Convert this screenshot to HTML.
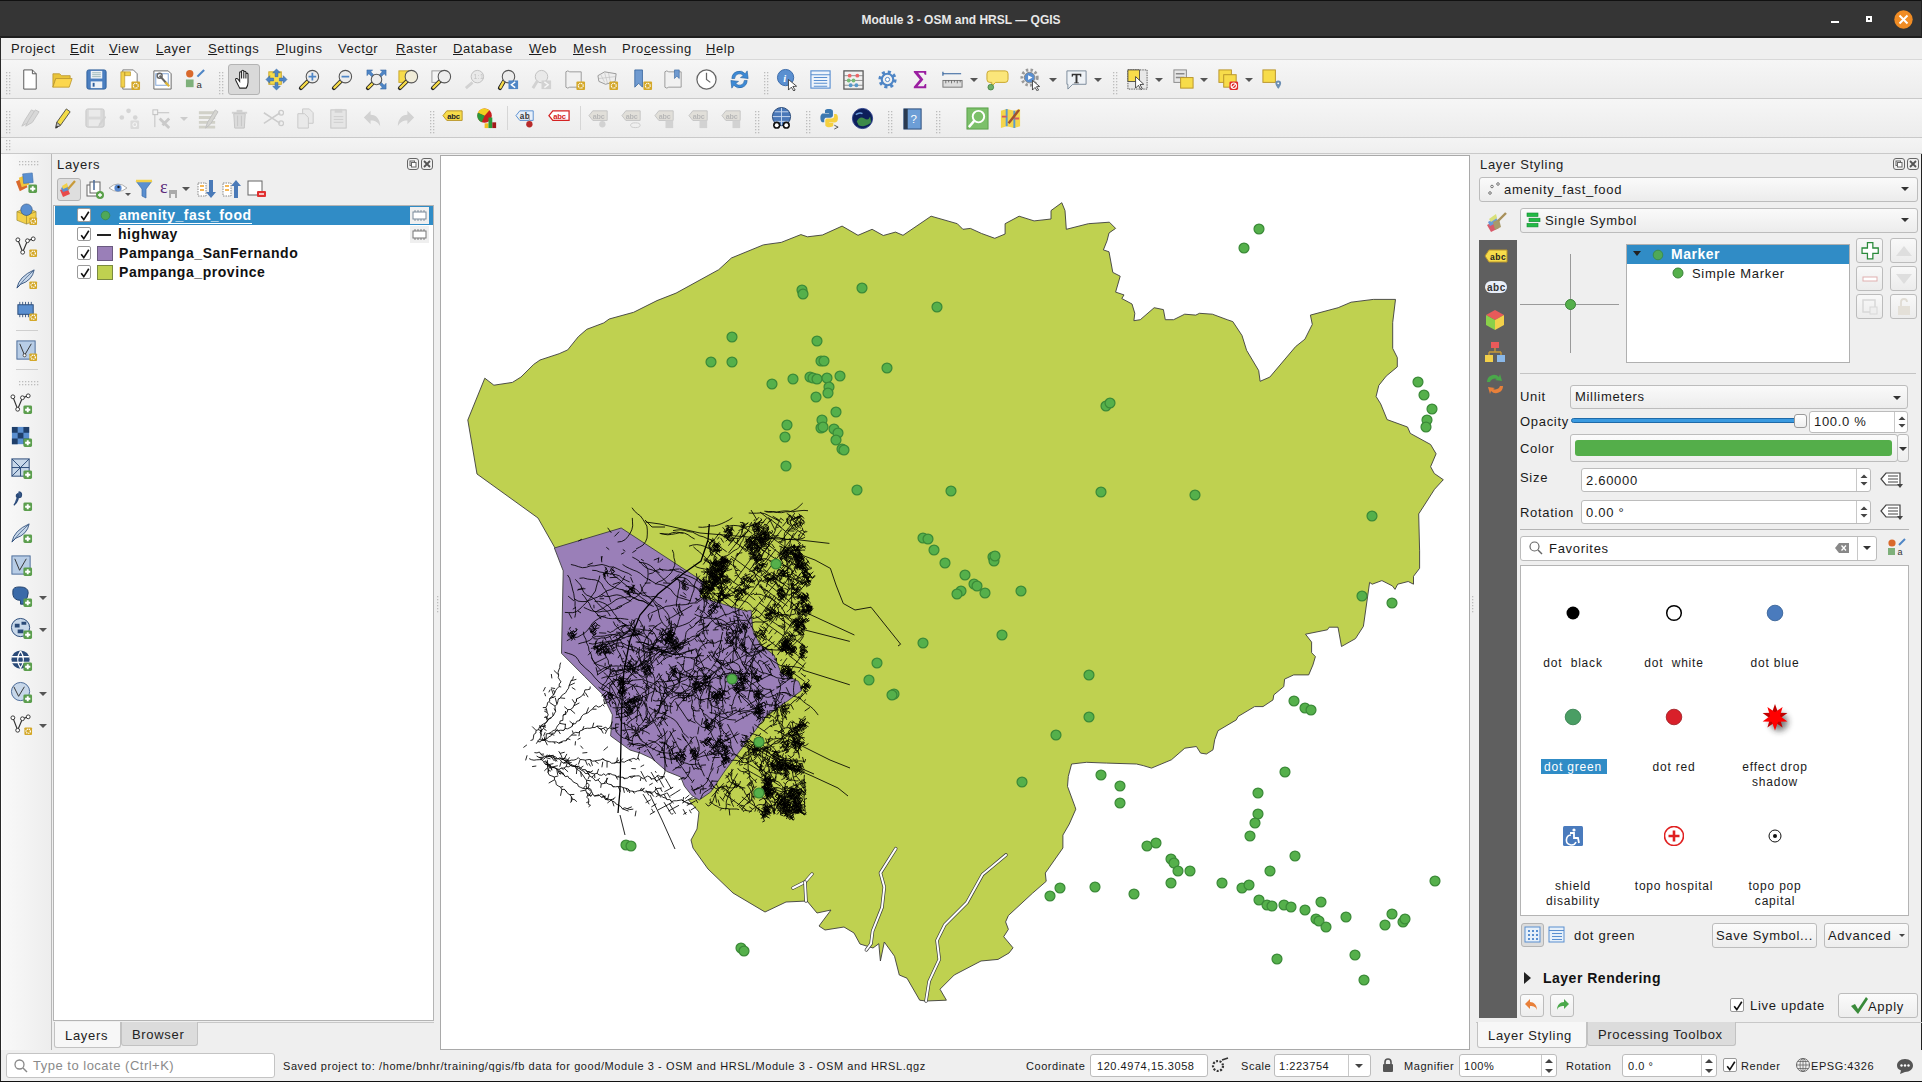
<!DOCTYPE html><html><head><meta charset="utf-8"><style>
*{box-sizing:border-box}
html,body{margin:0;padding:0}
body{width:1922px;height:1082px;position:relative;overflow:hidden;background:#efefef;font-family:"Liberation Sans",sans-serif;color:#1a1a1a;font-size:13px;letter-spacing:0.5px}
.a{position:absolute}
.t{position:absolute;white-space:pre;line-height:1}
#title{left:0;top:0;width:1922px;height:38px;background:#353535}
#title .tt{left:0;width:1922px;top:12px;text-align:center;color:#e6e6e6;font-weight:bold;font-size:13px;letter-spacing:0.3px}
#menubar{left:1px;top:38px;width:1921px;height:22px;background:#efefef;border-bottom:1px solid #d8d8d8}
.menu{top:7px;font-size:13px;color:#1c1c1c}
.menu u{text-decoration:none;border-bottom:1px solid #1c1c1c;padding-bottom:0}
.tb{left:1px;width:1921px;background:linear-gradient(#f6f6f6,#ececec);border-bottom:1px solid #c9c9c9}
.grip{width:6px;background-image:radial-gradient(circle at 1.2px 1.2px,#b4b4b4 0.9px,transparent 1.1px);background-size:3.5px 3px}
.btnp{background:#d9d9d9;border:1px solid #b4b4b4;border-radius:3px}
.panel-title{font-size:13px;color:#222}
.white{background:#fff;border:1px solid #b9b9b9}
.combo{background:linear-gradient(#fafafa,#ececec);border:1px solid #bcbcbc;border-radius:3px}
.spin{background:#fff;border:1px solid #bcbcbc;border-radius:3px}
.arrow{width:0;height:0;border-left:4px solid transparent;border-right:4px solid transparent;border-top:4px solid #3a3a3a}
.btn{background:linear-gradient(#fbfbfb,#ededed);border:1px solid #bcbcbc;border-radius:3px}
.chk{width:14px;height:14px;background:#fff;border:1px solid #9a9a9a;border-radius:2px}
.chk svg{position:absolute;left:1px;top:0px}
.tab{border:1px solid #c2c2c2;border-bottom:none;border-radius:3px 3px 0 0}
.st{font-size:11px;color:#1a1a1a;letter-spacing:0.55px}
</style></head><body><div class="a" id="title"></div><div class="t" style="left:0px;top:13.8px;font-size:12px;color:#e8e8e8;font-weight:bold;letter-spacing:0px;width:1922px;text-align:center;left:0;">Module 3 - OSM and HRSL — QGIS</div><div class="a " style="left:1831px;top:21px;width:8px;height:2px;background:#fff"></div><div class="a " style="left:1866px;top:16px;width:6px;height:6px;border:2px solid #fff"></div><svg class="a" style="left:1894px;top:10px;" width="19" height="19" viewBox="0 0 19 19"><circle cx="9.5" cy="9.5" r="9.2" fill="#f08c24"/><path d="M5.5 5.5 L13.5 13.5 M13.5 5.5 L5.5 13.5" stroke="#fff" stroke-width="2"/></svg><div class="a " style="left:0px;top:0px;width:1922px;height:1px;background:#111"></div><div class="a " style="left:0px;top:36px;width:1922px;height:2px;background:#1e1e1e"></div><div class="a " style="left:1921px;top:0px;width:1px;height:1082px;background:#222"></div><div class="a " style="left:0px;top:37px;width:1px;height:1045px;background:#2a2a2a"></div><div class="a " style="left:0px;top:1081px;width:1922px;height:1px;background:#111"></div><div class="a" id="menubar"></div><div class="t" style="left:11px;top:42.0px;font-size:13px;color:#1c1c1c;letter-spacing:0.55px;">Pro<u>j</u>ect</div><div class="t" style="left:70px;top:42.0px;font-size:13px;color:#1c1c1c;letter-spacing:0.55px;"><u>E</u>dit</div><div class="t" style="left:109px;top:42.0px;font-size:13px;color:#1c1c1c;letter-spacing:0.55px;"><u>V</u>iew</div><div class="t" style="left:156px;top:42.0px;font-size:13px;color:#1c1c1c;letter-spacing:0.55px;"><u>L</u>ayer</div><div class="t" style="left:208px;top:42.0px;font-size:13px;color:#1c1c1c;letter-spacing:0.55px;"><u>S</u>ettings</div><div class="t" style="left:276px;top:42.0px;font-size:13px;color:#1c1c1c;letter-spacing:0.55px;"><u>P</u>lugins</div><div class="t" style="left:338px;top:42.0px;font-size:13px;color:#1c1c1c;letter-spacing:0.55px;">Vect<u>o</u>r</div><div class="t" style="left:396px;top:42.0px;font-size:13px;color:#1c1c1c;letter-spacing:0.55px;"><u>R</u>aster</div><div class="t" style="left:453px;top:42.0px;font-size:13px;color:#1c1c1c;letter-spacing:0.55px;"><u>D</u>atabase</div><div class="t" style="left:529px;top:42.0px;font-size:13px;color:#1c1c1c;letter-spacing:0.55px;"><u>W</u>eb</div><div class="t" style="left:573px;top:42.0px;font-size:13px;color:#1c1c1c;letter-spacing:0.55px;"><u>M</u>esh</div><div class="t" style="left:622px;top:42.0px;font-size:13px;color:#1c1c1c;letter-spacing:0.55px;">Pro<u>c</u>essing</div><div class="t" style="left:706px;top:42.0px;font-size:13px;color:#1c1c1c;letter-spacing:0.55px;"><u>H</u>elp</div><div class="a tb" style="left:1px;top:60px;width:1921px;height:39px;"></div><div class="a tb" style="left:1px;top:99px;width:1921px;height:39px;"></div><div class="a tb" style="left:1px;top:138px;width:1921px;height:16px;background:linear-gradient(#f4f4f4,#efefef)"></div><svg class="a" style="left:6px;top:72px" width="6" height="24" fill="#bdbdbd"><rect x="0" y="0" width="1.3" height="1.3"/><rect x="3" y="0" width="1.3" height="1.3"/><rect x="0" y="3" width="1.3" height="1.3"/><rect x="3" y="3" width="1.3" height="1.3"/><rect x="0" y="6" width="1.3" height="1.3"/><rect x="3" y="6" width="1.3" height="1.3"/><rect x="0" y="9" width="1.3" height="1.3"/><rect x="3" y="9" width="1.3" height="1.3"/><rect x="0" y="12" width="1.3" height="1.3"/><rect x="3" y="12" width="1.3" height="1.3"/><rect x="0" y="15" width="1.3" height="1.3"/><rect x="3" y="15" width="1.3" height="1.3"/><rect x="0" y="18" width="1.3" height="1.3"/><rect x="3" y="18" width="1.3" height="1.3"/><rect x="0" y="21" width="1.3" height="1.3"/><rect x="3" y="21" width="1.3" height="1.3"/></svg><svg class="a" style="left:6px;top:111px" width="6" height="24" fill="#bdbdbd"><rect x="0" y="0" width="1.3" height="1.3"/><rect x="3" y="0" width="1.3" height="1.3"/><rect x="0" y="3" width="1.3" height="1.3"/><rect x="3" y="3" width="1.3" height="1.3"/><rect x="0" y="6" width="1.3" height="1.3"/><rect x="3" y="6" width="1.3" height="1.3"/><rect x="0" y="9" width="1.3" height="1.3"/><rect x="3" y="9" width="1.3" height="1.3"/><rect x="0" y="12" width="1.3" height="1.3"/><rect x="3" y="12" width="1.3" height="1.3"/><rect x="0" y="15" width="1.3" height="1.3"/><rect x="3" y="15" width="1.3" height="1.3"/><rect x="0" y="18" width="1.3" height="1.3"/><rect x="3" y="18" width="1.3" height="1.3"/><rect x="0" y="21" width="1.3" height="1.3"/><rect x="3" y="21" width="1.3" height="1.3"/></svg><svg class="a" style="left:6px;top:140px" width="6" height="13" fill="#bdbdbd"><rect x="0" y="0" width="1.3" height="1.3"/><rect x="3" y="0" width="1.3" height="1.3"/><rect x="0" y="3" width="1.3" height="1.3"/><rect x="3" y="3" width="1.3" height="1.3"/><rect x="0" y="6" width="1.3" height="1.3"/><rect x="3" y="6" width="1.3" height="1.3"/><rect x="0" y="9" width="1.3" height="1.3"/><rect x="3" y="9" width="1.3" height="1.3"/></svg><div class="a btnp" style="left:228px;top:64px;width:32px;height:31px;"></div><svg class="a" style="left:17.5px;top:67.5px;" width="23" height="23" viewBox="0 0 24 24"><path d="M6 2h9l4 4v16H6z" fill="#fff" stroke="#555" stroke-width="1"/><path d="M15 2v4h4" fill="none" stroke="#555"/></svg><svg class="a" style="left:50.5px;top:67.5px;" width="23" height="23" viewBox="0 0 24 24"><path d="M2 6h7l2 2h9v3H5L2 20z" fill="#e9c43a" stroke="#b8942a" stroke-width="0.8"/><path d="M5 11h17l-3 9H2z" fill="#fcd74e" stroke="#b8942a" stroke-width="0.8"/></svg><svg class="a" style="left:84.5px;top:67.5px;" width="23" height="23" viewBox="0 0 24 24"><rect x="2" y="2" width="20" height="20" rx="2" fill="#4b7fc0" stroke="#2e5f9c"/><rect x="6" y="3" width="12" height="8" fill="#eef2f7"/><path d="M7.5 5h9M7.5 7h9M7.5 9h9" stroke="#8aa" stroke-width="0.8"/><rect x="6" y="14" width="12" height="7" fill="#eef2f7"/><rect x="8" y="15.5" width="2" height="4" fill="#2e5f9c"/></svg><svg class="a" style="left:117.5px;top:67.5px;" width="23" height="23" viewBox="0 0 24 24"><path d="M5 2h11l4 4v16H5z" fill="#fff" stroke="#777"/><path d="M3 4h4v16H3zM7 4h6v4H7z" fill="#f2d14a" stroke="#b8942a" stroke-width="0.7"/><rect x="14" y="14" width="9" height="9" rx="1" fill="#d4a829"/><circle cx="18.5" cy="18.5" r="2.5200000000000005" fill="none" stroke="#fff" stroke-width="1.3" stroke-dasharray="1.2 0.8"/></svg><svg class="a" style="left:150.5px;top:67.5px;" width="23" height="23" viewBox="0 0 24 24"><path d="M3 3h15l3 3v16H3z" fill="#fff" stroke="#666"/><rect x="5" y="6" width="13" height="12" fill="none" stroke="#7fa4d6"/><path d="M9 8 L17 17" stroke="#666" stroke-width="2.2"/><circle cx="9" cy="8" r="2.6" fill="none" stroke="#666" stroke-width="1.5"/><path d="M15 15l4 4" stroke="#e0b83a" stroke-width="2.4"/></svg><svg class="a" style="left:183.5px;top:67.5px;" width="23" height="23" viewBox="0 0 24 24"><circle cx="6" cy="6" r="3.8" fill="#d9692c"/><path d="M14 9 L21 2" stroke="#4f86c6" stroke-width="2.2"/><rect x="2" y="12" width="8" height="8" fill="#7eb07a"/><text x="13" y="21" font-size="10" font-family="Liberation Sans" fill="#333">a</text></svg><svg class="a" style="left:231.5px;top:67.5px;" width="23" height="23" viewBox="0 0 24 24"><path d="M8 21 L4 13 C3 11 5 10 6.5 12 L8 14 V5 C8 3.5 10 3.5 10 5 V11 V3.5 C10 2 12.3 2 12.3 3.5 V11 V4.5 C12.3 3 14.5 3 14.5 4.5 V11 V6.5 C14.5 5 16.7 5 16.7 6.5 V15 C16.7 18 15.5 20 14.8 21 Z" fill="#fff" stroke="#222" stroke-width="1.1"/></svg><svg class="a" style="left:264.5px;top:67.5px;" width="23" height="23" viewBox="0 0 24 24"><rect x="4" y="4" width="13" height="13" fill="#f7dc4a" stroke="#c8a52a"/><path d="M12 1l4 4h-2.5v4h-3V5H8zM12 23l4-4h-2.5v-4h-3v4H8zM1 12l4-4v2.5h4v3H5V16zM23 12l-4-4v2.5h-4v3h4V16z" fill="#4f86c6" stroke="#2f5f9a" stroke-width="0.5"/></svg><svg class="a" style="left:297.5px;top:67.5px;" width="23" height="23" viewBox="0 0 24 24"><path d="M10.45 13.55 L3 21" stroke="#222" stroke-width="4.2" stroke-linecap="round"/><path d="M9.8 14.2 L3.5 20.5" stroke="#f7dc4a" stroke-width="2.4" stroke-linecap="round"/><circle cx="15" cy="9" r="6.5" fill="#ececec" stroke="#555" stroke-width="1.1"/><path d="M11 9h8M15 5v8" stroke="#4f86c6" stroke-width="1.8"/></svg><svg class="a" style="left:330.5px;top:67.5px;" width="23" height="23" viewBox="0 0 24 24"><path d="M10.45 13.55 L3 21" stroke="#222" stroke-width="4.2" stroke-linecap="round"/><path d="M9.8 14.2 L3.5 20.5" stroke="#f7dc4a" stroke-width="2.4" stroke-linecap="round"/><circle cx="15" cy="9" r="6.5" fill="#ececec" stroke="#555" stroke-width="1.1"/><path d="M11 9h8" stroke="#4f86c6" stroke-width="1.8"/></svg><svg class="a" style="left:364.5px;top:67.5px;" width="23" height="23" viewBox="0 0 24 24"><path d="M2 2h6l-2 2 3 3-2 2-3-3-2 2zM22 2v6l-2-2-3 3-2-2 3-3-2-2zM22 22h-6l2-2-3-3 2-2 3 3 2-2z" fill="#4f86c6" stroke="#2f5f9a" stroke-width="0.5"/><path d="M8.15 15.85 L3 21" stroke="#222" stroke-width="4.2" stroke-linecap="round"/><path d="M7.6 16.4 L3.5 20.5" stroke="#f7dc4a" stroke-width="2.4" stroke-linecap="round"/><circle cx="12" cy="12" r="5.5" fill="#ececec" stroke="#555" stroke-width="1.1"/></svg><svg class="a" style="left:396.5px;top:67.5px;" width="23" height="23" viewBox="0 0 24 24"><rect x="2" y="3" width="10" height="12" fill="#f7dc4a" stroke="#c8a52a"/><path d="M10.45 13.55 L3 21" stroke="#222" stroke-width="4.2" stroke-linecap="round"/><path d="M9.8 14.2 L3.5 20.5" stroke="#f7dc4a" stroke-width="2.4" stroke-linecap="round"/><circle cx="15" cy="9" r="6.5" fill="#f0ecd8" stroke="#555" stroke-width="1.1"/></svg><svg class="a" style="left:429.5px;top:67.5px;" width="23" height="23" viewBox="0 0 24 24"><rect x="2" y="3" width="10" height="12" fill="#f4f4f4" stroke="#999"/><path d="M10.45 13.55 L3 21" stroke="#222" stroke-width="4.2" stroke-linecap="round"/><path d="M9.8 14.2 L3.5 20.5" stroke="#f7dc4a" stroke-width="2.4" stroke-linecap="round"/><circle cx="15" cy="9" r="6.5" fill="#eee" stroke="#555" stroke-width="1.1"/></svg><svg class="a" style="left:462.5px;top:67.5px;filter:brightness(0.9) contrast(1.15);" width="23" height="23" viewBox="0 0 24 24"><circle cx="15" cy="9" r="6.5" fill="#f4f4f4" stroke="#ccc"/><path d="M10 15L3 21" stroke="#ddd" stroke-width="3"/><text x="11" y="12" font-size="7" fill="#ccc" font-family="Liberation Sans">1:1</text></svg><svg class="a" style="left:496.5px;top:67.5px;" width="23" height="23" viewBox="0 0 24 24"><path d="M7.45 13.55 L3 21" stroke="#222" stroke-width="4.2" stroke-linecap="round"/><path d="M6.8 14.2 L3.5 20.5" stroke="#f7dc4a" stroke-width="2.4" stroke-linecap="round"/><circle cx="12" cy="9" r="6.5" fill="#ececec" stroke="#555" stroke-width="1.1"/><rect x="12" y="13" width="10" height="9" fill="#4f86c6"/><path d="M19 14.5 L15 17.5 L19 20.5" fill="none" stroke="#fff" stroke-width="1.5"/></svg><svg class="a" style="left:529.5px;top:67.5px;filter:brightness(0.9) contrast(1.15);" width="23" height="23" viewBox="0 0 24 24"><circle cx="12" cy="9" r="6.5" fill="#f4f4f4" stroke="#ccc"/><path d="M8 13L3 21" stroke="#ddd" stroke-width="3"/><rect x="12" y="13" width="10" height="9" fill="#ddd"/><path d="M15 14.5 L19 17.5 L15 20.5" fill="none" stroke="#fff" stroke-width="1.5"/></svg><svg class="a" style="left:562.5px;top:67.5px;" width="23" height="23" viewBox="0 0 24 24"><path d="M3 4 Q5 2 7 4 H19 V20 H7 Q5 22 3 20z" fill="#f1f1f1" stroke="#999"/><rect x="14" y="14" width="9" height="9" rx="1" fill="#d4a829"/><circle cx="18.5" cy="18.5" r="2.5200000000000005" fill="none" stroke="#fff" stroke-width="1.3" stroke-dasharray="1.2 0.8"/></svg><svg class="a" style="left:595.5px;top:67.5px;" width="23" height="23" viewBox="0 0 24 24"><path d="M2 8 L9 4 L21 6 L20 14 L10 17 L3 14z" fill="#eee" stroke="#999"/><path d="M5 7l4 8M9 5l3 11M13 5l2 10M3 11l17-2" stroke="#bbb" stroke-width="0.6"/><rect x="14" y="14" width="9" height="9" rx="1" fill="#d4a829"/><circle cx="18.5" cy="18.5" r="2.5200000000000005" fill="none" stroke="#fff" stroke-width="1.3" stroke-dasharray="1.2 0.8"/></svg><svg class="a" style="left:629.5px;top:67.5px;" width="23" height="23" viewBox="0 0 24 24"><path d="M5 2h8v18l-4-4-4 4z" fill="#6f9ad0" stroke="#2f5f9a" stroke-width="0.8"/><rect x="14" y="14" width="9" height="9" rx="1" fill="#d4a829"/><circle cx="18.5" cy="18.5" r="2.5200000000000005" fill="none" stroke="#fff" stroke-width="1.3" stroke-dasharray="1.2 0.8"/></svg><svg class="a" style="left:661.5px;top:67.5px;" width="23" height="23" viewBox="0 0 24 24"><path d="M3 4 Q5 2 7 4 H20 V20 H7 Q5 22 3 20z" fill="#f1f1f1" stroke="#999"/><path d="M13 2h5v9l-2.5-2.5L13 11z" fill="#6f9ad0" stroke="#2f5f9a" stroke-width="0.6"/></svg><svg class="a" style="left:694.5px;top:67.5px;" width="23" height="23" viewBox="0 0 24 24"><circle cx="12" cy="12" r="10" fill="#fff" stroke="#666" stroke-width="1.3"/><path d="M12 5v7l4 3" fill="none" stroke="#666" stroke-width="1.3"/></svg><svg class="a" style="left:727.5px;top:67.5px;" width="23" height="23" viewBox="0 0 24 24"><path d="M4 11 A8 8 0 0 1 18 6 L20 3 L21 11 L13 10 L16 8 A5 5 0 0 0 7 11z" fill="#3d8ad6" stroke="#1f5c9c" stroke-width="0.6"/><path d="M20 13 A8 8 0 0 1 6 18 L4 21 L3 13 L11 14 L8 16 A5 5 0 0 0 17 13z" fill="#3d8ad6" stroke="#1f5c9c" stroke-width="0.6"/></svg><svg class="a" style="left:775.5px;top:67.5px;" width="23" height="23" viewBox="0 0 24 24"><circle cx="10" cy="10" r="8.5" fill="#5a8fd0" stroke="#3a6aa8"/><text x="7.5" y="15" font-size="11" font-style="italic" font-weight="bold" fill="#fff" font-family="Liberation Serif">i</text><path d="M13 12 L13 23 L16 20 L18.5 24 L20 23 L17.6 19.3 L21.5 19z" fill="#fff" stroke="#333" stroke-width="0.9"/></svg><svg class="a" style="left:808.5px;top:67.5px;" width="23" height="23" viewBox="0 0 24 24"><rect x="2" y="3" width="20" height="18" fill="#eef4fb" stroke="#5a8fd0" stroke-width="1.2"/><path d="M2 7h20M5 10h14M5 13h14M5 16h14M5 19h14" stroke="#5a8fd0" stroke-width="1.1"/></svg><svg class="a" style="left:841.5px;top:67.5px;" width="23" height="23" viewBox="0 0 24 24"><rect x="2" y="3" width="20" height="19" fill="none" stroke="#555" stroke-width="1.3"/><path d="M2 8h20M2 13h20M2 18h20" stroke="#777" stroke-width="0.8"/><circle cx="8" cy="8" r="2" fill="#e66" /><circle cx="16" cy="8" r="2" fill="#e66"/><circle cx="7" cy="13" r="2" fill="#7b7"/><circle cx="12" cy="13" r="2" fill="#7b7"/><circle cx="9" cy="18" r="2" fill="#59c"/><circle cx="15" cy="18" r="2" fill="#59c"/></svg><svg class="a" style="left:875.5px;top:67.5px;" width="23" height="23" viewBox="0 0 24 24"><circle cx="12" cy="12" r="7.5" fill="none" stroke="#4f86c6" stroke-width="4" stroke-dasharray="3 2.9"/><circle cx="12" cy="12" r="6" fill="none" stroke="#4f86c6" stroke-width="2.2"/><circle cx="12" cy="12" r="2.2" fill="#fff" stroke="#4f86c6"/></svg><svg class="a" style="left:908.5px;top:67.5px;" width="23" height="23" viewBox="0 0 24 24"><path d="M5 3h13v4h-1.5l-1-2H9.5l5.5 7-6 7h6.5l1.2-2.2H18V21H5v-1.5l6.3-7.5L5 4.5z" fill="#9b1fa1"/></svg><svg class="a" style="left:940.5px;top:67.5px;" width="23" height="23" viewBox="0 0 24 24"><path d="M2 6h19M2 4v4" stroke="#2f5f9a" stroke-width="1.2"/><rect x="2" y="13" width="20" height="7" fill="#ddd" stroke="#777"/><path d="M5 13v3M8 13v2M11 13v3M14 13v2M17 13v3M20 13v2" stroke="#555" stroke-width="0.8"/></svg><svg class="a" style="left:985.5px;top:67.5px;" width="23" height="23" viewBox="0 0 24 24"><path d="M4 3h16a3 3 0 0 1 3 3v6a3 3 0 0 1-3 3H10l-4 4v-4H4a3 3 0 0 1-3-3V6a3 3 0 0 1 3-3z" fill="#fbe67a" stroke="#c8a52a"/><circle cx="5" cy="20" r="3" fill="#6fae6a" stroke="#3a7a3a" stroke-width="0.7"/></svg><svg class="a" style="left:1019.5px;top:67.5px;" width="23" height="23" viewBox="0 0 24 24"><circle cx="10" cy="10" r="8" fill="none" stroke="#999" stroke-width="3" stroke-dasharray="2.5 2.3"/><circle cx="10" cy="10" r="5.5" fill="#5a8fd0" stroke="#888"/><path d="M8.5 7.5 L13 10 L8.5 12.5z" fill="#fff"/><path d="M13 13 L13 23 L15.7 20.3 L18 24 L19.4 23 L17.2 19.5 L20.5 19.3z" fill="#fff" stroke="#333" stroke-width="0.9"/></svg><svg class="a" style="left:1064.5px;top:67.5px;" width="23" height="23" viewBox="0 0 24 24"><path d="M2 3h20v14H8l-5 5v-5H2z" fill="#eef2f6" stroke="#7a8a9a"/><path d="M7 6h10v3h-1l-.5-1.5h-2.5v7.5h1.5v1H9.5v-1H11V7.5H8.5L8 9H7z" fill="#333"/></svg><svg class="a" style="left:1125.5px;top:67.5px;" width="23" height="23" viewBox="0 0 24 24"><rect x="2" y="2" width="20" height="20" fill="#e8e8e8" stroke="#333" stroke-width="0.8" stroke-dasharray="1.5 1"/><rect x="2" y="2" width="12" height="12" fill="#f7dc4a" stroke="#333" stroke-width="0.8"/><path d="M10 9 L10 21 L13 18 L15.5 22.5 L17 21.6 L14.6 17.3 L18.5 17z" fill="#fff" stroke="#333" stroke-width="0.9"/></svg><svg class="a" style="left:1171.5px;top:67.5px;" width="23" height="23" viewBox="0 0 24 24"><rect x="2" y="2" width="13" height="13" fill="#e6e6e6" stroke="#888"/><path d="M4 6h9M4 10h9" stroke="#888" stroke-width="1.6"/><rect x="9" y="10" width="13" height="11" fill="#f7dc4a" stroke="#b8942a"/></svg><svg class="a" style="left:1216.5px;top:67.5px;" width="23" height="23" viewBox="0 0 24 24"><rect x="2" y="2" width="13" height="13" fill="#f7dc4a" stroke="#b8942a"/><rect x="7" y="7" width="13" height="13" fill="#f7dc4a" stroke="#b8942a"/><rect x="13" y="14" width="9" height="9" rx="1.5" fill="#e02a2a"/><circle cx="17.5" cy="18.5" r="2.8" fill="none" stroke="#fff" stroke-width="1.1"/><path d="M15.5 20.5l4-4" stroke="#fff" stroke-width="1.1"/></svg><svg class="a" style="left:1260.5px;top:67.5px;" width="23" height="23" viewBox="0 0 24 24"><rect x="2" y="2" width="13" height="13" fill="#f7dc4a" stroke="#b8942a"/><path d="M18 13a3 3 0 0 1 3 3c0 2-3 6-3 6s-3-4-3-6a3 3 0 0 1 3-3z" fill="#6d8fb3"/><circle cx="18" cy="16" r="1" fill="#fff"/></svg><svg class="a" style="left:219px;top:72px" width="6" height="24" fill="#bdbdbd"><rect x="0" y="0" width="1.3" height="1.3"/><rect x="3" y="0" width="1.3" height="1.3"/><rect x="0" y="3" width="1.3" height="1.3"/><rect x="3" y="3" width="1.3" height="1.3"/><rect x="0" y="6" width="1.3" height="1.3"/><rect x="3" y="6" width="1.3" height="1.3"/><rect x="0" y="9" width="1.3" height="1.3"/><rect x="3" y="9" width="1.3" height="1.3"/><rect x="0" y="12" width="1.3" height="1.3"/><rect x="3" y="12" width="1.3" height="1.3"/><rect x="0" y="15" width="1.3" height="1.3"/><rect x="3" y="15" width="1.3" height="1.3"/><rect x="0" y="18" width="1.3" height="1.3"/><rect x="3" y="18" width="1.3" height="1.3"/><rect x="0" y="21" width="1.3" height="1.3"/><rect x="3" y="21" width="1.3" height="1.3"/></svg><svg class="a" style="left:764px;top:72px" width="6" height="24" fill="#bdbdbd"><rect x="0" y="0" width="1.3" height="1.3"/><rect x="3" y="0" width="1.3" height="1.3"/><rect x="0" y="3" width="1.3" height="1.3"/><rect x="3" y="3" width="1.3" height="1.3"/><rect x="0" y="6" width="1.3" height="1.3"/><rect x="3" y="6" width="1.3" height="1.3"/><rect x="0" y="9" width="1.3" height="1.3"/><rect x="3" y="9" width="1.3" height="1.3"/><rect x="0" y="12" width="1.3" height="1.3"/><rect x="3" y="12" width="1.3" height="1.3"/><rect x="0" y="15" width="1.3" height="1.3"/><rect x="3" y="15" width="1.3" height="1.3"/><rect x="0" y="18" width="1.3" height="1.3"/><rect x="3" y="18" width="1.3" height="1.3"/><rect x="0" y="21" width="1.3" height="1.3"/><rect x="3" y="21" width="1.3" height="1.3"/></svg><svg class="a" style="left:1113px;top:72px" width="6" height="24" fill="#bdbdbd"><rect x="0" y="0" width="1.3" height="1.3"/><rect x="3" y="0" width="1.3" height="1.3"/><rect x="0" y="3" width="1.3" height="1.3"/><rect x="3" y="3" width="1.3" height="1.3"/><rect x="0" y="6" width="1.3" height="1.3"/><rect x="3" y="6" width="1.3" height="1.3"/><rect x="0" y="9" width="1.3" height="1.3"/><rect x="3" y="9" width="1.3" height="1.3"/><rect x="0" y="12" width="1.3" height="1.3"/><rect x="3" y="12" width="1.3" height="1.3"/><rect x="0" y="15" width="1.3" height="1.3"/><rect x="3" y="15" width="1.3" height="1.3"/><rect x="0" y="18" width="1.3" height="1.3"/><rect x="3" y="18" width="1.3" height="1.3"/><rect x="0" y="21" width="1.3" height="1.3"/><rect x="3" y="21" width="1.3" height="1.3"/></svg><div class="a" style="left:970px;top:78px;width:0;height:0;border-left:4px solid transparent;border-right:4px solid transparent;border-top:4px solid #555"></div><div class="a" style="left:1049px;top:78px;width:0;height:0;border-left:4px solid transparent;border-right:4px solid transparent;border-top:4px solid #555"></div><div class="a" style="left:1094px;top:78px;width:0;height:0;border-left:4px solid transparent;border-right:4px solid transparent;border-top:4px solid #555"></div><div class="a" style="left:1155px;top:78px;width:0;height:0;border-left:4px solid transparent;border-right:4px solid transparent;border-top:4px solid #555"></div><div class="a" style="left:1200px;top:78px;width:0;height:0;border-left:4px solid transparent;border-right:4px solid transparent;border-top:4px solid #555"></div><div class="a" style="left:1245px;top:78px;width:0;height:0;border-left:4px solid transparent;border-right:4px solid transparent;border-top:4px solid #555"></div><svg class="a" style="left:17.5px;top:106.5px;filter:brightness(0.9) contrast(1.15);" width="23" height="23" viewBox="0 0 24 24"><path d="M4 20 L7 14 L14 3 L18 5 L11 16z" fill="#e3e3e3" stroke="#d0d0d0"/><path d="M8 20 L11 14 L18 3 L22 5 L15 16z" fill="#e3e3e3" stroke="#d0d0d0"/></svg><svg class="a" style="left:50.5px;top:106.5px;" width="23" height="23" viewBox="0 0 24 24"><path d="M5 22 L6 16 L16 2 L20 5 L10 19z" fill="#f3dc46" stroke="#444" stroke-width="0.9"/><path d="M5 22 L6 16 L10 19z" fill="#bbb" stroke="#444" stroke-width="0.8"/><path d="M5 22l1-2.5 1.5 1z" fill="#222"/></svg><svg class="a" style="left:83.5px;top:106.5px;filter:brightness(0.9) contrast(1.15);" width="23" height="23" viewBox="0 0 24 24"><rect x="2" y="2" width="19" height="19" rx="2" fill="#e4e4e4" stroke="#d4d4d4"/><rect x="5" y="3" width="12" height="7" fill="#f5f5f5"/><rect x="5" y="13" width="12" height="7" fill="#f5f5f5"/><path d="M14 22 L16 17 L22 9 L23 11 L17 19z" fill="#ddd"/></svg><svg class="a" style="left:117.5px;top:106.5px;filter:brightness(0.9) contrast(1.15);" width="23" height="23" viewBox="0 0 24 24"><circle cx="11" cy="4" r="2.4" fill="#e0e0e0"/><circle cx="4" cy="11" r="2.4" fill="#e0e0e0"/><circle cx="18" cy="11" r="2.4" fill="#e0e0e0"/><rect x="13" y="14" width="9" height="9" rx="1" fill="#e6e6e6"/><circle cx="17.5" cy="18.5" r="2" fill="none" stroke="#fff" stroke-width="1.1"/></svg><svg class="a" style="left:150.5px;top:106.5px;filter:brightness(0.9) contrast(1.15);" width="23" height="23" viewBox="0 0 24 24"><rect x="2" y="3" width="5" height="5" fill="none" stroke="#ccc"/><path d="M4 8v13M7 6h12" stroke="#ccc"/><path d="M9 12l10 10M19 12l-7 7" stroke="#d6d6d6" stroke-width="3"/></svg><svg class="a" style="left:195.5px;top:106.5px;filter:brightness(0.9) contrast(1.15);" width="23" height="23" viewBox="0 0 24 24"><path d="M3 6h17M3 11h17M3 16h17M3 21h17" stroke="#dcdcd4" stroke-width="3"/><path d="M10 22 L12 16 L20 3 L23 5 L15 18z" fill="#e0e0dc" stroke="#ccc"/></svg><svg class="a" style="left:227.5px;top:106.5px;filter:brightness(0.9) contrast(1.15);" width="23" height="23" viewBox="0 0 24 24"><path d="M4 6h16" stroke="#ddd" stroke-width="2"/><path d="M9 3h6v3H9z" fill="#ddd"/><path d="M6 7h12l-1 15H7z" fill="#e6e6e6" stroke="#d0d0d0"/><path d="M10 9v11M14 9v11" stroke="#d2d2d2"/></svg><svg class="a" style="left:260.5px;top:106.5px;filter:brightness(0.9) contrast(1.15);" width="23" height="23" viewBox="0 0 24 24"><path d="M3 6 L20 17M3 17 L20 6" stroke="#d8d8d8" stroke-width="1.6"/><circle cx="21" cy="6" r="2.5" fill="none" stroke="#d8d8d8" stroke-width="1.3"/><circle cx="21" cy="17" r="2.5" fill="none" stroke="#d8d8d8" stroke-width="1.3"/></svg><svg class="a" style="left:293.5px;top:106.5px;filter:brightness(0.9) contrast(1.15);" width="23" height="23" viewBox="0 0 24 24"><path d="M9 2h7l4 4v11H9z" fill="#f4f4f4" stroke="#d4d4d4"/><path d="M4 7h7l4 4v11H4z" fill="#f4f4f4" stroke="#d4d4d4"/></svg><svg class="a" style="left:326.5px;top:106.5px;filter:brightness(0.9) contrast(1.15);" width="23" height="23" viewBox="0 0 24 24"><rect x="4" y="3" width="16" height="19" fill="#f0f0f0" stroke="#d0d0d0"/><rect x="8" y="2" width="8" height="4" fill="#ddd"/><path d="M7 10h10M7 13h10M7 16h10" stroke="#d8d8d8"/></svg><svg class="a" style="left:360.5px;top:106.5px;filter:brightness(0.9) contrast(1.15);" width="23" height="23" viewBox="0 0 24 24"><path d="M10 4 L3 11 L10 18 V14 C15 14 18 16 20 20 C20 13 16 8 10 8z" fill="#dddddd"/></svg><svg class="a" style="left:393.5px;top:106.5px;filter:brightness(0.9) contrast(1.15);" width="23" height="23" viewBox="0 0 24 24"><path d="M14 4 L21 11 L14 18 V14 C9 14 6 16 4 20 C4 13 8 8 14 8z" fill="#dddddd"/></svg><svg class="a" style="left:441.5px;top:106.5px;" width="23" height="23" viewBox="0 0 24 24"><path d="M1 9 L5 4 H21 V14 H5z" fill="#f7dc4a" stroke="#b8942a"/><text x="5.5" y="12.2" font-size="8" font-weight="bold" fill="#222" font-family="Liberation Sans" letter-spacing="-0.2">abc</text></svg><svg class="a" style="left:475.5px;top:106.5px;" width="23" height="23" viewBox="0 0 24 24"><circle cx="9" cy="9" r="7.5" fill="#c81e1e"/><path d="M9 9 L2 6 A7.5 7.5 0 0 1 14 3.5z" fill="#f2d020"/><path d="M9 9 L2 6 A7.5 7.5 0 0 0 6 16z" fill="#2a9a3a"/><rect x="9" y="17" width="4" height="5" fill="#f2c020"/><rect x="13" y="11" width="4" height="11" fill="#2a9a3a"/><rect x="17" y="16" width="4" height="6" fill="#a01818"/></svg><svg class="a" style="left:514.5px;top:106.5px;" width="23" height="23" viewBox="0 0 24 24"><path d="M1 9 L5 4 H19 V14 H5z" fill="#e8f0fa" stroke="#5a8fd0"/><text x="5" y="12.5" font-size="8.5" font-weight="bold" fill="#333" font-family="Liberation Sans">ab</text><path d="M15 8v8" stroke="#aaa" stroke-width="1.2"/><circle cx="15" cy="18" r="3.3" fill="#b82a2a"/></svg><svg class="a" style="left:547.5px;top:106.5px;" width="23" height="23" viewBox="0 0 24 24"><path d="M1 9 L5 4 H22 V14 H5z" fill="#fff" stroke="#d42222" stroke-width="1.3"/><text x="5.5" y="12.3" font-size="8" font-weight="bold" fill="#d42222" font-family="Liberation Sans" letter-spacing="-0.2">abc</text></svg><svg class="a" style="left:587.5px;top:106.5px;filter:brightness(0.9) contrast(1.15);" width="23" height="23" viewBox="0 0 24 24"><path d="M1 9 L5 4 H20 V14 H5z" fill="#eceae4" stroke="#d0d0d0"/><text x="5" y="12.3" font-size="7.5" font-weight="bold" fill="#c4c4c4" font-family="Liberation Sans" letter-spacing="-0.2">abc</text><circle cx="15" cy="18" r="3.3" fill="#ddd"/></svg><svg class="a" style="left:620.5px;top:106.5px;filter:brightness(0.9) contrast(1.15);" width="23" height="23" viewBox="0 0 24 24"><path d="M1 9 L5 4 H20 V14 H5z" fill="#eceae4" stroke="#d0d0d0"/><text x="5" y="12.3" font-size="7.5" font-weight="bold" fill="#c4c4c4" font-family="Liberation Sans" letter-spacing="-0.2">abc</text><ellipse cx="15" cy="19" rx="5" ry="2.5" fill="none" stroke="#d8d8d8"/></svg><svg class="a" style="left:653.5px;top:106.5px;filter:brightness(0.9) contrast(1.15);" width="23" height="23" viewBox="0 0 24 24"><path d="M1 9 L5 4 H20 V14 H5z" fill="#eceae4" stroke="#d0d0d0"/><text x="5" y="12.3" font-size="7.5" font-weight="bold" fill="#c4c4c4" font-family="Liberation Sans" letter-spacing="-0.2">abc</text><rect x="12" y="14" width="8" height="8" fill="#ddd"/></svg><svg class="a" style="left:687.5px;top:106.5px;filter:brightness(0.9) contrast(1.15);" width="23" height="23" viewBox="0 0 24 24"><path d="M1 9 L5 4 H20 V14 H5z" fill="#eceae4" stroke="#d0d0d0"/><text x="5" y="12.3" font-size="7.5" font-weight="bold" fill="#c4c4c4" font-family="Liberation Sans" letter-spacing="-0.2">abc</text><rect x="12" y="14" width="8" height="8" fill="#ddd"/></svg><svg class="a" style="left:720.5px;top:106.5px;filter:brightness(0.9) contrast(1.15);" width="23" height="23" viewBox="0 0 24 24"><path d="M1 9 L5 4 H20 V14 H5z" fill="#eceae4" stroke="#d0d0d0"/><text x="5" y="12.3" font-size="7.5" font-weight="bold" fill="#c4c4c4" font-family="Liberation Sans" letter-spacing="-0.2">abc</text><rect x="12" y="14" width="8" height="8" fill="#ddd"/></svg><svg class="a" style="left:769.5px;top:106.5px;" width="23" height="23" viewBox="0 0 24 24"><circle cx="12" cy="10" r="9.5" fill="#4a78b8" stroke="#2a4a78"/><path d="M3 10h18M12 1v18M5 5h14M5 15h14" stroke="#c8d8ee" stroke-width="1"/><circle cx="7" cy="19" r="3.8" fill="#111"/><circle cx="17" cy="19" r="3.8" fill="#111"/><circle cx="7" cy="19" r="2" fill="#fff"/><circle cx="17" cy="19" r="2" fill="#fff"/></svg><svg class="a" style="left:817.5px;top:106.5px;" width="23" height="23" viewBox="0 0 24 24"><path d="M11.5 2C7 2 7.3 4 7.3 4v2.2h4.3v.7H5.4S2.5 6.6 2.5 11.4c0 4.6 2.5 4.4 2.5 4.4h1.5v-2.2s-.1-2.5 2.5-2.5h4.2s2.4 0 2.4-2.4V4.6S16 2 11.5 2z" fill="#3b78b0"/><path d="M11.8 21c4.5 0 4.2-2 4.2-2v-2.2h-4.3v-.7h6.2s2.9.3 2.9-4.5c0-4.6-2.5-4.4-2.5-4.4h-1.5v2.2s.1 2.5-2.5 2.5H10s-2.4 0-2.4 2.4v4.1S7.3 21 11.8 21z" fill="#f5d040"/><path d="M17 19l4 2-4 2" fill="none" stroke="#444" stroke-width="0.9"/></svg><svg class="a" style="left:850.5px;top:106.5px;" width="23" height="23" viewBox="0 0 24 24"><circle cx="12" cy="12" r="10.5" fill="#0d1f5a" stroke="#2a3f8a"/><path d="M6 15 Q9 9 14 12 Q18 15 20 10 L21 16 Q15 22 8 19z" fill="#3d8a4a"/><path d="M5 8 Q9 5 12 7" stroke="#6a9ad8" stroke-width="1.5" fill="none"/></svg><svg class="a" style="left:900.5px;top:106.5px;" width="23" height="23" viewBox="0 0 24 24"><rect x="3" y="2" width="18" height="21" fill="#6d9ed6" stroke="#2a4a78"/><rect x="3" y="2" width="4" height="21" fill="#2a3a50"/><text x="10" y="17" font-size="12" fill="#fff" font-family="Liberation Sans">?</text></svg><svg class="a" style="left:965.5px;top:106.5px;" width="23" height="23" viewBox="0 0 24 24"><rect x="1" y="1" width="22" height="22" fill="#7cc06a" stroke="#5aa04a"/><circle cx="13" cy="10" r="6" fill="none" stroke="#fff" stroke-width="2"/><path d="M8.5 14.5L3 21" stroke="#fff" stroke-width="2.5"/></svg><svg class="a" style="left:998.5px;top:106.5px;" width="23" height="23" viewBox="0 0 24 24"><path d="M2 4 L8 2 L16 4 L22 2 V20 L16 22 L8 20 L2 22z" fill="#f4d54a"/><path d="M8 2v18M16 4v18" stroke="#5a9ad0" stroke-width="2"/><path d="M3 10h5M16 12h5" stroke="#d85a5a" stroke-width="2"/><path d="M10 17 L21 3" stroke="#a0522d" stroke-width="2.5"/></svg><svg class="a" style="left:430px;top:111px" width="6" height="24" fill="#bdbdbd"><rect x="0" y="0" width="1.3" height="1.3"/><rect x="3" y="0" width="1.3" height="1.3"/><rect x="0" y="3" width="1.3" height="1.3"/><rect x="3" y="3" width="1.3" height="1.3"/><rect x="0" y="6" width="1.3" height="1.3"/><rect x="3" y="6" width="1.3" height="1.3"/><rect x="0" y="9" width="1.3" height="1.3"/><rect x="3" y="9" width="1.3" height="1.3"/><rect x="0" y="12" width="1.3" height="1.3"/><rect x="3" y="12" width="1.3" height="1.3"/><rect x="0" y="15" width="1.3" height="1.3"/><rect x="3" y="15" width="1.3" height="1.3"/><rect x="0" y="18" width="1.3" height="1.3"/><rect x="3" y="18" width="1.3" height="1.3"/><rect x="0" y="21" width="1.3" height="1.3"/><rect x="3" y="21" width="1.3" height="1.3"/></svg><svg class="a" style="left:755px;top:111px" width="6" height="24" fill="#bdbdbd"><rect x="0" y="0" width="1.3" height="1.3"/><rect x="3" y="0" width="1.3" height="1.3"/><rect x="0" y="3" width="1.3" height="1.3"/><rect x="3" y="3" width="1.3" height="1.3"/><rect x="0" y="6" width="1.3" height="1.3"/><rect x="3" y="6" width="1.3" height="1.3"/><rect x="0" y="9" width="1.3" height="1.3"/><rect x="3" y="9" width="1.3" height="1.3"/><rect x="0" y="12" width="1.3" height="1.3"/><rect x="3" y="12" width="1.3" height="1.3"/><rect x="0" y="15" width="1.3" height="1.3"/><rect x="3" y="15" width="1.3" height="1.3"/><rect x="0" y="18" width="1.3" height="1.3"/><rect x="3" y="18" width="1.3" height="1.3"/><rect x="0" y="21" width="1.3" height="1.3"/><rect x="3" y="21" width="1.3" height="1.3"/></svg><svg class="a" style="left:806px;top:111px" width="6" height="24" fill="#bdbdbd"><rect x="0" y="0" width="1.3" height="1.3"/><rect x="3" y="0" width="1.3" height="1.3"/><rect x="0" y="3" width="1.3" height="1.3"/><rect x="3" y="3" width="1.3" height="1.3"/><rect x="0" y="6" width="1.3" height="1.3"/><rect x="3" y="6" width="1.3" height="1.3"/><rect x="0" y="9" width="1.3" height="1.3"/><rect x="3" y="9" width="1.3" height="1.3"/><rect x="0" y="12" width="1.3" height="1.3"/><rect x="3" y="12" width="1.3" height="1.3"/><rect x="0" y="15" width="1.3" height="1.3"/><rect x="3" y="15" width="1.3" height="1.3"/><rect x="0" y="18" width="1.3" height="1.3"/><rect x="3" y="18" width="1.3" height="1.3"/><rect x="0" y="21" width="1.3" height="1.3"/><rect x="3" y="21" width="1.3" height="1.3"/></svg><svg class="a" style="left:888px;top:111px" width="6" height="24" fill="#bdbdbd"><rect x="0" y="0" width="1.3" height="1.3"/><rect x="3" y="0" width="1.3" height="1.3"/><rect x="0" y="3" width="1.3" height="1.3"/><rect x="3" y="3" width="1.3" height="1.3"/><rect x="0" y="6" width="1.3" height="1.3"/><rect x="3" y="6" width="1.3" height="1.3"/><rect x="0" y="9" width="1.3" height="1.3"/><rect x="3" y="9" width="1.3" height="1.3"/><rect x="0" y="12" width="1.3" height="1.3"/><rect x="3" y="12" width="1.3" height="1.3"/><rect x="0" y="15" width="1.3" height="1.3"/><rect x="3" y="15" width="1.3" height="1.3"/><rect x="0" y="18" width="1.3" height="1.3"/><rect x="3" y="18" width="1.3" height="1.3"/><rect x="0" y="21" width="1.3" height="1.3"/><rect x="3" y="21" width="1.3" height="1.3"/></svg><svg class="a" style="left:936px;top:111px" width="6" height="24" fill="#bdbdbd"><rect x="0" y="0" width="1.3" height="1.3"/><rect x="3" y="0" width="1.3" height="1.3"/><rect x="0" y="3" width="1.3" height="1.3"/><rect x="3" y="3" width="1.3" height="1.3"/><rect x="0" y="6" width="1.3" height="1.3"/><rect x="3" y="6" width="1.3" height="1.3"/><rect x="0" y="9" width="1.3" height="1.3"/><rect x="3" y="9" width="1.3" height="1.3"/><rect x="0" y="12" width="1.3" height="1.3"/><rect x="3" y="12" width="1.3" height="1.3"/><rect x="0" y="15" width="1.3" height="1.3"/><rect x="3" y="15" width="1.3" height="1.3"/><rect x="0" y="18" width="1.3" height="1.3"/><rect x="3" y="18" width="1.3" height="1.3"/><rect x="0" y="21" width="1.3" height="1.3"/><rect x="3" y="21" width="1.3" height="1.3"/></svg><div class="a" style="left:180px;top:117px;width:0;height:0;border-left:4px solid transparent;border-right:4px solid transparent;border-top:4px solid #ccc"></div><div class="a " style="left:507px;top:106px;width:1px;height:24px;background:#d6d6d6"></div><div class="a " style="left:580px;top:106px;width:1px;height:24px;background:#d6d6d6"></div><svg id="map" width="1028" height="893" viewBox="441 156 1028 893" style="position:absolute;left:441px;top:156px;background:#fff" shape-rendering="geometricPrecision"><polygon points="467.8,420.0 484.8,378.2 493.9,385.2 512.4,382.4 520.9,377.1 533.7,364.4 540.0,360.0 559.2,353.7 567.7,349.9 578.3,336.7 586.8,329.3 603.8,322.9 609.2,319.0 633.6,312.3 657.0,300.6 676.1,293.1 718.7,269.7 731.4,258.0 763.3,244.9 770.0,243.9 781.2,242.4 800.9,234.6 807.5,236.8 822.4,235.0 842.1,226.1 858.0,235.3 872.1,229.3 883.3,235.5 895.5,232.1 903.0,235.3 931.1,216.2 957.3,223.7 962.9,229.3 970.4,228.4 981.6,233.5 994.8,238.3 1005.1,234.0 1005.1,223.7 1019.1,216.2 1034.1,220.9 1051.0,219.0 1051.0,210.6 1061.8,202.7 1065.0,210.6 1066.3,229.3 1088.4,223.7 1109.4,222.2 1115.6,228.4 1109.0,233.0 1107.1,240.6 1103.4,249.9 1109.0,251.8 1112.8,272.4 1120.2,276.2 1115.6,292.1 1124.0,294.9 1121.8,298.5 1132.0,304.0 1134.8,313.3 1133.9,320.7 1140.3,319.7 1154.2,307.7 1163.4,309.6 1165.3,319.7 1173.6,319.7 1184.7,314.2 1195.8,315.1 1199.5,313.3 1212.4,314.2 1227.2,319.7 1232.8,321.6 1242.0,335.5 1246.6,350.3 1258.7,370.6 1260.1,381.3 1269.8,377.1 1295.6,346.6 1304.9,339.2 1312.3,324.4 1310.4,315.1 1338.2,307.7 1351.1,302.2 1373.3,299.4 1395.5,299.4 1392.7,322.5 1392.7,348.4 1397.3,357.6 1397.3,366.9 1386.2,376.1 1378.8,385.4 1376.1,396.5 1380.7,403.9 1387.1,419.6 1407.5,427.0 1410.3,433.4 1430.6,444.5 1436.1,453.8 1430.6,466.7 1434.3,473.5 1443.3,479.7 1434.5,489.3 1418.7,513.9 1419.6,550.8 1419.6,568.3 1413.5,576.3 1413.5,584.2 1408.2,581.5 1397.7,584.2 1395.0,589.4 1392.4,585.9 1381.9,580.6 1372.2,584.2 1369.6,582.4 1363.4,626.3 1355.5,638.6 1341.5,646.5 1338.0,627.2 1329.2,627.2 1327.4,629.8 1305.5,634.2 1311.6,642.1 1311.6,652.7 1315.4,656.6 1312.9,665.0 1308.7,674.9 1293.7,674.9 1284.6,679.1 1283.8,686.6 1273.8,694.9 1273.0,699.9 1263.0,706.6 1254.6,706.6 1238.0,716.5 1236.3,719.9 1218.0,730.7 1214.7,739.8 1213.0,749.8 1206.4,754.0 1200.6,753.1 1196.4,746.5 1184.8,748.2 1171.4,759.8 1151.5,768.1 1143.2,765.6 1136.5,764.0 1106.6,763.1 1086.6,762.3 1071.6,764.0 1068.3,776.4 1067.5,786.4 1074.9,806.4 1075.8,809.2 1069.3,824.0 1062.9,835.1 1062.9,848.0 1045.3,873.0 1046.2,881.3 1032.4,893.3 1008.4,915.5 1005.6,921.9 1008.4,929.3 1003.7,936.7 1013.0,947.8 1009.0,953.0 998.0,959.4 981.0,961.0 954.2,975.0 940.0,989.2 946.4,1000.2 926.0,1001.0 919.7,1000.2 907.0,978.2 899.3,975.0 894.5,956.2 884.3,942.0 880.4,961.0 878.8,943.7 873.0,948.0 860.0,944.0 854.0,933.0 844.0,927.0 825.0,930.0 819.0,926.0 831.0,910.0 817.0,913.0 807.0,901.0 786.0,902.0 765.0,912.0 733.0,893.0 708.0,869.0 693.0,848.0 691.0,840.0 697.0,829.0 699.0,812.0 688.5,800.0 697.0,798.0 690.0,785.0 670.0,765.0 645.0,745.0 620.0,735.0 616.0,712.0 610.0,698.0 590.0,676.0 570.0,652.0 568.0,585.0 559.0,552.0 555.0,548.0 538.0,518.0 477.0,474.0" fill="#bfd150" stroke="#3d3d3d" stroke-width="0.9"/><polyline points="895.8,848.6 880.4,873.0 884.3,887.1 882.0,907.5 872.6,931.1 871.0,943.7 866.3,950.0" fill="none" stroke="#3d3d3d" stroke-width="3.4" stroke-linejoin="round" stroke-linecap="round"/><polyline points="895.8,848.6 880.4,873.0 884.3,887.1 882.0,907.5 872.6,931.1 871.0,943.7 866.3,950.0" fill="none" stroke="#fff" stroke-width="2.0" stroke-linejoin="round" stroke-linecap="round"/><polyline points="1006.0,854.9 991.9,866.7 982.5,874.6 966.8,902.8 944.8,924.8 937.0,940.5 939.3,959.4 929.1,981.4 926.0,1001.0" fill="none" stroke="#3d3d3d" stroke-width="3.4" stroke-linejoin="round" stroke-linecap="round"/><polyline points="1006.0,854.9 991.9,866.7 982.5,874.6 966.8,902.8 944.8,924.8 937.0,940.5 939.3,959.4 929.1,981.4 926.0,1001.0" fill="none" stroke="#fff" stroke-width="2.0" stroke-linejoin="round" stroke-linecap="round"/><polyline points="793.0,888.0 805.0,882.0 812.0,874.0" fill="none" stroke="#3d3d3d" stroke-width="3.4" stroke-linejoin="round" stroke-linecap="round"/><polyline points="793.0,888.0 805.0,882.0 812.0,874.0" fill="none" stroke="#fff" stroke-width="2.0" stroke-linejoin="round" stroke-linecap="round"/><polyline points="805.0,882.0 806.0,901.0" fill="none" stroke="#3d3d3d" stroke-width="3.4" stroke-linejoin="round" stroke-linecap="round"/><polyline points="805.0,882.0 806.0,901.0" fill="none" stroke="#fff" stroke-width="2.0" stroke-linejoin="round" stroke-linecap="round"/><polygon points="554.4,548.0 621.2,528.0 703.7,582.0 700.2,597.1 745.9,611.2 751.1,610.1 752.9,630.5 760.0,644.5 774.0,655.0 781.0,672.6 798.6,681.4 802.0,690.2 788.0,700.7 767.0,714.8 745.9,742.9 724.8,771.0 710.7,792.0 699.2,800.0 691.8,795.5 684.4,786.2 680.7,777.0 666.8,771.4 652.0,758.5 640.0,753.0 630.0,750.0 610.6,735.9 612.4,714.8 601.9,693.7 584.3,676.2 561.5,653.3 563.2,570.8" fill="#9a7fb8" stroke="#3d3d3d" stroke-width="0.9"/><path d="M799.0 517.8l4.8 3.7M780.5 518.1l1.6 1.2 1.6 1.2M787.0 522.9l4.9 3.4 4.9 3.5 5 3.4 3.2 2.3M768.2 517.5l4.7 3.7 4.7 3.8 4.7 3.7 4.6 3.8 4.7 3.7 4.7 3.8 4.7 3.7M757.9 527.8l4.9 3.5 4.9 3.5 4.9 3.4 4.9 3.5 4.9 3.5 4.8 3.5 4.9 3.4 4.9 3.5 4.9 3.5M741.2 525.1l4.8 3.7 4.7 3.6 1.6 1.2M755.1 535.2l4.8 3.6 4.9 3.5 4.8 3.6 4.8 3.6 4.8 3.5 4.9 3.6 4.8 3.5 4.8 3.6 4.8 3.6 1.7 1.2M751.3 541.8l4.9 3.5 4.9 3.4 4.9 3.5 4.9 3.5 4.9 3.4 4.9 3.5 4.9 3.4 4.9 3.5M792.1 572.5l4.8 3.5 4.9 3.6 3.2 2.3M726.3 529.9l1.6 1.2M734.0 541.5l5 3.4 4.9 3.4 5 3.3 4.9 3.4 5 3.4M800.7 591.7l4.7 3.7M719.5 533.6l4.9 3.4 5 3.4M762.8 568.6l4.8 3.6 4.8 3.6 4.9 3.5 4.8 3.6 4.8 3.6 3.2 2.4M793.5 591.7l4.7 3.8 4.6 3.7M710.5 540.0l4.8 3.5 4.9 3.6 4.8 3.5 1.7 1.2M731.1 556.2l4.8 3.6 4.9 3.5 4.8 3.6 4.8 3.5 4.9 3.6 4.8 3.5 1.6 1.2M766.7 583.1l4.7 3.7 4.7 3.8 4.7 3.7 4.7 3.7 4.7 3.8 4.7 3.7 3.1 2.5M709.0 547.2l4.8 3.7 4.7 3.6 4.8 3.7 4.7 3.6 4.8 3.7 4.7 3.6 3.2 2.5M760.3 585.8l4.8 3.6 4.8 3.6 4.8 3.6 4.8 3.6 4.8 3.6 3.2 2.4M780.2 612.8l4.6 3.8 4.7 3.8 4.6 3.8 3.1 2.5M803.2 630.1l1.6 1.2M703.9 558.6l4.9 3.4 3.3 2.3M713.7 568.3l4.9 3.4 5 3.4 4.9 3.5 4.9 3.4 5 3.4 1.6 1.1M742.7 590.2l4.7 3.7 4.8 3.7 3.1 2.5M759.0 602.5l4.8 3.6 4.8 3.6 4.8 3.6 4.8 3.6 4.8 3.6 4.8 3.6 3.2 2.4M794.4 629.1l4.7 3.8 1.5 1.2M703.4 570.1l4.7 3.8 4.6 3.8 4.7 3.8 4.6 3.8M725.8 586.8l4.8 3.6 4.8 3.6 3.2 2.4M765.9 617.0l4.9 3.4 5 3.4 4.9 3.4 3.3 2.3M786.5 632.5l4.9 3.5 1.6 1.2M701.8 578.9l4.7 3.8 4.7 3.7 3.1 2.5M717.9 589.6l4.6 3.8 4.7 3.8 4.6 3.8 4.6 3.9 1.6 1.2M744.2 609.4l1.6 1.2 1.6 1.2M701.3 583.3l4.7 3.8 4.7 3.7 4.6 3.8 4.7 3.7 4.7 3.8 4.7 3.7 3.1 2.5M700.8 592.0l4.7 3.8 4.6 3.7 3.2 2.5M707.8 547.9l3.7-4.7 3.7-4.7 3.7-4.8 1.2-1.5M703.2 564.5l3.4-4.9 3.5-4.9 3.4-4.9 3.5-4.9 2.3-3.3M724.9 536.8l3.5-4.9 2.3-3.2M728.4 545.7l3.7-4.7 3.7-4.8 3.7-4.7M741.4 528.4l3.7-4.8M709.2 578.6l3.6-4.8 3.7-4.8 3.6-4.7 3.6-4.8 1.2-1.6M728.4 553.2l3.8-4.7 3.7-4.7 3.8-4.6 3.7-4.7 2.5-3.1M749.5 525.1l1.2-1.6 1.2-1.6M705.7 597.6l3.6-4.8 3.6-4.8 2.4-3.2M718.3 581.0l3.4-4.9 3.4-5 3.4-4.9 3.4-5M736.5 556.8l3.5-4.9 3.4-4.9 3.5-4.9 3.4-4.9 1.2-1.7M755.0 532.2l3.8-4.7 3.8-4.6 3.8-4.7M745.9 551.9l3.5-4.9 3.4-4.9 3.5-4.9 1.1-1.7M759.9 533.2l3.7-4.7 3.8-4.7 2.4-3.1M719.1 603.1l3.8-4.6 3.8-4.7 3.8-4.6 2.5-3.1M733.3 582.7l3.6-4.8 3.5-4.9 3.6-4.8 3.5-4.8 3.6-4.9 3.5-4.8 1.2-1.6M749.4 570.3l3.7-4.7 3.8-4.7 3.7-4.7 3.7-4.7 3.8-4.7 3.7-4.7 3.7-4.7 3.8-4.7 2.4-3.1M782.5 526.4l3.8-4.6 3.9-4.6M731.8 607.5l3.7-4.7 3.7-4.8 3.6-4.7 3.7-4.8 2.5-3.1M751.4 580.9l3.7-4.7 3.6-4.8 3.7-4.7 3.7-4.8 3.6-4.7 3.7-4.8 2.4-3.2M780.0 542.9l3.6-4.8 3.6-4.8 3.6-4.8 3.7-4.8 3.6-4.8 1.2-1.5M737.5 610.6l3.7-4.8 3.6-4.7 3.7-4.8 3.6-4.7 3.7-4.8 3.6-4.7 2.5-3.2M764.9 574.2l3.6-4.8 3.6-4.8 3.6-4.8 3.6-4.8 3.6-4.8 3.6-4.8 3.6-4.8 3.6-4.8 3.6-4.8M801.6 525.5l1.2-1.6 1.3-1.5M799.7 538.8l3.5-4.9 2.3-3.2M752.0 612.1l3.8-4.6 3.8-4.7 3.8-4.6 3.8-4.7 3.8-4.6 3.8-4.6 1.3-1.6M778.8 576.0l3.4-4.9 3.4-5 3.4-4.9M759.8 616.7l3.5-4.9 3.4-4.9 3.5-4.9 3.4-4.9 1.2-1.7M777.4 594.1l3.4-4.9 3.5-4.9 3.4-5 3.4-4.9 3.5-4.9 3.4-4.9 3.4-5 1.2-1.6M765.3 620.3l3.7-4.7 3.7-4.7 3.7-4.8 3.7-4.7 3.7-4.7 3.7-4.7 3.8-4.7 2.4-3.2M795.4 580.0l3.8-4.7 3.8-4.6 2.5-3.1M770.0 624.6l3.7-4.7 3.7-4.8 2.4-3.1M781.4 609.2l3.8-4.6 3.8-4.7 3.8-4.6 3.8-4.7 3.8-4.6M802.2 581.7l3.8-4.7M783.9 634.4l3.5-4.9 3.5-4.9 3.5-4.8 1.1-1.7M789.9 638.1l3.4-4.9 1.1-1.7M797.1 629.7l3.6-4.8 3.6-4.8 1.2-1.6M798.0 635.5l3.6-4.8 3.5-4.8M755.4 524.6l1.8-1.5 1.1 1.3M754.9 526.3l2.9 1.3 1.6-3.5M754.6 526.3l0.6 2.3M754.9 528.9l2.1 0.8M756.5 525.4l3.1 4.7 -2.5 1.6M756.4 526.9l1.5 2.5M758.1 522.6l1.5 2.5M754.3 522.4l1.9 3.8M755.6 520.9l3.5-3.8M753.8 521.0l1.2-1.8M754.4 521.8l3.7 4.6 -1.9 1.6M757.0 528.8l1.7-2.6M755.2 529.6l2 0.8M757.7 525.7l4.9 2.5M755.9 532.1l2-4.4M758.2 522.8l3.8-3.1M756.2 526.0l1.6 2M757.7 529.0l1.6 1.9M754.7 527.0l0.6 2.3 -3.7 0.9M757.3 528.9l1 2.2 2.2-1M754.8 532.9l5.2 2.6M758.5 525.5l1.3-3.4M752.1 525.3l2.2 1.6 2.3-3.2M753.0 524.2l1.2 2.8M758.1 522.4l3.7-2.3 -1.1-1.8M751.8 526.3l2 5.4 1.8-0.7M756.3 532.3l1.5 1.3 -1.8 2.1M754.7 531.9l4.3-1.9 -1.2-2.7M755.4 528.2l3.9 2.3 -2 3.4M755.9 523.7l1.9 1.1M717.8 592.8l1.2 4.4M720.5 593.2l3.6-3.8M723.0 597.8l1.6-3.6M724.6 596.9l4.2-1.5M724.4 596.8l1.6 2.1 2.9-2.2M719.4 592.1l1 4.4 -2.5 0.6M720.0 593.9l4.5 3.7M720.8 593.9l4 3.9 -1.5 1.4M722.3 592.0l2-2.6 1.2 1M718.1 596.7l4.9 3M718.1 598.1l1.2 4.9 2-0.5M716.7 595.8l4 2.9 -2.2 3.1M719.5 594.1l1.6-1.6 -1.5-1.4M720.1 594.6l3.9-1.5M718.3 594.8l2.2 1.7M721.5 593.2l3.2 4.1 -2.1 1.6M720.6 591.6l2.3-2M720.2 595.7l3.2-2.3M717.9 597.0l3.1-3.3 1.5 1.5M721.4 594.2l2.5-2.5 1.5 1.4M718.0 596.4l1.2 4.4 -2 0.5M724.0 595.6l5.1-2 1.3 3.2M722.6 594.8l1.2 2.6 -2.8 1.2M720.1 593.2l3.2 2.3M720.4 593.8l2.2-0.7 1 3.2M724.5 596.9l3.9-2.5 1.5 2.4M719.5 596.9l2.4 2.5M718.2 598.2l3.1-3.1M723.9 594.6l1.6 4 2.6-1M723.5 594.0l3.7 2.1M721.1 592.2l2.9-1.3M720.5 591.9l3.3 2.4M720.6 598.6l1.2 1.9 -2.7 1.7M723.8 594.5l2.9 3.2M754.6 569.1l1.1-2.2 3 1.4M758.4 563.4l2.3 2.1 2.2-2.3M754.2 562.6l3.6-3.2 -2-2.2M757.3 562.4l3.8-4.2M757.7 562.1l2.6-3.6 -3-2.1M759.8 563.5l2.8-3.7M753.4 567.5l2 0.9 1.2-2.8M759.5 569.4l1.9 1.8M757.2 571.4l3 1.1M762.1 565.0l3.3 2.4 1.9-2.6M758.0 566.3l2.5-1.7 1.3 1.8M759.2 564.2l2.4 2.1 2.1-2.5M756.5 568.8l2.5-1.5M752.8 566.1l1.1-2.8M756.8 566.3l2.3 2.2 -2 2M753.7 568.3l4.9 3.4M756.3 566.7l2.1 1.7 -2.1 2.5M759.0 563.1l1.3 5.5M754.2 570.1l2.4-2.3M760.9 568.2l2.5-4.6M761.8 563.3l3.9 3.9M753.0 569.3l1.9 4M758.6 560.7l4.4-1.4 0.8 2.5M761.1 569.5l1.7 2.2 1.6-1.2M760.5 563.9l2.8 3.8M755.6 563.8l2.5-2.7M761.3 562.8l5.5 2.1 0.9-2.3M753.8 570.2l0.9-1.8M755.3 567.0l3.7-3.2 1.2 1.4M760.4 565.8l4.5-2.2M759.2 570.9l3.7-4.2 -1.4-1.2M759.8 569.7l2.5 5.1 -1.8 0.9M719.4 575.9l3.6-1.9 -1.1-2M717.3 571.3l2.5-1.9M717.4 568.2l0.6 2.3M720.6 569.6l3.7-3.6M716.9 570.9l4.1 4.3M719.7 576.9l1.2 5.2M718.7 571.2l3.4-3.2 -1.4-1.4M719.4 577.9l2.9 4.6M720.1 569.6l1.9-2.4 -2.6-2.1M718.2 567.7l1.6 3.5M719.9 566.7l2-1.8 -2.6-2.9M720.3 571.5l3.8-3.1M718.3 572.8l1.8-4M716.9 571.3l3-3.6M719.7 566.8l1.7 3.8M721.7 571.0l1.9 1.4M721.0 576.8l3 3.2M721.6 570.7l1.2 4M717.6 576.7l3.1 4.1M722.2 572.2l3.7-1.2M720.9 568.4l1.8-2.9 -1.4-0.9M719.5 573.7l3.1 4.7 2.7-1.7M718.1 567.7l3.5 4.6 1.4-1M721.6 569.3l2.1 2.8M721.7 568.6l2.3-5.1M718.3 567.1l1.4-2.3M719.4 574.9l2 0.9M716.5 571.8l4.2-3.8 -1.5-1.6M721.7 574.3l3.5-2.7 -2.2-3M721.4 572.6l2.6 3.3 -2.3 1.9M720.9 569.6l5.5-1.7 0.5 1.7M718.8 576.3l2.9-2 1 1.5M718.3 574.8l3.8-2.5 -1.8-2.9M717.0 547.4l2.6 3.8 2.4-1.6M715.8 552.1l4.3 4.1M713.9 549.2l4.3-3.5 -2.5-3M716.9 549.4l3.2-3.3M713.8 544.3l1.9 1.3M715.3 546.7l2.9-1.5 -1.1-2.3M713.7 543.3l4.8 2.1 -1.2 2.6M709.6 545.6l1 4.2M714.5 549.0l1.1 2.4M712.3 547.1l1.9-1.8 2.7 2.8M718.0 547.9l2.5-3.5 -1.4-1M712.3 545.8l2.1-1.1M711.2 542.4l2.3-3.4 -1.3-0.9M709.7 543.5l2.8-3.3M709.8 550.6l2.6-2.3 -1.3-1.5M712.9 552.1l2.3-2.6 2.8 2.6M715.5 545.2l2.2 2.3M714.4 547.2l3.5-3.7M710.0 550.7l1.1 4.7 2.9-0.7M716.2 552.0l2.6-1.2 1 2.1M713.3 545.4l1.8-4.4M713.9 544.3l3.7 3.5 -1.4 1.4M712.3 546.5l2.3 2.3 1.2-1.2M712.5 545.0l5.4 2.6 -0.8 1.6M711.9 545.6l3.6 4.3M716.3 545.1l1.4 5 -2.8 0.8M709.4 546.9l2.1 3.4M713.1 544.6l2.3 3.6 -2.2 1.4M708.8 544.1l3.2-3.1 -1.3-1.4M708.8 547.3l1.5 1.5 -1.1 1.1M707.8 545.9l2.6-2.5 -2.5-2.5M713.7 550.9l5.4-1.4M709.8 551.0l3.5 4M710.8 550.7l1.5-1.4M717.9 550.0l3.3-3.1M713.7 546.1l4.9-1.5 0.7 2.4M709.7 550.1l3.7 1.4 -1.1 2.8M712.4 546.5l3.1-2.9M720.7 568.5l1.9-2M718.3 565.9l1.2 1.7 -3.2 2.3M722.6 561.8l3.8 4.1 -1.9 1.8M715.2 566.5l2.5-2.3M719.7 566.5l2.5-5.3 3 1.4M722.0 564.6l1.1 2M721.9 568.8l3.4 2.2M713.7 562.7l2.7-0.9 -0.8-2.3M722.5 561.4l4.8-2 0.7 1.8M717.4 566.7l5.4 2.5M724.5 563.0l4.1-1.4 1.1 3M722.9 562.6l1.5 3.1 -2.1 1M721.5 560.8l4.7-2.3M720.6 560.0l3.4-2.9 2 2.4M717.3 563.3l4.8-2.4M725.1 566.5l3.9-1.6M713.9 562.6l2.9 3.8 2.7-2.1M723.7 562.1l1.8-1.2M721.2 565.9l1.3 1.6 1.8-1.5M723.0 567.0l2.4 2.4 -2.6 2.6M714.1 564.4l1.8-1.6 -1.2-1.4M724.7 566.8l2.7 2.7M719.0 563.4l4.4-3.6 -1.1-1.4M721.8 561.2l3.8 2.9 -2.2 2.8M721.6 567.6l3.3-1.9 1.9 3.3M722.8 562.0l2.3-2.4M720.5 564.0l1.4 4.5 -3.2 1.1M718.9 561.0l2.2 0.9M722.6 565.6l1.6-1.5M719.0 568.7l1.4 1.8 -1.5 1.2M720.6 564.0l1.6 2.2 1.3-0.9M719.2 568.0l2.2 1.2 -1 1.8M721.4 560.7l0.9 2.7 -1.4 0.5M800.9 620.9l1.6-3.8 -1.6-0.7M793.6 624.7l3.1 1.7M804.9 622.1l4.1-4.1M801.8 624.9l2.8-0.9M797.2 624.8l1.7 1.4M797.6 622.3l2.1-4.4M792.4 623.9l4.9-3.2 -1-1.5M795.6 623.1l2.4-2.9 2.4 2M794.3 621.8l4-3.5M801.8 624.0l3.1 2.2 -1.2 1.8M797.9 621.3l2 5.2M800.6 622.4l3.3 4.5M795.3 623.7l5 3.2M797.8 625.5l2.5 2.9 -2.9 2.5M802.9 622.0l3.3-3.6 2.3 2.2M797.9 622.5l1.2 4.3M796.1 623.7l3.3 1.7M790.3 624.3l1.9 2.1 -2 1.8M801.8 623.6l3.7 4 -1.8 1.7M800.0 625.3l3.9-3.1 -1.4-1.7M801.7 621.5l2.6-2.2M796.2 625.5l2.1 1.2 -1.1 1.9M803.1 621.0l3-2.5 2.3 2.8M795.2 621.3l2.1-2.5 -1.6-1.4M794.7 621.9l2-2.2 2.7 2.5M796.5 623.8l3.1 2.9M801.7 625.4l2-1.4M804.7 623.2l5-3M794.0 623.1l1.6-4.4 2.8 1.1M794.1 622.4l2.2-1.3M796.8 623.7l1.6 4M795.4 623.8l1.7-3 2.1 1.2M802.7 622.8l1.5 3.2 -2 1M793.0 622.2l2.7-2.6M795.5 623.2l1.7 3.9 -2.3 1M790.0 625.1l2.5-3.7 3.1 2M802.0 621.6l1.8-2.2 -1.1-1M797.9 622.8l5.3-1.3 -0.9-3.6M712.1 585.4l2.4 3.3M709.5 588.4l1.6 2.1 1.7-1.3M711.4 579.3l3.5-1.7M710.6 587.5l2.1 3.1M709.3 579.6l3.4 5 2.4-1.7M711.6 583.1l3.9-3 1 1.2M715.3 580.9l1.8-1.9 1.8 1.7M710.5 580.7l3.6-4.3M715.4 582.3l3.4-1.4 0.7 1.9M710.4 581.0l1.4 1.7M717.4 581.2l2.7-1.2M709.8 582.1l5.1 3.1 -1.1 1.8M706.6 584.1l3.1-2.3M713.1 585.7l3.7-3.9M713.0 579.4l1.5 1.8 1.7-1.5M708.1 587.1l1.6-1.3M714.9 582.2l1.3 3M714.1 583.0l2.9 2.7M714.2 578.9l0.6 2 3.1-1M711.6 583.5l1.1 2.1 3-1.6M712.2 582.1l1.8 1.9M717.4 582.5l1.8-1.8M712.7 580.1l2-0.9M707.8 583.4l1.2-1.7M715.1 580.8l1-2.5M711.4 584.3l4.5-2.9M707.3 583.8l1.5-1.7 2.2 1.8M711.4 584.6l2.4-5.1 2.1 1M714.2 582.3l5-2.6 -1.2-2.3M711.8 581.8l2 2.4 1.8-1.6M709.8 579.8l2.3-5.5 -3.2-1.4M712.5 587.0l2.6 3.7M708.4 580.9l2 2.1 2.3-2.2M708.1 586.9l2.6 3.5M711.3 584.1l4-1.6M716.4 582.4l4.4 3.8M749.9 544.8l1.7-1.4M749.5 539.6l0.9-1.9M746.8 544.7l3-3.5 -2.5-2.2M748.1 546.3l2.5-1.1M754.6 541.0l2.5-2 1.6 1.9M750.6 539.5l2.7-0.8 -0.9-3.4M750.3 540.9l4 1.5 0.5-1.4M748.0 547.7l3.4-3.6 1.3 1.3M748.5 545.7l3.3-4.8 -2.4-1.6M745.6 546.1l2.6 3.2M750.8 539.2l4.6-1.6M747.4 542.0l2.2-1.6 1.4 1.9M746.1 541.2l3.9-4.2 2.3 2.2M754.3 540.6l1.2 1.7M749.6 538.7l3 2.8M746.9 544.1l0.9 4.1M748.3 543.1l3-2.4M751.2 546.8l2.4 2.6 -2.5 2.4M750.2 544.3l3-1.8M749.8 539.1l2.7 5.1M748.8 546.9l4.2-1.5 -0.8-2.5M745.8 540.6l3.5-2.2 1.8 2.8M745.8 538.9l1.9 4.7M751.5 542.5l2.7-2.8 2.6 2.5M748.6 540.7l1.4 1.7M746.7 546.0l2.3 1.5 1.5-2.3M755.2 538.3l2.5-1.1M753.7 540.1l2.9-2.5 1.5 1.8M752.4 538.4l2.5-0.7 -1-3.8M745.6 540.9l2 1.2M748.5 546.3l2.9 4M748.3 544.2l3 3.4 -2.6 2.3M745.2 545.7l2.2-3.3M744.0 542.4l4.7-1.9 1 2.5M756.2 541.7l1.8 1.5M746.1 540.4l5.1-2.9 -0.9-1.7M751.9 545.0l5.3-1.6 0.6 2.2M749.2 547.1l1.9 1.1M751.1 541.1l4.3 3.9 2.4-2.6M757.2 548.4l3.3 3M747.7 545.2l2.8-1.6 1.4 2.6M759.7 543.6l2.4 2.8 -2.9 2.5M755.8 545.3l1.2 3.2 -1.7 0.7M753.4 545.5l2.7-1.9 1.4 2M758.6 542.8l3.4-0.8M755.9 539.1l1.9 1.1 0.9-1.5M753.6 542.9l2.2 1.6M751.5 546.1l1.4 3.8M753.5 543.6l2.8-3.3 -1.7-1.5M752.0 548.4l3 2.2 -1.5 2M758.8 547.3l2.9 2.7M762.5 541.7l2.8 3.5 1.4-1.1M752.1 546.0l2.7 3M760.4 542.5l3.1 4.7 1.6-1M756.8 539.1l5.2 2.2 1.5-3.5M753.9 547.5l3.4-4.6 2.3 1.8M754.1 543.8l4-3.4M760.8 545.3l1.4 2.6 -1.9 1M759.4 543.8l2.1-1.6M757.9 545.1l1.9 5 -2.5 0.9M756.4 546.7l3.8-1.2M757.8 541.1l4.2 2.6 -1.9 3M757.3 545.9l3.5 1.9M753.6 540.1l2 4.6M748.7 544.0l5.1-2.8 0.7 1.5M754.9 547.0l0.9 1.8 2.4-1.2M752.3 546.0l2.3-0.6M753.7 543.1l1.3 5.3 3.4-0.8M760.9 546.0l3.6-4.3 2.3 1.9M759.1 542.3l2.6-1.9M762.3 541.8l1.2 4.7 -3.7 1M759.1 541.7l1.3 1.8 2.9-2M710.2 586.1l3.8 4.2M710.7 580.0l3.7-4.7 2.3 1.8M716.4 583.2l1.3-3M712.3 581.3l4.3 3.9M714.0 582.2l2-1.5 2.4 3.1M711.3 585.8l2.4-0.7 -0.5-1.6M710.8 584.5l2.1 2.9 -1.3 1M712.2 586.8l5.2-2.4 -1.2-2.5M711.2 575.6l2.5 1.3 1.4-2.7M715.9 575.8l1.2 3.6 1.9-0.7M715.2 572.5l2.1-2.1 2.4 2.4M713.4 572.0l5.1-1.7M714.0 577.5l3.8 2.3 -1.3 2.2M713.0 572.8l2.6 2.7 -1.3 1.2M715.2 574.1l4.1 4.1M712.4 584.4l3.5-1.9M716.6 582.4l4-4.4M712.1 576.7l3 4 -2.3 1.7M710.4 578.1l3.8-3.1M711.5 584.8l3.7-1.3 -1.1-3.2M709.5 578.2l3.2-4.2 -2.1-1.6M710.9 586.1l2.1 2.2M712.6 577.7l2.3-5M711.0 577.5l3.2-1.4 1.5 3.6M713.3 573.0l1.3 1.6M710.9 584.6l2.7 5.2M714.3 574.0l5-3M714.9 586.8l3.2-3.3M712.3 581.5l4.5-3.9M716.0 584.5l3.5-3.5M723.1 563.4l1.8 3.6M721.9 557.9l2.7 2.7M720.0 561.3l1.9 1.1M720.8 562.9l2.4 1.2 1.4-2.7M721.9 557.4l1.3 4M717.9 560.5l4.1-1.5M719.2 563.1l2.6-2.5M722.5 558.1l1.4 1.8M718.3 562.8l0.5 1.9 -1.8 0.6M724.3 558.1l2-1.6M724.4 561.0l3.2 1.2M723.3 561.9l3.6 2.7 2.2-2.9M723.3 560.4l5-1.2M720.3 563.3l3.8 1.4 -0.9 2.5M725.4 559.5l5.3 2.4M723.7 557.6l2.7 2.7 1.2-1.2M721.6 562.0l3 4M720.2 561.8l1.9-1 -1.3-2.4M723.9 558.8l1.9 1.3 -0.9 1.3M723.8 561.6l1.7-1.9M725.5 558.4l1.3 4M723.3 563.3l4.9-2M719.6 558.9l1.4 1.6M719.6 563.6l1.7 2M721.4 563.3l2.7-3.7 -2.6-1.9M720.6 558.2l4.7-2.2M725.0 559.1l1.5 1.7 -1.7 1.5M721.2 561.6l3 2.5M723.3 560.6l4.7 2.4 -1.3 2.4M725.0 559.1l1.9 2.2M722.6 558.7l4.1 1.8M724.0 560.4l2.2 3.4M720.8 563.2l1-2.6M721.0 561.2l3.2-1.4M721.0 557.8l2.1-1.8M720.4 558.4l3.1 2.9M724.3 561.5l3-2.6 -1.7-2M722.8 563.8l2.8-1.8 -1.1-1.7M720.2 561.1l5.4-1.8M720.5 583.0l1.2 2.1M725.4 580.3l4.8 2.6M722.9 583.6l2.9-3.2M722.9 583.1l2.5 5.4 2.5-1.2M717.8 586.3l0.6 2.2 2.8-0.8M720.7 583.3l4.1-2.9M717.0 584.7l4.1-2.8 -2.2-3.2M717.7 587.7l3.6-3.6 -1.8-1.8M725.5 578.4l2.6 2.8M725.3 583.9l2-3.1M723.4 578.7l1.5 1.7M726.4 581.8l2.2-1.6M721.1 583.5l3.4-3.9M717.9 584.1l2.5-1.9 1.6 2.2M721.1 586.5l2.8 5.2M725.4 580.5l2.6 2.9M721.0 586.2l5.1 2.7 -0.8 1.5M725.6 581.5l4.6-2.2M722.3 583.6l1.1-2.8 -1.9-0.8M727.1 578.8l3.3 2.7M723.5 584.0l4.5 2.9M724.2 578.8l0.5 2.2M716.3 588.1l5.5-1.8 -0.5-1.5M723.6 580.2l4.7-2.8 -1.8-3.1M720.0 587.2l2.7-4M723.0 578.9l5 2.8M717.7 588.3l4.1 2.9M725.4 582.1l4-4 2.4 2.4M723.7 580.8l2.6 3.3 2.4-1.8M727.0 579.9l4.7 2.9 -1.9 3.1M720.2 586.8l2.2 4.1 -2.4 1.3M722.2 579.1l3.1 4M721.5 586.6l1.5 1.7 -2.2 1.9M722.0 583.7l4.5-2.2 -1.6-3.1M755.7 549.8l2.5-2.7 -1.9-1.9M755.0 558.6l3.1 4.9M755.2 555.1l3.8-4M755.3 557.9l2.4 2.6M751.0 550.3l1.3 1.7 -1.7 1.3M755.9 558.8l2.2-4 1.9 1.1M752.1 553.8l3.8 2M752.4 557.9l3.3-3.2M751.3 556.5l4-2.3 -1.6-2.9M750.2 557.7l1.8 1.9M749.7 550.9l3.1-3.8M750.1 551.5l2.4-4.9M757.3 549.8l3 3 -1.1 1.1M754.4 559.6l2.9 3 -2.3 2.3M749.3 555.7l1.4 2.2M751.5 551.2l3.5 4.8 2.3-1.7M758.2 555.5l3.8 2.3 -2.1 3.4M757.0 557.8l2.3-3.2 1.5 1.1M753.4 558.5l4.4-2.4M749.8 552.4l1.7 2.6M754.4 555.6l2.2-0.5M753.0 557.4l2.5 1.6M753.7 549.6l4.5 2.4 1.8-3.4M749.0 554.6l3.2-4.6 -2.1-1.5M751.9 549.8l1.9-1.4M750.6 555.2l4.6-3M756.4 550.8l3.1-4.1 1.2 1M753.4 552.8l3.6-3.4 -2.5-2.6M752.7 554.5l2.2 5.1M756.1 550.9l2.3-4.9 -3.5-1.6M748.1 553.1l4.2 1.9M757.6 552.8l4.5 2.8 -0.9 1.4M755.8 553.4l1.8-2.8 1.5 1M754.4 557.2l3.1 3.4 1.4-1.3M753.8 556.1l3.1 3.8 3-2.4M758.6 552.3l2.2 4.5M756.9 555.8l3.6-3.1M753.9 549.5l3.4-4.9 1.5 1.1M755.6 556.6l2.3 4.1M750.4 556.2l4.7 3.4 2.1-2.8M801.1 583.7l5.2-1.6M807.9 579.8l1.4 1.9 2.4-1.8M805.8 582.6l2.6 3.3 2.4-1.8M806.0 583.7l3.6-2.8M799.2 580.2l1.9 1.2 -1.7 2.7M807.6 577.7l1.4-2.1M805.2 582.1l1.1 1.9 -1.6 1M807.7 580.2l1.7-3.5 3.1 1.6M806.2 578.3l3.9 3.9M804.0 579.0l2 3.5M799.1 576.0l1.2-2.5M805.1 584.4l2.1 2.3M805.0 574.9l1.5 3 2.9-1.5M801.4 583.3l2 2.2M806.8 579.2l4.3 2.9M805.5 576.7l1.8-1.1 1.4 2.3M797.5 577.8l1 3.4M800.4 581.4l1.1 2.5 -2.3 1M804.8 582.4l2.6 3.7 -1.2 0.9M802.2 578.8l3.8-4.6M802.5 576.3l4.9 2M803.8 574.1l2.2-5.1 -2-0.9M806.4 579.4l4.2 2.1 -1.3 2.6M801.9 576.7l3.2-1.4M801.3 584.3l5.3-2.6M798.5 577.6l5.8-1.3M801.2 582.7l2-0.9 0.6 1.5M806.1 578.1l1.1 3.2 3-1M804.7 583.2l2.9-2.6M805.7 576.6l3.5 4.6M807.1 577.8l1.6 5.1M807.1 581.9l2.2-5.4M807.2 579.5l2-2.1M808.0 581.2l1.1 4.1M804.0 574.1l2.4 1.7M728.2 534.2l3.7 1.9M730.7 531.2l2-4.9M728.6 538.5l2.1-3.9M729.3 532.9l1.9-0.8 1.2 2.9M727.0 538.6l4 3.9 2-2.1M726.4 536.9l2.9 3.9 2.5-1.9M723.9 537.1l2.4-2.5 1.2 1.2M725.8 529.4l1.6-2.3 1.4 0.9M730.7 531.1l1.8-1.8 2 1.9M724.8 532.9l2.8-3.8M724.2 534.7l3.9 4.3 -2.5 2.3M729.3 536.6l2-4.1 -3.1-1.4M731.1 538.1l2.1-0.8 0.6 1.6M725.2 531.6l2.8-0.8M725.1 532.9l2-4.2M726.9 533.5l3.3-1.4 0.6 1.6M727.2 530.8l1.8-4.7 -2.3-0.9M723.7 531.5l5.1-1.2 0.9 3.7M727.9 535.7l2.4-5.3 -3.4-1.6M727.7 537.4l3.3-2.5 -1.7-2.3M724.8 531.0l3.1 2.2 -1.4 2M729.1 532.0l3.3-1.9M726.1 535.7l1.6 2.2M723.6 531.7l1.6-1.5 -2.6-2.9M730.4 535.2l2.7-1.6M728.7 531.5l3.5 3.2M730.2 531.0l2.6 2M727.5 528.8l3.2 1.4 0.9-2.1M728.2 538.3l1.2-1.9M724.6 538.2l1.4-2.3M727.4 537.9l2.3-2.9M729.3 538.6l1.5 2.5 2.7-1.6M726.7 528.8l4.9-2 1.3 3.3M729.6 530.5l1.6-2.7M728.8 532.0l2.7 1.7M730.0 537.3l1.7-1.2M796.7 563.6l2.6 2.6 -2.1 2M803.0 567.5l2.4-3.7M799.8 565.0l4.1-4 -1.4-1.5M805.5 564.6l2.5-3.4M794.9 564.3l5.1 2.4M794.9 566.5l2 2.2M794.8 566.9l4.1-1.6 -0.9-2.2M800.9 566.3l2.4-4.2M799.7 566.7l3.7-2.2M796.8 568.5l1.7-1.3 1.8 2.6M801.1 565.6l4.1-2.2M800.9 568.6l3.1-0.7M800.5 568.3l2.7-1.5M797.6 567.0l2-0.6 1 3.2M794.4 568.4l1.6-4.4M796.0 565.6l3.2-4.1 -2.5-2M802.0 565.8l3.4 4M795.8 567.1l1.9 3.2M800.6 563.9l2.3-3.3M793.8 565.1l1.5-1.6M803.5 566.6l2.5-1.6 -1.3-2M799.2 567.5l3-3.8M800.9 562.9l1.7 2.3 -3.2 2.4M796.8 568.0l1.6-1.3M797.0 568.1l3.8-2.6M800.9 566.3l1.2 2.1M796.5 565.7l5.3 2.4M796.4 564.6l1.1-1.9M793.9 567.7l2.4 5.4M799.8 567.3l3.1 1.4M804.9 564.1l4.1-3.2M802.1 566.9l1.9-4.4 2 0.8M799.7 567.5l1.4-2.9M804.8 565.0l2.3-1.1 0.7 1.4M800.7 567.2l4.4-2.3 1.5 2.8M798.4 568.8l2 0.8M799.0 565.3l2.5-0.6M709.8 566.9l1.5 4.4 -3.7 1.3M711.6 565.8l3.7 2.2 1.8-3.1M713.1 567.1l5 2.3M713.4 561.6l2.8-2.8 -1.8-1.7M709.3 567.8l2.5 1.6 -1.7 2.8M713.3 562.4l1.1 1.7M709.7 566.4l2.2-3.9M711.7 566.1l2 0.8M712.2 565.5l1.8 2.4M709.2 570.8l4.4 2.8 2-3.1M714.6 562.2l3.9 3.7 -1.1 1.2M714.9 563.4l1.5 3.7M716.7 564.2l3.2 3.8M712.9 569.8l3.7-4M713.3 564.0l3.7-3.3 -2-2.3M711.2 567.7l4.9-2.8M715.3 562.0l3 3.1M713.6 564.3l4.8-3.2M710.1 570.4l4.8-2.5 1.4 2.7M711.7 567.8l5.2 2.9 1.7-3M715.9 561.5l1 1.9M712.6 566.6l0.8 2M715.8 563.7l1.5-3 -3.1-1.6M714.3 566.3l4.2-3.3 1.5 1.9M711.5 563.3l3.5 2.5 2-2.7M712.7 562.3l3.8-3.7M712.0 567.5l2.1-4.7 2.9 1.2M716.0 564.5l3.6-2.6 1.8 2.4M710.3 566.4l2.3 4.3M711.6 570.2l1 2.5 -1.5 0.6M714.6 562.7l1.9 4.4M763.9 539.5l1.7-1.4M759.6 536.4l1.3 2.9 3.3-1.5M765.0 535.7l0.9 2.8M766.6 535.4l2.6 3.6 1.5-1.1M767.6 537.9l1.5-4M764.8 535.9l3.5 4.1M765.2 539.0l3.1 1.6 1.2-2.3M761.7 533.0l4.1 2.5M765.7 537.0l2.4 1 0.7-1.9M760.1 535.9l3.5-2.9 -2.1-2.6M769.0 538.2l3.8-3.7 2.5 2.5M767.5 534.7l1.9 2.7M760.3 537.8l3.7 3.6M767.7 536.6l2.5 2.2M763.5 534.8l2.4-3.8M760.8 535.2l1.2 2 -2.1 1.2M764.0 539.1l4.1 1.5M761.4 534.8l3.8-3.5M758.9 537.6l2.4-3 -2.5-1.9M763.9 532.7l2.4 1.8 -2 2.6M764.4 536.2l3 3.8 2.4-1.9M762.2 537.8l1.4 2.9M762.6 533.1l1.8 1.5 2.4-2.9M766.0 535.4l3.9-3.7 2.7 2.8M758.4 534.9l2.1 2.3M759.0 538.3l1.6 2.6M763.8 534.8l2.6 1.8 0.9-1.3M763.9 534.8l1.6 2.8M761.7 537.2l4.8-1.7 -0.6-1.7M769.2 534.0l3.6-2 -1.1-2M763.7 532.1l0.7 2.5 3.8-1.1M763.1 538.4l3.9-3.1 -1.9-2.3M765.0 539.5l2-1.6M759.6 534.7l2.5 1.2M763.9 539.0l1.8 4.9 -3.5 1.3M759.9 534.8l2.9-1.3 0.9 1.9M806.5 576.1l1.9 2.6 -3 2.1M801.3 570.2l3.3-2.7 1.2 1.4M803.5 572.7l2-1.5 2.1 2.8M806.6 570.8l1.7 1.9M801.2 568.6l1.1-2.9M803.1 568.5l4.8-3.5 2.3 3.1M804.6 573.5l2.4 2.7M802.6 569.4l3.9 2.4 2.1-3.3M808.9 573.7l3.6 4.6 2.9-2.3M808.7 576.0l2.6-2.5M803.9 572.0l2.4-4.1M808.7 572.8l1.4 2.5M806.9 572.1l1.9 2.1 1.5-1.3M803.9 573.5l2.2 4.3M801.0 568.6l1.4-2.2M805.7 570.1l2.5 4.3 -2.7 1.6M804.2 570.7l3.1 4.5 1.4-1M803.1 572.7l1.7 5.7M806.0 570.1l5.4-1.5 -0.5-1.8M802.1 572.1l2 4.9M808.2 573.7l4.1 4 2.4-2.5M802.4 573.7l2.4-2.5 -2.6-2.5M803.8 572.5l2.4-1.3 0.9 1.6M802.1 570.6l2-5.5M802.2 571.4l2 3.8M805.5 571.6l2-3.5M810.2 574.8l3.2-3.1M808.9 573.8l2.3 2.5M803.1 568.7l4.2-1.3 0.7 1.9M801.3 569.5l2.3 3.2 -1.4 1M804.5 568.5l2 1.5M745.0 579.4l2.1-3 -2.8-1.9M742.6 576.9l3.8-1.3 -0.8-2.4M746.5 579.9l4.9 2M743.2 579.0l1.8-1.3M742.7 577.2l2.2 3.6 -2.2 1.4M749.2 577.9l2.8 3.4 -3.1 2.5M745.8 583.5l3.3 4.5 -1.3 1M743.5 581.8l1.8 2.1M749.3 582.3l4-1.5 1.3 3.6M741.6 579.1l1.7 4.3 -3.5 1.5M746.3 585.6l1.8 0.8M743.6 577.3l3 4 2.8-2.1M750.1 580.6l3 2.6M750.0 580.2l1.5-1.4M746.9 582.3l3.8-1.3M747.1 585.2l2.7 2.4 1.2-1.4M744.3 585.2l0.9 1.8M745.6 585.3l3.1 4M740.5 581.7l2.1 2.5 2.3-1.9M744.1 583.3l2.2 5.3M750.2 578.5l4.6 2.9 2.1-3.2M741.9 584.0l3-2.1M746.4 578.8l2.8-1.4 1.6 3.4M745.9 575.9l4.5-2.2M751.6 579.9l0.9 2.1 2.7-1.2M747.9 583.9l2.2 2.3M746.9 583.1l2.2-3.9M742.6 578.0l3.9 1.8 1.5-3.1M743.0 585.2l1.2 2.3M750.3 577.4l3.7-2.8M743.6 583.3l1.4 1.7M742.7 584.5l2.1-4.2 2 1M741.1 579.6l1 2.3 -2.3 0.9M748.1 579.4l4.3-3.3 -1.1-1.4M745.6 578.5l4-1.9M802.0 597.8l3.2-2.5 -2.1-2.7M803.4 594.9l2.3 1.7M801.1 596.4l2.1-1.2M804.1 596.4l3.4 2.9 1.4-1.7M801.9 600.6l1.9 1.8 -2.6 2.7M805.7 596.6l2.7-2.1 -1.7-2.1M800.8 600.7l3.1-2.3M805.6 597.3l2.6-1.8 -1.7-2.4M801.0 594.8l2.4 3.8M805.7 597.4l2.3-1 1.2 2.9M805.4 599.9l1.4-2.1M802.3 598.7l2.9-0.7 -0.9-3.5M802.7 593.4l5 3.2 -1.8 2.9M804.1 601.8l3.1 3.7M803.3 598.1l4.4-1.7M802.7 604.6l1.3 2.5M800.4 595.9l4.2 1.9M801.5 595.5l3.1 2.8M802.2 594.0l3.8 1.6 -1.2 2.8M801.3 602.8l1.3 4.8 2.4-0.6M806.0 601.4l1.8-1.5 2.5 3M804.4 597.3l2.7 3.3 -1.1 1M801.4 596.7l1.1 2.2 3-1.5M803.3 597.8l4 3.2M802.6 601.5l2.7-2.6M800.7 599.1l3.2-1.8M802.5 600.0l2 2.2M800.5 596.4l3.5 4.8M805.8 599.6l2-3.8M801.3 603.6l2.8-1.4M802.0 595.6l3.7 4.5 -1.3 1.1M806.4 597.4l2-2M800.4 600.7l5.2-2.5 -1.2-2.5M803.5 602.0l2-2.2M804.9 603.5l3.7 3.7 -2 2.1M803.2 604.5l2.3 2.6M800.2 599.0l2.3 1.5 -1.6 2.6M801.0 599.0l1.1-2.3 2.1 1M718.0 574.2l3.6-1.1 -0.8-2.4M714.3 573.2l4.3-3.5 -1.9-2.3M718.8 577.3l2.8-2 -1.1-1.6M718.5 579.2l3.9-2.2 -1.3-2.5M711.5 578.2l2 2 1.5-1.5M719.4 577.6l2.6-1.4M715.8 580.4l2.8-4.5M709.5 577.2l1-2.1 -3.3-1.6M709.1 575.4l5.3-1.3M717.0 579.1l1.7 2.1M712.0 575.8l0.8-2.1 -3.1-1.2M710.5 576.5l2.8-2.1M713.9 580.4l1.5-2.1M712.3 572.8l4.9 1.9M713.4 576.8l4.9 1.9M707.5 571.3l2.8 2.6 2.6-2.9M718.1 574.8l3.2-1.8M709.2 577.3l2.5-2.3 1.2 1.3M711.3 572.7l2.1-2 2.3 2.4M711.5 571.6l1.3 5.2M713.2 577.9l2.2-1.9 1.5 1.7M718.0 577.3l2.5 3.5M707.4 574.2l2-4.6 -2.9-1.3M708.6 574.3l2.7-2.3 2.2 2.5M709.7 576.0l1.3-2.5 -2.4-1.3M715.9 580.2l1.9-4.5M715.9 575.3l2.8 2.4M712.2 571.5l4.1 4M715.0 578.2l2.4-5.4 -2.7-1.3M713.5 577.0l4-1.5 -0.8-2.2M707.3 571.7l1.1-2.8 -2.1-0.8M715.2 574.7l2.2 5.1 -2 0.8M707.6 575.0l4.1-1.3M716.3 572.9l4-2.7M793.0 520.8l4.1 2.5 -0.8 1.4M797.6 520.7l3.9 2.6M795.6 518.5l3.8-2.1M798.4 518.1l1.4-1.4 1.6 1.6M788.7 514.9l4.4 3 -1.8 2.7M789.6 522.9l3.5 3.1M795.7 518.4l2.2-2.6M793.4 524.2l3.9 4.1M793.4 524.9l5-1.2M799.6 521.8l2-3.6M794.8 522.1l3.6 4.1 1.7-1.4M796.8 525.9l1.5 1.6 -1.7 1.7M789.9 514.9l1.6 1.3M787.1 517.9l1.3 5.5M800.1 522.8l1.4 4.2M795.1 525.9l2.1-1.8 -2.1-2.5M793.2 519.3l2-1.3 -1-1.6M789.0 516.1l3 1.5 -1.5 3.1M794.7 525.7l1.3 2.1M789.6 519.8l1.5 4.5M792.6 519.9l1.8-1.4M798.5 518.3l3-2.7 2.5 2.9M800.2 520.5l1.5 2 -3.1 2.3M790.4 521.8l1.2-2.5M793.0 515.6l4.3 4.1M792.2 516.7l2.5-3.4 -1.2-1M796.7 520.6l1.5-3.9 1.9 0.8M787.3 519.2l2.3-4.2 -2.8-1.6M791.5 518.3l2.2 3.1M794.8 518.2l5.3-2 -0.6-1.6M800.4 521.9l2.6 2.4M792.3 517.4l4 3.8M786.4 518.7l1.3 5.1M797.3 525.3l3.6 3M796.6 523.3l3.4-0.8 0.9 3.7M767.3 615.6l4-3.2 -1.1-1.5M771.1 613.3l3.4-4.3M769.5 611.2l1.9-0.6M772.3 607.6l3.6-4.6M766.0 613.4l4 2.4M768.7 614.1l2.2-2.4M767.4 612.3l2.8 2.6 2.3-2.4M773.6 609.6l1.3 4.7 3.2-0.9M767.3 615.7l3.8-2.7 1.2 1.6M771.9 612.0l2.8-1.8M770.2 615.2l2.3 1.6 -2.1 3.1M767.7 608.7l3.4 1.4 1.4-3.4M766.3 609.1l4.6-1.7 -0.6-1.7M771.6 611.7l2.5 1.3 1.7-3.1M770.5 614.5l2.4 3.4 -2.1 1.5M772.4 609.1l3.9 4.5 1.9-1.6M772.9 611.6l3.1 3.5M769.5 611.9l3.6-2.6 -1.4-1.9M768.3 615.4l3.2-4.8M765.2 611.8l4.3-2.5 1.4 2.4M765.8 614.6l4.9 3M767.6 613.1l3.2 3.3 -2.1 2M765.0 613.9l1.4 1.8 2.8-2.1M772.5 609.7l4.1 2.1M766.5 608.4l3.2-3.8M764.8 610.9l2.8 1.4M770.0 607.0l1.6 2.5M769.7 614.7l2.8-2.1 1.6 2.3M772.0 614.1l2-2.1 2.3 2.1M770.8 614.0l1.4 2.5M767.8 615.6l1.4 2.5M764.2 611.0l3.6-2.1 1.7 2.9M765.6 615.6l4.3-3.6 1.4 1.8M766.1 613.6l0.7 2.8M772.6 578.3l1.3 1.5 1.3-1M764.3 575.5l4.3 2.4M763.1 576.1l2.1 2.2M770.9 577.3l3.6-3.2 -1.8-2M765.0 576.0l3.1-2.8M774.7 579.7l3.6-3.3 -1.5-1.5M764.3 576.3l1.4 3.3 -3.5 1.4M764.8 579.4l1.2 2.1M769.6 579.7l4.1-3.1 1 1.2M772.6 578.1l3.1-2.3 -2.1-2.9M770.1 579.3l3.4-1.9 -1.1-2.1M770.2 576.8l3.6 2.9M768.8 579.3l1.8 1.5 2.1-2.5M766.9 578.3l1.9 1.5 -1.6 2.1M768.6 576.2l1.2-2.5M769.6 578.3l3.8 2.6M764.3 577.1l3.9-3M769.3 578.9l1.9 4.9 2.3-0.9M765.8 578.3l3-0.8M766.6 575.8l2.3-1.9 2.1 2.7M775.3 580.9l2 5 2.6-1.1M773.2 578.9l2-1.4 1.6 2.4M768.6 580.6l2.3-2.9M774.9 581.7l3.1-4.5 -1.8-1.3M765.1 577.2l2.6 3.3 -1.3 1M773.9 579.7l1.7-1.1 -1.2-1.9M768.1 575.2l3.5-2.9 1 1.3M766.9 577.7l2.7 2.5M766.4 580.3l1-2.5 2.2 0.8M767.9 580.0l2-1.7 1.3 1.4M768.8 577.8l3.3 4M772.5 578.1l5 1.8 -0.6 1.5M772.4 578.9l3.4 4.6 -1.7 1.3M773.0 577.9l2.4-3.3 1.9 1.4M763.1 576.5l4.4 3.2 -1.9 2.6M767.6 578.6l1.3 3.7M795.8 558.6l4.3-1.2M801.3 557.7l1.6-1.5 1.8 1.9M797.1 559.7l2.8 2M800.5 557.4l2.3-0.9M798.3 560.0l3.1-4 1.9 1.4M799.9 562.5l3.1 1.8M798.1 556.3l2.5-2 1.3 1.7M797.7 554.4l1.8 5.4 -3.3 1.1M799.2 561.8l3.1-3.1 2.7 2.7M795.1 559.1l1.6 3.1M800.8 561.1l1.8-1.7M796.9 559.9l4.9 2.6M799.3 555.5l1.2-3.3 -1.5-0.5M798.5 554.4l1.9 2 2.3-2.1M795.4 555.9l1.8-3.2 1.5 0.8M800.3 560.7l0.9-2.2 2.4 0.9M797.3 558.2l1.1 3.6 1.6-0.5M796.8 561.7l1.9 0.9 -1.1 2.5M795.1 555.8l4 4.1 -2.2 2.2M799.1 559.7l3.8 4.1 2.1-2M800.6 560.0l1.1 3.6M798.1 562.5l2.2 2.4 -2.9 2.7M799.1 555.6l1.6-2.3 1.4 1M798.2 558.6l1.4 5.7 -2.1 0.5M797.3 555.1l2.3-2 1.7 1.9M797.8 561.7l0.7 2M796.8 559.7l2.7 1.2 -1 2.1M796.6 557.3l3.8-1.9 -1.3-2.5M794.3 557.3l1.9 2.3 -1.5 1.2M800.9 556.6l1.5-1.4 -1.1-1.2M795.6 554.3l0.9 1.8M795.3 556.1l1.4 2.7 2.1-1.1M794.4 556.7l1.8-0.9M796.4 561.8l1.7 4.9 -2 0.7M794.5 560.6l1.6 1.2 -2.1 2.8M795.8 561.7l2.6-5.1 -1.6-0.8M796.1 561.4l2 3.1 1.9-1.2M795.9 555.8l4.4 3 2.3-3.2M796.2 589.1l2.1-1.8M791.8 584.0l1.9-5.1M791.3 583.3l1 2.5M791.6 585.2l2.9-2.7 -1.4-1.5M794.7 586.1l1.3-2.2M792.2 588.1l4.9 2.6 -1.3 2.3M793.6 591.4l4-3.6M797.7 596.7l3.3-2.9 -1.9-2.2M797.2 591.8l1.2-2.8 2.1 0.9M796.4 588.5l2.6-3.4M795.9 590.3l3.6-3.3 2.1 2.3M795.5 591.2l2.3-2 1.6 1.7M795.8 590.9l4 3.5 -1.8 2.1M797.5 594.0l3 4M794.1 590.9l3.7-3.9 -1.7-1.6M796.5 596.1l1.4 1.7 1.7-1.3M793.2 593.8l0.9 3.5 2.4-0.5M796.8 593.0l2.7-2.8M797.3 596.0l4-2.1M794.3 585.3l5-3.2M795.2 596.9l3 2.2 1-1.5M792.2 583.0l1.6 5.6M792.5 592.4l3.4 2.2 2-3.1M794.0 587.5l3.2 3.1 -1.2 1.2M790.4 583.4l0.7 2.4 3.1-1M798.0 597.4l2-0.6 -0.4-1.6M791.4 588.1l5.4 2.2 -1 2.4M791.3 586.3l1.9 1.7 -1.2 1.4M792.4 585.0l1.2 3.4 1.7-0.6M792.6 583.2l2.1 1.8 -2.5 2.8M797.0 595.4l1.7 2.2M795.2 631.5l2-2.4M799.7 625.8l2.2-5.5 3.4 1.3M796.2 625.8l2.1 0.9 0.7-1.7M801.4 631.0l2.8 3.4 -1.4 1.1M800.1 623.9l2.7-1.1M795.8 630.3l4.6-3.3 2.2 3M796.3 630.7l3.4 3.8 2.8-2.5M792.4 627.7l3.8-3.5 -1-1.1M795.3 625.2l2 1 -0.9 1.9M797.3 625.1l2.4 1.3 -0.8 1.4M796.2 627.0l1.8 1.2 -2.2 3.2M798.4 623.1l2.6-0.9 -1-2.6M798.1 630.7l2.5 4.8 2.9-1.5M798.9 631.2l3.4 4.1M793.8 621.8l2.3-0.6M800.9 631.0l1.8 1.7M797.1 628.6l1.4 1.6M795.0 622.7l1.7 1.9M793.9 628.0l1.5 3.1 3.3-1.6M793.3 627.9l1.6-2M798.7 631.9l2.6 1.7M793.6 631.0l4-3.9 -1.4-1.4M801.7 630.7l1.8-3.5 3.5 1.8M797.2 621.8l1.3 3.7M792.1 625.2l2.9-4.8 -2.5-1.5M798.8 623.4l2.2-0.6M797.0 628.3l2.4-1.9M801.0 626.7l3.4-0.8M800.3 624.9l1.6-3.4M797.8 622.5l2.5-1.9 -2.2-3M800.7 629.0l1.9 2.4M800.0 626.6l3 3.6M796.3 623.1l3.3 4.2 -1.3 0.9M795.4 625.6l1 3.9 -3.4 0.9M799.1 630.8l3.3-0.9M800.9 625.1l1.8-4.2M797.0 621.4l2.4-3.6M792.2 553.3l2.6 2.7 1.9-1.7M795.2 557.6l2 2.7M798.4 551.6l4.1 2.7M795.6 557.7l2.6-2.6M791.7 548.1l2.5-2.9 2.7 2.3M792.3 546.8l2.1-2.6M796.5 551.2l3.8-2.3M792.3 546.1l2.9 3.6 -2.6 2.1M800.2 556.8l4 2.1 -1.2 2.3M791.9 552.1l0.7 1.9M799.2 557.1l1.7 1.9 2.4-2M798.3 555.1l1.7-4.1 -2.4-1M797.9 557.2l3.5-3.3M789.9 550.7l0.8 3.2 -2.6 0.6M791.9 554.1l1.9 1.1 1.4-2.5M794.1 546.3l2.6 1.9 1.6-2.2M792.3 551.6l2.8-2M798.8 554.6l3.5 4.6 2.5-2M794.3 556.5l4.5-1.2M792.3 553.8l1.9-1.1 1.4 2.5M796.2 549.8l2.1-2.8 1.5 1.1M793.3 548.3l2.8 2.4 2-2.3M789.9 550.6l2-1.8 1.6 1.7M795.2 555.0l1.3 4.4M797.7 550.4l1.7-4.4M791.8 547.3l2.6-2.2 1 1.2M795.7 550.1l2.6-4.1 3.3 2.1M793.5 552.4l1.5 2.7 -1.4 0.7M790.1 549.5l4.1-3M795.8 551.9l2.9-2.5M793.6 555.3l2.6-3 -1.5-1.3M793.6 546.6l2.1 4.4M797.9 553.8l2-3.5M798.5 559.6l2.9 3.1 1.1-1M796.1 548.9l4.2-3.4 -2-2.5M796.4 550.1l3.2 3.1M704.2 593.7l2.1-1.4 1.4 2M703.9 595.0l1.7 2.2 2.7-2.1M704.7 586.0l1.9 1.9 1.3-1.2M701.0 591.0l4.1 2.9M707.9 586.3l3.5 3.5 1-1.1M705.9 581.8l1.7 1.4M706.1 585.9l4 3.4 1.9-2.3M699.6 591.2l2.7 1.1M703.5 593.0l2 2.9M707.4 591.3l4.4-2.3 1.3 2.4M700.2 586.9l3.7-2.8M707.5 592.4l2.9-4.1 -1.8-1.3M704.0 582.8l2.1-1.5M705.1 581.8l1.1 4.2M706.2 586.4l3.5 4.8 2.6-1.9M700.3 593.0l1.6-1.4 1.4 1.6M702.9 583.0l1.1-2.3 3.4 1.7M705.0 587.3l4.5-1.8M705.5 593.9l1.5-3.1M705.5 595.5l1.7 1.9 -1.4 1.2M705.2 586.9l3-0.8M708.9 586.3l4.2 3.6M705.5 594.8l2.2 3.8M706.4 589.6l2.1 1.1 1.9-3.5M701.5 590.6l4.3-3.4 1.5 1.9M706.2 585.2l3.8 4.3M702.8 597.7l3-3M703.5 588.1l2.2 2.7M702.9 582.1l1.7-2.9 -2.1-1.3M706.9 594.0l3.6-4.4M706.7 590.3l1.4-2.2 -2.4-1.5M699.6 592.1l4.1-3.8 -2.5-2.7M702.2 589.2l2.7-4.8M703.2 588.1l3.7-2.9 -1.6-2M795.3 552.1l2.3-4.3M784.7 552.0l4.2-3.9M789.8 556.5l2.7 2.9M789.9 552.0l3.7-1M786.9 556.9l2-3.7M788.1 556.9l4.6 2.9M785.9 550.9l5-2.9 -1.6-2.9M783.0 552.9l4.2 1.9 1.6-3.6M794.5 554.6l1.5 3.7 2.9-1.2M790.2 555.2l1.2-3.3M793.9 553.9l3.8 2.7 -2.1 3.1M789.4 553.7l3.3-4M787.7 551.6l1.8-4.2M791.2 554.2l3.2 2.7 -1.7 2M784.9 551.2l1.9-4.1M793.0 558.1l1.8-1.7 2.2 2.3M787.7 551.6l3.2-4.8M783.0 554.8l2.7-3.2M794.3 550.8l2.2-0.8M787.4 552.3l1.7 5.5M792.6 557.1l3.8-2.5 -1.4-2.1M794.7 554.4l3.6 3.2 2.1-2.4M793.7 553.0l3.2 1.9M783.9 554.4l4-4.4M790.8 550.8l1.4 3.9 3.4-1.2M794.1 552.8l3.7 4M794.0 555.5l2.2 2.2 2.7-2.7M784.1 553.4l2.9-3.7M793.2 555.6l2.3 4.4 2.7-1.5M786.7 553.2l5.2-1.4M795.6 555.7l1.5 3.2M795.3 553.6l1.2 4.5M790.9 554.4l3.4-2.2M791.2 550.0l2 1M782.5 554.6l2.3-4M795.4 555.6l3 3.5M791.8 550.0l3.6-2.1M796.9 553.9l1.6 3.1 1.8-1M782.8 574.2l4.8-1.3M781.8 570.1l3.5 3 -2.4 2.9M778.5 581.3l4.8 2.6 1.2-2.3M779.1 577.9l1.1 2.4M781.2 572.8l1.3-2.1M776.3 581.8l2.4 5.3M783.1 570.7l2.8 1.2M782.1 573.4l1.4 2 1.9-1.4M778.6 580.9l1.9-0.7 -0.8-2.1M778.2 575.6l3.4 3.7M781.9 575.1l2.4-0.8M776.6 573.9l2-4.6 3.6 1.6M780.3 572.3l2.5-2.1 1.8 2.1M775.2 578.5l2.5-2.9M778.5 570.1l4.4 4 1.8-1.9M777.2 575.3l2.2 2.2M778.6 572.7l5.1 2.6M783.4 573.7l2.3 3.8 2-1.2M779.7 572.5l4.1-1.7 1.5 3.5M781.9 572.1l1.1 4.6M777.9 573.3l3.1 2.8 2.5-2.7M784.0 575.4l2.4-2.6 2.3 2.1M780.6 572.4l2.8-2.2M780.8 574.5l1.5 2.9M782.9 574.6l5.4 2.1 -1.3 3.5M783.6 572.7l3.5-3.3M776.9 571.3l1.7-1.5M781.3 572.5l2.4 4.4M779.6 569.5l4.1 3.6 1.4-1.6M784.2 571.6l3.8-1.5M780.0 579.5l1.9-0.8 -1.1-2.6M778.3 576.6l1.4-1.7 2.3 1.8M782.6 573.4l0.6 2.1M778.0 573.2l1.6 2.2M777.0 575.9l3.6-3.6M734.7 588.9l2.2-2.5M732.7 594.3l2 2.1 1.5-1.4M735.7 595.2l2.2 3.8 -1.5 0.9M742.9 588.1l3.9 4.4M738.7 596.1l3.3 3.6M737.7 593.6l3.3-1.2 -1.3-3.7M736.5 595.4l3-2.8M735.5 588.3l3.8-4 1.4 1.2M734.1 590.9l4-1.4 1.1 3.1M734.0 596.8l1.8 1.3 1.6-2.3M736.3 590.7l3-3.7M742.3 590.9l3.8 2.7 -1.3 1.9M741.1 591.6l5.3-2.6 -0.8-1.7M740.8 586.0l2.1-5.4M740.1 591.9l2.6 3.4M740.5 591.8l1.9-1.7M735.4 595.7l0.8 2.1M737.1 595.8l3.1-2.6M741.0 593.1l1.1 2.4M739.2 586.8l3.6 4.2M740.5 591.4l4.2-3.5M733.1 592.6l2.7-1.9 2 2.8M743.3 590.7l1.8 3.4M743.2 589.3l2.4 2.4M740.5 593.2l2.7-0.7M737.2 595.5l1.8 4.5M736.3 591.4l4-4.3M735.5 594.9l4.5-3.1 1.3 1.8M733.4 592.2l2.3-1.1M739.3 588.0l2.8 1.4 -1.4 2.8M733.8 593.7l2-3.9 -3.5-1.8M740.6 592.3l3 4.4 -2.7 1.9M738.1 595.9l3.1-3.2 -2.6-2.6M737.6 591.6l1.2-2.1M742.4 590.3l3.3 4.6 3.1-2.3M742.5 589.5l1.5 2.7M781.0 559.6l2.1 3.5 -2.9 1.7M780.7 554.6l2.6-2.1M781.1 554.8l1.3-1.8 -2.7-1.8M781.6 556.9l3.2-3.3 -2.2-2.1M783.9 556.6l4.1-4.3 -2.2-2M779.8 557.1l1.4 3.4M786.1 558.6l3.6 4.3 -1.3 1.1M783.0 556.5l2.7-2.1 1.4 1.9M783.5 557.5l2.7-2.6M784.2 555.4l1 3.4M785.8 559.0l2.7-4.3M779.3 555.1l1.8 4.5 2.7-1.1M782.4 555.4l1.9-3M781.6 554.6l2.3-1.6M781.2 558.8l4.8-1.8 0.6 1.5M784.4 558.9l2.9-3.3M780.6 552.0l3.5-3.1 -1.7-2M787.4 555.6l3.7-3.8 2.5 2.5M782.7 551.7l3.1-1.8 1.8 3M780.6 558.9l2.5-4.1M783.2 552.8l1.9-1.7M778.8 556.0l2.5-1.2 -1.4-2.9M784.0 554.2l2.2-5M779.5 558.4l1.8 1.3 1.6-2.1M783.8 559.0l3.4 2.9M785.7 556.9l5 2.3 -1.4 3.1M784.2 558.5l4.3 3.5 1.8-2.2M780.3 558.5l2.1-2.9M785.4 551.4l2 2.1M784.6 554.9l2.1-2.5 -2-1.8M781.9 557.3l1.7-1.1M777.3 593.8l3.5 2.4 2-2.9M776.8 591.7l3.8-4.1 -1.8-1.6M781.1 592.1l2.1-1.6 2.1 2.7M779.2 591.6l3.7-1.9 -1.6-3.1M781.1 589.4l4.3 3.6 -1.4 1.6M779.9 599.0l4.8-2.2 -1.6-3.4M777.4 592.1l2.5 3.7 -1.6 1.1M777.4 599.5l2.1 1.2M778.3 594.6l1.6-3.6 -2.9-1.3M776.9 594.0l2.7-2M778.6 590.0l2.8-2.1 -2.4-3.2M781.7 597.7l0.8 1.9M780.7 597.6l4.8-3.4 -2-2.7M779.3 599.9l3.3-1.9 2 3.4M780.1 594.4l2.5-4.7 1.5 0.8M778.0 595.3l2.8 2.6 1.6-1.7M777.8 590.4l3.6-1.2 0.8 2.7M780.5 593.9l2.1 2.4 1.5-1.4M778.5 591.3l4.3-1.1 0.5 2.1M780.2 592.6l3.4 4.6 2.6-2M777.6 593.6l3.4-4M778.1 597.8l4.5-3.3 -1.1-1.4M780.2 593.4l1.8 2.4 1.3-0.9M777.5 593.4l3.6 4.4M777.5 591.2l2.2-1.9 -2.5-2.8M782.5 593.1l1.8-2.8M780.1 597.1l4.9-3.3M776.5 594.0l3.1 3M778.6 594.1l2.2-2 2.2 2.5M778.3 591.8l2.3 2.6M781.0 590.4l1.2-2.5M778.6 599.8l4.2-2.2M781.6 590.9l1.6-2.7 -2-1.2M699.6 589.0l2.2 1.8M699.6 595.3l1.7 2M704.5 594.7l1.8-1.8 -1.9-2M708.8 587.1l2.1-5.1 -1.7-0.7M701.0 597.2l3.6 3.8M700.3 593.9l3-1.4M705.6 588.5l2.6-2.8M706.4 586.6l0.9 2.2 3.7-1.6M707.4 587.8l4.5 3M704.8 596.9l1.4 4.1 -1.8 0.7M699.9 594.1l2.5-4.6 -2.8-1.5M703.8 595.1l3.1 3.9M704.2 585.4l1.9-1.8M703.6 592.5l2.2 4.7 -2.1 1M705.6 590.8l1.2-2.1M705.6 585.7l2.1-0.8M706.0 592.1l1.9 2.8M699.0 590.6l3.1 1.4 1.6-3.5M699.0 591.6l3.9-3.5 2 2.2M708.6 590.1l1.8-2.1 -3-2.5M707.1 587.7l2.2-2.4 -2.2-2M702.6 595.6l1.6 4.2M704.4 597.1l3.2 4M706.5 594.3l2.9 3.7M702.1 595.1l1.7 2.2 2.7-2.2M703.9 586.9l2.2 3.4M706.8 586.5l1.3 1.7M700.7 593.5l2-2.1M703.3 591.7l3-1.8M758.3 532.7l1.4 3.3 3.1-1.3M762.6 526.1l2 2.7 1.3-1M758.6 540.4l2.9-3.9M761.9 532.3l3.7 4M757.9 536.7l5.5 2.1M756.6 534.1l3-2.4M758.5 540.1l4-2.3 1.2 2.1M762.7 526.5l1.6 5.1M761.3 539.5l2.1 3.1M762.7 531.7l1.1-2.4 -3.4-1.6M760.3 541.0l3.8 2.4 -1.1 1.7M759.0 529.1l2.9-2.5 -1.5-1.8M763.0 535.5l3.3 4.6 -3 2.1M760.4 532.1l2.5 1.2M764.8 529.5l4.2-3.5M766.8 528.6l1.2 3.9 2.5-0.8M762.3 538.8l2.3 1.1 1-2M758.0 535.6l2.8 4.6 -3.1 2M758.5 535.7l3.5 3.3 -1.4 1.4M763.5 530.6l1.1 2.6M765.6 526.4l2.3 1.4 -1 1.6M758.7 531.3l2.3 1.1 0.8-1.8M760.3 536.6l2.4-4 1.9 1.1M761.0 534.8l3.9-1.3M765.3 534.4l1.3 1.6 -1.9 1.5M760.4 540.3l0.8 2.5 -1.9 0.6M760.3 536.3l2.1-1.4M764.9 529.8l1.5 5.7 -2.5 0.6M758.9 534.3l3.1-1.6M765.3 533.1l2.6-1 0.9 2.3M765.2 535.8l3.7-1.4 0.8 2M764.4 532.7l4.6-3.8 -1.1-1.3M762.1 537.4l1.8 1.3 2-2.7M766.2 532.9l2.7-3.9M761.8 537.1l1.4 5.6 -1.6 0.4M765.2 531.6l3.7-4.6M763.5 526.4l1.3-2.4 3 1.7M756.5 535.9l2.8 5.2 1.4-0.7M804.7 613.2l2.1 2.5 -2.2 1.9M796.2 610.4l1.8-1.9 -2.8-2.6M797.3 605.0l2.4-2.2M799.2 608.7l1.2 3 1.9-0.8M797.1 611.4l2.6 5.1 -2.1 1.1M796.8 611.7l2.1-1 -1.5-3.1M801.5 611.9l1.3-3.2 2.1 0.8M798.5 615.2l1.1-2.8 2 0.8M800.8 609.4l2.5 2.5M794.6 608.1l3.4-0.9M801.2 610.5l2.6-3 1.2 1M796.0 608.9l2.1-4.7M799.8 616.3l3.2 5M802.2 615.6l3.2-3.5M802.1 612.1l2.6-3.1M804.0 612.7l3.3-2.7 1.8 2.1M795.8 609.4l2.3 2.5M797.9 604.4l1.6-2.6M802.2 614.8l1.1-1.7 -2.8-1.8M794.4 608.9l1.5 4.7 -2.8 0.9M794.4 611.1l3.4-4.3M797.5 616.0l3.8 3.4M798.0 612.9l4.3 1.9 1.6-3.6M797.4 610.4l3.8-4.3 1.9 1.7M797.8 615.2l3.9-2.8M799.5 613.4l1.3 3.4M801.1 616.5l2.6-2.5 1.5 1.5M798.2 613.2l1.8-3.8M801.0 605.0l3.2-3.8M799.8 604.7l1.2-1.8M796.8 605.2l2.3-1.7M796.8 615.0l1.2-2.9 1.9 0.8M804.3 610.5l1.4-1.9M801.7 607.7l2.3-3.4M796.1 605.9l1 2.1 -2.2 1.1M797.1 603.9l2 2.1 -2.9 2.7M806.5 607.7l4.2-4M803.6 614.5l2.1 1.6M803.5 610.9l3.2-1.5M809.3 607.5l2.9-1.2M802.8 612.0l5.8-1.4 0.7 2.9M807.5 609.7l3.4 3.8M806.1 606.2l1.5 4.2 -2.9 1M808.2 605.5l3.8 3.6M807.0 608.1l1.9-2.6 3.2 2.4M808.4 609.7l4.1-3.2M808.2 609.2l3 2.8M807.6 605.5l3.2 3.7 1.5-1.3M806.5 610.1l0.6 2.3 -1.5 0.5M804.3 604.3l2.8 2.8M806.9 605.4l2.1-0.8 -0.6-1.6M802.5 610.1l3.2 2.2 1.2-1.6M803.1 607.6l3 3.4 -2.3 2M808.2 608.1l2.3 3.2 1.7-1.3M808.1 605.2l3.8 2.1M804.1 611.0l2.4 1.9M805.2 607.0l1-2 3.1 1.6M803.0 608.9l2.8 4.2M805.4 613.1l2.4 2.1M807.5 609.9l1.5 4.8 1.6-0.5M809.3 607.0l2 3 2.1-1.4M808.4 608.6l3.7 1.9M808.0 606.8l3.2-1.1 1 2.9M806.4 612.1l2.2-5.5 3 1.2M803.4 613.7l2.7 2.9M802.7 610.3l2.7-0.7M807.8 613.8l3.3-4.2M807.5 611.6l3.9-3.1M806.9 608.1l1.9-2.8 -3.2-2.2M805.7 604.3l3.6 3.7 -1.8 1.7M802.5 611.6l1.1-2.7M807.5 605.2l1.4 5.4 2.1-0.5M806.1 609.5l1.9-1.1 -1.1-1.9M738.9 540.2l-2.8 4M792.1 527.9l3.5 2.4M805.0 599.4l-7.5 2.6M777.6 616.3l-1.6 4.4M726.6 596.2l6.4-0.9M756.1 550.4l2.6-3.1M790.2 608.4l1.3-6.1M782.5 542.4l-3.8-1M771.7 579.5l3.9 3.5M768.9 521.8l3.1-2.5M717.4 539.4l1.9-2.6M798.3 535.9l2.4-2.5M723.6 542.6l-3-4.7M734.7 587.8l4.7 4.7M764.6 614.3l2.9 4M805.9 558.2l3.6 5.5M778.3 611.9l-5.2 4.3M765.4 537.9l-2 3.1M765.3 582.6l-6.2-3M707.7 569.1l-4.2 5.8M717.9 588.3l3.8 0.1M774.7 548.1l-3-4.1M802.9 630.9l0.6 3.9M753.5 523.6l2.4-2.1M797.4 597.9l5.4-1.6M721.9 574.2l2.7-3.7M786.7 530.8l7.7 0.3M779.6 605.0l-7.3-0.2M794.6 577.9l3.8 5.7M713.5 548.7l3.2 0.9M771.6 578.0l-4.9 5.5M709.0 581.8l1.4-7.3M778.4 589.6l5.3 2.6M775.3 557.3l3 4.8M749.1 543.7l-3.9 5.9M776.0 558.8l1.5 4.4M718.1 564.3l-0.2-3.1M795.6 600.1l-4.6-5.9M805.0 572.1l-0.6 3M768.6 546.7l0.8-5.8M735.7 555.5l2.7-2M713.4 569.9l2.7-1.5M757.9 524.1l-6.5 1.5M721.6 550.3l-6.9 0.1M742.0 527.4l6.2-4.6M749.1 571.6l7.1-1.8M774.2 603.2l0.5 4.3M778.6 519.7l-5.9-3.5M773.4 536.1l5.2-0.6M793.2 528.7l-4.3 0.6M719.9 549.2l-1.2 2.9M798.5 595.1l1.9 3.9M804.9 628.3l-3.8 2M713.9 592.1l0.9 3.2M798.7 539.6l0.5-4.9M782.7 616.0l-7.2-3.2M740.6 546.4l5.3 5M709.2 582.5l-0.7-6.6M738.5 530.6l3.9-1.4M745.8 537.7l0.7 3.2M774.4 570.7l-1.4 6.5M759.6 616.8l-7.2 2M767.1 618.8l-3.3-1.5M713.4 565.7l-3.2-6.2M765.5 571.2l-3.9 5.1M751.7 534.8l4.9 5.4M750.9 594.8l3.3-1.6M781.5 527.9l-3.7-3.7M789.5 594.6l6.2-2.3M767.1 622.9l-0 3.4M802.2 517.1l-3.4-3.4M778.1 625.7l7.4 0.7M760.4 527.0l-4.5 3.9M763.5 602.6l-4.6-6M779.0 617.1l2.1-2.7M775.8 568.2l4.9-0.8M802.6 519.3l2.1 3.2M752.5 547.9l-5.7-0.6M754.3 568.7l6.2-0.4M767.8 581.3l-1.5 5.7M787.6 529.3l1.3 1.2M784.7 538.2l-4.3 0.3M785.2 540.6l-3.4 0.3M783.7 550.4l-1.9-0.3M790.8 525.5l-1.6 1.9 -1.6 1.9 -1.7 1.9 -1.3 2.1 -0.4 2.5 0.4 2.4 0.6 2.5 -0.2 2.5 -0.1 2.5 -0.6 2.4 -0.7 2.4 -1.5 2 -2.2 1.2 -2.4 0.6M753.2 553.2l3.6-2.6M756.7 559.8l-2.7 0.9M758.3 572.1l3.8-1.4M744.4 544.6l1.4 2.1 1.8 1.7 2 1.5 2.2 1.2 1.4 2.1 1.1 2.2 1.3 2.2 1.1 2.2 0 2.5 0.3 2.5 0.8 2.4 -0.1 2.5 0.5 2.4M744.4 536.0l-1.9-1.1M752.0 523.2l-1.6 2 -0.9 2.3 -1.4 2 -0.9 2.4 -1.6 1.8 -1.2 2.2 -0.9 2.4 -0.8 2.3 -1.6 2 -1 2.3 -0.9 2.3 -1.7 1.8 -2.3 1 -2.2 1.3 -1.9 1.6 -2 1.5 -2.1 1.3 -2.4 0.7M703.8 577.1l-0.4 3.2M706.3 577.2l-2.5-0.1M793.5 576.5l3.2-1.5M792.2 574.3l-3.9 1.1M792.0 571.8l1.5 0.1M789.2 567.9l-2.7 0.9M784.8 565.5l-3.2 2.5M775.5 562.2l-2.2 1.6M770.7 560.8l-0.9 1.4M761.2 559.1l-0.3-2M794.9 578.6l-1.4-2.1 -1.3-2.1 -0.2-2.5 -1-2.3 -1.8-1.7 -2.1-1.3 -2.3-1.1 -2.5-0.1 -2.3-0.9 -2.3-1 -2.2-1.2 -2.4-0.8 -2.4-0.6 -2.3-1 -2.2-1.1 -2.5-0.2 -2.5 0.5 -2.4 0.2 -2.5-0.4 -2.5-0.1 -2.5-0 -2.5 0.2M791.6 619.4l-0.7 2M793.5 621.1l3.4-1.2M789.7 617.9l2 1.5 1.9 1.7 1.8 1.7 2.4 0.8 2.2 1.1 2.2 1.2 1.5 1.9 1.2 2.3M794.2 636.5l3.1-1.4M789.2 630.9l1.6 1.9 1.8 1.7 1.6 2M798.1 539.4l-0.2 1.6M764.7 542.0l2.2-1.2 2-1.5 2.1-1.3 2.5-0.5 2.5-0.3 2.5 0.2 2.3 0.8 2.4 0.6 2.5 0.6 2.5 0.1 2.5-0 2.5-0.3 2.4-0.3 2.5 0.5 2.5-0.5 2.4-0.6 2.1-1.3M793.9 605.0l-2.2-3.2M803.3 601.9l-2.1-3.4M786.7 612.0l2-1.6 1.7-1.7 1.7-1.9 1.8-1.7 2.1-1.3 2.4-0.8 2.5-0.2 2.3-0.9 2.5 0.2M795.3 556.2l4.4-0.5M803.3 547.0l-0.8-2.8M791.3 565.2l1.5-2 1.1-2.2 0.9-2.4 0.5-2.4 1.5-2 0.9-2.4 1.8-1.7 1.5-1.9 2.2-1.2 2.4-0.7M805.4 621.6l-1.1-2.4M798.3 621.5l2.3 0.9 2.5 0.1 2.3-0.9M737.8 554.5l-0.8-1.6M734.1 560.9l-2.8-2.1M733.7 565.8l2.6 0.8M735.6 570.5l2.8 0M736.5 572.8l-1.7 0.4M737.7 574.9l-3.2 1M740.9 578.7l1.5-0.9M742.3 552.7l-2.5 0.4 -2.1 1.4 -1.5 2 -0.6 2.4 -1.5 2 -0.7 2.4 0.2 2.5 1 2.3 0.9 2.3 0.9 2.3 1.3 2.2 1.2 2.2 1.9 1.6 2.4 0.6 2.2 1.2M764.3 551.6l-2.3-1.4M767.1 547.5l-3.1-2.4M768.6 545.5l-2.3-2.4M769.1 543.1l-3.5-2.1M770.2 540.8l1.4 0.8M775.9 527.1l2.6 0.3M779.4 520.5l-3.7-1.3M760.5 560.8l0.6-2.4 1-2.3 1-2.3 1.1-2.2 1.7-1.9 1.1-2.2 1.6-2 0.5-2.5 1.1-2.2 1.2-2.2 1-2.3 1.2-2.2 1.1-2.2 0.9-2.3 0.3-2.5 1.1-2.2 1.6-2 0.7-2.4 1.4-2.1M802.6 522.3l1.9 1.6M785.2 571.5l3.2-2.6M790.3 579.9l2-1M791.2 589.7l3.4-0.2M791.6 592.2l3.9 1M791.9 597.2l-2.1 1.4M792.0 609.6l3.6-0.3M789.8 616.8l-3.9-2.2M779.4 566.8l2 1.5 1.7 1.8 2 1.5 1.9 1.6 1 2.3 1 2.3 1.3 2.1 0.7 2.4 0.5 2.5 -0.1 2.5 -0.2 2.5 0.3 2.5 -0 2.5 0.4 2.4 -0.4 2.5 0.3 2.5 -0.1 2.5 0.3 2.5 -0 2.5 -0.8 2.3 -0.5 2.5 -0.9 2.3 -1.3 2.1M722.8 576.8l-0.9-4.3M720.3 576.9l0.2-3.9M713.2 578.9l0.6 1.8M706.4 581.6l-0.5-1.9M701.5 582.2l-2.1-2M727.7 576.5l-2.5-0.4 -2.4 0.7 -2.5 0.1 -2.4 0.4 -2.5 0.4 -2.2 1.2 -1.9 1.6 -2.4 0.7 -2.5 0.5 -2.5-0.1 -2.4 0.6M786.5 594.6l3.6 0.7M788.0 589.8l-3.7-1.6M789.2 585.0l-2.5-1.4M788.7 580.0l2.4-0.7M787.7 575.1l2.4-1M787.6 572.6l2.1-0.4M789.6 565.6l1.5 0.4M791.1 563.7l2.6 1.7M792.2 558.8l2.9 0.6M791.5 556.4l-3.3 0M785.5 599.5l0.5-2.5 0.6-2.4 0.9-2.3 0.5-2.5 0.9-2.3 0.3-2.5 -0.4-2.5 -0.1-2.5 -0.4-2.4 -0.6-2.4 -0.1-2.5 0.1-2.5 0.5-2.5 1.4-2 1.5-2 0.9-2.4 0.2-2.4 -0.6-2.5M711.8 598.5l1.8-3M709.3 598.2l-0-2.1M723.7 599.9l-2.4 0.7 -2.5 0.2 -2.3-0.8 -2.5-0.2 -2.2-1.2 -2.5-0.4 -2.2-1.2 -2.4-0.6 -2.3-0.9M729.7 561.0l1.5-2.8M727.4 560.0l-1.8 2M722.5 560.5l-1.4-3M720.1 561.3l-0.6 4.1M715.2 562.0l-0.3-2.2M712.8 562.8l-0.4 1.7M731.5 562.8l-1.8-1.8 -2.2-1 -2.5-0.2 -2.5 0.7 -2.3 0.8 -2.5 0.4 -2.5 0.3 -2.3 0.8 -2.5 0.2 -2.4-0.7 -2-1.5 -2.3-1M781.4 546.7l-0.8 3.9M783.4 548.3l2.8-1.5M795.1 550.0l-0.8-4.2M797.5 550.2l-0-2.7M779.1 546.0l2.4 0.8 1.9 1.5 1.9 1.6 2.4 0.9 2.5 0.1 2.4-0.5 2.5-0.4 2.5 0.2 2.5 0.2 2.5-0.3 2.5 0M777.8 608.0l3.3-2.7M770.7 598.1l0.2-2.2M768.3 597.5l1.8-3.5M766.2 596.1l-1.9 4.1M756.5 594.4l-0.2-1.9M778.2 615.4l0.3-2.5 -0-2.5 -0.7-2.4 -1.5-2 -0.9-2.3 -1.1-2.3 -1.5-2 -2.2-1.2 -2.4-0.7 -2.1-1.3 -2.5-0.4 -2.1-1.2 -2.5-0.4 -2.5 0.2 -2.5 0.3M768.7 550.3l2.3 0.3M767.7 548.0l-4.3 0.7M760.5 541.5l-1.8 1.4M756.7 538.4l-2.2 2.5M755.7 536.1l3.7-2.2M754.6 533.8l-1.4 1.1M753.3 526.5l3.5-1.4M762.0 562.6l1.6-1.9 2.1-1.3 1.6-2 1.1-2.3 0.5-2.4 -0.2-2.5 -1-2.3 -1.1-2.2 -1.8-1.8 -1.9-1.5 -2.4-0.9 -2-1.4 -1.8-1.8 -1-2.3 -1.1-2.2 -0.3-2.5 -0.3-2.5 -0.7-2.4 -0.2-2.5M786.4 616.1l-2.5 0.2M774.3 600.6l1.7-3.3M764.5 593.2l2.7-3.1M763.6 590.8l1.9-1.8M761.2 586.6l-2.1 0.5M787.8 618.2l-1.3-2.1 -1.4-2.1 -0.9-2.3 -1.4-2.1 -1.3-2.2 -1.4-2 -2-1.5 -1.8-1.7 -2-1.6 -2.2-1.1 -1.6-1.9 -2.3-1.1 -2-1.4 -1.7-1.9 -0.8-2.4 -1.7-1.8 -0.8-2.4 -0.5-2.4M717.3 551.6l-2.4-1.7M714.5 555.7l3 2.5M706.1 580.9l4.4 0.1M703.8 588.0l1.7 1.7M718.8 549.6l-1.5 2 -1.4 2.1 -1.4 2.1 -0.6 2.4 0.1 2.5 -0.2 2.5 -1.2 2.2 -1.6 1.9 -1.8 1.7 -1.3 2.1 -0.7 2.5 -0.4 2.4 -0.7 2.4 0 2.5 -0.7 2.4 -0.9 2.3 -0.7 2.4 -0.5 2.5 -1 2.3 -1.1 2.3M736.7 599.5l1.3 1.8M739.2 600.1l0.4-2M753.7 608.6l1.4-1M770.3 618.6l-0.7 3.6M734.3 599.8l2.5-0.3 2.4 0.6 2.5 0.2 2.3 1 2.4 0.6 2.2 1.3 1.7 1.8 1.8 1.7 1.6 1.9 2.1 1.4 2.3 1.1 1.8 1.7 1.9 1.7 1.8 1.7 1.9 1.6 2.3 0.9 2.5-0.1 2.4 0.6M785.0 576.3l-1.3-4.3M790.0 576.4l0.5 1.6M792.3 577.4l-1 4.1M796.3 580.1l3-2.5M798.6 581.3l-2.6 3.4M800.9 582.1l1.3-2.7M782.6 576.6l2.5-0.3 2.5-0.3 2.4 0.4 2.3 1 1.8 1.8 2.3 0.9 2.2 1.1 2.4 0.9 2.2 1 1.8 1.9M703.2 583.7l-0.8 3.7M708.1 582.7l-2.4 0.8 -2.4 0.2 -2.5 0.5M791.6 547.1l-0.5-3.4M794.1 547.3l0.3-2.6M786.9 548.4l2.3-1.1 2.4-0.2 2.5 0.3 2.4-0.7 2.4-0.7 2.5-0.1 2.4 0.9 1.9 1.5M743.2 528.0l-3.6-1.6M743.3 525.5l-2.5-0.8M744.3 523.2l-4.4-0.9M739.7 537.2l1.2-2.2 1.2-2.2 0.3-2.5 0.8-2.3 0.1-2.5 1-2.3M802.9 530.0l-3.6 1.6M804.1 532.2l3.2-0.6M802.2 527.6l0.6 2.4 1.3 2.2M801.4 588.9l-0.8-1.6M797.9 592.3l2-1.5 1.5-2 1.6-1.9 2-1.6M790.5 539.5l-1.6-1M788.1 565.5l-2.3 1.6M793.2 571.0l-1.8 2.2M794.2 533.0l-1.5 2 -1.1 2.3 -1.1 2.2 -0.2 2.5 -0.7 2.4 -1.5 2 -0.7 2.4 -0.7 2.4 0 2.5 -0.8 2.4 -0.1 2.5 0.9 2.3 0.2 2.5 1.2 2.2 1.8 1.8 1.6 1.9 1.8 1.7M784.8 628.0l-3.5-1.3M784.8 625.5l-2.9-1.8M784.2 620.5l-2.3-0.1M783.4 618.1l-2.6 1.1M782.6 615.8l-1.4 0.8M784.3 632.9l-0-2.5 0.5-2.4 0-2.5 -0.2-2.5 -0.4-2.5 -0.8-2.4 -0.8-2.3 -1.5-2 -1.5-2M722.9 567.3l0-2.2M718.1 566.0l-1-4.1M713.5 564.2l0.7-2.5M727.8 566.4l-2.4 0.8 -2.5 0 -2.3-0.9 -2.5-0.4 -2.2-1.2 -2.4-0.6 -2.1-1.4 -1.6-1.9 -2.2-1.2 -2.1-1.3M743.2 528.1l3.8-0.2M744.6 526.0l-2.3-3.8M741.6 532.8l0.5-2.5 1-2.2 1.5-2.1 1.8-1.7 1.9-1.6M761.1 587.8l1.1-1.1M758.4 583.7l-2.8 2.1M758.2 581.2l3.1-0.3M767.9 590.7l-2.5-0.3 -2.3-1 -1.9-1.6 -1.6-1.9 -1.2-2.2 -0.2-2.5 -1-2.3 -1.6-2 -0.6-2.4 -1.2-2.1 -2-1.6M733.1 538.9l0.9 2.3M738.0 538.3l-0.9 3.9M724.5 534.3l1.9 1.6 2.1 1.4 2.1 1.3 2.5 0.3 2.4-0.6 2.5 0.1 2.4-0.7 2.2-1.3 1.8-1.7 1.7-1.8 1.9-1.6 1.8-1.8M693.7 564.8l3.2 2.4 3.9 1.1 3.9 0.7 3.9 0.9 4 0.4 3.9 0.4 4 0.3 4 0.3 3.9-0.9 3.8-1.4M693.4 546.8l2.9 2.7 3.2 2.4 2.8 2.9 3.1 2.6 2.5 3.1 1.9 3.5 2.2 3.4 2 3.4 2.9 2.8 3.6 1.7 3.7 1.4 3.7 1.6M765.7 511.8l4 0.5 4-0.3 3.9 0.5 4 0.2 3.9-0.9 4-0 3.8-1.4 3.5-1.8 3-2.7 2.9-2.8M725.2 526.2l4-0.2 4-0.6 3.9 0.3 4 0.5 3.9 0.7 4-0.4 3.7-1.5 3.6-1.7 4-0.5 3.9-0.8M748.7 513.0l4 0.2 4 0 4-0.3 3.9 0.7 3.6 1.8 3.5 1.9 3.6 1.7 3.6 1.8 3.2 2.4M697.6 578.2l3.3 2.2 3.4 2.1 3.6 1.8 3.9 1 3.8 1.1 3.9 0.9M699.2 579.7l3.3 2.3 3.1 2.4 2.6 3.1 1.3 3.8 1.9 3.6 2.7 2.9 2.9 2.7 2.5 3.1 2 3.5M659.7 533.4l3.9 0.8 4 0.6 3.9-0.4 4-0.7 3.9-0.9 4 0.3M660.7 533.5l4 0.4 4 0.1 3.8-1.3 3.9-0.6 4 0.5 4 0.5 3.6 1.6 3.2 2.4 3.5 1.9M673.0 530.6l3.9-0.6 4-0.2 4 0.7 3.8 1.1 4 0.6 3.5 1.9 3.6 1.8 3.9 1 3.6 1.7 3.8 1.1 3.8 1.2M764.3 511.2l4 0.3 4-0 4 0.5 3.9-0.6 4-0.5 4 0.1 3.9 0.8 4-0.6 3.9-0.5 4-0.3 4 0.3M698.4 527.1l4 0.2 4-0.4 3.9-0.9 4-0.1 3.8-1 3.8-1.4 3.6-1.7 3.6-1.8 3.3-2.3M689.0 546.2l3.8-1.2 4-0.4 4 0.6 3.8 1.2 3.5 1.9 3.9 1M701.2 571.8l4 0.4 3.9-0.8 4-0.4 3.8-1.2 4-0.6 4-0.1 3.9-0.5M798.0 696.4l1.5 1.3 1.5 1.4M791.2 735.3l5 3.4 4.9 3.4M754.4 724.4l4.9 3.4 5 3.4 3.3 2.3M741.8 741.1l5 3.3 5.1 3.2 3.3 2.2M759.0 754.4l5 3.4 4.9 3.3 5 3.4 5 3.4 1.6 1.1M734.1 753.3l4.3 4.2 4.4 4.1M748.3 763.7l5.1 3.1 5.1 3.2 1.7 1M763.8 775.4l5 3.2 5.1 3.3 5 3.2 1.7 1.1M743.0 767.7l5.2 2.9 5.3 3 5.2 2.9 5.2 2.9 1.8 1M765.8 784.9l4.7 3.7 4.8 3.6 4.7 3.7 4.8 3.7M741.9 796.9l4.9 3.5 4.8 3.5 4.9 3.5 4.9 3.5 1.6 1.2M724.0 793.6l4.8 3.5 4.9 3.6 4.8 3.5 4.9 3.6 3.2 2.4M711.7 796.7l4-4.5 4-4.4 4.1-4.5M725.5 778.4l3.9-4.5 4-4.6M736.3 764.2l4-4.5 4-4.4 4-4.5 2.7-3M773.7 714.5l3-5.2 2-3.5M722.8 799.6l3-5.2 2.9-5.2 3-5.3 2.9-5.2 3-5.2M796.2 702.2l4.1-4.4 4.1-4.3 1.4-1.5M737.1 806.0l4.2-4.3 4.2-4.3 4.2-4.3 4.1-4.3 2.8-2.9M779.9 749.1l3.5-4.9 3.6-4.8M789.2 736.8l3.6-4.8 3.6-4.8 2.5-3.2M802.7 718.9l1.4-1.5 1.3-1.4M786.1 752.5l4.2-4.2 4.3-4.3 4.2-4.2 2.9-2.9M776.9 814.6l3.9-4.5 4-4.5 3.9-4.6 4-4.5 3.9-4.5M791.1 757.5l-3.4-2.4M786.5 759.2l-0.8-4M782.0 757.3l1.6-4M763.2 745.8l0.5-2.2M756.4 742.8l-2.2 3.2M746.6 741.3l-1.2-4.1M741.7 742.2l-0.7-2.8M794.3 753.8l-1.2 2.2 -2 1.5 -2.1 1.4 -2.4 0.3 -2.5-0.5 -2-1.4 -2.4-0.9 -1.9-1.6 -1.6-1.9 -2.2-1.1 -2.5-0.5 -2.2-1.3 -1.6-1.8 -2.3-1 -2.1-1.4 -2.3-1.1 -2.4-0.7 -2.2-1.1 -2.5-0.3 -2.4-0.4 -2.4-0.8 -2.5-0.1 -2.4 0.7 -2.5 0.2M762.8 759.1l2.3 0.4M763.7 749.5l-1.9-0.8M763.6 764.0l-0.7-2.4 -0-2.5 -0.3-2.5 -0.5-2.4 0.5-2.5 1.1-2.2 1.7-1.8 1.4-2.1M791.2 779.9l0.1-2.3M785.5 784.1l-2.1-1.8M784.9 786.6l3.1 0M784.4 789.0l-2.1 0.5M784.4 794.0l2.2-0M783.5 803.6l2.1 2M780.4 807.4l-3.2-2.1M780.0 809.9l-3.1 1.2M780.6 812.3l3.1-1.2M780.3 814.8l3 0.8M798.6 780.8l-2.5 0.1 -2.4-0.6 -2.5-0.4 -2.4 0.6 -2 1.5 -1.3 2.1 -0.5 2.5 -0.5 2.4 0.3 2.5 -0.4 2.5 0.5 2.5 0.2 2.4 -0.4 2.5 -1.2 2.2 -1.9 1.6 -1.1 2.2 -0.5 2.5 0.7 2.4 -0.3 2.5M754.3 743.5l4.2 0.4M754.7 746.0l2.8-0.9M755.0 748.5l-3.3 1.4M761.5 761.8l2.4-0.4M761.4 764.3l-1.9 0.3M761.3 766.8l2.4-0.1M761.5 769.3l-2.5 0.9M764.2 776.3l1.7-0.7M766.8 783.1l2.6-0.1M768.3 787.9l-2.8 2.6M769.0 790.3l-2.3 1.7M770.3 792.4l-2.7 3.3M773.2 796.4l-1.4 0.6M754.6 738.6l-0.3 2.5 0 2.5 0.4 2.4 0.3 2.5 0.8 2.4 0.9 2.3 0.7 2.4 1.5 2 1.6 2 1 2.3 -0.1 2.5 -0.1 2.5 0.1 2.5 0.9 2.3 0.8 2.4 1.1 2.2 1.4 2.1 1 2.3 0.2 2.5 1 2.3 0.5 2.4 0.6 2.4 1.4 2.1 1.8 1.8 1 2.3 1 2.3 0.8 2.3 -0.1 2.5 -1 2.3M764.9 749.5l1.9-1.3M772.1 756.4l1.5-1.2M773.9 758.1l2.6-1.8M783.3 765.6l2.1-3.8M785.8 765.9l-0.2-3.5M788.1 766.9l-0.5 3.6M803.5 787.9l2.6-1.4M804.6 790.1l-1.7 2.9M762.7 748.3l2.2 1.1 1.8 1.8 1.9 1.7 1.8 1.6 1.7 1.9 1.8 1.7 1.1 2.2 1.7 1.8 1.9 1.6 2.4 0.8 2.3 1.1 2.5 0.3 2.3 0.9 2.3 1 2.3 0.9 1.8 1.7 1 2.3 0.4 2.5 1.2 2.2 1.8 1.6 1.3 2.2 1.4 2 1.2 2.2 0.7 2.4 1.1 2.3M747.6 742.4l-3.5 1.8M766.7 750.9l-2.5 0.3 -2.5-0 -2.4-0.6 -2.4-0.6 -2.5-0.4 -2.1-1.5 -1.9-1.6 -1.6-1.9 -1.2-2.2 -0.1-2.5 -1.1-2.2 -0.2-2.5M758.8 767.1l3-1.8M770.3 781.7l1.9 0M770.0 784.2l-3.3-0.3M770.1 786.7l2.3-0.3M754.6 760.9l1.4 2.1 1.2 2.1 1.6 2 2 1.5 1.8 1.7 2.2 1.1 1.8 1.8 2.1 1.4 1.3 2.1 0.4 2.5 -0.2 2.5 -0.3 2.5 0.2 2.5 -0.4 2.5 0.7 2.4 0.2 2.5 -0.2 2.4 -0.1 2.5M784.3 798.1l1.1 3.4M782.6 799.9l-2.9-0.5M779.4 803.8l2.1 1.5M777.6 805.5l0.7 2.4M776.7 807.8l2.7 2.6M775.0 809.7l-2-1.8M774.1 812.0l1.3 1.5M796.3 795.1l-2.5 0.2 -2.4 0.6 -2.4 0.7 -2.5 0.3 -2.2 1.2 -1.7 1.9 -1.4 2 -1.7 1.8 -1.9 1.7 -0.9 2.4 -1.6 1.8 -1 2.3 -0.2 2.5M773.2 747.3l1.1-1.3M776.2 751.3l-3.1 2.2M777.6 753.3l2.3-1.6M765.6 738.2l0.8 2.4 0.8 2.3 1.7 1.8 2.2 1.3 2.1 1.3 1.5 2 1.5 2 1.5 2M794.3 788.5l0.9 4.2M796.3 787.0l-1.2-2.9M800.1 783.8l2.5 3.4M802.3 782.6l1.5 1.5M804.6 781.6l1 1.8M784.6 787.9l2.5-0.1 2.3 0.9 2.5 0.5 2.4-0.7 1.9-1.5 1.7-1.9 2.1-1.3 2.2-1.2 2.3-1M746.5 745.1l-2.3 1.1M759.6 748.7l-2.4 0.5 -2.5 0.7 -2.4-0.3 -2.3-1 -2-1.5 -1.5-2 -1.3-2.2 -1.4-2M789.2 795.5l1.3-1.8M776.9 787.6l-2.3 2.5M774.4 787.7l-0.4 2M772.1 788.8l-1.3-3.9M769.1 792.8l3.6 1.7M765.2 804.3l-2.5 0.4M792.3 799.3l-1.1-2.2 -2-1.6 -1.8-1.7 -2.3-1.1 -1.8-1.7 -1.7-1.8 -2.2-1.1 -2.5-0.5 -2.5 0.2 -2.3 1 -1.6 1.9 -1.4 2.1 -1.4 2 -0.7 2.5 -1.2 2.1 -0.3 2.5 -0.3 2.5 0.8 2.3 0.1 2.5 -0.3 2.5M792.0 730.5l-3.2-2.7M785.0 737.5l2-1.6 1.4-2 1.7-1.9 2-1.5 1.9-1.5 2-1.6 2.3-1 2.4-0.2 2.3-1.1 2.4-0.5M774.5 788.0l-0.6 2.4M776.3 789.8l-1.6 3.8M785.8 791.2l-1.4-4.2M760.9 782.8l2.5 0 2.4 0.6 2.4 0.7 2.4 0.9 1.9 1.6 2 1.4 1.8 1.8 2.3 0.9 2.3 1 2.5 0.1 2.4-0.6 2.4-0.8 2.4 0.2M796.6 784.8l0.6 3.6M794.2 785.6l-1-2.4M789.7 787.7l1.3 2.4M779.1 797.9l1.8 1.5M777.8 800.0l-3.8-1M775.2 804.2l3 1.6M774.1 809.0l1.8 0M804.9 779.4l-1.9 1.6 -2.4 0.9 -2.1 1.3 -1.9 1.6 -2.4 0.8 -2.3 0.8 -2.2 1.3 -2.1 1.3 -1.6 1.9 -1.4 2.1 -2.1 1.3 -2.1 1.4 -1.3 2.2 -1.3 2.1 -1.3 2.2 -1.4 2 -0.9 2.3 -0.1 2.5 0.4 2.5 -0.2 2.5M767.3 748.2l-3.9 1M766.8 750.7l3.2 2.1M765.3 757.9l-1.6-1M765.2 760.4l-2.7 0.6M766.3 762.7l2.8 0.2M769.3 766.6l3.3-1.2M771.0 768.4l1.3-0.9M772.9 770.1l-2.2 2.9M775.1 771.1l-0.6 2M770.5 736.4l-0.7 2.4 -1.3 2.1 -0.5 2.5 -0 2.5 -0.7 2.4 -0.5 2.4 -0.1 2.5 -0.4 2.5 -1.1 2.2 0 2.5 1 2.3 1.3 2.2 1.8 1.7 1.7 1.9 1.8 1.7 2.3 1 2.2 1.3 2.4 0.5 2.5 0.5 2.4-0.5 2.4-0.8M781.1 738.7l-2 3.4M776.2 738.7l-1-2.5M769.5 741.7l-1.3-2.6M753.1 751.6l1 4M750.9 752.7l0.7 2.5M746.8 755.5l-1.3-1.6M742.6 758.0l0.6 2.3M740.3 759.0l1.3 1.8M786.1 738.4l-2.5 0.4 -2.5-0.1 -2.4-0.4 -2.5 0.3 -2.5 0.5 -2.2 1.1 -2 1.5 -2.3 1 -2.5 0.3 -2.3 0.8 -2.5 0.6 -1.9 1.6 -1.3 2.1 -1.4 2.1 -2.2 1.3 -2.2 1.2 -1.8 1.7 -2.3 1.1 -2.3 0.9 -1.9 1.6 -2.3 0.9M767.6 747.2l0.4 4.5M762.8 748.0l-1.6-1.7M758.7 754.1l2.6 3.6M742.1 762.4l-0.5-2.4M739.8 761.6l-0.5 3.1M770.1 747.3l-2.5-0.1 -2.5-0 -2.4 0.8 -1.8 1.7 -1 2.3 -1.3 2.1 -1.7 1.8 -1.1 2.3 -1.7 1.8 -2.3 1 -2.3 0.9 -2.4 0.6 -2.5 0.1 -2.5-0.2 -2.4-0.9 -2.2-1 -2.5-0.2 -2.5-0.1 -2.3 0.9M746.5 758.3l1.3 4M750.9 756.0l-2 1.5 -2.4 0.8 -2.5-0 -2.4-0.6 -2.3-0.9 -2.1-1.5 -2.4-0.6 -2.5 0.3M804.2 701.5l1.4-2.1M775.4 742.0l-0.8-1.3M783.5 736.2l1.5 2M770.4 749.9l0.2-2.5 0.9-2.3 1.8-1.8 2.1-1.3 2-1.5 2.2-1.1 2-1.5 1.9-1.7 1.9-1.6 2.1-1.3 2.5-0.5 2.1-1.3 2.4-0.5 2.3-1 2.5-0 2.5 0.1 2.5-0.5M795.3 804.8l-2.1 1.5M795.2 797.3l-0.2 2.5 -0.2 2.5 0.5 2.4 -0.6 2.5 -1.1 2.2 -0.4 2.5M788.2 766.2l-2 3.8M786.0 765.0l2.2 1.2 2.4 0.8 2.2 1.2 2.4 0.7 2.3 0.9 2.5-0 2.4-0.8 2.5 0.3M785.2 798.1l1.6 1.9M787.6 797.5l0.7-3.3M780.3 803.6l1.4-2.1 1.4-2 2.1-1.4 2.4-0.6 2.1-1.4 2.4-0.8 2.3-1.1 2.1-1.3M794.7 739.1l-3.4 1.5M798.6 742.2l1.7-3.9M800.6 743.7l2.1-1.3M805.1 745.9l3.3-2.3M789.2 734.4l2.3 1 2 1.6 1.1 2.2 1.9 1.6 2.1 1.4 2 1.5 2.3 0.8 2.1 1.4M767.6 717.5l0.2-1.5M762.7 717.2l0.3-1.8M760.2 717.7l-2-2.9M758.1 719.0l-1-2.1M770.0 718.1l-2.4-0.6 -2.5 0.1 -2.5-0.4 -2.4 0.5 -2.2 1.3 -1.6 1.9M778.4 742.8l-0.7-2.3M781.4 731.9l-2.6-0.3M782.5 722.0l-2.8-1.2M783.0 719.5l-1.6-1.2M781.8 714.8l2.4-1.7M780.2 710.0l2.9-3.4M763.1 750.6l1.9-1.6 2.3-1 2.2-1.2 1.8-1.8 2.2-1 2.5-0.5 2.4-0.7 2.1-1.4 1.3-2.1 0.4-2.5 -0.4-2.4 -0.5-2.5 0.5-2.5 0.2-2.4 0.1-2.5 0.4-2.5 0.5-2.5 -0.1-2.4 -1.2-2.3 -0.6-2.4 -0.9-2.3M743.5 746.5l-1.4-3.3M750.5 748.6l-2.5-0.4 -2.1-1.4 -2.5-0.3 -2.3-0.8M726.8 808.5l-1.5 1.4M721.8 808.3l-1.7 2.3M711.2 802.1l-2.1 1.2M709.9 800.0l0.8-1.4M739.1 809.6l-2.4-0.6 -2.5 0 -2.5-0 -2.5 0.1 -2.4-0.7 -2.5 0.2 -2.5-0.3 -2.4-0.7 -2.1-1.4 -2.3-0.9 -2-1.5 -1.8-1.7 -1.3-2.1M731.5 802.1l3.2-2.4M728.8 792.5l3.4-2.7M727.5 790.4l-1.9 0M725.4 789.0l-2.1 2.9M723.3 787.6l-2.5 2M718.4 787.6l-2.3-3.6M716.2 788.7l-3.4-2.4M733.6 806.7l-1.1-2.3 -1-2.2 -0.6-2.5 -0.7-2.4 -0.5-2.4 -0.9-2.3 -1.3-2.2 -2.1-1.4 -2.1-1.3 -2.4-0.6 -2.5 0.5 -2.2 1.1M739.1 806.2l1.6 1.9 1.9 1.6 1.2 2.2M756.3 807.6l-1.5 4M760.2 810.6l-0.9 2.2M769.9 811.8l1.3 2.1M750.6 799.7l2.1 1.4 1.4 2 0.7 2.5 1.6 1.9 1.7 1.8 2.2 1.3 2.2 1 2.4 0.7 2.5-0.3 2.5-0.3M804.6 794.6l-2-0.9M804.2 799.5l2.8-1.1M804.4 804.4l-3.7 1.1M805.9 792.5l-1.3 2.1 -0.7 2.4 0.4 2.5 0.4 2.5 -0.3 2.4 0.1 2.5 0.5 2.5 0.2 2.5M767.0 761.2l2.5-3M774.6 782.1l-0.9-2.3 -0.8-2.4 -1.5-2 -0.8-2.3 -1.3-2.2 -0.5-2.5 -0.2-2.4 -0.8-2.4 -0.8-2.4M785.8 776.0l1.6-3.3M781.2 774.0l0.5-1.6M776.2 773.6l-0.5 4.4M768.9 772.7l0.4-4.2M766.5 773.5l-2.6-2.3M762.4 776.3l-1.6-3.7M791.5 780.8l-2.2-1.2 -1.9-1.7 -1.6-1.8 -2.3-1 -2.3-1 -2.5-0.4 -2.5-0 -2.4-0.7 -2.4-0.5 -2.5 0.2 -2.4 0.8 -2.1 1.4 -2 1.5 -2 1.5M770.1 725.9l2.3 1M764.3 730.7l1.9-1.6 2-1.6 1.9-1.6 2.3-0.9 2.1-1.3 1.7-1.9 1.1-2.2 0.7-2.4 0.2-2.5 -0.5-2.4 -0.9-2.4 -1.2-2.2M803.6 783.2l0.6 2.5M801.2 784.0l2.4-0.8M785.6 761.8l-1.5 2.2M788.7 765.7l3.9-1.6M793.3 777.0l2.8-0.5M802.5 791.5l-2.1 2.3M804.6 792.8l1.6-3.1M780.6 756.3l1.3 2.1 2 1.6 1.7 1.8 1.2 2.2 1.8 1.6 1.4 2.1 1.4 2.1 1.2 2.2 0.2 2.5 0.4 2.5 0.7 2.4 1.2 2.2 1 2.3 1.1 2.2 2 1.6 1.7 1.8 1.5 2 2.1 1.3 1.4 2.1M802.7 793.0l2.5-0.5M804.6 804.6l0.8 2.4M785.3 760.5l0.3-2.8M795.1 760.5l1.5-1.9M797.5 761.1l-0.3 1.8M804.9 761.8l0.7-2.8M780.4 760.0l2.5-0.2 2.4 0.7 2.5 0.4 2.4-0.4 2.5-0.6 2.4 0.5 2.4 0.7 2.5-0.2 2.5 0.3 2.4 0.6M743.8 771.7l-0 2.6M749.8 775.7l-2.7 3.1M755.3 780.8l1.4-2M737.6 768.1l1.5 2 2.2 1.3 2.4 0.3 2.4 0.8 2.2 1.3 1.4 2 1.9 1.6 1.7 1.9 1.9 1.5 1.2 2.2M769.3 760.0l-2.5-2.1M775.3 752.8l-0.8-1.8M780.2 752.4l-0.2-1.5M764.8 765.8l1.9-1.6 1.7-1.8 0.8-2.4 0.5-2.5 1.4-2 1.9-1.6 2.3-1.1 2.4-0.6 2.5 0.2M779.8 722.5l-1.4 1.5M777.1 715.6l2.8 0.1M784.6 728.1l-1.8-1.7 -1.3-2.2 -1.8-1.7 -1.4-2.1 -0.9-2.3 -0.3-2.5 -0.1-2.5 -0-2.5 0.1-2.5M742.8 787.7l-0.3 2.6M738.2 785.7l-2 2.4M731.3 783.0l1.3-1.5M729.6 781.1l-3 1.7M727.2 776.7l1.9-0.7M745.3 788.1l-2.5-0.5 -2.3-0.8 -2.3-1.1 -2.4-0.7 -2.3-0.8 -2.2-1.2 -1.6-1.9 -1.1-2.3 -1.3-2.1 -1.8-1.8M751.9 796.8l4 0.1M751.6 799.3l1.9 1.5M747.5 785.4l1.4 2 1.4 2.1 0.9 2.4 0.6 2.4 0.1 2.5 -0.3 2.5 -1.3 2.1 -1.9 1.6 -2.3 1.1 -1.8 1.7 -1.2 2.2 -1.3 2.1M798.0 751.9l-1.6-0.5M802.4 743.4l1.2 2M798.5 754.4l-0.4-2.5 0.4-2.4 0.6-2.4 1.5-2 1.9-1.7 2.3-0.9M804.1 779.8l-3 0.5M804.3 782.3l1.9 0.4M805.0 784.7l-1.4 1M804.8 787.2l-2.6 0.4M804.4 774.8l-0.2 2.5 -0.1 2.5 0.3 2.5 0.6 2.4 -0.1 2.5 0.5 2.4 -0 2.5M760.6 718.7l-2.5 0.2M728.2 796.4l-1.7-0.3M729.1 794.1l-2.6-2.6M734.9 785.9l2.2 0.3M735.6 783.6l3.2 0.6M735.4 781.1l-3-1.4M725.9 808.5l0.4-2.5 -0.1-2.5 0.2-2.5 1-2.3 0.8-2.3 0.9-2.3 1.3-2.2 1.7-1.9 1.6-1.9 1.2-2.2 0.7-2.4 -0.2-2.5M753.9 743.9l2.5 1.8M749.9 750.1l-2-0.3M749.9 752.6l2.9-0.3M751.8 759.7l-2 0.8M754.8 763.7l3.2-1.1M760.2 768.9l-1 3M755.0 741.7l-1.1 2.3 -1.9 1.5 -1.1 2.3 -1 2.3 0 2.5 0.1 2.5 1.1 2.2 0.7 2.4 1.5 2.1 1.5 1.9 1.8 1.8 1.9 1.6 1.7 1.9 2.3 0.9 2.5 0M729.8 774.6l2.4-1.1M736.2 784.8l-1.3 1.9M738.5 785.8l0.5-1.6M740.6 787.2l-1.2 1.1M746.4 795.1l3.3-1.4M750.2 801.6l-3.6 1.5M727.9 772.9l1.9 1.6 1.3 2.2 0.5 2.4 1.1 2.3 1.4 2 2.1 1.4 2.3 1 2.1 1.4 1.8 1.7 1.7 1.8 0.9 2.4 1.4 2 1.5 2 1.1 2.3 1.2 2.2M740.9 744.2l1.8-1.6M741.4 746.7l-0.5-2.4M738.4 785.5l2.9 3.4M724.3 786.0l-1.6 4.1M717.6 789.3l1.4 2.2M716.1 791.2l2.1 2.6M708.2 806.1l-2.5-2.7M740.5 781.0l-0.7 2.4 -1.5 2 -2 1.5 -2.4 0.8 -2.4 0.3 -2.5-0.5 -2.3-1 -2.4-0.5 -2.4 0.6 -2.2 1.3 -2.1 1.3 -1.5 2 -0.5 2.5 -0.8 2.3 -1 2.3 -0.7 2.4 -1.3 2.2 -1.5 2 -2.2 1.2M759.3 735.6l1.4-2.4M756.8 735.0l-1.1 1.4M752.1 733.5l-2.1 2.6M763.5 738.3l-2.2-1.2 -2-1.5 -2.4-0.5 -2.4-0.7 -2.4-0.9 -2.3-0.8M795.7 749.6l-1.2 2.3M786.9 745.0l2.6-2.7M799.3 758.3l-0.1-2.5 -0.4-2.5 -1.2-2.2 -1.9-1.6 -2.1-1.3 -2.2-1.2 -2.4-0.6 -2.1-1.4M800.1 728.7l-1-1.7M803.3 725.0l3.1 2.5M803.6 722.5l-1.6-0.2M790.8 731.8l2.5-0.1 2.3-1.1 2.4-0.5 2-1.4 2-1.5 1.3-2.2 0.3-2.5 1.2-2.1 0.7-2.5M776.5 802.6l-4.3-0.6M752.5 809.1l-3.2-2.3M779.0 793.3l0.3 2.5 -0.3 2.5 -1.4 2.1 -1.1 2.2 -1.9 1.7 -2.1 1.2 -2.2 1.3 -2.5 0.2 -2.4-0.4 -2.1-1.4 -2.4-0.7 -2.5 0.3 -2.1 1.3 -1.6 1.9 -2.2 1.2 -1.7 1.9 -1.9 1.5M732.6 754.5l-2.5-1.7M733.9 752.3l-1.3 2.1 -1.3 2.2M787.7 811.2l2.3-1.5M787.0 795.0l-1.3 2.1 -0.6 2.5 -0.2 2.4 -0.3 2.5 0.4 2.5 1.2 2.2 1.5 2 2 1.5M763.8 720.9l-2.3-3.6M785.4 706.0l-1.2-4.2M757.9 725.3l2.1-1.3 2.3-1.1 1.5-2 0.7-2.4 1.5-2 2.1-1.3 2.2-1.3 1.8-1.7 1.9-1.6 2-1.6 2.2-1.2 2.4-0.6 2.5-0.4 2.3-0.8 2.5-0.3 2.3-1 2-1.6 1.5-1.9 2.1-1.3 1.9-1.7 2.1-1.3 1.7-1.8 1.2-2.2M795.3 727.3l0.9 2.9M804.5 723.9l1.2 1.4M777.8 733.9l1.4-2.1 1.8-1.7 2.2-1.3 2.3-0.9 2.5-0.3 2.4 0.5 2.5 0.1 2.4-0.8 2.4-0.7 2-1.5 2.4-0.6 2.4-0.6M749.0 758.4l-3.1 1.5M748.5 770.7l-3.6 1.1M749.5 773.0l-1.7 0.6M751.2 782.7l-2.2 1.8M751.3 785.2l-3.1-0.1M752.3 787.5l1.8-0.9M747.8 746.0l0.1 2.5 0.7 2.4 -0.2 2.5 0.6 2.4 0 2.5 -0.3 2.5 -0.7 2.4 0.2 2.5 -0.1 2.5 0.5 2.5 0.9 2.3 0.4 2.5 -0.3 2.4 0.8 2.4 0.9 2.4 0 2.5 1 2.2 0.5 2.5 0.3 2.5 -0.3 2.5 0.7 2.3 1.2 2.3M771.0 806.2l-1 1.8M773.3 810.6l-1.5 0.7M761.4 794.9l1.1 2.3 1.7 1.8 1.7 1.8 1.4 2.1 2 1.4 1.7 1.9 1.4 2.1 0.9 2.3 0.1 2.5M800.3 763.5l0.5 4.3M785.8 761.0l-0.3-1.5M783.6 762.2l-1.8-3M771.4 763.4l0.2 3.2M766.9 765.6l0.8 1.3M761.9 771.2l-3-1.3M802.7 763.3l-2.5 0.3 -2.4-0.7 -2.4-0.5 -2.2-1.2 -2.5-0.4 -2.5-0.3 -2.4 0.5 -2.2 1.2 -2.4 0.7 -2.5-0.4 -2.5 0.1 -2.4 0.7 -2.5 0.2 -2.3 1 -2.2 1.1 -1.7 1.8 -1.5 2 -1.7 1.8 -2 1.6M781.4 732.8l2.7-3M785.5 735.6l2.7-2.4M795.3 735.0l1.5-3.3M800.1 733.9l-0.7 3.8M774.3 730.6l2.5 0.2 2.2 1.1 2.3 0.9 2.1 1.4 2.1 1.4 2.4 0.6 2.5-0.3 2.4-0.6 2.5-0.2 2.3-1.1 2.5-0 2.4-0.8 2-1.4M777.1 720.3l-2.7 0.9M775.3 718.6l1.1-3.3M771.3 715.6l-1.8 2.7M768.9 714.9l0.3-3.8M784.7 733.0l-1.6-1.9 -1.2-2.2 -1.4-2.1 -0.6-2.4 -1-2.3 -1.8-1.7 -1.8-1.7 -1.9-1.7 -2.1-1.4 -2.4-0.6 -2.2-1.2M765.7 780.2l-0.6-3.7M775.5 781.0l0.4-3.7M783.1 787.0l-1.3 2.3M784.5 789.1l3.4-1.5M788.3 795.5l2.5-0M760.7 779.9l2.5 0.3 2.5 0 2.3 0.8 2.5 0 2.5-0 2.5-0 2.5 0.7 2 1.5 1.4 2 1.7 1.8 1.4 2.1 1.5 2 0.9 2.3 1.4 2.1M769.7 801.2l3.4-0.1M773.3 810.3l2.6-0.2M768.5 799.0l1.2 2.2 1.4 2 0.6 2.5 1.2 2.1 0.4 2.5 0.9 2.3M763.9 788.2l2.3-2.5 -2.5-2.3M762.8 792.6l2.7-3.6 1.6 1.2M767.7 790.3l3.4 2.7M765.9 796.5l3.1-3.2M766.2 791.7l0.9 2M766.9 790.0l1.4-2M769.3 791.0l3.5-1.3 0.7 1.9M766.4 793.5l1.2 4.2 -3.7 1M768.1 792.2l1.2 2.3M761.3 790.6l2.8 1.4M765.6 794.7l3.4 4.7M767.8 794.2l3.3-1.7 1.1 1.9M771.5 794.7l4.3-3.5 2.3 2.9M767.8 796.6l2.7-1M771.6 796.6l4.1 3.8 1.6-1.7M766.9 797.3l1.2 3.1M764.9 793.8l2.8 2.6M767.0 791.8l1.3 2.1 3.1-2M766.1 791.5l0.9 2.4 2.3-0.8M771.8 794.8l2.2-5M761.8 788.3l1.1-2.1 1.6 0.8M762.7 787.9l1.4-1.7 2.6 2.2M766.2 793.1l3.3 1.9 -1.3 2.2M765.3 790.5l2.6 1.2M767.5 791.8l5.3-1.6M763.1 794.3l3.7-1.1M761.1 790.0l4.6-2.6M761.5 788.3l3.7-1.4 -1-2.7M770.2 793.3l3.2-0.8 -0.5-2.1M761.3 789.3l1.7 2.3M766.3 796.7l2.3-0.9 0.8 1.9M768.6 791.0l3.2 4.8M764.3 788.3l4.8 2.1M768.7 797.7l4.3-4 1.2 1.2M765.4 793.3l3.1 2.9 -2.5 2.6M767.4 796.3l1.8-1.4 -1.2-1.6M763.1 789.0l1.8 1.2 1.9-3M769.8 798.5l2-1.4M794.2 770.7l3-4.1M799.1 769.9l3.5 2.7 -2 2.6M797.6 768.3l1.9 1.6M796.3 771.1l2.9-4.8M793.0 765.6l1.8 5M798.2 768.6l2-1.5 1.4 1.8M796.4 769.0l0.9 3.4M797.8 767.6l3.7-3.2M796.6 769.9l4-4.5 -1.5-1.3M793.8 765.4l3.7 1.5M798.7 769.0l5.5 2.4 -1 2.3M794.7 769.9l4.5-1M790.6 765.3l1.4-1.5M790.9 763.5l2.9 4.3M794.1 766.4l5.3-1.2 -0.4-1.6M796.0 764.1l4.3 3.5 1.2-1.4M795.4 769.0l1.9 1.7M792.5 764.7l2.2 2.4 -1.4 1.2M794.5 763.4l3.3-2.9 -1.5-1.8M794.1 769.3l4.3 2.1 1-2M793.3 770.6l3.3 1.4 -0.8 1.8M796.0 768.5l3.8 3.3M798.4 770.2l2.8 3 1.1-1M790.0 766.2l3.2-2.6 -2-2.5M797.3 767.8l2.9 5.2 -3.5 2M797.2 771.9l2-2.6M789.6 765.8l2.6 3.5 1.7-1.3M798.5 768.5l3.8-1.5 -0.7-1.8M795.8 769.3l2.3 2.2 -1.9 2M793.7 766.5l2.1 2M790.7 764.9l2.3 3 2.2-1.8M791.9 765.3l1.8 2 1.7-1.6M789.9 763.3l3.6-3M792.5 764.5l2.8 3 -1.6 1.5M798.2 766.7l3-0.9M794.4 766.7l2.4-0.9M795.4 771.5l3.7-1.3M792.1 767.8l3.7 2.4 -1.5 2.4M790.5 767.4l1.6-3.6 1.8 0.8M790.6 802.1l3.2 3.4 -2.7 2.6M793.2 801.6l2.2-0.8 -1.2-3.4M790.5 807.6l1.6-1.3M789.2 809.7l2.6 1.3M795.6 809.0l2.4 1M792.7 801.5l1.9-4.3M792.1 805.5l2.6 2.5M795.5 805.6l1.2 3M794.0 808.6l1.6 1.6M789.2 800.9l2.3-4.3 -2.8-1.5M790.7 810.4l3 4.4 -3.2 2.2M793.4 803.5l1.6-1.3M790.8 802.4l4.3-1.4 1.1 3.2M790.4 807.1l3.3 2.5M789.0 805.7l2.5-4.5 3.2 1.8M792.5 806.3l3.8-2.7 -2.1-2.9M795.0 804.3l1.8 2.4 -2.2 1.7M795.7 806.3l1.6-1.3 -2.6-3M796.0 805.3l1.4 5.6M793.8 803.5l4.2 1.6 -0.8 1.9M792.0 807.4l1.6-1.6 -1.2-1.2M794.5 808.5l3.5-1.5 -0.8-1.7M792.7 810.0l3.8-2.4M788.6 809.1l2 2 -1.5 1.5M790.4 811.0l4.2 1.7 1.2-2.9M792.0 809.3l1.9-5M792.6 803.0l3.5 3.6 -1.2 1.2M796.2 805.1l4.4 2 1.5-3.3M794.1 802.4l2.6 2.9M792.6 799.1l5.6-2.1 1.2 3.3M794.1 803.8l2-1.7 -1.3-1.4M792.2 804.7l2.7 1.2M793.2 806.9l4.7-1.6 0.8 2.3M789.7 807.0l1.4-3.4M792.0 810.1l3.7-2.5 0.9 1.4M788.3 803.4l1.9 4.3M789.3 792.3l0.9 2.3M797.9 793.8l3.5-2.5 -2-2.8M796.8 790.0l2.2-0.5M789.0 790.9l4 3.1 2-2.6M788.7 790.0l2.1 5.4 2.2-0.9M791.3 792.0l2.2 5M793.1 793.9l3.5 4.6M793.7 794.0l3-4.7 2.9 1.8M797.0 791.0l2 1.2M798.7 792.0l5.1 3.1M798.1 794.4l4-4.1 1.7 1.7M796.6 791.2l4.4-2.3 1.3 2.3M795.0 793.8l4.5-1.5 -0.8-2.3M791.2 790.0l1.2-2.1 -1.6-0.9M795.9 791.2l1.7 1.4M791.6 791.8l2.1-2.3M799.0 792.7l3.6 4M791.8 790.0l1.7 2.3M792.4 795.0l0.8-2.1M796.0 794.3l1.5 1.8 -1.8 1.5M790.1 793.8l1.3-3.2 -2.2-0.9M793.6 794.4l1.8 2.2M789.7 790.1l2.2-1.3M794.0 793.9l2.6 1.2 -1.5 3.4M791.5 791.2l2.7 2 2.3-3.1M790.4 794.1l2.4-3.4 -1.9-1.4M798.3 792.9l1.5 1.9M796.4 790.5l2 0.7 0.9-2.5M797.4 792.6l1.9 2.9M789.8 787.1l3 3.1 -1.5 1.4M795.6 791.1l3.2 4.8 1.5-1.1M796.9 794.4l3.1 4.8 2.2-1.4M792.1 791.4l1.7-1.7M792.3 788.3l1.2 2.1 -3.4 1.9M789.3 790.4l1.5 1.9M791.1 788.9l2.7 3.3 -2.4 2M793.0 788.9l3.9 4.1M791.2 790.2l2-1.6 1.4 1.8M790.5 801.1l1.6-2.9M792.6 795.8l1.8 2 1.6-1.4M786.3 798.7l2.1 4.2M791.1 798.5l1.9-2.2 2.1 1.8M790.7 791.8l2.5 2.4M790.7 797.7l1-1.8M792.7 791.9l4.7-1.2 -0.5-2.3M790.3 799.4l2.5-2.4 2.4 2.5M793.4 800.1l3.1-3.9M789.7 797.6l2.2 1.6 1.4-1.9M787.1 794.1l3.5-1.6M796.0 796.8l1.7 1.9 2.1-1.8M788.7 796.9l1.9 2 2.8-2.6M797.0 793.2l5.3-1.7 -1.2-3.6M793.6 796.0l4.7 3.2M796.6 792.6l3.6 1.7 0.6-1.5M786.8 795.3l2.5-4.4M789.8 790.7l2.2-2.6 1.7 1.4M789.2 799.5l0.9 2.6 -3.7 1.3M790.0 793.6l1.8 1.3M786.8 796.0l2.3 5.3M787.3 795.7l2.9 2.8M788.8 791.2l4.3-3.5 2 2.5M792.0 799.3l5.3-2.4 -0.8-1.7M790.5 793.2l2.4 2 -2 2.3M795.6 791.4l3.9 1.9 -0.9 1.8M788.0 797.2l2.2-1.4 1.9 2.9M794.1 798.7l3.2 1.5 1-2.1M790.9 790.6l5-1.9 0.7 1.8M788.7 793.0l2.8 4.3 -2.1 1.3M792.9 801.5l2.8 3.3M787.0 800.4l4.1 3.6M794.9 790.5l3.3-4.9M796.6 793.4l3.1 2 -2.1 3.3M788.0 796.9l0.9-1.9 2 1M787.9 793.5l2.5-2 1.6 1.9M782.9 764.6l4.8-1.6M784.2 767.3l1.7 4.9M779.8 765.5l3.3 2.9M779.9 766.6l1-2.2M782.5 763.6l1.9 5 1.7-0.7M779.4 762.9l2.1 3.9 2.2-1.2M787.2 764.0l4-3.7 -1.6-1.7M784.1 766.4l1.8-1.6 -2.3-2.5M780.1 766.5l3.2-1.8M786.6 768.7l1.6-2.5 2 1.4M782.5 766.1l2.1 1.4 1.8-2.7M780.5 766.5l1.1 3.1M781.4 763.8l1.5 2.1M778.2 763.7l1.3 3.1M789.7 768.0l4.9 2.9M788.4 768.1l5.2 2.5 -1.1 2.4M785.3 768.3l2.2 2.4 2.9-2.6M785.7 767.8l3.8-3.2M779.8 765.5l4.2 3.1M783.6 767.4l1.4 1.6M789.8 766.1l2.5-1.9M784.5 762.6l3.2 2.9 1.1-1.3M786.1 766.7l1.3-2.2 -1.4-0.8M781.2 764.1l5.1 2.5 -1.1 2.3M779.6 767.2l3.8-2.8M782.6 764.6l2.2-1.8 1.9 2.2M788.9 764.4l2.6-4.3 -1.5-0.9M788.3 766.9l3.5 4M780.7 767.2l4.9 3.1M781.4 768.2l0.9 1.9 -2.4 1.2M789.9 766.9l2.8-2.2M779.0 764.9l1.7 2.2M789.2 767.2l2.6-1.3M785.4 767.1l4-4 1.6 1.6M788.4 767.6l3.1 2.3M786.7 768.3l2.4-0.7 -1-3.3M787.5 766.5l5.1 2.3 -0.9 2M784.2 774.8l2 1.9M784.9 775.9l2.5-2M782.9 773.4l2.5-0.8 1.1 3.2M779.3 765.1l3 3.4M780.4 768.0l3.2 1.7M786.2 774.2l1.4 5.8M779.7 772.9l1.6 2.7M784.3 773.9l2.1 1.1 -1.8 3.5M787.6 773.7l1.7-1.5M778.3 771.0l2.3-0.8M777.7 771.0l3.6-3.5M780.6 766.9l2-1.1 -1.1-2M777.8 768.6l3.1 4.2M784.8 767.6l2-3M784.5 773.2l1.5 3.4M783.2 770.3l3 1.8 0.9-1.4M783.5 776.1l1 2.2 -3.2 1.5M778.8 767.3l1.8 2.9 3-1.9M786.4 769.8l3.3 3.8 -2.3 2M777.9 770.0l4-3.7M783.9 766.7l3.2 4.1M780.0 767.2l1.9 2M782.0 767.9l4.1 3.9M784.2 767.6l2-0.7M781.3 767.7l1.9-1.9M777.9 765.5l1.5-1.5M783.5 771.7l2.2-2.2 2.5 2.4M784.0 774.8l1.6 1.9M787.4 773.8l1.7 4.7 -3.3 1.2M785.1 773.0l1.3 1.9M784.6 768.5l1.4-2.9M778.0 767.4l1.6 1.9 1.9-1.6M779.3 767.1l2 3.5M786.6 773.8l2.1-2.2 -1.6-1.5M784.1 770.4l5.2-2.2M785.0 811.7l2.2-1.6M783.7 813.9l3.4-3.7M788.5 815.0l3.2 3.6 2.2-1.9M788.6 809.0l2.1-1.4M788.1 810.6l2.6-5M783.1 812.2l2.6 2.6 -1.8 1.8M787.6 814.8l3 4M790.0 816.2l3.3 4.1M783.7 806.7l1.9-2.7 -3.1-2.3M786.2 808.5l2.2-4 -2.6-1.5M786.0 808.5l2.2-1.7M785.1 814.2l2.3-1.9M782.1 807.0l3.5 3.4M784.5 808.8l3.9-4.3M785.4 814.8l4.1-2.9M786.8 815.3l2.4 3.7M783.9 804.7l2.3-3.1 1.5 1.1M785.3 807.4l2.7 1.5 -1.2 2M784.0 808.5l1.7-3.9M781.8 809.6l4.3-3.7 -1.5-1.7M784.7 814.1l2.6-4.3 3.4 2M786.1 804.6l4-1.9M782.9 808.8l1.3 4.1 -3.5 1.1M784.8 805.2l2.4-3.7 1.9 1.2M785.9 814.4l2.2 1.1 -1.7 3.5M781.4 805.1l2.1-2.2 -2.6-2.6M789.8 815.8l3.1 4.3 1.9-1.4M786.2 805.5l4.1 2.5M781.8 812.4l1 1.7M782.7 806.2l3.3 4.9M788.2 811.0l1.7 1.9M784.6 810.8l2.1-2.1M785.5 805.9l4.6-1.5M783.3 804.1l2.6-2.5 -2.3-2.5M785.9 816.5l2-0.5M782.2 803.9l3 3.6M780.0 802.9l0.8-2 3.4 1.3M780.6 795.0l2.1 5.1M776.4 802.1l3.1-3.3 1.6 1.5M780.8 802.7l1.2 2.9 2.2-0.9M780.4 794.3l3.3 3.2 -2.3 2.4M776.5 801.2l2.3 2.7 1.7-1.5M779.4 801.0l1.9-0.9 0.7 1.5M778.4 797.6l2.1-4.4 1.8 0.9M777.8 801.0l0.9-1.8 -1.8-0.9M782.7 796.6l4.9-2.4M778.7 800.8l2.3 4.4 3.3-1.7M778.1 800.2l3.1 3.7M780.5 799.0l1.9 2.4M780.8 803.1l2.1-2.1M778.8 799.4l1.9-2.7M776.8 803.8l3.1 3M775.2 796.2l3.7 3.3M778.5 803.1l2.3 2.8M782.9 798.0l3.4-2M777.7 794.5l4.2 3.9M775.2 795.2l3.4-1.6M780.9 793.6l3.1-2.3 2.1 2.7M777.0 801.9l1.3 3.6M774.8 797.2l2-2.3M776.2 795.6l1.9-3.7M781.5 802.1l3.3 4.6 -1.4 1.1M778.3 803.1l3.8-4.2M777.8 797.7l2.4-2.2 1.1 1.2M779.7 800.8l4-4.5 1.4 1.3M781.2 796.3l3.4-3.1M781.4 801.1l1.9-3.2M777.2 793.7l1.7 3.7 -1.8 0.9M780.7 796.3l2.6-0.7M778.8 801.4l2.6 3 2.9-2.5M768.9 781.5l4.5-2.4M765.1 781.9l1-2.1M765.5 784.8l3.2-1 0.9 2.8M768.4 780.9l5.5-1.7 0.6 2.1M768.7 783.7l3.8 2M767.8 779.9l3.6-3.6M763.9 780.6l3.7 1.5 -0.9 2.1M767.1 783.8l2.9 4.2M764.3 780.4l4 3.7M767.5 780.4l2.6 2.7 2.8-2.6M767.1 776.9l1.4 2.3 2.8-1.7M766.3 784.3l2.8-2.6 -1.2-1.2M767.3 784.8l4.3-1.8 -0.6-1.5M766.0 779.6l1.7-3.2 2.5 1.3M768.3 778.6l1.5 1.9 1.2-0.9M765.5 783.8l3.4 4.1 -2.9 2.3M767.4 778.2l3.3-4.7M765.7 781.4l3.7 4.3 2.5-2.2M767.7 779.6l3.7-4.7M768.3 781.5l0.8 2.6 -3 1M767.7 782.8l1.4-3.3 -3.4-1.4M765.2 778.2l2.8 4.5M764.6 783.8l2.7-0.6 0.5 2.3M767.4 785.6l2.3 4.1 2.7-1.5M766.2 777.9l3.1 2.3 1.8-2.5M769.0 784.9l1.5-2.6M769.8 782.4l2.4-1.8M764.9 778.3l1.6-4.4 -2.1-0.8M765.0 784.8l1.1 3.9 3.6-1.1M767.1 780.1l4.3-2.8M764.3 780.3l1.7-4.6 -3.7-1.3M768.2 778.7l3.8 1.6M762.7 781.1l4.6-1.9M763.0 779.5l2.4-1.3M762.0 780.2l3.5 4.7 -2.6 1.9M765.8 783.1l3.6-2.1M764.8 781.7l1.3-2.6M764.3 782.7l4.1-1.3 0.7 2.1M778.8 802.9l4.5-1.7M785.8 810.4l3.6 2.5 -2.3 3.2M783.9 811.2l2.9 1.5 -1.2 2.3M779.2 807.7l3.7 4.5 2.3-1.9M787.1 803.7l3.7 1.9M777.6 802.4l1.5 2.9 2-1M779.3 808.2l2 1.1M783.4 801.7l5.1-2.7M775.1 804.7l3.6 3.4 -1.2 1.2M779.2 810.7l2.5 2.4M786.3 809.6l4.4 2.7M779.6 802.7l1.8 1.9M780.8 806.4l3.3-3.2 -1.4-1.4M782.4 810.6l5.1-2.2M781.5 807.8l4.3-1.7 1.3 3.5M782.3 810.8l3.3-3.4M785.1 806.8l5.2-2.6M786.1 801.4l1.6-1.8 1.4 1.2M785.4 801.1l2.3 1.3 1.2-2.3M783.7 809.8l3.7 1.7M785.8 802.2l2.4 3.6M780.4 802.7l2.4-1.6 1.3 2.1M782.2 808.2l5.3-1.7 1.1 3.4M781.8 808.5l2.5 2.4 -2.5 2.7M779.0 806.3l3.1 2.3M780.8 805.9l2.1 1.3M785.1 803.2l4.7 3.1M780.6 807.2l2.6 1.9M781.5 800.5l3.9 4.3 -1.4 1.3M780.8 802.2l5.1-3.1 -1.9-3.1M787.4 804.3l2.7 1.4 1.2-2.3M783.1 806.4l3-1M784.9 811.0l1.3 5.4M781.7 800.7l3.7 3.1 -2.4 2.8M782.5 805.4l2.7-1.6 -1.8-2.9M776.2 808.0l2.4-4.8 2.3 1.2M779.5 807.3l2.2 1.4M779.1 768.0l4.5-2.9 -1-1.5M771.9 764.4l1.9 3 -1.8 1.1M771.9 767.1l1.6-1.5 -2.3-2.5M773.5 768.6l4.7 1.9 -1.1 2.7M777.2 769.4l2.5-1.8 2.2 3.1M771.8 765.9l2.8 3.4 3-2.4M774.1 766.0l5.4-2 -1.1-2.9M775.9 766.2l4.3-1.8 -1.5-3.4M777.2 768.4l1.2 2.4M775.2 764.6l3.2-2.6 -1.5-1.9M779.1 766.7l3.5 2.9M769.9 763.7l4.2 3.9 1.7-1.8M771.0 767.1l1.8-2.4 3.2 2.3M770.2 764.5l3.6 4.2M775.0 769.7l5-1.9M770.7 763.2l4.1-4.2M775.2 764.7l2.3 2.3 1.2-1.3M772.6 767.8l2.2-3.5 -3.1-1.9M773.3 768.8l2.8 4.3M773.7 764.2l1.3 5 -3.6 1M771.7 763.1l1.8-1.8 -1.2-1.2M775.1 768.4l3.4 4.5 1.7-1.3M770.8 762.9l2.4 3M772.0 767.6l2.4 2.5 2-1.8M776.5 767.7l2.2-5.1 -3.5-1.4M776.1 768.3l2.2-2.4 -1.5-1.3M770.4 764.6l2.8-2.6 -1.5-1.5M775.2 768.8l1.8-1 1.2 2.1M773.8 762.9l2.8-2.4 -2.1-2.3M770.5 766.1l1.8-1.4 -1.2-1.6M777.2 765.3l2.4 2.7 1.5-1.3M775.4 768.1l2.5-4.5M776.8 767.8l2.6-1.9 2 2.8M766.3 792.5l2.8 3.7 -2.8 2.1M761.4 786.1l3.6 3.6M763.0 789.0l5.1-1.9M765.6 788.4l3.3-4.2M767.3 787.7l2.3 4.3 -1.4 0.7M770.6 791.2l0.7 2.3M770.2 789.3l2.2 1.6M765.1 793.6l2.7-2.3 2.4 2.8M760.1 788.7l2.1 5.2 1.7-0.7M764.9 789.4l3.9-4.3 1.7 1.6M761.2 788.1l4.1-3.7 1.4 1.5M768.9 792.6l1.9-1.3M770.0 789.6l2.3-5 -2.2-1M764.3 792.7l5.1 2.4 0.9-1.9M763.0 791.7l4.9-1.6M762.6 790.2l4.1 4.3 -2.3 2.2M771.7 793.5l4.2-3.3M766.6 788.4l5.4 2.1M765.9 792.2l2.3 1.7M765.6 789.8l4.1-3.2M764.5 785.9l3 4.8M765.1 790.7l2.4-1M764.2 788.2l2.2 5.5 3.3-1.3M763.7 789.1l5.1 2.7M767.0 787.8l4.7 2.6 1.3-2.5M769.3 790.5l3.2 4.1 2.7-2.1M763.9 792.3l3.5-4.4M767.6 793.2l1.4 2.9M769.2 792.2l3.5 3 -1.5 1.7M771.6 790.9l3.2-2M760.6 789.1l1.4 4.7M769.5 794.4l1.2-3.1M766.0 789.1l1.4-3.1M795.0 803.4l3.4 4.3M797.5 801.5l5-1.5 -0.7-2.5M794.9 800.3l2.2-2.5 -1.3-1.1M795.6 804.5l4.1-1.8 0.8 1.8M798.4 804.7l4.1-4.1 2.7 2.6M794.5 799.6l1.3 2 1.7-1.1M797.9 805.2l3.8 3.9M796.3 799.0l2.8-4.9 1.4 0.9M797.5 800.6l3.6 1.5 -1.5 3.6M796.7 802.0l4.4-3.8 -1.9-2.3M798.8 804.1l4.2 4.2M798.7 805.5l1.3 4.8M792.9 803.8l1.6-2.2 1.8 1.3M798.5 803.9l1.8-1.7M793.1 800.8l2.5 2.3M792.9 801.8l1.9 2M793.3 804.3l1.5 5.1M795.4 804.8l4.1-3.6M792.6 800.5l1.8-1.4M800.6 802.7l1.2-1.8M795.4 805.3l3.8 3.2 -1.5 1.9M799.0 802.9l2 1.9M794.3 801.3l4.7 2.5 -1.1 2.1M793.8 799.6l4 3.7 1.9-2M796.5 802.3l1.7 2.8 -2.6 1.6M799.9 803.2l1.2 4.1 -1.7 0.5M796.3 802.1l3.6-3.2 -2.2-2.5M796.5 804.7l3.2-2.8 -2.7-3M798.3 804.2l3.1-2.5M793.8 801.2l4.7-1.8M794.5 800.2l2.2-5.6M799.3 801.4l1.1 1.7M793.9 741.4l1.4-2.4 -3-1.8M793.0 739.5l1 1.9 -2.9 1.5M796.4 739.1l2.8-2.6 -2.2-2.3M790.8 744.8l3.6-3.8M796.0 741.5l2.9-1.9M792.8 742.4l3.9-1.1 0.7 2.6M793.3 744.0l0.9 1.9M795.0 740.7l2.4 2.8 2.9-2.5M792.0 737.9l2.6 2.5M790.6 743.7l1.7 1M792.1 736.1l3.2-2.5 -1.3-1.6M793.2 740.7l4.9 2.1M790.9 736.0l4.6 2.8 -1.9 3.1M793.1 736.1l1.5-3.9M797.0 740.2l3.3-2.7 -2.2-2.6M792.0 744.3l3.8 2.6 -1.3 1.9M795.2 743.5l2.8 1.8M789.0 741.2l3.3 2.5 1.9-2.6M790.7 737.2l3.2 1.6M793.8 741.4l2.4 1.4M796.1 742.9l4.1-1.4M790.6 740.2l5 3.3 1.1-1.7M793.0 746.4l3.7 2.4M792.7 734.9l4.3 2.7M790.7 736.4l1.5-1.4M790.6 730.8l2.2 0.9M797.0 731.9l2.3-1.2 0.9 1.7M796.5 731.9l0.9 2.8M791.4 729.6l4.9-3.1 1.6 2.5M795.2 733.9l1.5 1.9M793.3 729.0l4.5 3.2 -2.1 3M788.5 731.8l2.4-2.5 1.8 1.7M797.0 736.1l1.8-1.5 -2.3-2.7M794.8 732.6l2-1.3M796.0 737.2l1.5 1.7 1.7-1.5M792.4 735.4l3.9-3.6M793.9 729.4l2.2-4.4M788.2 733.5l2.7 1.2 -1.3 2.9M792.7 732.7l4.2-4.2 2.5 2.5M794.0 732.9l3-1.6 1.7 3.4M788.2 733.0l1.3-3.1M795.5 729.0l4.7-2 1 2.2M796.4 733.3l4.2 3.5 2.1-2.4M793.4 729.4l5.2-2.9M791.7 735.4l1.7-1.2 1.1 1.5M788.5 735.4l1.8-1.3M797.3 732.1l1.6-2.4 -1.6-1.1M792.9 734.7l4.4 2.5 -1 1.8M788.0 735.0l4.1-4.1M776.6 755.4l3 1.8 1.4-2.4M777.9 759.1l1.9 1.4M779.1 759.1l4.3 3.4 -2 2.5M774.1 752.0l1.9-1 1.9 3.4M778.7 760.2l2.9 1.3 1.4-3.1M776.9 760.2l1.8 2.4M773.2 756.1l2.3-3.9 -3.4-2M773.0 754.4l0.8 3.4 -2 0.5M777.6 762.7l4.6-3 1.1 1.8M776.2 759.9l2.8 1.8 -1.9 3M774.4 755.9l1.7-2.5M777.7 755.2l1.1 1.7 -3.1 2.1M773.3 756.7l4.6-1.4 -0.6-1.9M778.7 762.2l3.6 2.7 -1.7 2.2M776.9 755.0l2.2-1.1M778.7 757.5l1.7 5.3 2.6-0.8M774.7 752.5l4.9-2.1M775.0 756.9l2.5-1.8M773.8 756.4l2.9 3.5 2.5-2.1M773.1 754.4l2.1-2.5M773.8 755.1l3.4-0.9 0.4 1.6M779.7 760.9l4.5-1.6 -0.7-2.1M775.5 760.6l2.7-2.7 1.2 1.1M776.3 757.5l3.5-1.8 1.3 2.4M791.5 807.4l1.2 2.5M793.8 809.7l3.4 2.8 1.5-1.8M797.9 806.9l2.9 2 1.4-2M798.1 809.1l1.8 2.4 2.6-1.9M799.8 807.9l1.8 3.8 -1.7 0.8M801.2 811.6l5.1 2.7M800.3 811.9l3.9 2.8M796.5 809.7l2.3-2M798.6 810.2l3.1-3M799.0 811.2l3.7-2.7 1.5 2.1M793.2 808.9l3.1 1.9M800.8 812.0l4.2 3.1M794.7 808.9l1.7 4M798.5 808.5l2.8 2.3 -1.2 1.4M799.7 811.6l5-1.4M791.5 807.4l1.6 1.6 -1.3 1.3M799.7 812.1l5.4 2.5 1.1-2.6M796.9 808.9l1.5 4.5M796.8 810.0l2.3 3.1M798.2 807.5l1.8-2.1 -2-1.7M796.9 806.8l2.7 2.4 -1.9 2.1M798.6 811.2l2.4-1.2 1.6 3.3M797.1 808.9l2.9 2 -1.2 1.9M795.4 812.0l4.3-3.2 1.7 2.3M795.7 808.9l1.9 3.8 -2.7 1.4M790.6 808.1l1.9-2.6M793.4 811.2l4.6 2.5M791.4 815.3l1.2 2.8 -3.4 1.5M785.5 812.8l2.7 2.2M789.5 814.3l2 1.9 1.5-1.6M787.3 813.3l3.2 1.4 0.9-2M792.5 809.8l2.8 2.8M790.5 808.9l1.4 2M790.7 813.4l4.4-1.4M786.0 813.8l3.5-3.7M789.5 814.1l2.7-1.1M789.9 809.9l2.7 3.1M790.7 811.5l3.1-2.5 2.2 2.8M790.7 810.5l2.7-3.7M788.5 814.1l3.3 3.7M787.6 812.4l2.2-4.2 -3.4-1.8M789.6 807.8l3.3-2.3M793.7 811.3l4.2-1.2 1 3.7M793.1 813.3l5.8-1.4 -0.8-3.2M791.9 813.5l2 4.3M785.5 811.6l1.3 3.2 -2.8 1.1M789.2 810.1l1.6-1.4M790.1 813.5l2.2-3.8M787.7 811.4l2.5-1.3M767.6 808.7l4.8-3.1M764.3 807.9l3.8-2.9M762.0 808.3l2.7 3.1 2.9-2.6M765.3 806.0l1.9 2.8M761.8 811.1l0.7 2.9 -2.3 0.5M761.2 811.1l1.8 1.1 -1.2 2M763.3 806.6l3.2-5.1M765.9 809.0l3.8 2.2 -1.3 2.1M766.6 807.5l3.1-1M766.9 807.7l3.5-2M766.3 813.7l1.9 1.1M766.1 813.2l1.5 1.6 -1.6 1.5M766.5 812.6l4 3.1M762.7 813.8l1.7 4 1.4-0.6M767.0 808.4l1.2 3.1 2-0.8M764.3 807.8l3.7-3 -2-2.5M765.6 807.9l5-2.9 1.6 2.7M762.2 812.6l2.4 3.9 -3 1.9M767.5 807.3l1.7 5.7M764.4 812.1l4-3.9 2.1 2.2M765.4 809.9l3.7 3.5M785.0 749.7l2 1.7 -1.4 1.7M783.8 751.6l1.9-1.9M781.3 751.2l1.9-1.4M783.7 745.0l5.5-1.5M781.4 743.1l2.9-1.5M786.3 749.4l1.2 1.8M785.2 749.0l2.4-2.3 1.3 1.4M779.6 744.0l3.8-3.2 1.8 2.2M780.8 743.0l2.4-2.2M785.9 750.1l3.7-1.3M784.8 747.1l2-1.2 -1.3-2.1M782.3 742.4l4 1.6M782.2 746.1l4 2.2 1.8-3.4M787.5 748.0l4.6-3.5 2.1 2.8M784.3 743.4l3.8-3.1M785.4 749.3l3.3-4.9M781.5 747.7l2.1-1.5 -2.2-2.9M785.4 745.8l2.5-0.6 -0.9-3.7M787.0 746.4l2.7-3.1M784.0 751.1l2.9-4.7M786.4 745.9l1.9-4.9 -1.9-0.7M786.9 748.3l1.6 3.4 -3.4 1.6M782.6 743.9l2.7 3.6M783.8 750.7l3.6-1.8M782.9 746.0l2.1 4.4 -3.3 1.6M779.5 746.8l2.4 1.2M784.8 710.0l4.2-1.6 -0.5-1.4M783.5 709.3l3.3 4.8 -1.8 1.3M781.9 706.2l1.5 2.8M785.5 710.8l2.2 2.3M785.2 707.8l1.9 1.4 2.4-3.1M784.3 709.7l3.1-2.2M785.2 707.8l0.9 3.8M780.9 710.8l1.1 1.7M781.8 713.3l3.8-2.4M781.0 706.7l2.1-3.5M780.1 710.3l4.9-1.2M781.8 709.9l2.2 3.8M779.5 709.1l3.5-3.7 1.8 1.7M784.0 707.6l4.2-4 1.9 2.1M782.3 707.0l3.9-2.9M783.0 710.4l2.1-3.3 -2.6-1.6M785.9 710.5l4 1.6 -0.6 1.4M782.1 707.6l1.3 1.7M782.8 711.2l1.3-1.9 -2-1.4M782.0 708.8l1.4 2.6M782.6 712.1l2.1-0.7 0.9 2.3M782.8 712.7l3.2 3.8 -2.4 2M751.8 750.5l2.4 2.9 -2.5 2.1M752.4 749.2l2.5 1.3 -1.7 3.3M756.5 748.7l1.4 1.8 2.7-2.1M755.0 749.2l1.7-2.2 2.4 1.8M753.8 752.2l2.7 3.4M758.5 750.9l3.6-2.7M755.3 752.6l2.3-1.2 -1.8-3.4M755.3 752.1l1.8 2.4M757.1 749.5l2.8 2.7 -1.4 1.5M753.2 751.0l1.9 0.7M755.1 753.7l4.6 1.9 1.2-3M753.0 750.7l3.2-1.2M756.4 749.9l2.5-4.8M755.4 750.5l4.2-4 1.9 2M754.2 754.4l1.4 2.5 -1.8 1M757.0 750.7l1.9-3.3M751.6 749.5l2.5 3.2 2.5-2M752.2 748.3l1.5 1.6M754.4 747.0l2.2-2.6M752.0 748.3l1 2.5M754.8 749.3l2.3 1.6M756.9 750.7l2.7-0.6M754.2 749.9l1.4-2.1 -1.8-1.3M758.9 751.0l1.3-1.9M752.6 753.4l1.8 2.5 1.9-1.3M765.0 807.7l2.2 2.3 2.2-2.1M764.8 815.2l1.9-4.7 1.8 0.7M763.9 808.5l2.4 3.1M763.4 813.3l1.8 1.8 -2.1 2.1M762.8 816.2l4.9-3M762.6 815.3l3.3-2.7M764.8 808.7l3.3 1.5 1.1-2.4M766.9 810.5l3.1 2.6 -1.3 1.6M763.2 810.2l1.4-1.8 1.9 1.4M762.4 812.6l3.8-1.4M760.1 813.5l3.1 2.5 -2.1 2.5M760.8 814.6l5.1 2M762.3 815.8l4.4-3.7M764.2 807.9l2.2-3.7M762.3 815.8l2.2 5.3 -2.2 0.9M764.5 812.9l1.4-3M765.2 809.4l3.9 4.3M765.3 815.4l4.3 2.8M766.6 809.0l3.8 4.2 1.3-1.2M767.7 811.2l4.4-3.5 -1.5-1.9M763.7 807.3l1.3 4.6 3.7-1.1M761.4 808.7l2.1-1.2M762.0 812.8l3.4-3.4 -2.7-2.6M765.0 814.8l2.6 2.7M765.8 808.9l2.2 2.3M763.6 815.5l4-2.2M798.4 744.3l2.8 2.7 -2.4 2.5M792.2 744.6l3.6-1.5M795.1 744.1l1.1 2.9 -1.4 0.6M799.2 747.1l2.3 3.9M797.2 744.2l2 1.6M797.8 747.0l3.6-1.5M793.2 746.8l3.8-3.9M799.4 746.2l1.2-2.3 -3.5-1.7M795.2 748.3l1.2 2.7 1.6-0.7M796.7 746.4l2.7 1.8 -1.8 2.6M799.1 742.9l2.5 2 -1 1.3M794.6 747.0l1.8-1.3 -2.2-3.1M794.0 741.8l2-0.4M793.9 744.8l4.8 2.2M798.1 742.7l2.6 2.4M797.6 742.5l2.7 4.6 -1.9 1.1M800.8 744.2l3.3-0.9 -0.6-1.9M799.8 746.5l2.4-5.4M793.6 743.7l2.9-2.3 1 1.4M794.2 743.2l1.9 4.5 -2.4 1M794.7 745.5l2.5 3.4M797.7 741.6l4.2-3.8 2.6 2.9M797.4 746.7l1.3-3.7 2 0.8M798.5 744.4l1.5-1.5M794.3 741.8l1-2 -2.4-1.2M799.8 724.2l1.7 2.5M799.8 726.1l4.1-3.7M799.4 726.9l2.1-2.2M798.9 725.0l3.4-4.3M800.5 727.5l3.4-3.9 2 1.8M804.1 727.6l1-2.3 3.4 1.4M797.5 727.1l1.2-2.4 -2.6-1.2M801.9 722.2l2 2.2 -1.6 1.4M799.9 729.3l1.9-2.3M802.3 724.8l1.5 2.4 2.9-1.9M804.4 725.7l2.6-3.9 2.6 1.7M797.4 727.2l4.7-3.3 -1.5-2.3M799.6 721.8l1.9-2.6 2.5 1.9M798.0 725.9l2-0.7M801.5 726.3l4.9-2.7M798.2 727.6l1.8-3.9M800.0 724.0l1.4 1.8M797.1 724.5l3.5 3.5 -1.8 1.7M799.5 727.5l1.4-2.7M802.0 721.3l3.3-2.4M800.5 728.8l1.6 3.2M802.0 727.8l1.5 2.7M802.2 726.3l1.6 2.9 3-1.7M798.6 724.7l2.2-5.4 -2.1-0.9M791.0 722.3l3.3-0.1M762.8 765.2l-3.2 1.7M772.7 738.5l-5.3 0.8M778.1 763.1l-5.6 4.3M748.2 785.3l4.7-4.7M777.2 724.0l-4.1 1.5M746.5 741.1l-6.7 0.8M744.0 765.0l4-1.9M770.4 769.9l-5.3 3.4M793.5 730.1l-1.3-7.9M797.9 736.6l6.9 1.3M764.2 797.7l-5.2 2.9M804.4 807.9l-3.1-2.9M742.7 764.4l-3.1 0.9M733.3 783.2l3.7 2.3M731.9 768.9l-0.2 7.6M769.6 721.7l3-1.5M753.9 732.2l-1-5.7M781.7 740.1l2.2-7.2M723.8 801.4l-4-4.9M751.3 745.3l5-1.3M797.2 752.3l-4.3 0.7M729.1 808.6l0.7 6.8M782.7 736.7l1.7 6.2M788.2 766.1l-2.3 4M792.9 758.1l3.2 5M727.7 788.9l-1.6-4.4M751.6 811.5l-7.5-1.3M802.1 763.9l1.4 4.1M781.3 714.5l5.7 3.6M788.2 742.4l0.6-5.2M776.2 776.2l-2.5 4.4M769.4 751.1l2.7-2.6M790.6 721.3l-3.7 5.8M760.5 764.1l-0 5.2M784.8 715.8l2 4.1M742.8 756.3l3.3-4.6M791.8 731.9l-1.9-7.4M804.7 711.0l5.2-3.6M759.2 807.0l-1.5 4.4M740.4 805.0l4.3 1.2M799.2 725.4l3.6-5.5M773.3 719.2l0.8 5.5M749.6 793.9l-0.6 6.3M791.0 704.7l2.5 4.9M785.7 741.6l5-2.4M750.0 782.0l-3.1 3.7M767.9 756.7l-1.4 3.4M802.5 757.0l1.8 6.2M794.7 759.6l2.2 4.6M792.2 720.5l4 4M776.1 710.5l-6.7 0.3M764.5 785.3l1.3 6.9M751.5 780.2l2.6 7.6M728.2 791.8l2.9 2.4M716.6 802.6l-1.2-7.8M719.8 806.0l-1.8-6.5M730.6 805.1l-3.5-1.1M767.1 789.3l2.4 2M789.3 770.0l1-2.9M794.4 638.6l4.7 3.7 4.7 3.7 1.6 1.3M755.4 615.8l4.9 3.5 4.8 3.5 4.9 3.5 4.9 3.5 4.9 3.5 4.8 3.5 1.6 1.2M759.8 625.6l4.9 3.5 3.2 2.3M784.3 644.6l4.7 3.8 4.7 3.7 4.6 3.8 4.7 3.7 1.6 1.3M767.6 639.5l4.8 3.7 4.7 3.6 4.8 3.7 1.5 1.2M788.8 655.3l4.7 3.7 4.7 3.7 4.7 3.7 1.6 1.3M800.7 673.1l4.7 3.7M783.5 665.8l4.8 3.6 4.9 3.5 4.8 3.6 4.8 3.5 1.6 1.2M761.8 625.1l1.2-1.6 1.2-1.6M764.3 631.9l3.5-4.9 1.1-1.6M768.7 634.0l3.5-4.8M768.6 640.8l3.5-4.9M774.5 634.2l1.3-1.6 1.2-1.5M774.6 647.3l3.8-4.7 3.7-4.6 1.3-1.6M777.3 655.1l3.6-4.8 3.6-4.8 3.6-4.8M780.5 661.0l1.2-1.6M781.3 666.3l3.4-4.9 2.3-3.3M799.0 642.9l3.4-4.9 1.2-1.7M784.8 670.1l3.8-4.7 1.3-1.5M788.7 672.9l3.6-4.8 3.6-4.8 3.6-4.8 3.6-4.8M798.5 672.2l3.6-4.8 3.6-4.8M804.4 676.8l1.2-1.6M794.7 696.2l1.1-1.6M800.5 688.0l3.4-4.9 1.2-1.7M791.2 651.4l4.2-2.6M792.4 647.4l3.1-1.1 0.9 2.7M791.6 650.1l1.6-4.4M788.8 647.3l1.5 3.7M791.7 650.1l5.3 2.5M789.0 653.7l4.3 1.7M791.9 652.3l3.3-1.2 -1.4-3.6M787.0 646.5l4.1-4.1 -2.7-2.7M792.6 652.9l4.4-3.9M792.2 648.3l4.2-1.1M787.3 650.1l2.6 1.3M785.8 647.5l2.5-1.1 0.9 2M786.8 651.4l3.4-3.7 -2.9-2.7M788.5 649.7l1.2-2.5 -2.2-1M791.5 650.1l3.2 3.4M788.6 651.4l0.8-2 2.9 1.2M789.7 654.3l3.3-2.7 -1.3-1.5M789.5 653.1l3.4-2.2M790.5 653.5l1.7-4.6 2.6 0.9M788.0 652.3l4.3 2.2 -1 2M790.5 649.3l4.7-1.5M788.6 647.4l2.7 2.2 -1.3 1.5M789.0 647.8l5 2 -1 2.5M791.7 650.8l4.1-3.2 1 1.2M791.1 648.9l3.8-2.8M789.9 650.5l2.9 1.6 1-1.8M788.6 648.7l4.2-3.7M788.1 653.5l2.3-2.4 2 1.9M802.9 687.7l5.6-1.4 0.5 1.8M803.6 686.9l2.1 1.8M803.6 687.1l3.2-3.2M804.1 684.5l3.3 2.6M804.5 683.1l2.1 2.4M806.3 684.8l3.3 2M806.8 684.1l2.9 5M800.7 688.1l1.9-1.4M805.5 684.3l3.9-3.5 -1.7-1.9M804.2 689.7l2.4 4.7M806.7 686.9l2.9-3.1M804.2 683.3l2.5 2.1 1.5-1.8M803.5 689.2l0.7 2.7 3.8-0.9M802.1 686.2l2 0.8 0.9-2.1M805.8 683.6l1.2 3.6M801.1 689.2l2.7-1.9 1.9 2.6M805.5 683.2l2.8 3.8M805.2 687.2l2.5-1.1M804.9 686.1l2.6-1M802.0 685.7l1.1 1.7 -2.5 1.7M804.3 684.3l3 3.2M805.7 686.1l4.1 2.1 1.4-2.9M805.3 687.2l3.2 3.7M804.6 688.8l3.8-3.8M804.0 685.7l3-2.3M800.6 688.8l4.3-3.4M804.7 687.4l1.6 1.9 -2.5 2.2M804.4 685.3l3.3 1.2M807.0 682.0l2.7 3.8 -1.3 0.9M787.2 673.7l3.9-3.3 -2.4-3M788.3 672.5l3.1-3.4M788.5 672.0l2.7 3M788.1 669.8l1.3 2.9M790.7 674.0l3.8-2.9 1 1.4M786.6 675.4l1.6 4.7M788.3 672.3l3.8 4.2M786.1 673.8l3.7-3.3 -2.2-2.4M788.6 673.5l4-1.5 0.8 2.3M787.1 674.2l4.2 2.2 1.3-2.6M788.9 671.5l3.2 4.3M789.5 671.7l1.5 3.2 3.6-1.8M786.2 672.2l4.2 3.9 -2.2 2.4M786.8 671.9l1.4 2.4M787.8 672.9l3.7 2.7 -2 2.7M786.1 673.0l2.6-2.6 -1.7-1.7M790.2 675.0l1.3-3 1.9 0.9M786.4 673.4l3.1 1.7M787.8 672.5l1.1 4.6M786.1 673.0l3.9-3.4 2.1 2.4M789.8 674.4l1.4 1.7 -2.2 1.9M788.1 671.1l3.5 4.6M786.8 671.5l2-0.5 0.6 2.4M790.0 675.7l2.9-4.5M790.9 674.0l3-2.5 1 1.3M787.7 670.8l1.2-2.5M787.0 673.4l1.5 1.5M789.6 671.0l2.7-1.1M788.6 670.6l2.3-1.9 -2.4-2.8M787.2 673.0l3.2-3.4 1.2 1.1M780.1 641.2l3.1 4.7M782.2 643.9l1.5-2.5M781.9 641.7l1.3-2.2M789.9 636.9l2.2 2.9M784.7 635.3l2.1-2.3M787.2 638.2l2.7 3.2M788.9 638.0l1.6 1.3 1.6-2M788.9 635.4l4.5 2.2 -0.7 1.4M789.6 636.5l4.8-1.6 1.2 3.8M789.2 639.0l4.3 2.6 1.6-2.7M784.2 640.1l3.3 2.4M786.3 635.6l2.3 2.2M779.3 641.6l4.5-3.3M783.4 638.6l1.4 2.3 3.3-2.1M789.4 641.7l4.5-2.8 1.1 1.6M781.1 642.6l5-2.1 -1-2.4M785.3 639.8l2.3-1.2M787.4 641.7l2.5 2.5 2.7-2.8M789.6 635.5l2.2-1.2 1.6 2.7M786.7 642.5l2.8 4.7M783.2 638.7l3.5-2.6 2 2.6M785.7 638.4l2 2 -2.1 2.2M786.9 639.8l2.5 2.5M782.5 636.4l3.6-4M783.9 642.5l2.9-1.2M787.4 637.0l2.3-3.3 -3-2.1M787.7 641.6l3 2.5M781.2 640.9l1.8-1.5M785.4 637.8l2.7 3.3 2.8-2.2M800.3 651.6l3.5 1.7M803.4 648.3l2.9 4.1 1.6-1.1M804.0 648.1l2.6 3.1M799.7 647.6l2.6 4.7 -3.4 1.9M800.4 651.0l2-2.4 -2.6-2.3M799.7 648.1l3.4-3.6 -1.5-1.4M799.9 654.8l3.5-1.6M800.7 655.6l3.2-2.7M801.2 647.6l2 3.1M799.6 652.3l3.4-3.2 2.3 2.5M800.1 653.0l3 3.9 1.6-1.3M803.5 650.7l2.9-0.8 0.9 3.2M803.8 650.0l1.5 4.3M800.7 649.7l2.5-3.3 2.3 1.7M803.9 649.2l0.9 2.8M801.6 651.2l2.3 2.7 -1.6 1.4M801.4 656.0l3.3-0.8M802.9 650.6l1 3.3M800.3 647.6l1.3-3.1 3.4 1.4M802.1 645.2l4.5 2.6 1-1.7M801.5 646.4l2.9 1.5 -1.4 2.8M800.2 653.4l1.5 4.5 2.1-0.7M799.6 653.6l5.1-1.3M801.1 654.0l0.7 2.7 -3.5 1M799.5 651.2l3.6-0.9M800.7 656.0l2.6 2.4M802.2 654.0l3 4.3 2-1.4M777.8 648.6l3.5-1.5 1.2 2.8M783.7 649.1l3.6 4.6 -1.6 1.2M783.2 648.7l3.5-2.2 -1.2-1.9M782.8 648.4l3.2-4.9 -1.4-0.9M779.3 646.0l3.4 3.9M785.5 648.4l1.3-2.4M782.0 651.4l4.6-3 1.7 2.6M783.1 647.8l4.3-3.9M781.6 644.7l0.9 2.1 3.3-1.4M782.4 643.8l2.5 2.5 -2.2 2.2M784.1 644.6l3.1-1.4M777.9 649.7l2.1-2.2M781.5 644.0l3.4-2.4M783.3 645.0l1.5 2.1M781.8 646.4l2.9-4.6M782.6 644.6l1.3 5.6M779.7 650.7l2.2 1.3 1.1-1.9M782.1 647.8l1.1 2.9M785.3 649.8l3.4 4.7 1.4-1.1M784.3 646.2l4.5-3.4M783.7 645.4l3 3.7 1.3-1.1M778.5 650.2l3.9-1.9M779.9 650.2l3 1.1 0.9-2.8M777.5 644.7l3.5 1.6 -0.8 1.7M780.7 646.8l2.3-0.9M782.8 647.3l2.5-2.6 1.7 1.5M781.9 645.7l2.1 1.7 1.3-1.5M778.3 644.2l1.9-1.2 -1.3-2.1M784.2 643.6l4.4 4 -2.1 2.3M783.7 647.7l3.7-1.6 -1.1-2.4M785.0 641.6l1.7-1.1M783.8 642.0l1.7 1M784.9 642.4l4.1-1.6M785.9 642.0l2.1 0.8 0.7-1.9M785.2 645.6l3.4 3.7M783.9 642.8l4.4 2.9M783.8 644.8l1.6 1.7 2.4-2.3M787.6 643.2l2.3-3.7M784.3 647.1l2.3 5.1M783.9 648.7l2.8 5.1M786.9 646.2l3.3 1.3M784.7 641.9l2.1-2.2M784.4 643.1l2.4-1.7M786.3 642.0l0.8 2.7M785.9 648.4l3.9-1.4M788.6 645.7l3.5-2.6M782.9 642.3l2.6-2.3 -2-2.3M788.3 645.7l3 3.7 2.2-1.8M786.6 650.7l0.9-2.3M785.2 641.9l2.3 2.1M785.0 648.9l1.8-3.2 2.5 1.4M781.7 643.7l2.3 1M787.4 647.9l1.5-1.4 2.5 2.7M784.4 643.0l3.3-3.4M783.9 647.1l2.8-2.9M784.0 642.7l1.6 1.7 1.9-1.7M781.9 648.0l1 2.5M782.3 644.9l1.8 2.3M781.5 643.4l1.9 4.6 1.5-0.6M784.1 649.3l3 3.7 1.6-1.3M786.4 648.2l4.1-3 1.6 2.1M787.2 646.5l2.4-0.8 -1.3-3.7M780.5 647.0l1.6 2.6 3-1.8M783.9 642.8l1.6 4.5 1.5-0.5M783.5 647.1l1.6-3.4 2.5 1.2M786.4 644.6l3.7 2.6 -2.3 3.2M786.6 645.6l4.7-1.3 0.9 3.1M783.7 642.5l1.4 2.4 2.1-1.2M784.8 642.5l1.6 1.8M785.4 647.3l2.2-3.5M786.4 646.3l3.3 3.2 2-2.1M782.9 645.3l1.9-3.5 -2.1-1.1M783.2 649.6l3.2 1.3M784.7 649.7l1.3-2.2 -2.6-1.5M742.6 611.7l3.1 5.1 3.1 5.2 3.1 5.1 3.1 5.1 1.1 1.7M758.7 639.7l2.9 5.2 2.9 5.3 2 3.5M769.2 657.9l3.1 5.1 3.2 5.1M786.1 687.2l2.7 5.4 1.8 3.5M738.0 617.9l3.4 4.9 3.4 5 2.3 3.2M748.1 635.4l3.1 5.1 3.1 5.2 3.1 5.1 3.1 5.1 1 1.8M764.9 664.6l3.1 5.1 2 3.5M720.9 605.8l2.7 5.4 2.7 5.3M769.9 689.5l2.4 5.5 2.5 5.5 2.4 5.4M715.5 617.0l2.9 5.2 2.9 5.3 2 3.5M733.2 647.7l2.5 5.4 2.5 5.5M741.7 662.4l3.1 5.1 3.1 5.2 2 3.4M725.3 660.4l3.6 4.8 3.6 4.8 3.5 4.9 3.6 4.8 3.6 4.8 1.2 1.6M696.4 633.2l3.2 5.1 3.1 5.1 3.2 5.1M673.1 607.7l3.5 4.8 1.2 1.7M695.6 649.8l2.6 5.4 2.5 5.5 2.6 5.4 1.7 3.6M721.5 694.6l2.6 5.4 1.8 3.6M664.9 615.8l3.5 4.9 2.3 3.2M727.5 724.1l2.8 5.3 2.7 5.3 2.8 5.4 1.9 3.5M662.5 628.1l3.4 4.9 3.5 4.9 2.3 3.3M674.0 648.0l3.5 4.8 2.4 3.3M657.8 645.0l2.9 5.2 2.9 5.3 2 3.5M668.9 664.2l3.1 5.1 3.1 5.2 3 5.1 2.1 3.5M681.3 685.6l3.1 5.1 3.2 5.1 2.1 3.4M717.6 748.5l2.9 5.2 2.9 5.3 2.9 5.2M629.2 621.6l3.1 5.2 3 5.1 3.1 5.2 2 3.4M658.8 673.1l2.4 5.5 2.4 5.5 2.5 5.5 2.4 5.5 0.8 1.8M675.1 701.3l3.4 5 3.4 4.9 3.3 5 3.4 4.9M704.4 752.0l2.7 5.3 1.9 3.6M617.3 624.4l0.9 1.8M621.4 629.1l2.7 5.4M627.6 639.9l2.6 5.4 2.7 5.4 0.9 1.8M636.9 656.0l3.2 5.1 3.1 5.1 3.2 5.1 3.1 5.1M681.8 733.8l3.2 5.1 3.3 5 3.2 5.1 3.2 5 1.1 1.7M698.0 761.7l2.4 5.5 2.5 5.5 1.6 3.6M707.4 778.0l3.5 4.9 3.5 4.9M623.1 650.4l2.5 5.5 1.7 3.6M661.1 716.2l3.4 5 3.4 4.9M669.7 731.0l2.8 5.3 2.7 5.3 2.8 5.4 2.8 5.3 1.8 3.5M608.1 641.8l3.1 5.2M632.7 684.4l3.2 5.1 3.1 5.1 3.2 5.1 3.2 5.1 1 1.7M648.2 711.2l2.9 5.2 2.9 5.3 3 5.2 2.9 5.3 2.9 5.2M675.6 758.7l3.5 4.9 3.6 4.8 3.5 4.9 3.5 4.8 2.4 3.2M691.1 785.6l2.7 5.4 1.8 3.5M636.6 707.2l2.9 5.3 1.9 3.5M611.0 686.1l2.8 5.3 2.9 5.3 2.8 5.3 2.9 5.2M624.8 710.0l3.4 4.9 3.5 4.9M647.3 749.0l3.2 5.1 3.1 5.1 1.1 1.7M597.2 647.4l5.4-2.7 5.3-2.7 1.8-0.9M612.8 637.7l5.2-3M593.8 663.6l5.4-2.6 5.4-2.7 1.8-0.9M653.2 627.9l5-3.3 3.4-2.1M666.2 620.4l5.2-3 5.2-3 5.2-3 5.2-3 5.2-3M697.3 602.4l5-3.2M596.9 675.2l5-3.3 5-3.3 5-3.3M638.7 666.1l4.9-3.4 5-3.4 4.9-3.4 4.9-3.4 1.7-1.2M696.9 632.4l5.2-3.1 5.1-3 1.7-1M618.7 694.1l5.1-3.1 5.2-3.1 5.1-3.1 1.7-1.1M748.5 619.2l5.5-2.5M616.2 712.0l4.9-3.5 4.8-3.5 3.3-2.3M633.4 702.0l5.3-2.8 5.3-2.9 5.3-2.8 5.3-2.8M685.2 672.1l5.5-2.5 1.8-0.8M695.9 665.9l4.8-3.6 4.8-3.6 4.8-3.6M716.0 654.3l5.2-3 5.2-3 5.2-3.1 1.7-1M627.3 722.9l5-3.3 5-3.3 3.4-2.2M670.1 698.3l5.5-2.4 5.5-2.4 5.5-2.5 3.6-1.6M693.5 684.7l5-3.3M725.2 666.4l5.2-3 5.2-3 5.2-3 5.2-3 1.7-1M749.9 652.2l5.1-3.1 5.2-3.1 5.1-3.1 1.7-1.1M627.2 739.6l5-3.3 5-3.3 5-3.3 5-3.3 5-3.3 1.7-1.2M725.3 699.2l5.3-2.9M735.5 693.3l5.5-2.4 5.5-2.4 1.8-0.8M750.1 684.8l5.4-2.7 5.4-2.6 5.3-2.7 5.4-2.7M667.8 751.4l5.2-3 3.5-2M716.5 723.3l5.3-2.9 5.2-2.9 5.3-2.8 5.2-2.9 5.3-2.9 1.8-1M746.8 705.8l5.2-3.1 5.1-3 5.2-3.1 5.1-3.1 5.2-3 1.7-1M776.6 688.6l4.8-3.6 4.8-3.6 4.8-3.6 1.6-1.2M734.7 722.4l5.2-2.9 5.3-3 5.2-2.9 5.2-3 5.3-2.9 1.7-1M672.6 770.5l5-3.3 5.1-3.2 1.6-1.1M689.6 761.3l4.9-3.4 5-3.4 4.9-3.5 1.6-1.1M713.0 747.8l5.3-2.9 5.2-2.8 5.3-2.9 5.3-2.9 5.3-2.8M717.3 767.5l5.1-3.1 5.2-3.1 1.7-1M715.8 784.9l1.6-1.1M743.6 651.6l-2.2 3.6M737.4 647.4l-2.5 3.7M735.9 645.4l1.5-2.6M732.3 642.0l1.6-3.4M727.6 629.6l2.1-0M732.8 624.2l2.2 3.5M763.0 650.1l-2.5 0.1 -2.3 1 -2.4 0.7 -2.5-0 -2.3 1 -2.5-0.1 -2.4-0.5 -2.4-0.7 -2-1.5 -2-1.5 -2.2-1.2 -1.6-1.9 -1.5-2 -2-1.5 -1.7-1.8 -2.1-1.4 -1.3-2.1 -0.9-2.3 0.2-2.5 1.1-2.3 1.4-2.1 1.6-1.9 2.1-1.3 1.4-2.1 0.9-2.3M737.5 639.3l1.6-4M736.2 637.1l-3.5 0.3M733.8 632.8l-3.8 0.8M726.8 626.1l-0.7 3.7M722.1 625.0l-1.4-2.7M715.1 627.8l0.1 1.9M739.5 640.8l-2-1.5 -1.3-2.1 -0.9-2.4 -1.5-2 -1.1-2.2 -1.7-1.8 -1.8-1.8 -2.3-0.9 -2.3-1 -2.5-0.1 -2.4 0.8 -2.3 0.8 -2.2 1.2M679.6 674.6l3-1.2M680.3 679.5l-2.9 0.8M679.1 681.7l-1.6-0.9M670.5 690.6l2.5 1.4M663.9 693.5l-0.9 3.2M657.0 691.0l-1.4 0.7M644.9 682.6l-2.1 0.9M678.9 672.2l0.7 2.4 0.8 2.4 -0.1 2.5 -1.1 2.2 -1.8 1.7 -2.1 1.5 -1.9 1.5 -1.2 2.2 -1.6 1.9 -1.9 1.7 -2.4 0.7 -2.4 0.5 -2.5-0.1 -2.4-0.9 -2-1.4 -1.9-1.6 -2.4-0.9 -2.1-1.4 -2.2-1.1 -2.1-1.4 -1.4-2.1 -2-1.5M739.5 625.1l2.4-1.5M743.3 628.2l2.5-2M745.1 637.8l3.2-1M745.3 650.0l3.4-2M745.3 662.2l-3.3-0.4M715.3 623.3l2.5-0.2 2.5 0.5 2.3 0.7 2.5-0.1 2.5 0.2 2.5 0 2.3-1.1 2.5-0.1 2.3 0.8 2.3 1.1 2.1 1.2 1.7 1.9 1.3 2.1 0.5 2.5 -0.2 2.5 0.3 2.5 -0.3 2.4 -0.2 2.5 -0.4 2.5 -0 2.5 1.1 2.3 0.7 2.3 -0.1 2.5 0.4 2.5 -0.7 2.4 -0.4 2.5 -1.2 2.2M706.9 698.6l2.9 2.3M711.7 698.1l0.7-4.3M727.5 690.9l1.9 3.8M729.5 689.4l-1.5-3.8M736.6 687.9l-0.2 3M743.6 690.5l0.8-4.1M699.5 699.3l2.5 0.3 2.5-0.2 2.3-0.8 2.5 0.1 2.4-0.7 2-1.5 2.4-0.7 2.4-0.8 2.3-0.9 2-1.6 2.3-0.8 2.4-0.8 2-1.5 2.1-1.3 2.5-0.5 2.5 0.3 2.3 0.8 2.3 1.1 2.4 0.7 2.4 0.5 2.5-0.6 2.5 0 2.4 0.8 2.4 0.3 2.5 0.5 2.4-0.5M611.7 670.2l1.5-2.2M616.5 671.4l-0.5 1.6M591.4 657.4l1.1 2.3 1.6 1.9 1.5 2 2.2 1.1 2.3 0.9 2.5 0.6 2.1 1.2 2.3 1 2.5 0.6 2.2 1.1 2.4 0.7 2.4 0.6 2.3 1M703.3 713.0l0.7 2.4 1.5 2 0.6 2.4 0.5 2.5 -0.2 2.4 0.5 2.5 1.4 2.1 1.8 1.7 1.1 2.2 0.9 2.4 1.1 2.2 1.3 2.1 1.9 1.6M711.8 786.3l-1.7-0.3M712.3 783.8l-0.5 2.5 -1.3 2.1 -2.1 1.4 -2.1 1.4 -2.1 1.2 -1.6 1.9 -1 2.3 -1 2.3M710.8 788.6l2.5 0.3M750.5 665.0l3.1 3.2M754.3 676.5l-2.5 2.1M756.8 680.8l3.2-0M759.6 684.9l-2.2 3.3M763.3 688.2l-3.2 2.9M770.7 689.3l1.3 3.3M751.8 662.9l-1.3 2.1 -0.3 2.5 0.8 2.4 1.5 2 1 2.3 0.8 2.3 1.5 2.1 1 2.3 1 2.3 1.8 1.7 1.8 1.7 1.9 1.6 2.4 0.9 2.5 0.3 2.5-0.1M725.6 714.0l2-2.4M723.6 712.5l0.8-3.7M728.9 717.7l-1.9-1.7 -1.4-2 -2-1.5 -1.6-1.9 -1.7-1.8 -2.4-0.9 -2.4-0.4 -2.2-1.1 -2.3-1.1M698.2 787.1l-1.8 1.8 -2.3 0.8M626.7 725.0l2.5-2.6M628.7 726.5l-1 1.3M635.1 730.4l-0.5 1.7M637.5 734.8l-1.9 1.5M622.1 723.0l2.4 0.8 2.2 1.2 2 1.5 2.1 1.3 2.2 1.2 2 1.5 1.3 2.1 1.1 2.3 1.2 2.2 1.6 1.8 2.1 1.4M730.7 621.7l-0.9-4.3M738.0 620.1l1.2 4M726.1 623.7l2.3-1 2.3-1 2.5-0.2 2.4-0.6 2.4-0.8 2.5 0 2.4 0.4 2.5-0.2 2.4 0.8 2.1 1.4 1.8 1.8M689.5 676.5l3.2 2M665.6 689.1l1.1 2.5M664.4 691.4l1.7 1.1M690.5 674.3l-1.1 2.3 -1.7 1.8 -2 1.5 -2.3 0.9 -2.4 0.9 -2.1 1.2 -2.1 1.4 -2.4 0.7 -2.4 0.8 -2.4 0.5 -2.2 1.2 -1.9 1.7 -1.1 2.2M758.6 705.3l1.8-0.3M757.8 693.2l-2.9 1M758.0 710.2l0.8-2.4 -0.2-2.5 0.3-2.5 -0.3-2.4 0.6-2.5 -0.4-2.4 -1-2.4 -1.8-1.7 -1.6-1.9M638.3 734.8l-3.4 1.1M649.7 747.2l2.6-3M663.4 752.8l0.7 1.9M637.2 732.5l1.1 2.3 1.1 2.2 0.8 2.4 1.6 1.9 2.2 1.1 2.1 1.4 1.5 2 2.1 1.4 2.2 1.1 2.3 1 2.1 1.3 2.4 0.6 2.2 1.3 2.5 0.3 2.5 0.1 2.5 0.2 2.5 0.5 2 1.4M624.3 713.0l-2.4 0.6 -2.5 0.1 -2.4 0.9M692.4 738.2l-2.6-1.3M690.8 740.2l1.7 3.1M689.9 742.5l1.7 1.5M686.3 745.8l-0.1 2M684.8 747.8l1 1.8M664.9 757.5l0.2-2M694.4 736.7l-2 1.5 -1.5 2 -0.9 2.3 -1.5 2.1 -2.1 1.2 -1.6 2 -1.2 2.2 -1.8 1.7 -2.2 1.2 -2.1 1.4 -1.4 2.1 -1.7 1.8 -2.3 1 -2.5 0 -2.4-0.6 -2.2-1.1 -2.5-0.2 -2.5-0M654.0 643.4l1.9 2.2M656.3 642.3l0.4-3.7M660.9 640.4l2 2.2M665.8 640.2l-0.1 3.1M668.3 639.8l1.2 2.8M637.3 642.7l2.5-0.3 2.5 0 2.4 0.8 2.2 1.1 2.4 0.6 2.5-0.4 2.2-1.1 2.3-1.1 2.3-0.8 2.3-1.1 2.4-0.5 2.5 0.3 2.5-0.4 2.5-0.2M658.9 717.5l-1.4 2.4M656.6 718.3l-2.4-2.9M654.8 720.0l1.5 2.1M650.4 722.4l-0.7-2.8M646.3 725.1l1.2 1.9M644.1 726.3l-1.5-1M642.0 727.7l0.1 2.3M666.0 719.8l-2.2-1.3 -2.3-0.8 -2.5-0.2 -2.4 0.8 -1.8 1.7 -2.1 1.4 -2.3 1 -2.3 1 -1.8 1.7 -2.2 1.2 -2 1.4 -2.1 1.4M660.7 685.2l-1.4 2.2M671.9 690.0l1.4-1.2M678.6 692.9l-0.7 3.5M683.4 693.8l-0.3 3.3M657.7 681.2l1.1 2.2 1.9 1.7 1.8 1.7 2.4 0.8 2.5 0.5 2.4 0.7 2.1 1.2 1.8 1.7 2.4 0.9 2.5 0.3 2.3 0.9 2.5-0 2.4-0.5 2.5 0.3 2.5 0.3M699.1 750.8l-2.3-2.8M699.2 748.3l-1.9-0.9M701.3 769.6l-2.3-1 -2-1.5 -1.3-2.2 -0.3-2.4 0.3-2.5 0.4-2.5 1.3-2.1 0.4-2.4 1.2-2.2 0.2-2.5 -0.2-2.5 -0.6-2.4 -0.7-2.4 -1-2.3 -0.8-2.4M673.5 731.2l-0.6-2.9M662.4 747.6l1.3 2M661.8 750.0l2.8 1M660.4 752.1l-2.1-0.3M658.9 754.1l1.3 0.9M675.8 730.4l-2.3 0.9 -1.9 1.7 -1 2.2 -1.2 2.2 -1.7 1.9 -1.5 2 -1.6 1.9 -0.8 2.4 -1.4 2 -0.6 2.5 -1.4 2.1 -1.5 1.9 -2.2 1.2M749.5 660.9l1.4 2.2M751.2 659.0l2.6 2.2M754.6 655.4l1.7 1.5M763.2 650.4l-1.2-3.9M768.1 645.1l1.8-0M745.8 669.6l0.1-2.5 0.5-2.5 1.1-2.2 2-1.5 1.6-1.9 1.6-2 1.8-1.6 2.3-1.1 2.1-1.4 2-1.4 2.3-1.1 2.1-1.4 1.8-1.7 1-2.3M737.6 692.2l1.2 1M731.8 705.8l-2.7-0.9M731.6 708.3l4.4-0.6M732.6 713.2l-3.3 1.4M741.3 688.7l-1.9 1.7 -1.7 1.7 -1.3 2.2 -1.3 2.1 -0.9 2.3 -0.9 2.4 -0.3 2.5 -1.2 2.2 -0.2 2.5 0.6 2.4 0.4 2.5M689.7 771.8l-4.1 1.1M685.8 778.2l-4.1-0.4M689.8 766.8l0 2.5 -0.1 2.5 -1.1 2.3 -1.2 2.1 -1.5 2 -2.2 1.3M602.5 642.1l2.7 2.9M602.4 644.6l-1.6-0.3M603.4 649.4l-2.6 0.4M609.6 665.5l2.2-1.2M610.4 670.4l3.4 1.7M603.2 639.7l-0.8 2.4 -0 2.5 0.8 2.3 0.1 2.5 0.6 2.5 1.4 2.1 0.5 2.4 1.4 2.1 1.1 2.2 0.1 2.5 1.1 2.3 0.8 2.4 0 2.5 0.2 2.4 -0.7 2.5 -1.4 2 -1.3 2.2 -1 2.3 -1.9 1.6 -1.4 2.1 -1.3 2.1M632.4 634.8l1.8 2.3M634.0 632.9l2 1.5M634.8 628.0l-2.6-0.9M634.4 620.7l-2.9-0.8M627.6 636.3l2.4-0.5 2.3-1 1.7-1.9 0.8-2.4 -0-2.5 -0.5-2.4 -0.5-2.5 0.5-2.4 1.4-2.1M673.5 742.7l3.1-0.7M671.5 759.2l3.8-0.2M672.3 740.6l1.3 2.1 0.2 2.5 -0.7 2.4 -1.2 2.2 -1.3 2.1 -0.4 2.5 0.6 2.4 0.8 2.4M663.0 742.0l-1.5 1.5M671.8 763.9l-0.5-2.5 -0.4-2.4 -0.9-2.4 -0.7-2.4 0.1-2.5 -0.1-2.5 -1.1-2.2 -1.3-2.1 -1.6-1.9 -2.3-0.9 -2.5 0.1M664.0 718.0l3.5 0.3M665.8 713.4l-1.8-1.3M665.9 710.9l2.6-0.6M664.8 706.0l1.8-1.2M664.0 701.1l1.7 0.2M667.6 694.6l-2.7-2.5M669.6 693.1l-2.2-2.3M673.1 689.5l-1.3-2M673.9 687.2l4.1-0.3M670.5 678.1l-3.1 2.6M665.9 672.3l0.7-1.3M659.4 726.7l0.8-2.4 0.9-2.3 1.8-1.7 1.1-2.3 1-2.3 0.9-2.3 -0-2.5 -0.9-2.4 -0.2-2.5 -0.7-2.4 -0.1-2.5 1-2.3 1.3-2.1 1.3-2.1 2.1-1.5 1.8-1.6 1.6-2 0.9-2.3 0.1-2.5 -0.9-2.3 -1.4-2.1 -1.3-2.2 -1-2.2 -1.6-1.9 -1.9-1.6M638.7 726.2l-2.5-3.4M637.0 730.8l3 1.8M635.8 732.9l-4.3-0.1M634.7 735.2l-1.5-0.1M632.1 744.4l2.3-0M645.2 718.7l-1.4 2.1 -1.3 2.1 -1.8 1.8 -2 1.5 -1.3 2.1 -0.4 2.4 -1.2 2.2 -1.1 2.2 -1.6 1.9 -0.8 2.4 -0.1 2.5 -0.1 2.5M776.1 699.0l-3.8-1.1M774.5 706.3l2.7 1.9M777.6 694.2l-0.6 2.4 -0.9 2.4 -0.2 2.4 -0.9 2.4 -0.5 2.5M648.0 614.9l2.4-1.8M649.6 619.7l-1-2.3 -0.6-2.4M647.3 652.4l-0.6 4.2M644.9 651.6l-0.4-1.6M642.6 650.7l-0.8 1.8M640.2 649.8l-2.2 2.9M637.9 648.9l-1.2 2.1M635.7 647.7l-3.1 3.2M612.1 645.1l2.3 3.7M602.5 647.7l-2.6-3.3M652.3 652.7l-2.5-0.2 -2.5-0.2 -2.4-0.7 -2.3-0.9 -2.3-0.9 -2.4-0.9 -2.1-1.2 -2.4-0.9 -2.5-0.2 -2.3-0.9 -2.4-0.6 -2.2-1.4 -2.3-0.9 -2.5 0 -2.5 0.4 -2.3 0.9 -2.3 1 -2.4 0.8 -2.4 0.5 -2.5 0.2 -2.3 1 -2 1.5 -1.9 1.6 -2.2 1.3M753.5 640.8l-2.2-2.5M759.8 630.1l1.6 0.9M750.9 650.4l1-2.3 0.2-2.5 0.6-2.4 0.8-2.4 0.9-2.3 1.5-2 1.1-2.3 1.2-2.1 1.6-2M720.8 676.6l-3.1-0.6M720.2 679.1l-3.7-1M721.9 688.7l-4.2 0.6M722.4 691.1l3.8 0.2M723.2 705.9l-2.7 1.3M717.4 716.6l-1.1-1.3M715.1 717.7l0.2 1.7M707.0 726.9l1.4 3.4M723.2 672.2l-1.2 2.2 -1.2 2.2 -0.6 2.4 -0.2 2.5 0.3 2.5 1.3 2.2 0.3 2.4 0.6 2.5 0.3 2.4 -0.4 2.5 0.2 2.5 -0.3 2.5 0.4 2.4 0.5 2.5 -0.4 2.5 -1.5 2 -0.8 2.4 -1.4 2 -1.7 1.8 -2.3 1 -1.9 1.6 -1.2 2.2 -1.1 2.3 -1.9 1.6 -2 1.6 -1.6 1.9 -0.7 2.4M695.1 684.5l-3.4-1.4M694.7 689.5l-1.7 0.1M699.5 705.9l2.1 0.3M700.3 708.2l-1.7 1.1M718.1 724.6l3.7-1.7M719.2 726.9l3.5-1.3M699.4 675.9l-2 1.5 -1.3 2.1 -0.4 2.5 -0.6 2.4 -0.3 2.5 -0.1 2.5 0.5 2.5 1.3 2.1 1.4 2.1 0.6 2.4 0.7 2.4 -0.1 2.5 0.4 2.4 0.8 2.4 1.7 1.8 0.8 2.4 1.7 1.9 2.2 1 1.8 1.8 1.8 1.7 2.4 0.9 2.2 1.1 1.9 1.7 1.3 2.1 1.1 2.2M680.7 665.1l3.7-1.1M685.1 671.2l-2.6 2.5M687.1 672.7l-0.7 3.1M692.8 677.2l-1.9 3.7M694.7 678.8l2-1M705.7 674.9l-0.7-1.4M709.1 671.2l-1.1-1.3M713.5 665.2l2.6 1.1M716.5 661.2l3.7 1.3M719.9 649.4l1.9-0.2M676.9 662.0l2.2 1.2 1.6 1.9 1.4 2.1 1.4 2.1 1.6 1.9 2 1.5 2.3 0.8 1.9 1.7 1.5 2 1.9 1.6 2.4 0.7 2.5-0.4 2.3-1 2-1.6 1.8-1.6 1.7-1.9 1.7-1.8 1.4-2.1 1.8-1.7 1.2-2.2 1.5-1.9 1.5-2.1 1.1-2.2 1.3-2.2 0.6-2.4 0.3-2.5 0.1-2.5 -0.9-2.3M707.8 755.1l-0.4-2.4M722.2 755.0l3.4-2.6M693.4 759.3l2.3-0.9 2.4-0.8 2.4-0.8 2.4-0.8 2.4-0.5 2.5-0.3 2.4-0.5 2.4-0.6 2.5-0.3 2.5-0.4 2.5 0.3 2.1 1.3 2.4 0.5 2.5 0M657.7 700.9l1.2-2.8M660.2 700.5l1.6 2.8M662.6 701.0l0.6 3.9M664.8 702.2l-0.6 1.5M665.0 713.3l-1.8-0.7M661.8 717.1l3.5 2.6M660.0 721.7l2.1 3.4M652.9 700.1l2.3 0.9 2.5-0.1 2.5-0.4 2.4 0.6 2.3 1.1 1.7 1.8 0.8 2.4 -0.1 2.5 -1 2.3 -1.3 2.1 -1.8 1.7 -1.3 2.1 -0.6 2.5 -1.2 2.2 -1.7 1.8 -0.8 2.4M653.1 668.4l1.1-1.2M650.9 658.8l-1.6-1M648.3 644.3l-3.8-1.1M642.6 625.8l-2.4 0.5M653.8 670.8l-0.6-2.4 -0.9-2.4 -1-2.3 -0.5-2.4 0.1-2.5 -0-2.5 -1.1-2.3 -0.3-2.4 -0.9-2.4 -0.7-2.4 0.4-2.5 0.1-2.5 -0.2-2.4 -1.1-2.3 -1.5-2 -1.5-2 -0.5-2.5 -0.1-2.5 -0.9-2.3 -1.3-2.1 -1-2.3 -1.6-1.9 -2.3-1M639.4 747.7l-0 2.2M647.1 742.2l-1.3 2.2 -1.8 1.6 -2.2 1.3 -2.4 0.4 -2.3 1.1M681.3 671.7l-3.3-1.1M679.8 676.4l2.5 1.5M671.9 693.3l0.5 2.9M667.7 696.0l-2.2-2.8M664.5 699.7l-3.3-1.7M660.1 705.6l-3.8-0.3M658.9 712.9l-3 0.4M684.3 659.8l-0.4 2.5 -0.6 2.4 0 2.5 -0.6 2.4 -1.4 2.1 -0.7 2.4 -0.8 2.3 0.1 2.5 -0.4 2.5 -0.2 2.5 -0.4 2.5 -1.4 2 -2 1.5 -1.6 2 -2 1.4 -2.3 1 -1.8 1.7 -2 1.5 -1.3 2.2 -1.9 1.7 -1.6 1.8 -0.9 2.4 -0.7 2.4 -0.3 2.4 -0.2 2.5M758.7 693.7l-0.2-4.2M774.9 695.1l1.9 2.6M776.8 693.6l2.6 2.1M753.7 694.4l2.5-0.3 2.4-0.4 2.5 0.6 2.2 1.2 2 1.4 2.5 0.5 2.4-0.5 2.3-1.1 2.4-0.7 1.9-1.5 2.4-0.7 2.5-0.4 2.5 0 2.3 0.9 2.1 1.4 1.8 1.7M627.8 679.1l-4.5-0.6M633.5 670.9l-1.2-1.6M637.5 661.8l-2.8-1.3M644.1 654.6l1.2 1M649.6 649.5l3.1 3.1M652.0 648.9l0.2-1.9M656.8 648.7l1 2.5M661.6 650.0l0.3-2.1M666.1 652.1l-0.1 2.9M674.8 648.5l2.6 0.9M627.7 681.6l0.2-2.5 1.1-2.2 1.4-2.1 1.8-1.7 1.3-2.1 1.1-2.3 1-2.3 0.7-2.4 1.2-2.1 1.1-2.3 1.7-1.8 2-1.6 1.9-1.6 1.6-1.9 1.7-1.8 2.1-1.4 2.4-0.6 2.4-0.7 2.5 0.5 2.3 0.8 2.5 0.5 2.1 1.4 2.4 0.7 2.5-0 2.5-0.4 2.2-1.1 1.5-2 1.9-1.7 2.3-0.8M740.9 713.9l-1-2.1M745.6 712.4l1.5 4M759.9 714.1l-1.5 3.1M738.4 714.5l2.4-0.6 2.3-1.1 2.4-0.5 2.5-0.5 2.4-0.6 2.5 0.6 2.1 1.2 2.5 0.2 2.4 0.8M646.2 697.8l-2.7-1.1M646.5 688.0l2.2 0.3M648.4 719.1l-1.5-2 -0.8-2.4 -0-2.5 0.3-2.5 -0.4-2.4 -1.1-2.3 -0.1-2.5 0.3-2.5 1.1-2.2 0.2-2.5 -0.6-2.4 0-2.5 0.8-2.4 -0.4-2.5 0.7-2.4M718.9 700.2l4.3 0.4M720.2 698.1l-2.3-3.2M722.1 696.5l-2.3-2.5M724.2 692.0l-1.8-1.3M725.3 682.1l2.8-0.7M725.3 677.2l4.4 0.1M723.8 672.4l1.3-1.2M719.8 663.3l2.7-1M718.5 661.2l-4.5-0.1M718.5 702.7l0.4-2.5 1.3-2.1 2-1.6 1.3-2.1 0.7-2.4 0.3-2.5 0.6-2.4 0.2-2.5 -0-2.5 -0.4-2.5 0.5-2.4 -0.6-2.4 -1-2.4 -1-2.2 -1.2-2.2 -0.7-2.4 -1.1-2.3 -1.3-2.1 -1.4-2.1 -2-1.5M730.7 662.4l-0.3-3.7M728.2 662.6l-1.1 4M712.6 652.4l-4.4-0.3M741.1 670.7l-1-2.3 -0.7-2.4 -1.6-1.9 -2.2-1.1 -2.4-0.9 -2.5 0.2 -2.5 0.3 -2.3 0.9 -2.3 0.8 -2.5-0.2 -2.2-1.1 -1.7-1.9 -1-2.3 -1.7-1.8 -1.1-2.3 -0.8-2.3 -1.5-2M634.9 630.3l-0.9 3M630.0 631.4l-1.1-3.4M621.9 636.8l-3.1-3.2M617.4 639.0l-1.4-2.4M604.6 646.6l2.6 2.9M599.2 651.6l-2.7-0.9M597.2 653.1l1.1 2.5M639.8 631.1l-2.5-0.4 -2.4-0.5 -2.5 0.4 -2.4 0.8 -2.4 0.5 -2.1 1.4 -1.8 1.7 -1.8 1.8 -2.3 1 -2.2 1.2 -2.3 0.9 -2.2 1.2 -2.4 0.9 -1.8 1.7 -2.1 1.4 -2 1.4 -1.5 2.1 -2.1 1.3 -1.8 1.7 -2 1.5M656.1 639.2l3.9 1.7M662.0 634.6l-1.1-2.5M669.4 624.9l-1.1-3.4M650.9 652.9l1.2-2.2 0.2-2.5 1.1-2.2 0.5-2.5 0.7-2.4 1.5-1.9 1.8-1.8 2-1.4 2.1-1.4 2-1.5 1.4-2.1 0.8-2.4 1.4-2 1.9-1.7M736.1 710.7l0-2M738.5 711.6l1.9-3.9M755.4 708.1l-2.5-3.7M767.3 704.5l-1.2-4M769.8 704.8l0.2 2M717.0 712.6l2.3 1 2.5 0.4 2.4-0.4 2.3-1.1 2.4-0.3 2.5-0.2 2.2-1.2 2.5-0.2 2.4 0.9 2.5-0.1 2.4-0.5 2.5-0.1 2.5-0.2 2.4-0.8 2.3-0.8 2.4-0.9 2.3-0.8 2.5-0.3 2.4-0.7 2.2-1.1 2.4-0.7 2.5 0.3 2.5 0.2 2.5 0.4 2.4-0.5M641.9 662.6l1.7 2.4M643.6 660.7l4 1.8M644.2 653.4l2.2-1.7M647.3 637.1l-1.4-1.2M649.7 632.7l2.8 1.7M651.6 631.1l-2.3-3M654.7 627.3l2.6 2.6M638.3 671.0l-0.3-2.5 0.5-2.4 1.3-2.2 2.1-1.4 1.6-1.8 0.7-2.4 0.5-2.5 -0.5-2.4 -0.9-2.4 0.1-2.5 -0.1-2.5 0.4-2.4 1-2.3 0.9-2.3 1.7-1.9 1.2-2.1 1.2-2.3 1.9-1.6 1.2-2.2 1.8-1.6 2.2-1.3M684.7 656.9l-0.4 2.2M677.4 657.6l-0.6 1.9M700.6 654.0l-1.6 2 -2 1.4 -2.4 0.5 -2.5-0.2 -2.5 0 -2.5-0.2 -2.4-0.7 -2.5-0.3 -2.4 0.6 -2.5 0.5 -2.4 0.6M621.8 625.8l0.4 1.6M631.7 625.7l-2.5-0.5 -2.4 0.4 -2.5-0.3 -2.4 0.5 -2.3 1.1 -2.1 1.3 -2.2 1.2 -1.9 1.6 -2.3 0.9M633.7 706.9l0.6 2M636.0 706.1l3.5 2.8M616.4 707.7l2.5 0.2 2.4-0.7 2.5 0.4 2.4-0.5 2.5-0.1 2.5-0.2 2.5 0.1 2.4-0.8 1.9-1.5 2.3-1 2-1.5M618.8 638.5l1 1.9M620.3 654.5l-2.3 3.6M621.8 659.2l1.9-0.7M622.5 661.6l3.7-0.5M627.3 667.3l4-1.2M628.6 669.4l2.9 0M629.8 671.6l-1.8 0.5M631.4 673.5l-0.6 1.7M620.4 636.6l-1.6 1.9 -1.3 2.1 -0.6 2.5 -0.7 2.4 0.4 2.5 1 2.3 1.3 2.1 1.3 2.1 0.8 2.4 0.8 2.3 0.7 2.5 1.5 1.9 2 1.6 1.3 2.1 1.3 2.1 1.2 2.2 1.6 2 2.1 1.3 1.5 2 2.2 1.1M780.1 684.0l3.5-2.6M780.4 686.4l-4.2 0.7M779.8 693.8l3.2 0.7M775.7 702.8l-2.6-2.2M778.6 679.2l0.4 2.5 1.1 2.2 0.3 2.5 -0 2.5 -0.8 2.4 0.2 2.5 -0.6 2.4 -0.9 2.3 -1.3 2.1 -1.3 2.2 -0.3 2.5 -0.1 2.5M714.0 726.7l2.5 1.2M714.7 721.8l-3.8-1.5M716.1 714.4l2.6 0.6M708.2 734.8l1.6-1.9 1.8-1.8 1.3-2.1 1.1-2.3 0.7-2.4 0-2.5 0.5-2.4 0.3-2.5 0.6-2.4 -0.4-2.5 -1.2-2.2M776.5 660.4l-0-2.5M795.2 680.6l-4.2 1.3M795.3 678.1l-0 2.5 -1.1 2.3 -0.4 2.4 -0.2 2.5 -0.1 2.5 0.3 2.5 0.1 2.5M663.3 696.0l1.6 0.6M660.5 703.0l2.8 1.6M657.8 709.7l0.9 2.7M655.8 711.2l-0.9-2M649.4 720.6l-2.5 1.1M648.5 723.0l-3.1-0.6M663.5 693.6l-0.2 2.5 -0.7 2.4 -1.4 2.1 -0.6 2.4 -0.4 2.5 -0.8 2.4 -1.6 1.9 -2 1.5 -2.3 0.8 -1.9 1.7 -1.5 2 -0.7 2.4 -0 2.5 -0.8 2.3M752.7 691.0l-3.3 0.6M758.8 707.1l3.8-0.9M762.6 713.5l2.6-1.3M747.0 682.9l1.7 1.9 1.4 2 1.7 1.9 0.9 2.3 1.2 2.2 0.4 2.5 0.4 2.4 1.2 2.2 1.1 2.2 0.4 2.5 1.4 2.1 0.8 2.4 1.7 1.8 1.3 2.2M695.7 697.3l-1.3 3.1M683.9 695.8l0.5 2.7M704.7 701.6l-2.4-0.9 -2.3-0.8 -2.1-1.3 -2.1-1.4 -2.1-1.4 -2.4-0.5 -2.5 0.5 -2.4-0.5 -2.5 0.5 -2.4-0.5 -2.5 0.4M644.5 719.3l4.2 1M645.8 717.1l3.6 2.7M643.6 721.6l0.9-2.3 1.2-2.2 1.5-2 0.6-2.5 -0.1-2.5 -0.6-2.4 -0.6-2.4 -0.6-2.4M725.2 627.9l-3.6 1.8M718.3 625.1l-0.2-4.3M709.4 616.7l0.7-1.5M701.5 610.8l-1.6 2.4M727.3 629.3l-2.1-1.4 -2.3-0.8 -2.2-1.3 -2.4-0.7 -2.3-0.9 -1.8-1.7 -1.6-2 -1.6-1.9 -1.6-1.9 -2.2-1.2 -1.6-2 -1.9-1.5 -2.2-1.2 -2.2-1.2 -2-1.5M651.2 640.9l-1.6-0M638.2 634.0l1.2-3.2M636.1 632.7l-1.5 2.7M626.5 625.0l-4.2 1.5M651.8 643.3l-0.6-2.4 -1.6-1.9 -2.2-1.2 -2.4-0.8 -2.2-1.2 -2.3-0.8 -2.4-1 -2.1-1.3 -1.6-1.9 -2.1-1.3 -2.3-1 -1.8-1.8 -1.8-1.7 -2.2-1.2 -2.3-0.8M678.7 604.8l1.5-1.3M681.9 614.1l-0.8-2.4 -1.2-2.2 -0.1-2.5 -1.1-2.2M671.3 703.8l-2.2-1.1M678.7 697.7l-0.4-3.5M683.7 697.3l0 4.1M686.2 697.2l0.5 3.2M688.6 696.7l0.5-3.1M693.0 694.4l2.7 1.3M694.2 692.2l-2.8-1.8M695.6 690.1l-1.2-1.5M696.2 687.7l-1.9-1.5M695.9 685.2l-4-0.6M692.1 678.9l-3.5 0.9M690.2 677.3l2.7-2.1M683.2 674.5l-1.9 1.8M674.1 670.7l1.1-2.1M671.2 713.5l-0.9-2.3 -0.1-2.5 0.2-2.5 0.8-2.4 1.5-2 1.4-2.1 2.1-1.3 2.4-0.7 2.5-0 2.5-0.4 2.5-0.1 2.5-0.5 2.3-0.8 2-1.5 1.3-2.2 1.3-2.1 0.6-2.4 -0.3-2.5 -0.7-2.4 -1.5-2 -1.6-1.9 -1.9-1.7 -2.2-1.2 -2.3-0.8 -2.4-0.7 -2.4-0.8 -2.4-0.6 -2-1.5 -2.4-0.9M779.8 702.8l-2.5-3.2M777.6 704.1l1.6 2.3M775.9 705.9l0.9 1.6M782.0 701.7l-2.2 1.1 -2.2 1.3 -1.7 1.8 -1.4 2.1M695.7 657.5l1.1 2.4M694.5 659.7l-3.8-1.6M693.2 669.5l3.1 2.5M689.2 675.8l1.5 1.7M689.6 685.5l2.1 1.2M680.2 692.9l0.8 2.1M675.3 693.9l-0.8-1.5M701.6 652.8l-2 1.4 -1.9 1.7 -2 1.6 -1.2 2.2 -0.1 2.5 -0.3 2.4 -0.3 2.5 -0.6 2.4 -1.4 2.1 -1.7 1.8 -0.9 2.4 -0.1 2.5 0.8 2.4 0.4 2.4 -0.7 2.4 -1.1 2.3 -1.7 1.8 -2.3 1.1 -1.9 1.6 -2.4 0.6 -2.5 0.4 -2.4 0.6M672.0 650.9l-2.8 2.8M658.2 647.5l-1.5-2.1M653.5 649.0l0.1-4M674.2 652.1l-2.2-1.2 -1.7-1.8 -2.2-1.2 -2.5-0.5 -2.4-0.4 -2.5 0.2 -2.5 0.2 -2.3 1.1 -2.4 0.5 -2.5 0.1 -2.5-0.1 -2.3-1 -2.2-1.2 -2.2-1.3M669.5 635.3l1.2 2.5M672.0 635.9l-0.9 3.9M659.6 634.8l2.5-0.1 2.5-0.1 2.4 0.6 2.5 0.1 2.4 0.6 2.4 0.7 2 1.6 2.2 1.1M677.9 706.1l-1.8-1.5M682.6 700.3l4.2 0.5M695.5 688.8l1.9 1.6M703.5 683.7l3.3 1.8M708.1 677.9l-2.4-3.5M712.1 675.0l-2.4-1.7M717.8 670.1l2.2 2.3M719.9 668.9l-1.3-2.1M676.7 710.9l0.8-2.4 0.5-2.4 1.4-2.1 1.9-1.6 1.3-2.1 1.8-1.7 1.8-1.8 1.8-1.7 1.6-2 1.6-1.8 2-1.7 2.3-0.8 2.5-0.3 2.3-1 1.8-1.8 1.4-2 1.2-2.2 1.4-2.1 2-1.5 2.2-1.2 1.8-1.7 1.7-1.9 2-1.5 2-1.5 2.2-1.2 2.4-0.5M623.4 730.1l1 1.6M635.7 730.3l-0.4-3.5M638.2 730.2l0.8-3.2M640.7 730.0l-0.7-2.4M643.2 730.5l-0.7 3.8M620.9 730.4l2.5-0.2 2.5 0 2.4-0.7 2.5 0.2 2.5 0.4 2.4 0.2 2.5-0.1 2.5-0.2 2.5 0.5 2.3 1 2.2 1.1 2.1 1.5M707.6 640.0l-1.6 4M705.8 638.2l-2.6 3.1M703.9 633.6l-2.2 0.1M701.2 621.6l-2.2 1.3M704.6 607.6l-1.6-0.7M711.3 643.2l-1.6-1.9 -2.1-1.4 -1.8-1.7 -1.3-2.2 -0.6-2.4 -0.1-2.5 -0.5-2.4 -0-2.5 -0.8-2.4 -1.2-2.2 -0.2-2.5 -0.4-2.5 0.6-2.4 1.4-2.1 0.8-2.3 1.2-2.2 1.3-2.1 0.8-2.4 0-2.5M762.4 694.6l-0.9 1.7M760.6 692.8l3-3.2M757.9 688.7l-1.6 0.3M748.7 680.5l-2.6 1.8M732.1 669.8l-1.3 3.5M729.6 669.8l0.3-1.5M723.3 666.0l1.3-1.6M711.8 656.7l3.2-2.2M764.7 695.4l-2.3-0.9 -1.8-1.7 -1.8-1.8 -0.9-2.3 -1.7-1.8 -1.7-1.9 -2.2-1.2 -2-1.5 -1.7-1.9 -2.1-1.3 -1.8-1.7 -2-1.5 -2-1.5 -1.7-1.8 -2.1-1.4 -2.5-0.4 -2.3-1 -2.5-0.1 -2.4-0.6 -2-1.4 -1.9-1.7 -1.6-1.9 -2.1-1.3 -2-1.5 -2.2-1.3 -2.1-1.4 -1.5-1.9 -1.3-2.2 -1.5-2M621.0 666.0l-0.6-2M606.3 667.3l-0.1 2.3M644.9 677.2l-2.4-0.8 -2.2-1.1 -2.2-1.2 -1.3-2.1 -2.2-1.4 -1.8-1.6 -2.3-1 -2.1-1.5 -2.4-0.4 -2.5-0.2 -2.5 0.1 -2.5 0.1 -2.5-0.2 -2.5 0.3 -2.5-0.3 -2.4 0.6 -2.4 0.7 -2.3 0.9 -2.1 1.3 -2.1 1.4 -2.5 0.5M752.6 706.3l-2.7 1.4M740.0 695.3l-1.2 2.6M734.3 690.4l0.8-2.7M753.6 708.6l-1-2.3 -1-2.3 -1.5-2 -1.4-2 -2.1-1.4 -2.1-1.3 -2.3-1 -2.3-1.1 -1.6-1.8 -2.2-1.3 -1.9-1.7 -1.6-1.9M688.8 639.0l-2-0.7M661.9 650.6l0.1 3.7M655.6 654.6l-1.3-1.6M700.4 635.0l-2.5 0.4 -2.4 0.7 -2.5 0.2 -2.2 1.1 -2 1.6 -2.2 1.1 -1.6 1.9 -2.1 1.4 -2.4 0.6 -2.1 1.2 -2.1 1.4 -2.4 0.8 -2.4 0.7 -2.3 0.9 -2.5 0.2 -2.3 0.9 -2.5 0.5 -2.3 0.9 -1.9 1.7 -2.1 1.4 -1.3 2.1 -0.7 2.4 -1.3 2.1 -1.9 1.7 -2.1 1.2 -2.5 0.7M659.4 678.7l3.1 1.6M655.5 681.9l1.3 2.2M652.1 685.5l-2.3-1M648.4 688.7l-2.7-3.6M644.7 692.0l1.2 1.4M639.0 699.7l3.4 0.8M637.9 707.0l2.3 0.9M636.8 716.9l-1.7-0.3M662.3 674.7l-1.8 1.7 -1.1 2.2 -1.8 1.8 -2.1 1.4 -1.7 1.8 -1.7 1.8 -1.5 2 -2.2 1.3 -1.6 1.9 -2.1 1.3 -2.2 1.3 -1.8 1.7 -1 2.3 -0.7 2.4 -0.8 2.4 -0.4 2.5 0.1 2.5 -0.4 2.4 -0.1 2.5 0 2.5 -0.6 2.4 0.2 2.5 -0.6 2.5M720.4 725.8l3-2.1M721.4 728.1l-2.4 0.8M722.5 730.3l-1.3 1.4M724.1 732.3l-1 1.7M725.9 734.0l3.5-2.7M730.8 742.5l-2.9-0.1M714.4 718.2l2.1 1.3 1.8 1.8 1 2.3 1.1 2.2 1.1 2.3 1.1 2.2 1.5 2 1.9 1.6 1.4 2.1 1.7 1.8 1.3 2.2 0.4 2.4 -0.1 2.5 0.7 2.4 0.9 2.3 0.9 2.4M697.1 600.7l-1-2.9M695.1 602.2l2-1.5 2.1-1.3 1.5-2M620.3 678.0l1.6 2.6M616.0 680.6l-3.2-2.2M613.6 681.2l-1-1.2M609.0 683.1l0.6 1.6M603.9 688.4l-2.5-0.4M622.1 676.3l-1.8 1.8 -2.2 1 -2.1 1.5 -2.4 0.6 -2.4 0.6 -2.1 1.3 -2.1 1.4 -1.6 2 -1.5 2 -1.3 2.1M633.7 744.4l-0.7 2.2M631.2 744.1l-1.9 3M628.7 743.8l-1.2 1.5M647.2 747.8l-1.6-1.9 -2.1-1.3 -2.5-0.5 -2.4-0.7 -2.5 0.3 -2.4 0.6 -2.5-0.2 -2.5-0.3M709.2 692.1l2.2 0M709.7 682.3l3.2-0.3M718.0 668.4l-1.8-1.7M720.1 667.0l3.2 3M723.4 663.3l2.1 2M723.9 660.9l-4-0.7M734.2 650.4l3.6 2.2M711.3 713.8l0.3-2.5 0.1-2.5 -0.2-2.5 -1.1-2.2 -0.6-2.5 -1.1-2.2 -0.1-2.5 -0.2-2.5 0.9-2.3 0.7-2.4 -0.3-2.5 0.3-2.5 -0.2-2.5 0.1-2.5 -0.2-2.5 0.9-2.3 1.7-1.8 2.1-1.4 2.2-1.2 1.4-2.1 2.1-1.4 1.8-1.7 1.5-2 0.5-2.5 1-2.2 1.8-1.8 2-1.5 1.5-2 1.9-1.7 2.1-1.3M691.5 705.9l3.1 2.2M691.7 708.4l2.9 1M693.0 710.5l2.9-0.1M693.3 715.4l2 0.8M692.8 691.2l-0.7 2.4 -0.4 2.5 -0 2.5 0.8 2.3 -0.4 2.5 -0.6 2.4 0.2 2.5 1.3 2.2 0.6 2.4 -0.3 2.5 0.8 2.4 0.7 2.4 1.5 2 1.9 1.6 1.9 1.7 1.9 1.5 2.4 0.6 2.5 0.1 2.4-0.8 2.5-0.2M616.2 708.0l-3.6-0.3M613.1 698.7l4.1-1.3M612.0 696.4l2.2-2.1M612.4 682.7l2.5 2.2M616.8 674.7l-3.9-1.2M616.7 715.4l-0.2-2.5 -0.4-2.5 0.2-2.5 -0.4-2.4 -0.3-2.5 -1.2-2.2 -1.3-2.1 -1.1-2.3 -1.3-2.1 -0.8-2.4 -0.1-2.5 0.1-2.5 0.9-2.3 1.6-1.9 2.2-1.2 1.6-2 0.7-2.4 -0.1-2.5 -0.9-2.3 -1.5-2 -1-2.3M763.2 646.3l1.9 1.6 2.3 1.1 2.4 0.7 2.5-0.2M700.5 618.9l1 1.2M691.8 627.7l-2.3-3.3M685.0 639.8l-2.5 0.7M684.3 642.2l-3.3 0.2M679.5 650.6l-1.5-1.6M677.8 652.4l1.3 1.5M675.4 653.3l-1-4.3M664.7 659.3l-1.7-0.7M660.8 662.2l1.3 2.4M703.0 614.5l-1.2 2.2 -1.2 2.2 -1.6 1.9 -1.6 1.9 -1.9 1.6 -1.6 2 -2 1.4 -2.3 1.1 -1.9 1.5 -1.5 2.1 -0.5 2.4 -0.4 2.5 -0.3 2.5 -0.7 2.4 -0.9 2.3 -0.6 2.5 -1.3 2.1 -2 1.5 -1.7 1.8 -2.3 0.9 -2.3 1 -1.9 1.7 -2.4 0.7 -2.3 0.9 -1.9 1.6 -2.3 1.1 -1.6 1.9 -1.8 1.7 -2.3 1.1M700.5 701.8l1.9 0.3M703.6 689.9l-2.4-0.4M705.9 685.6l3.3 0.1M699.2 667.5l-2.2 1.1M695.0 664.9l1.5-3.1M700.5 704.3l-0-2.5 -0.2-2.5 0.4-2.5 1.1-2.2 0.9-2.3 0.8-2.4 1.7-1.9 0.7-2.4 -0.2-2.4 -0.5-2.5 -0.9-2.3 -0.4-2.5 -0.7-2.4 -0.5-2.4 -1.5-2.1 -2-1.4 -2.2-1.3 -2-1.4M720.4 640.7l0.2 3M713.5 643.3l-0.9-2.2M711.0 643.0l0.1-3.5M700.2 647.7l2.4 2.5M699.4 650.1l-2 0M696.6 659.6l3.2 2.4M722.9 640.8l-2.5-0.1 -2.4 0.8 -2.1 1.3 -2.5 0.5 -2.4-0.3 -2.5-0.3 -2.5 0.5 -2.1 1.2 -2.2 1.3 -1.5 2 -0.9 2.3 -1 2.3 -0.6 2.5 -0.5 2.4 -0.7 2.4 0.3 2.5 -0.6 2.4M617.9 670.9l0.3-4.1M620.4 670.8l-0-1.6M622.8 670.1l-0.7-3M632.6 668.6l0 2.8M635.0 667.7l1 2.6M639.5 665.6l2.4 2.9M641.5 664.1l1.2 1.5M643.2 662.3l-2.3-1.5M644.2 660.1l3.3 1M650.9 650.0l-2-0.4M651.8 647.6l1.7 0.2M652.9 645.4l-1.6-2.4M607.2 679.1l1.5-2 0.8-2.4 1.4-2 2.1-1.4 2.4-0.7 2.5 0.3 2.5-0.1 2.4-0.7 2.4-0.6 2.4-0.8 2.5-0.1 2.5-0 2.3-0.9 2.2-1.2 2.3-0.9 2-1.5 1.8-1.8 1-2.3 1.4-2.1 2-1.5 1.7-1.8 1.2-2.2 0.4-2.4 0.8-2.4 1.1-2.2 0.5-2.5M708.1 778.8l-1.9-0.8M702.1 786.4l-1.1-1.9M693.2 790.8l-2-1.9M713.4 767.6l-0.9 2.3 -1.6 2 -1 2.3 -0.8 2.3 -1 2.3 -0.7 2.4 -1.5 2 -1.7 1.8 -2.1 1.3 -2.4 0.9 -2.2 1.2 -2.1 1.2 -2.2 1.2M648.1 661.8l-3.4-0.6M650.3 654.6l3.8-0.8M651.7 652.6l1.4 0.9M656.0 650.2l1.1 2.4M663.4 650.4l0.5 1.6M672.5 654.3l1.8-2M675.0 654.3l0.6 1.4M682.4 654.3l0.1 2.2M684.6 653.1l1 1.4M689.0 650.7l-0.4-3.4M691.4 650.1l0.3 4M696.2 648.7l1.1 3M647.2 666.7l0.6-2.4 0.3-2.5 0.6-2.4 0.8-2.4 0.8-2.4 1.4-2.1 1.9-1.5 2.4-0.8 2.4-0.7 2.5 0.5 2.5 0.3 2.1 1.3 2.4 0.7 2.3 1 2.3 1 2.5-0 2.5-0.2 2.4 0.5 2.5-0.3 2.2-1.2 2.1-1.4 2.2-1 2.5-0.6 2.4-0.6 2.4-0.8M695.1 683.9l4.3 0.7M695.8 681.6l2.7 0.4M696.9 679.3l-3-2.7M697.7 671.9l-4.3-0.2M698.9 669.7l4.3 1.1M700.9 668.2l3.6 2.1M705.9 667.7l0.8 1.6M712.5 671.2l-1.2 1.4M719.8 677.9l3.4-1.7M690.5 689.9l1.6-2 1.5-1.9 1.4-2.1 0.8-2.4 1-2.2 0.5-2.5 -0-2.5 0.4-2.5 1.2-2.2 2-1.4 2.4-0.5 2.5 0 2.3 1 2.3 1.1 2.1 1.4 2 1.4 2 1.5 1.4 2.1 1.9 1.6 2.3 1.1M637.2 651.9l-1.1 2.7M623.2 646.7l-1.6 2M618.2 646.2l-0.2-2.7M639.2 653.3l-2.1-1.4 -2.2-1.1 -2.4-0.8 -2.4-0.5 -2.4-0.7 -2.2-1.4 -2.3-0.7 -2.5-0.4 -2.5-0.1 -2.4-0.9 -1.7-1.7 -1.1-2.3 -1.7-1.8 -1-2.4 -1.7-1.7M643.7 688.9l3.1-3.1M641.5 687.6l1-1.3M636.7 686.4l0.4-1.9M620.3 680.9l-3 2M645.6 690.5l-2-1.5 -2.1-1.4 -2.3-0.9 -2.5-0.3 -2.5-0.3 -2.3-1.1 -2.1-1.2 -2.5-0.3 -2.4-0.6 -2.4-0.9 -2.2-1 -2.5-0.3 -2.2-1.2 -2.5-0.3M616.1 731.4l1.5-0.8M615.7 728.9l-3.2-1.3M615.6 723.9l3.5 0.3M632.9 740.8l-2.5-0.4 -2.3-0.8 -2.3-1.1 -2.4-0.5 -2.2-1.3 -1.7-1.8 -2-1.5 -1.4-2 -0.4-2.5 0-2.5 -0.1-2.5M644.1 667.2l3.6 1.2M651.1 664.6l1.6 1.4M652.7 662.7l-3.1-2.6M657.5 657.1l1.4 1.2M661.0 653.6l1.4 1.2M664.8 650.4l1.8 1.1M666.6 648.6l1.8 2.3M669.8 641.9l-2.6-0.6M670.8 639.6l4.4 0.5M674.4 633.1l-4.2-1.5M675.5 628.3l-2.4-0.8M677.1 626.3l-3.1-3.2M681.2 614.6l2.7 0.6M640.8 670.9l1.4-2.1 1.9-1.6 2.3-0.9 2.5-0.5 2.2-1.1 1.6-2 1.8-1.7 1.1-2.2 1.9-1.6 2-1.6 1.5-2 2-1.5 1.8-1.7 1.8-1.8 1.2-2.1 1.2-2.2 0.8-2.4 1-2.3 1.2-2.2 1.6-1.8 0.8-2.4 0.5-2.5 0.7-2.4 1.5-1.9 0.8-2.4 0.5-2.5 0.8-2.3 0.7-2.4 1.3-2.2 1.8-1.7M771.2 674.3l-1.9 0.5M770.2 669.4l1.7-0M767.4 665.3l2.5-1.3M759.0 660.2l-1.2 3.4M772.9 676.2l-1.7-1.9 -0.8-2.3 -0.2-2.5 -1.1-2.2 -1.7-1.9 -2.2-1.2 -1.6-1.9 -2.2-1.2 -2.3-0.8M663.3 652.7l-0.7-1.5M665.5 651.7l-1.5-2M676.8 647.0l2.5 1.3M685.7 642.9l0.1-3.6M687.9 641.7l2.2 3.9M694.6 638.5l2.9 3.5M696.7 637.1l-0.6-2.6M701.8 631.7l1.1 1.2M706.5 630.1l0.9 4.3M658.9 655.0l2.4-0.7 2-1.6 2.2-1.1 2.5-0.2 2.5-0.5 2.2-1.1 2-1.5 2.1-1.3 2-1.6 2.2-1 2.5-0.4 2.2-1.1 2.2-1.2 2.4-0.7 2.2-1.2 2.1-1.4 2.1-1.4 2-1.5 1.2-2.2 1.9-1.6 2.2-1.1 2.5-0.5 2.5 0.2M666.2 744.2l1.2-3.8M668.3 745.5l-1.6 3.9M670.2 747.1l2.6-1.3M672.8 754.0l-2.5 2M674.0 756.2l3.1-0.8M675.7 758.1l2.1-2.5M682.1 761.9l1.3-3.2M659.1 741.7l2.3 1 2.3 0.8 2.5 0.6 2.1 1.4 1.9 1.5 1.3 2.2 0.9 2.3 0.4 2.5 1.2 2.2 1.7 1.8 2.1 1.4 2.1 1.3 2.2 1.2 2.3 0.9 2.5 0.6 2.3 1 2.5 0.1 2.5-0.1 2.5-0.4 2.4 0.2M646.3 750.4l-2.1 1.4M674.8 648.8l-0.9-1.3M661.8 642.2l-1.8 0.6M658.0 639.2l-2.7 1.8M654.1 632.9l-2.3 1M652.2 631.3l-3.7 2.2M649.8 630.4l-1.2 1.1M644.8 630.1l-0.6-4.4M640.5 632.5l-1.6-2M636.8 635.7l-3.4-0.5M688.7 643.4l-2.2 1.2 -2.3 1 -2.2 1.2 -2.2 1.1 -2.5 0.3 -2.4 0.6 -2.5-0.5 -2.3-0.9 -2.4-0.9 -2.3-0.8 -2-1.5 -1.6-2 -2.2-1.2 -1.6-1.8 -1.8-1.8 -0.9-2.4 -1.2-2.1 -1.9-1.6 -2.3-0.9 -2.5-0.1 -2.5-0.2 -2.4 0.8 -1.9 1.6 -2.2 1.3 -1.5 1.9M626.6 731.9l-3 2.6M627.8 734.1l-1.6 2.8M628.5 736.5l-3.4 0.9M628.3 739.0l2.5 1.5M624.3 722.2l0.2 2.5 0.5 2.4 0.6 2.5 1 2.3 1.2 2.1 0.6 2.5 -0.1 2.5 -0.2 2.4M715.8 695.0l3.9-1 0.5 2.3M715.0 697.0l2.3-4.1M715.8 701.2l1.4 2.8 2.5-1.2M716.9 699.5l2.9-2.5M711.0 696.2l1.7 2M716.2 698.9l1.2 4.1M709.9 700.9l5-3.2M715.0 698.3l3.2-3.3M716.1 694.4l3.4 4.7M713.6 701.6l2.6-4.1 1.7 1.1M712.9 698.4l1.6-1.3M716.1 698.6l1.3 1.7M713.7 694.6l3.7-1.2M713.4 696.1l2.8-2.6 -2-2.1M715.5 695.4l4.3-1.4 -0.7-2.4M711.3 694.2l2.5-3.3M712.7 699.6l2.1-2.9 -2.4-1.8M710.5 701.1l1.5 5M715.4 701.1l1.1 4.6 -2 0.5M715.7 698.6l3-1M713.4 696.9l4.3 1.6 0.7-1.9M605.0 697.0l3.3-3.9 -1.5-1.3M608.4 695.9l0.6 2.5 3.5-0.8M608.6 703.0l2.2-5.2M608.1 695.3l4.9-2.9M611.2 697.2l1.4 1.8 -1.9 1.5M608.3 694.8l1.3-3M608.7 702.8l2.4-3.5 -2.6-1.8M601.4 696.1l2-1.7 1.3 1.5M602.6 695.5l3.5-3.7M604.5 695.8l1 4 3.9-1M603.5 697.3l2.4-2.3 1.4 1.5M608.6 698.3l2.8-3.8 1.4 1.1M608.5 695.2l3.5-1.2 0.5 1.6M612.0 701.5l0.7 2.6M609.2 702.5l1.9 4.6M604.2 696.1l2 2.1M606.5 700.5l0.8 2 -3.6 1.5M608.1 696.5l3-2.3 -1.6-2M603.6 699.4l1.1 4.2M612.4 701.7l4 3.2M610.3 695.6l2.2 1 0.9-1.9M605.3 695.8l4.1-3.5M594.2 646.5l3.9 2.2 -2 3.5M599.2 649.2l3 2.3 -2.4 3.2M597.0 650.0l5.2-1.7M594.5 646.9l1.6-4M599.6 648.5l2.9-3.1M598.7 647.3l2.1-5.2M594.6 649.9l4.4-4M598.8 653.0l1 1.8 -1.2 0.7M599.7 651.3l1.3 4.6M595.5 645.2l1.7 1.3 1-1.4M595.2 646.0l3 3.1M596.0 652.8l2.2-1.2 -1.7-3.3M599.7 649.7l3.4-3.1M597.3 647.9l2.4 1.7M600.1 648.6l1.8-4.9 2.6 0.9M599.1 653.8l5.4-1.7M595.3 644.3l2.1-4.7M593.2 645.9l1.9 3.1 -1.3 0.8M593.2 648.8l5-2.9M594.7 645.5l0.9 2.3 1.8-0.6M594.6 646.6l2.5 1.1 1.3-3M598.4 650.9l1.9-1.3M756.0 631.4l1.8 1.7M764.1 634.2l1.6-2.5M760.4 633.9l1.2 3.3M754.4 634.8l2.4 2.9M757.4 635.0l3.5 3.4 1.5-1.5M755.1 631.7l4.5 1.9 0.8-1.9M763.6 636.2l2.3 4.3M753.5 632.8l1 2.3 1.8-0.8M761.9 637.2l2.3 2.5 -1.9 1.8M758.5 632.3l1.4-2.8 2.8 1.5M763.2 633.0l3.2-3.8 -3-2.6M756.6 631.2l1.4 1.5M760.1 635.5l4.1 4.1 -1.4 1.4M760.7 633.9l3.5 2.6M765.1 635.9l2.1 4.2M761.8 636.5l2.2-2.5 2.8 2.5M761.6 634.4l3.3 3.4M755.2 633.1l1.4 3.4 3.6-1.5M761.9 633.0l3 4.8M759.0 635.4l3.8-2.9 -2-2.7M757.4 636.4l3.4 3.7M762.0 634.9l3.8-3.1M760.3 634.6l3-4.5 1.8 1.3M632.6 699.8l1.7-1.4M627.0 701.5l2.2 1.6M635.3 701.5l5-1.2 -0.3-1.5M633.0 700.2l2.6 4.6M630.4 699.4l4.3-1.6 -0.9-2.3M627.7 700.4l2.2-3.6M636.4 700.7l3.6 3.9 1.6-1.4M630.0 698.6l2.4 3.5M634.9 699.4l2.2 1.6 -1.8 2.4M628.0 703.5l2-4.7M629.6 699.5l3 4.6 3.3-2.1M637.0 698.8l1.9-0.9M633.7 698.8l1.4-2.8M630.5 702.0l3.8-2 -1.5-2.7M636.4 699.4l2.5-3.6 -2.8-2M633.5 701.5l1.5-4.2M629.8 699.5l2.5-0.8M637.1 702.1l2.2-2 -1.7-1.9M633.7 699.5l3.3-3.5 1.6 1.5M631.7 704.1l1.4 1.7M634.7 703.0l0.9 2.6 -3.7 1.3M632.9 701.1l4-1.7 -0.9-2.2M629.0 698.9l2 3.8 1.5-0.8M712.8 607.0l5-1.2 0.5 1.7M708.1 612.0l3.3-3.4 -1.2-1.2M712.9 605.3l1.9-5M712.3 610.0l2.6 2.3 -1.2 1.4M712.4 605.6l3.7-3.7M711.9 608.0l5.2-1.6 0.6 1.8M709.8 609.7l2.8 3M708.2 609.7l2.2 2.1 -2.2 2.3M707.8 611.4l3.7-1.3 0.9 2.8M710.0 610.3l3.5-2M710.6 610.6l1.7 1.8 1.8-1.6M714.2 608.3l5.4-2.5 1.6 3.3M711.4 610.8l0.8 3 -3.4 0.9M707.4 611.8l1.9 2.4M711.7 606.4l2.8 3.4 -1.3 1M710.9 605.7l2.9-0.7 0.6 2.3M709.7 606.3l1.2 1.7M714.0 607.9l3.9 3.6 -2.2 2.3M713.2 607.2l2-2.6 1.7 1.3M708.3 607.4l2.3-1.3M709.0 606.2l3.6-2.4 -0.9-1.5M668.5 677.5l1.2 3.2 -3 1.1M669.8 673.5l1.7-1.5M670.8 677.7l3.1-4.7M669.2 669.4l2.3-2.3 1.5 1.5M669.8 675.3l3-3.8 -2.2-1.7M673.2 670.4l1.9-0.6M668.2 675.5l1.5 5.4 1.7-0.4M672.2 672.8l3.8-3.1 -1.6-2M672.6 669.4l2.5 3.4M673.8 670.4l3 2.9M673.3 673.1l2.8-2.2 -1.4-1.8M671.3 671.6l2.6 4.9M671.6 675.9l5.3-2.5 -1.3-2.8M673.0 671.8l2.7-1.4 1.1 1.9M672.0 675.0l2.4-2.1M672.1 669.9l4.8-2 1.2 2.9M673.8 670.0l2.2-4.5M672.6 669.0l3.1 3.8M673.4 673.7l2.3 3M669.5 672.7l1.5-1.5M671.4 671.2l1.7-3.5M671.8 668.6l3.7 4.3M706.1 725.7l2.5 3.6M706.2 727.9l2.6 1.3 1.7-3.2M706.5 727.2l2-3.4M710.2 724.6l4.4-3.7 -1.5-1.8M705.8 727.9l4.2 2.9M710.6 724.7l4.8 2.2M707.0 721.7l0.9-1.8 -2-1M706.5 722.3l3.4 2 -1.8 3M707.5 724.9l2.5 1.5M705.0 726.0l2.7 1.4 1.2-2.2M704.5 722.6l3.6-3.9M704.2 722.5l1.8-3 2.5 1.4M705.8 727.7l2.4-4.1M707.7 722.8l2.9 2.9M704.4 724.8l3.4-2.4 1.2 1.8M708.8 725.8l3 1.5M704.1 723.3l2.8 1.2M704.1 727.6l2.1-0.7 -1.1-3.1M709.2 725.4l2 2 1.5-1.5M709.4 724.3l3-4.6 -1.7-1.2M707.2 726.3l4.4 3.3 -1 1.2M708.5 727.3l2.4 2.4 1.6-1.6M703.0 724.1l1.6-2.5 1.6 1.1M706.5 726.5l2.8-1.6 -1.4-2.5M710.7 724.4l2.2-0.6 -1-3.4M696.0 682.9l1.3 2.4M699.2 688.2l1.4 5.8M699.8 687.0l2.2 5.6M695.2 688.9l4.2-2.3M697.1 688.0l2.1 3 1.4-0.9M698.0 688.2l1.6-2.8M698.3 683.8l5.6-1.6 -1-3.7M696.9 688.1l1.1-2M693.1 687.7l2 5.1 1.9-0.7M699.8 685.3l2 4.6 -2.8 1.3M692.5 686.1l3.1-3.5 1.2 1M693.3 687.5l4.2-2.9 2 2.8M697.4 685.7l2.5 2.7M695.8 682.6l2.1-0.7M697.8 683.1l3.2 3.3 2.4-2.3M693.5 684.8l3.3 3.2 -2 2M694.1 687.3l3.2 3.9 -3 2.5M693.7 688.8l3.5 1.8M696.7 683.7l1.6-2.7M697.9 686.0l3.8-3.2M696.4 687.6l3.1 3 2.7-2.8M698.2 683.7l1.3-1.8 -1.4-1.1M697.8 688.2l2-2.6M696.0 684.9l3-2.8M692.6 685.6l2.3-5M697.6 687.9l2.6-5.4M714.1 695.5l1.9-2.4 2.8 2.3M719.9 693.0l1.7 2.7M716.1 694.0l1.9-1.8M715.6 695.3l1.4 2 -1.9 1.4M718.8 695.3l2.3 2.4 -2.3 2.1M716.9 696.0l1.5-1.4M713.0 696.6l2 4 -2.7 1.4M712.5 694.3l3-3.1M719.7 695.0l1.6-1.2 -2-2.8M711.0 694.6l3.1 3.9M721.3 693.6l3.2-2.5M715.4 696.2l4.4-2.4M713.8 696.0l2.7-1.1 1.3 3.3M715.0 695.6l1.1-2.2 -2.9-1.5M717.3 694.6l4.2-4 -2.7-2.8M713.2 698.8l1.3-2.8M719.9 692.3l5.1 3.1M713.6 697.2l4.1 3.2 -1.4 1.8M716.6 696.9l4.7-1.2 0.8 3M713.7 695.7l3.7-2.6M711.2 695.4l1.5-2.4 -3.3-2M721.4 694.6l3-1.3 1 2.4M720.2 694.6l2.5 1M720.5 694.8l3.5-4.9 3 2.2M716.3 694.7l1.8-4.2M717.0 696.1l3.9 4.3M718.7 692.7l2.3-4.6M619.1 683.3l1.7-1.1 1.9 2.8M620.9 681.4l1.8-2.9 -3.1-1.9M618.1 684.0l0.8 2 -2.3 0.9M621.9 688.4l1.3-3.1 -2.6-1.1M619.4 683.1l2.7-0.7 -0.9-3.5M619.7 680.3l2.7-1.9M618.8 678.1l3 3.5 1.5-1.2M617.9 684.7l1.9-1.5 2 2.5M622.3 685.0l5.1-2.3M621.9 683.7l3.7-2.6M618.8 680.1l5 2.9 -1.9 3.2M620.5 687.6l2.4-0.6 -0.4-1.6M618.0 679.2l1.9 4.2 2.1-1M620.8 686.1l2.3 2M618.9 677.4l2.7 1.4 1.5-2.7M620.4 681.9l4.8 3M620.9 678.7l2.3 2.1 -2 2.2M622.6 682.5l1.8-1.3 -2.2-2.9M619.7 678.0l2.9 3.3 -1.9 1.7M617.2 681.8l3.4 3.9M618.3 678.1l2.4-3.1M619.9 684.8l0.9 3.6 3.5-0.9M621.5 679.4l2.6 1.4M619.8 686.7l1.4 4.9 -3.5 1M619.7 683.8l2 4.8M618.3 679.0l2.9 3.7 -2 1.6M676.1 644.8l3.6 3.8 2.3-2.2M677.5 644.8l3.6 4.5 2.6-2.1M675.3 641.3l3.8 3.1 -1.7 2.1M671.4 645.9l2.7-2.6 2.6 2.7M672.8 641.9l4.8-3.5 -1.6-2.2M672.7 642.5l3.2 3.3 -2.8 2.7M675.3 647.7l2.2 3.1 -3.2 2.3M669.9 646.2l4.7-1.3M674.5 646.2l1.9 2.5 2.7-2.1M675.9 642.9l2.6 4.1M679.1 643.7l3.5-1.9 0.9 1.7M671.6 646.8l2.6-2.5M672.4 643.7l2.7-4 2.4 1.6M674.7 647.5l4.1-2.5 -1.8-3.1M674.7 647.6l1.4 4M675.4 643.2l3.4-1.4 -1.2-2.9M675.5 644.5l2.2-1.7 -1.7-2.1M678.4 646.5l1.3 3.3M674.1 641.1l2.1 3 2-1.4M680.0 642.0l0.6 2.3M670.5 644.3l1.6 3.7 2.3-1.1M675.7 643.0l3 3.4 2.2-1.8M671.6 645.8l1.7-1.5 2.7 2.9M671.7 646.2l1.9 1.7 1.5-1.7M679.0 643.9l2.1 3.2M672.4 643.1l2.9 1.5M671.8 644.1l2.7 3.5 -2.4 1.8M722.1 756.8l1.8 1.9M724.1 761.6l2.4-3.7M724.1 759.9l2.9-2.2 -2-2.6M722.8 757.2l2.8 1.5 1.3-2.4M721.0 760.6l1.4 1.9 -1.4 1.1M725.1 761.2l3.9-3.3 -1.1-1.2M722.8 758.6l2.6 1.2M722.7 762.4l1.6 2.1 2.5-1.9M721.8 761.6l1.6 1.2 1.8-2.3M721.7 756.0l3.4-3.7M722.7 758.8l2.3 2.2M722.0 761.9l2.5-2.9M725.7 759.1l4.7 3.7M723.9 758.3l1.1 2.2 -3.5 1.8M721.6 761.2l3.5-1.3M725.0 760.8l2.5-2.7 1.7 1.5M722.6 761.7l1.5 5.7 1.7-0.5M723.7 758.4l3.5-1.8M723.8 760.4l5.1-2.6 1 1.9M725.1 758.2l1.4 5M725.0 758.3l4.4-2.7M724.6 761.2l4.7-3.4 1.3 1.8M721.3 756.4l3.6 1.4M721.1 757.6l1.5-3.5 -2.6-1.1M724.2 758.0l5.2 2.2 -1.3 2.9M722.6 759.0l1.8 1.7 1.8-2M758.7 709.6l1.8 2.4 3-2.3M758.9 711.6l4.1-3.4M756.8 711.5l1.9 2.7M758.1 711.4l1.7 2.2M757.7 713.1l2.5 1.3M756.5 716.6l4.4 2.8 -1.9 3M758.5 710.2l0.9 1.9M759.8 709.9l2.7-3.2M755.0 712.9l5-1.4 1 3.8M756.2 713.0l3-1.1M754.8 712.1l5.6-1.7M756.6 713.3l3.4-3.5 -1.3-1.1M755.9 711.6l3.9 4 2.1-2M760.2 710.4l2.7-1.9 1.9 2.6M755.4 711.4l2.1 3.2M759.0 711.6l3.5-2.8 1.8 2.3M759.4 715.0l1.9 2.4 -1.6 1.3M757.3 712.7l5.1-2.3 1.1 2.5M758.2 713.5l4.1-2.3 -0.8-1.4M758.5 711.9l5 2.5M667.5 636.2l1.4 3.6M664.4 639.3l1-1.9 2.8 1.5M665.0 638.7l2 5.5M661.6 637.0l3.2-2.7M662.0 637.9l4.2 3.7 2.1-2.4M663.2 638.9l3.6 4.4 -2.3 1.9M665.7 637.4l3.3 2.6 -1.9 2.4M660.9 633.8l2-3.7M666.8 636.8l1.4 1.9 -1.6 1.1M661.6 633.1l2-2.8 -3.1-2.3M663.4 639.0l2.5 2.9M659.0 634.8l1.6-4.3 -3.7-1.4M661.9 638.0l1.4-2.9 -2.7-1.3M667.1 638.1l1.1 2.4M666.4 638.8l2.2-2.5 2.8 2.4M662.4 636.9l1.5 3.4 2.4-1M668.7 637.9l1.9 1.8 1.8-1.8M666.9 633.8l2.8-3 -2.1-2M664.9 634.6l1.6-2.7M667.3 638.8l2.8 2.8 2.8-2.7M660.8 636.8l1.9 5.1M754.3 693.0l4.5 3.8M755.1 696.3l2-4 -3.3-1.7M755.2 695.1l3.8 4.2M758.1 691.3l2.6-1.8M758.5 693.0l1.2 3.6 -1.7 0.6M755.4 696.7l2.6-2.2M755.5 695.6l5.3 2.6M756.4 696.7l5.4 2.6 1.7-3.5M753.8 695.6l0.6 2.4M758.5 695.2l2.3-1.4M755.6 696.7l1.6 2.7M754.4 692.9l2.8-2.9M757.8 694.1l4.7-3.1M756.8 694.7l2.4-1.6M756.1 691.9l2.1-1.3M756.7 695.3l1.4-1.5 -1.6-1.5M757.2 691.7l2.1-3.2M755.7 697.4l3.3 3.5M757.2 693.6l1.7 1.5 -1 1.2M758.9 693.3l3 1.1M755.4 694.4l3-3.1 1.2 1.2M755.4 696.0l2.1-2.2 2 1.9M755.3 697.2l2-2.2M757.3 696.7l4.3 2.4 -1.2 2.3M734.9 684.0l3.3-1.5M736.8 689.3l5-2.2 1 2.2M736.7 687.7l2.8-3 -2.7-2.6M734.8 689.2l0.7 2.2M741.2 686.4l2.8 2.7M739.0 686.3l1.7-1.1M735.6 687.7l3-3.2M735.5 684.7l2.2-2.1M738.7 685.1l3.6-4.1M736.6 686.4l2.5 4.1M733.0 685.9l4.8-1.2M736.3 687.0l3.1 3.9 -2.3 1.9M737.7 686.8l3 3.8 -1.6 1.4M742.1 685.2l1.7 2.9 -2.6 1.5M736.2 689.5l4-2.7M740.6 684.2l1.3-1.5 2 1.7M734.9 687.6l2.9 4.6M740.6 683.6l3.7 4.6 2.1-1.7M740.5 686.7l1.5-3.4M736.1 685.5l3.7-3.3 1.1 1.1M740.2 685.8l4-2.7M734.9 689.2l4.6 3.5M735.2 687.9l4 2 -1 2M735.5 688.2l2.4-3.3M743.2 684.7l1.2 3.9 -2.1 0.7M741.9 684.5l1.8-1.9 1.9 1.9M738.4 685.3l1.7 1.1M744.4 645.9l1.9 2.1 -1.5 1.4M740.4 646.9l2-1.9 -1.3-1.4M742.1 646.8l2.5-5M742.9 649.1l2.2 1.9M741.5 645.3l2.3-3.7M738.7 646.5l3.4-2.1 1.1 1.8M742.4 643.9l3.4 4.1M744.5 648.2l3 5M742.4 645.9l1.8-1.4M739.2 643.1l2.6-4.6M739.2 645.8l3.3-3.3M741.8 648.1l3-1.1M739.3 644.3l2.6-2.3M743.4 645.8l1.9-2M741.3 646.7l2.3 3.6 2.2-1.4M741.4 642.4l1.9-1.9 -1.9-2M739.1 647.2l1.6 1.3M741.9 644.7l3.6 4.7M741.2 645.6l3.8 2.4M755.8 709.2l2-1.7 2.4 2.9M759.2 703.7l1.5 1.7 2-1.8M754.5 711.1l4.2-4 1.1 1.3M754.7 709.6l2.4-3.6 -1.9-1.3M754.4 709.2l3-3.4M759.3 708.0l1.1 1.8M755.1 713.8l2.9 3.9 2-1.6M754.6 714.9l3.2-2.6 -2-2.4M754.0 714.6l3.2-3.3 2.6 2.6M756.3 709.0l3-1.1M758.6 708.6l3.6-3.4M757.7 706.2l1.9-4.3M757.3 709.4l4.2 4.3 1.3-1.3M756.8 705.8l2.2 2M752.5 713.1l2 1.1M754.0 713.3l4.9-2.8 -1.5-2.5M754.8 707.6l0.8 1.9M753.6 714.2l2.1 2.1M760.0 704.0l3 2.5M753.3 714.1l3.4-3.8 -1.8-1.6M759.4 704.3l5.1-2.3 1.3 2.9M760.9 705.1l2.3-2.9 2.6 2M758.0 708.4l1.1 3.3 -3.4 1.1M755.9 712.4l1.7 1.8 1.4-1.2M757.8 705.4l3.1-1.4M754.7 712.8l2.9-1.7M604.3 654.1l1.4-2.1 1.9 1.2M610.8 649.1l3.4 3.3M604.1 653.5l1.8 3M604.5 649.6l2.7-1.1M602.9 649.8l2.8-3.8M606.0 651.1l3.9 3 2.1-2.8M600.8 652.7l1.2-2.3M603.7 650.6l2.3 2.5 -1.5 1.4M604.3 650.1l3.3-3.7 -2.6-2.3M605.9 650.6l3.6-2.2M612.8 648.6l3.6-2M604.9 650.7l4.7 2.4 0.9-1.9M611.0 647.7l2.3 1M605.4 653.4l4.9-3.1 -1.9-3M602.9 651.8l2-1.3M606.0 648.2l3.1 4.2M603.4 649.2l3.1 3.5M603.0 651.4l0.7 2.3M608.5 651.1l5.1 3.1M607.7 648.4l1.3 4.5M610.9 646.4l2.6 4.5 2.4-1.3M610.5 647.2l3.8-3.9M606.3 653.7l2.4-1.9M606.7 648.4l2 1.9M605.0 652.4l4.3-4.1M710.7 747.7l3.6-0.9 -0.8-3.3M710.9 750.7l2.3-4 3.1 1.7M712.6 749.0l2.1-1M712.5 753.6l4 1.7 0.7-1.7M713.9 752.7l2.9-3.2M716.6 752.0l2-0.9M715.3 747.8l1 3.5 -1.4 0.5M715.4 751.3l4 1.9 -1.3 2.8M708.4 752.7l2.8 1.8 1.2-1.8M712.3 748.3l4.8-2.4 -0.8-1.6M717.8 749.7l0.9 3.3M713.7 749.5l1.4 2.2 -2 1.2M715.9 748.1l0.8-1.9 -3-1.2M713.1 746.9l4.1-4 -2.3-2.5M709.5 751.2l4 2.2M715.4 748.4l4.2 3.5M708.3 752.1l2-1.3 1.2 1.7M717.2 750.3l2.5-0.8M710.8 752.4l2.8 2.1M714.4 747.3l1.8 1.7M716.6 749.3l2.1-3.3 -3.2-2M713.0 753.3l3.3 2.1M712.4 748.3l2.8 4.6M742.3 677.8l2.4 3.4 -2.1 1.5M744.8 674.7l4.7 2.4M744.3 678.6l1.4 1.7M744.7 677.0l1.4 5.3M744.7 677.8l3.2 3.4M740.4 682.7l3.5-2.1 2 3.3M743.3 674.4l2.8-2.8 2.5 2.5M743.7 680.1l3.7-1 -0.5-2M738.6 683.0l2.6-1M739.8 679.6l4.7-1.5 0.6 2.1M739.4 679.7l4.1-4.1M743.3 678.9l1.7-3.1M740.0 679.2l2.6-5 -1.3-0.7M743.9 679.0l3.4 3.5 1.4-1.4M743.8 676.1l3.4-3.6 2.8 2.6M743.0 677.2l3.1-1.1M740.9 680.0l1.8 2.2M741.4 680.8l1.9 3.1 -2.5 1.5M742.4 682.1l1.6-2.2 3.2 2.3M743.2 680.6l2.7-2.4M743.0 679.1l4.3-3.6M742.7 625.5l1.8-1 1.5 2.6M738.4 627.3l4.3 4 -2.7 2.9M744.6 624.4l3.7 4.2 2.1-1.8M744.0 627.5l3 4.2 -1.9 1.4M738.7 631.4l4.4-2.9M743.7 626.1l1.9-2.8 2.5 1.6M742.9 626.6l1.9-0.6 0.8 2.4M740.0 633.6l1.3-3.4M738.5 625.8l2.2 3.2 -1.8 1.3M736.6 632.8l3.6-3.2 2.1 2.4M743.0 627.3l1 1.9M735.7 625.7l2.3 4.8 -2.4 1.1M743.6 628.9l3.6-2.1M734.8 630.2l2.6-4.3 -1.4-0.8M734.8 630.6l1.4 4.2M735.2 629.7l2 4.8M740.8 630.6l1.9 2.8M737.5 628.5l2.6-1.8M742.3 626.2l2.9 1.7 -1.1 2M742.7 622.1l1 3M737.4 631.8l4.3-1.1M735.1 678.7l2.4-3.7M738.6 672.6l4.2-3.4M737.1 681.7l1.7-1.7M737.1 673.9l3.3-2.7 1.1 1.3M740.1 676.2l1.2-2.1 1.9 1M731.2 675.2l3.1-3.6M739.9 678.2l2.1 1.7M738.7 680.0l2.5-0.7 -1-3.7M733.2 675.9l2.3 2.8 -1.9 1.6M740.0 677.5l2.5 2M734.1 680.9l3-2.5M738.3 675.2l1.8 5.4 1.6-0.5M732.8 678.5l2.9-2.7M739.6 675.9l1.3-2.5 2.8 1.5M734.8 672.6l2-1.3 1.3 2M740.5 679.9l2-4.1M732.8 679.7l2.2 1.4 0.9-1.2M736.9 678.6l1.9-1.3M738.9 674.2l1.8-2.8M731.3 675.7l1.4 2.8M736.6 679.4l5.5-1.9M740.6 680.2l2.8-2.8 1.1 1M739.4 674.5l3.5-3.5M622.1 694.4l3.8-1.3M621.3 694.6l3.4-2.4M622.9 687.7l1.7 3.8 3-1.4M623.7 692.8l2-2.5M618.7 692.1l1.9-2.1M618.7 689.4l1.4 2.2 -1.6 1M618.7 691.7l2.7 2.6 2-2M618.3 692.9l2.2-2.2 2.1 2.1M622.7 689.1l1.5 2.1M622.9 692.8l1.8-4.4 -2.8-1.1M619.0 692.7l2.3-4.4 2.3 1.2M618.4 695.4l2.3 1.4 1.7-2.8M624.8 691.2l2.4 2.3M623.9 692.2l1.3-1.8M620.5 692.3l1.5 1.8M622.4 688.5l3.1-2.9M619.1 687.9l2.4 0.9M623.5 688.8l1.1-2.2 -2.1-1.2M622.8 691.8l3.9-3.6 -1.5-1.6M619.8 692.4l3.8 3.9 2-1.9M617.2 694.8l2.4-5.4M622.9 690.8l1.7 4.1M619.8 689.0l2.6 5 -2.7 1.4M621.7 691.5l2.2-1.2 1.4 2.4M617.9 690.4l2 0.9M723.1 748.1l2.6-1.6 1.5 2.5M720.1 751.1l4.2-3.7M725.5 755.6l4.2 3.1M724.0 746.9l4 4.3M724.5 754.7l3-3.4M721.9 746.0l1.8-0.9 1.7 3.6M721.7 752.0l3.6-2.8 1 1.4M723.5 747.6l0.8-2.1M722.6 749.2l3.4 2.5M725.4 748.8l2.3 1M724.3 754.4l3.9-2.2M721.6 747.1l1.4 3.7 -3.3 1.2M724.4 747.5l2.4 2.7M725.5 750.4l2 1.9 2.2-2.3M726.9 753.1l1.3-3.2 1.5 0.6M725.1 753.3l1.1 1.8 2.3-1.4M721.3 745.8l2.9 1.1M724.0 752.7l2.1-3.8 -2-1.1M725.4 747.3l4-1.6 0.7 1.8M724.2 750.2l3.4-2.2 -1.5-2.2M720.6 746.9l5.5 2 1-2.7M724.3 751.5l4.7 2.4 1.1-2.2M724.2 750.2l1.1 4.5 2.4-0.5M726.1 750.0l3.8-3.2 2.1 2.6M725.0 755.6l1.5 4.1M667.4 634.8l3.2 3.2M668.8 633.4l4.6-3.5M669.4 636.4l3.1 2.8M668.9 632.7l3 3.2M668.5 633.0l3.2-4.4M671.1 634.3l1.5 1.6M670.8 636.8l1.6-1.5M670.6 632.6l1.8-1.1M670.1 636.1l4.2-1.2 -0.7-2.4M671.5 636.3l2.5-0.9M667.4 635.1l2 2.7 -2.2 1.6M667.7 636.2l3-3.1 -2-1.9M666.2 633.1l1.3 1.7M668.4 633.1l1.9 2.4M669.2 632.7l3.6 2.2 1.3-2.2M667.5 633.5l3.9-3.9M671.2 636.7l3.2-3M671.8 635.2l1 4.1 -2.7 0.7M667.9 631.9l4.8-1.6 -0.9-2.9M672.2 636.6l2.4 3.2 1.9-1.4M667.2 632.1l2.9-2.3 2.4 3.1M667.3 633.2l3.9 3.5 -2.6 2.8M669.3 637.0l3.4 3.7 -2.1 1.9M666.9 633.6l3.8-1.2 0.8 2.7M669.1 634.6l0.8 3.4M726.2 633.3l3.9 4.3M731.4 640.1l2.1 4.7M731.9 639.3l1.4 3.3 -1.5 0.6M727.9 635.7l3.3 2M725.2 639.4l2.2 4 -1.3 0.7M727.9 639.7l4 4.2M729.9 643.3l3.5-3.2M726.6 637.0l1.2 3.4M730.2 636.9l3.3-1.7M732.3 639.3l3-0.9M727.0 642.5l2.3 1.3 1.1-2M726.7 641.0l2.1-3.7 1.9 1.2M732.0 635.3l1.8-4.7 -2.7-1.1M733.2 638.4l2.1-0.8M731.5 632.2l3.3-1.8M729.8 640.9l1.2 4.5 -3 0.8M726.6 633.3l4.3-1M724.4 637.5l3 4.5 -2.9 2M730.2 641.3l3.9-4.2 -2.9-2.6M733.9 636.0l5.4 2.5 -1.4 3M727.1 639.0l1.1 4.2M726.0 635.3l3.9-1.6 -0.6-1.7M732.7 634.7l3.8-3 -1.3-1.6M706.9 680.3l1.4-3.5 2.7 1.1M704.4 676.1l2.4 2.7M704.5 676.6l1.8-1.5 1.4 1.7M706.4 681.6l2.8 1.7 -1.8 3.2M704.2 677.8l2.9 2.3 2.1-2.5M700.9 683.1l2.7 1.2M701.3 682.2l1.8 1.9 -2.1 2M702.7 679.5l3.7-3.4 1.3 1.4M703.7 680.1l2.8-1.6M705.2 679.4l5.2-2.8M703.9 677.1l1.2-2.7 -2.6-1.2M699.7 682.4l4.2-3.3 1.2 1.5M703.9 681.2l4.4-3.5M702.6 683.6l3.7 3.6 -1.9 2M709.1 679.2l1.5-2 -1.9-1.5M700.1 681.4l2.6 2.6M703.4 683.8l1.9-2.4M705.9 683.1l1.7-1.4M700.5 682.2l1.6 2.2M706.6 678.7l2.4-3.5 2.5 1.7M704.0 683.3l2.8-1.7 1.5 2.5M704.8 677.3l3.3 4.7 -2.6 1.8M756.2 675.0l3 3.9 -2 1.5M755.3 673.6l2.6-5.4M753.8 673.8l3.2-2M754.2 674.7l2.2 5.6M751.6 673.7l1.1 4.1 -1.7 0.4M751.1 674.6l3.3-1.3M756.9 679.3l2 1.3 -1.1 1.7M753.7 676.1l2.4-2.4M756.1 676.1l2.7 3.9M759.8 676.6l2.4 3.1M757.8 679.7l2.8-4.1 -1.3-0.9M756.1 675.5l4.3 2.2 1.6-3.1M754.3 674.5l2.2 2.7 -2.6 2M752.2 677.3l2.7 1.3M753.6 676.9l4.5-1.1M756.0 677.1l3.1 4.2M754.0 678.3l3.8 1.5 1.3-3.2M756.4 678.7l2.6-2.3 2.4 2.7M758.4 676.8l2-0.7 1 3M753.2 676.3l2.9-2.8 -2-2M643.3 673.4l3.9-2.7 2.1 3.1M644.3 672.2l3.6 3.4 -2.4 2.4M648.1 666.7l2.4 4.5M641.7 669.8l4.3-3.4M646.8 668.8l1.2-3.2 3 1.2M646.3 670.0l2.8-3.8 3.1 2.2M648.6 673.7l3.4 4M641.4 671.6l2-0.7 0.7 2.1M649.5 670.3l0.7 2.4 2.4-0.7M647.0 671.5l2.4-1.9M646.1 673.3l1.5 4.2M642.8 668.1l3.1-4.7 -1.7-1M641.6 669.9l3.6-2.8 1.2 1.6M645.3 669.3l3.8-1.6 0.9 2M648.7 672.5l1.9 2.2 3-2.5M647.5 671.0l2.6-3.2 -2.2-1.7M645.1 674.5l2.2-5.2M645.3 672.2l4.3-3.9 -1.1-1.2M643.2 668.0l4.4 2.6M645.2 674.7l2.2-1.6M649.6 670.8l3.6 3.9M643.9 669.0l1.5 1.6 -1.7 1.6M649.7 671.6l1.8-4.4M647.3 674.4l3.2-0.7 -0.7-3M644.9 672.3l2.1-0.7 -0.7-2.3M693.4 755.7l3.3 1.3M694.8 752.4l1.3 4.2 2.9-0.8M694.3 755.7l3.8-2.5M689.7 753.8l5.1-1.3M691.9 751.4l3.4-1.1M692.4 754.5l2 5.2M693.2 756.3l2.7 2.6M694.5 756.2l4-2.4 -1.8-3.1M690.0 751.3l3 2.1 -1.2 1.7M693.4 749.7l2 2 1.5-1.5M694.4 750.7l1.9 5.4M693.4 758.3l5 2.4 0.7-1.5M694.7 751.0l1 2.6M690.6 752.3l1.2-2.7 -2-0.8M689.5 750.3l2.7 2M690.1 753.1l1.6-1.6 -1.7-1.7M693.2 752.5l1.1 3.5 -2.3 0.8M693.4 754.2l3.3 3M694.7 755.5l1.5-1.6 -1.4-1.3M690.3 753.3l2.6-4.9M691.8 751.6l4.1-1.8 -1.4-3.1M692.3 755.6l2.4-2.2M694.0 753.7l2.8-2.5M691.4 757.8l2.3-4.5M691.5 751.5l2.3-3.1 2.5 1.9M625.1 711.7l1.5-2.3M629.5 712.9l4-3.3 -1.7-2.1M630.4 713.7l2.7-2.2M631.5 709.3l4.6-3.5 -2.3-2.9M623.9 712.9l1.7-2.6 -2.1-1.3M627.2 707.2l4.7 3.6 -1.1 1.3M627.1 713.3l2.6-5.4M628.1 712.9l1.9 1.7 1.9-2M626.3 713.4l1.7 1.5 -1.5 1.6M631.0 711.6l1-1.9M627.0 712.7l3.1-0.9M626.7 712.5l1.1 1.8M623.5 713.0l2.8-1.3M627.8 711.5l1.9 1M627.4 715.0l3.7-2.6 -1.9-2.6M627.9 709.1l2.6 1.4 -1.2 2.4M626.1 708.4l1-2.7 -2.9-1.1M629.9 712.7l2.8-1.6 -1-1.7M625.2 715.2l3.3 2.8 -2.5 3M625.4 713.4l2.7-3.6 -2.6-2M624.3 713.9l1.5 3.2M631.6 711.8l1.6-1.3 -1-1.3M627.7 707.5l1.9 3.6M624.4 710.0l4 3.4M782.9 667.7l4.3 3.5 -1.4 1.7M780.5 672.1l2.7-3.1 1.5 1.3M780.9 675.4l1.8 4.4 2.2-0.8M786.4 673.4l3.2 5 1.8-1.2M781.0 667.9l2.7 5.1M782.3 667.0l2 2.8M781.6 670.2l1.8 4.4M782.8 672.0l3.8 4.5M783.1 667.5l1.3 3.8 3.6-1.1M781.3 674.4l3.3-2.2 1.5 2.2M782.5 671.4l1.5 5.1M784.7 672.8l1.8 1.6 -1.6 1.9M780.0 673.1l1.8-3.6 2 1M780.1 673.2l3.8-1.9M784.8 672.1l4.1-4.1 -2.2-2.3M784.4 669.6l3.9-1.9 -1-2.1M786.2 672.6l4.7 2M783.4 668.8l1.1 2.9 3-1.2M784.7 669.1l2.1-5.1M779.4 674.4l4.3 2.8M780.2 675.1l2.1-2.1 1.1 1M783.3 675.6l2.2-1.9M781.8 673.6l3.6-3.9 2.7 2.5M781.4 667.7l2.9-2.6 1.2 1.3M781.7 672.0l1.7 3.7M623.0 700.1l1.4-2.9 -1.8-0.9M627.0 701.9l1.9 1.7M624.3 704.2l4.4-2 -0.8-1.9M625.3 702.5l2.5 2.4M624.2 701.7l3.9-3.1M624.1 703.5l5.6-1.7 0.5 1.5M630.4 701.5l4.1 1.6 0.7-1.9M625.5 704.0l1.8-1.2M630.4 702.6l5.3-2.1 -1-2.6M629.0 701.3l1.9-0.7M628.5 703.0l4.2-4.2M629.4 704.5l1.6 5M622.0 704.5l4-1.3M623.8 706.0l3.4 3.8M629.7 702.1l2.3-3.2 2.8 2M626.9 703.8l3.5 2.2 1.1-1.6M627.5 704.2l2.4 3.6 -2 1.4M621.4 703.5l3.1-1 1.1 3.6M627.8 706.6l3.2 3.3 1.7-1.6M627.9 700.5l3 3 -2 2.1M631.8 703.2l3.6 3.8 -1.8 1.6M623.8 700.8l1.5 3M629.6 707.1l2.4 1.9 -1.5 1.9M630.5 703.8l2-4.7M621.3 703.0l2.3 1.9 -1.8 2.3M632.1 704.1l2.3-2.3M669.3 640.2l0.8 2.8 2.2-0.6M666.6 640.1l2-1.3M663.6 640.1l3.1 2.1 -1.8 2.6M671.2 638.4l2.4-5.3 2.3 1M668.1 636.6l1.8 1.8M665.5 638.3l1.7 5 -2.2 0.8M666.6 642.2l2.9 2 1.8-2.5M670.7 642.9l2.6-0.9 0.7 2.2M671.7 639.4l2.6 2.1M665.3 641.8l2.1-5.6M667.4 640.2l2.3 2.8 -1.8 1.5M668.3 640.6l0.9-2.3 2.5 1M666.7 641.0l2.6-2.2M664.8 635.6l2.8 2.9M670.8 641.6l2.6 3.2M669.8 641.2l1.9 2.4 1.4-1.1M668.6 641.5l3 2 -1.7 2.4M666.6 637.3l2 2.5 2.9-2.4M666.9 638.7l3 3.9M666.5 640.3l3.5-3.2 2 2.2M671.2 641.7l4.4-1 0.5 2.2M716.2 743.6l3.3-3.2M717.0 743.5l2.9-3.4 -3-2.5M718.4 740.5l2.7 2.9 -1.4 1.3M718.2 743.5l3.3 3.9M720.9 743.5l4.1-3.9 1.8 1.8M716.8 741.3l5.6-2.1M717.4 740.4l2.9-2.9 -1.3-1.2M715.0 744.2l3.7 4.4M718.7 741.5l2.3-2.3 1.7 1.7M724.4 739.1l3.3 1.7 1.2-2.4M717.3 740.9l4.1 1.9 0.9-2.1M721.7 742.9l1.7 3.7 3.6-1.6M717.4 741.1l1.2 3.3M718.1 739.6l2.2 1.5M724.8 740.4l3.6-1.1 -0.6-1.8M715.4 743.0l2.9 4.3 2.2-1.4M720.5 738.4l3.9 3.2M717.5 743.2l1.6-3.6 -2.2-0.9M719.0 742.2l3.6 2.1 -1.2 2M714.5 742.5l2.2-0.6 0.8 2.8M722.3 742.1l1.5 2.3M721.0 741.4l0.7 2.2M722.0 743.0l2.7 1.5 -1.7 3.2M718.9 741.3l2 2.8M717.6 739.8l1.4 2.7M627.0 665.7l2.3-3.2 1.3 0.9M629.4 663.9l2-5.3 2.2 0.9M633.2 666.4l3.4-3.3 -1.5-1.5M626.6 667.2l2.2 4.1 -3.5 1.8M632.7 670.9l2.3-1.8M629.3 668.2l1.9 1.8 -2.1 2.2M625.3 669.0l3.2 2.4M624.1 667.3l4.1-1.8M624.7 667.9l1.5 2M629.9 667.1l2.2-1.6 -2.1-3M628.5 662.0l3.4 4.9 2-1.5M632.6 665.4l4.2-2.4 -0.9-1.6M631.8 667.8l1.9 4.2 1.7-0.8M627.2 670.2l4.3-3.8M627.7 664.6l2.1-3.9 2.6 1.4M631.7 668.5l1.3 4.2M632.8 667.3l5.3 2.5M627.5 666.1l3.8 1.5 -0.8 1.9M624.1 665.1l2.2 1.1M631.0 665.1l1.6 2.2M628.3 666.0l3.3-1M633.9 668.8l1.2 4.7 3.2-0.8M626.2 663.3l3.2-1.6 -0.8-1.5M628.5 663.8l3.5 1.3M705.9 739.5l2 2.6 2.9-2.1M705.7 744.8l2.8-2.2M701.1 743.0l4.4-2.9M708.5 740.9l3.5 4.5M709.3 741.7l1.4-2.8 3.4 1.7M704.7 743.3l2.5-3.7 2.5 1.7M707.1 742.2l2.3-2M708.0 743.2l3 3.2 -1.6 1.6M702.9 744.2l1.7 2.7M705.0 744.0l1.8-2M701.1 743.4l4.9-2.4 -1.2-2.4M705.3 740.5l3.4-3 2.2 2.5M707.2 743.6l1.9 1.9M705.4 740.8l2.8-1.6 0.8 1.4M705.0 744.6l1.9-0.6M700.6 743.0l0.7-1.9 -1.7-0.6M707.6 742.6l2.2-4.2M705.5 744.3l1.8-1.4M707.1 742.1l3.9-4 1.1 1.2M709.4 742.5l2.3 1.8 -2.1 2.6M709.5 742.0l3.3 3.9 -1.5 1.3M708.9 740.6l2.3-3.4M704.5 740.4l3.4-3.5 1.3 1.3M703.7 742.7l3.3 3.3 1.8-1.8M701.8 740.9l4.4 2.7M682.8 754.8l2 5.5M681.1 757.1l3.5-2.8 1.7 2.1M681.5 756.7l3.8 2 -1.9 3.5M676.8 756.2l2.1 2.8M680.8 756.0l4.4 2M679.9 757.9l2.1-2.4M673.9 759.3l2.5-0.6M680.7 755.9l2.9-1.8M672.8 753.8l4.7-1.7 1.3 3.7M678.5 752.4l2.5-0.7 -1-3.3M681.7 755.1l2.4-1.4 1.9 3.2M674.5 758.5l2.1-1.9M678.8 759.2l3 5.1M672.0 756.4l2.2 3.1M676.3 757.1l2 2.6 -2.3 1.8M679.5 759.8l1.8-4M679.0 752.5l2.8-3.2M676.0 753.0l4.4 3.4M679.4 757.6l2.5 4.3 -2 1.1M681.3 755.1l2.9-0.7 -0.8-3.6M675.8 758.9l2-2 1.2 1.1M674.7 759.3l1.9-4M681.3 753.0l4.1-1.8 -1.1-2.5M680.2 756.6l1.9 3.4M677.5 752.5l2.5 2.4M682.3 757.0l3.9 1.6M677.2 756.1l5.4-2M675.6 756.5l1.4 5M660.1 654.4l7.3 1.7M644.4 679.5l-5.4-4.5M733.3 688.4l3.9-5M663.9 686.6l0.9 7.5M734.8 623.7l-1-6M732.7 611.4l6.1 4M734.4 641.9l-3.6 5.1M706.6 788.6l-5.6 0.5M700.5 787.7l-6 2.3M722.4 653.1l1.3-5.3M676.0 625.4l-3.7-1M699.6 600.0l-4.7-1.5M726.2 654.9l1.7-2.9M712.2 757.7l7.5-0.3M709.9 623.3l-4.6 6.2M718.1 736.2l4.9-0.5M773.9 658.7l3 2.3M674.0 645.8l6.1 1.8M698.8 635.9l0.5-3M678.3 678.3l-5.5-2.3M709.1 786.7l3.4-6.1M703.5 619.8l0.5 7.8M616.0 632.1l4.6 0.4M702.2 767.3l-3.4-1.4M725.3 677.7l4.7-5.5M632.5 729.6l-1.3-6M712.5 762.2l2.8-7.2M750.8 672.6l3.1-2.8M633.2 650.7l-1.9-7.1M629.9 695.3l-1.3-2.8M742.9 615.9l-3.8-0.9M769.3 668.0l3.2 1.8M725.0 734.6l3.5 4.9M637.6 700.0l-2.3-3.8M671.3 620.6l0.4 7.7M699.5 605.5l-1.9 2.8M691.5 718.5l-2.9 3.3M639.5 751.5l-1.9 7.2M699.8 710.8l-4.5 0.2M704.0 655.8l-5.7-0.2M698.6 669.0l4.2 4.2M691.3 763.9l3 6.1M665.7 682.8l1.3 5.3M703.9 711.0l-3.9-2.8M662.7 739.1l-5.5-4M630.0 655.0l4.4 6.4M757.1 674.0l-3.8-6.5M628.2 683.7l4.2-4.1M698.9 726.6l-1.2 7.7M678.4 671.7l6.3 3.8M656.5 746.7l-4.1 3.2M768.5 660.7l-6 3.4M707.7 687.6l-1.6 5.7M645.4 697.2l1.7 4.3M672.7 753.3l-0.6-3.5M712.2 639.5l1.6 7.6M740.5 692.9l5.5 3.9M654.5 625.7l-5.9 0.4M626.1 704.4l2.3 3.3M606.1 640.6l-1.7-3.3M741.0 668.7l-3.2 4.6M679.5 754.4l4.6 5.9M632.4 669.3l0.9-6.7M763.2 647.4l0.7 4.5M750.5 649.2l7.2-0.6M681.3 740.0l-4.1-1.9M733.1 615.9l6.8 2M762.6 631.3l-3.9-3.7M644.3 702.0l-2.9 4.5M718.5 690.9l3.1 6.8M747.5 614.5l0.6 3.2M724.6 737.1l6.6-3M712.9 762.8l-2 7.4M644.4 675.8l0.5-3.1M702.7 718.1l-1.4 7.1M704.3 690.0l-1.7-3.9M703.2 786.2l-0.2 4.3M666.4 713.5l-4.3-1.5M705.4 623.3l-7 1.9M700.5 765.3l5.5-0.4M718.3 659.2l5.3 6M717.9 781.3l-6.7-0.3M656.0 658.0l2.6 5.3M792.7 677.7l-3.7 0.5M643.3 721.6l-3.3-7M743.4 718.8l-0.9-3M714.1 651.4l4.3 5.2M694.2 779.5l-2.4 3.5M654.5 708.6l1.1 7.5M704.7 641.7l-4.6-0.9M781.0 700.7l3.1-5.7M672.8 706.5l-7.9-0.9M635.8 632.1l3.3-0.7M691.4 700.5l-3.6 1.5M695.8 751.0l-3.9-1.2M765.0 705.1l0.6 3M771.5 706.7l1.2-4.5M712.8 630.0l5.6-0.3M647.0 728.0l-2.4-2.8M678.0 605.5l2.3 6.2M611.9 697.6l-3.6-5.3M699.0 769.2l-4.9-1.1M626.1 625.5l-5.7 3.6M683.8 777.6l-5.1 2.1M699.1 661.5l-3.5-0.9M711.3 661.0l-4.2-6M677.3 608.5l2.3 7.5M723.6 697.7l5.9 1.5M692.3 676.0l3.6-5.6M619.1 635.9l5.3 2.3M739.2 615.6l-0.5-5.3M709.7 612.2l2.1 5.3M622.9 669.1l-5.4 1.5M705.6 601.2l3.7 2.9M685.9 741.0l-3.7-5.3M633.1 744.1l-4.6-1.9M695.5 723.1l-7.2-3.5M634.9 726.3l-3.3-0.1M753.2 645.3l7.8-1.1M628.3 737.4l-3.2 1.3M630.6 678.2l-3 6.3M656.5 678.2l2.1-4M652.4 614.3l-2.8 7.3M700.8 788.8l-0.7 5.1M737.5 731.7l-4.3 5M596.0 667.3l1.9 7.7M661.8 655.1l-2.8 2.5M741.5 734.7l6.9 1.8M658.6 737.2l3.3-3.6M610.9 632.8l-3.7-1.6M631.6 621.0l0.1 3.8M626.7 702.0l3.5-1.6M773.5 708.2l5.3 1.9M647.0 657.3l3.2-2.5M741.4 703.0l-3-7.2M617.7 685.5l3.9-1.7M718.5 768.2l-1.3 5.3M697.8 639.6l2.7 2.2M772.9 655.8l-1.1-7.1M785.8 682.4l-5.3-1.8M671.5 667.4l5.2-1.9M767.4 710.3l-0.3 4.5M721.4 644.4l-0.2 4.6M641.3 649.8l3.2-4.3M609.1 686.3l5.5-3.8M656.5 691.7l-1.2-4.2M711.4 684.9l-1.6 5.1M669.6 674.6l-3.2-1.1M626.1 696.3l-1.2 2.8M675.3 767.7l5.7 0M620.4 640.1l3.3 6.4M625.0 671.9l-6.3-2.6M666.4 685.8l-3.5-6.3M750.0 653.9l-3.8 2.4M699.3 607.4l-3.9 4.4M612.9 675.1l-3.4-3.2M632.5 689.9l-0.1-3.3M689.7 694.8l-6.2 4M684.7 700.2l-5.4-4.4M605.2 662.8l-0.2 3.4M732.1 662.9l1-3.9 -0.2-4 0.6-3.9 1.6-3.7 0.4-4 0.8-3.9 1.4-3.7 1.9-3.5 1.6-3.7 1.9-3.5 2-3.5M712.7 657.7l1.6-3.7 1.8-3.5 2.5-3.2 1.5-3.6 1.1-3.9 0.5-4 1.1-3.8M601.4 678.3l3.8-1.3 4-0.3 4-0.4 3.6-1.6 3.9-1 3.5-1.9 3.8-1.4 3.6-1.8 3.8-1.2 3.8-1.1 3.6-1.8 3-2.6M702.4 683.9l3.8-1.1 3.6-1.9 3.2-2.4 3.7-1.4 3.6-1.8 3.9-1 3.9-1 4-0.2 3.9 0.5 4 0.5 4-0.5 3.9 0.3 3.9-1.1M694.5 614.1l3.6 1.8 3.8 1.2 3.9 0.7 4 0.5 4 0.1 4 0.5 3.9 0.9 3.4 2.1 3.1 2.5 2.6 3 1.9 3.6M716.2 702.0l1.7 3.6 0.6 4 1.1 3.8 0.2 4 0.2 4 -0.1 4 0 4 0.9 3.9 -0.2 4 -0.1 4 -0.3 4 -0.6 3.9M643.1 648.8l4 0.2 4-0.4 3.9 0.9 3.6 1.7 3.9 0.9 4 0.4 3.8 1.1 3.9 0.9 4-0.2 3.8-1.2 3.8-1.2 4-0.6 3.9-1.1M632.7 744.1l3.9 0.9 3.9 0.7 4-0.1 3.8-1.3 3.6-1.7 3.9-1.2 3.2-2.4 3.2-2.4 3-2.6 2.2-3.3M621.7 681.5l4 0.3 4-0.4 3.8-1.2 4-0.4 4-0.3 3.8 1 3.7 1.6 3.8 1.2 3.5 1.9 2.9 2.8 2.5 3.1M746.8 656.2l4-0.2 3.8-1.4 3.3-2.2 3.5-1.9 3.1-2.5 3.6-1.8 3.3-2.3 3.2-2.4M663.2 728.3l1.3 3.8 0.5 4 0.3 3.9 -0.9 4 0.1 4 -0.4 3.9 0.1 4 0.5 4 0.3 4 -0.1 4 0.1 4 -1.3 3.8 -2 3.4M615.4 717.7l4-0.5 4-0.2 3.8-0.9 3.7-1.6 3.5-2 2.7-2.9 2.2-3.3 1.6-3.7 1.4-3.8 0.3-4M742.5 640.9l1.8-3.6 1.4-3.7 0.9-3.9 0.6-4 1.3-3.8 1.3-3.7 2.3-3.4 2.8-2.8 1.9-3.5M701.3 629.5l3.3-2.3 3.4-2.1 2.5-3.1 3.3-2.3 3.7-1.4 3.5-1.9 3.6-1.8 4-0.5 3.6-1.8 3.9-0.9 3.7-1.5 3.4-2.2M754.2 647.1l3.3 2.2 3.3 2.4 3 2.6 3 2.6 3.4 2.2 3.2 2.3 3.4 2.1 3.5 2 3.9 1 4 0.3 3.9-0.4 4 0.7 3.9 0.7 3.6 1.7M744.0 664.0l3.7 1.5 3.7 1.5 3.8 1.3 3.1 2.5 3.5 1.9 4 0.6 3.8 1.3 3.7 1.4 3.6 1.8 4 0.5 4 0.4 4 0.1 3.9-0.3M676.5 606.7l-0.1-4 0.7-3.9 0.8-4 0.5-3.9 1.3-3.8 -0-4 -1.2-3.8M596.0 653.5l2.6-3 3.2-2.4 3-2.7 3.6-1.8 3.9-0.8 3.5-1.8 3.9-1.1 3.6-1.7 3.7-1.6 3.9-0.6 3.9-1 3.7-1.4 3.8-1.2M724.5 672.5l2.3 3.3 2.5 3.1 1.8 3.6 1.6 3.6 2.7 2.9 2.7 3 2.4 3.2 2.6 3.1 2.9 2.7 3 2.7 2.1 3.3 3.1 2.7M736.2 649.8l0.1-4 0.1-4 -0.4-4 0.2-4 1-3.8 1.1-3.9 -0.3-4 -0.5-4 -1.2-3.8 -1-3.9 -0.2-4 0.6-3.9 1.6-3.7M748.0 699.1l0.8-3.9 0.9-3.9 1.1-3.9 0-4 1.1-3.8 -0.2-4 -0.1-4 0.7-4 -0.3-4 0.4-3.9 1.3-3.8 1-3.9 2.2-3.3 2.9-2.8M646.1 700.9l1.4-3.7 1.1-3.9 0.2-4 -0.9-3.9 -0.7-3.9 -1.1-3.9 -0.6-3.9 -1.4-3.8 -1.9-3.5 -1.3-3.8 -0.7-3.9 -1.3-3.8 -0-4 0.7-3.9M667.1 767.1l-1.5-3.7 -0.4-4 -0.9-3.9 -1-3.8 -1.6-3.7 -2.7-3 -3.2-2.4 -3.7-1.4 -3.9-0.9M782.1 692.6l4 0.1 3.7 1.5 3.4 2 3.9 0.9 3.6 1.9 2.9 2.8 3.2 2.4 3.4 2.1 3 2.6 2.6 3 2.4 3.2M649.0 707.1l3.3 2.2 3.6 1.8 3.5 1.9 3.9 0.9 3.6 1.9 3.6 1.6 3.4 2.1 3 2.7 2.1 3.4 2.3 3.3 1.6 3.6 2.8 2.9 3 2.7M751.3 623.1l3.8-1.2 4 0.1 4 0.1 3.9-1 3.4-2.1 3.4-2 3.8-1.5 3.9-0.8 4-0.2 3.9 0.7 3.9-0.7M632.3 713.1l-1.6-3.7 -1.7-3.6 -2.9-2.8 -2.9-2.7 -3.4-2.2 -3.7-1.4 -3.5-2 -3.4-2 -3.6-1.8 -3.7-1.4 -3.3-2.4M642.2 729.4l3.4-2.1 2.8-2.9 3-2.6 2.5-3.2 2.4-3.1 1.9-3.5 1.7-3.7 1.7-3.6 0.5-4 -0.8-3.9 -1.2-3.8 -0.5-4 0.6-3.9M694.8 623.9l3.3-2.3 3.7-1.5 3.4-2.1 3.5-2 2.9-2.7 2.8-2.9 1.7-3.6 1.1-3.8 1.5-3.7 1.5-3.7 1-3.9 0.7-3.9M648.5 650.9l3.2-2.4 2.7-2.9 1.9-3.6 2.5-3 3-2.7 3.6-1.7 4-0.4 3.9 0.9M740.1 684.4l2.5-3.1 1.4-3.8 1.5-3.7 2.3-3.2 1.6-3.7 1.9-3.5 2.2-3.4 2.2-3.3M707.8 708.6l-0-4 0.2-4 1.3-3.8 0.2-4 -0.8-3.9 0-4 1.4-3.7 2.4-3.2 2.6-3.1 1.5-3.7M620.8 688.8l2.5-3.2 1.5-3.6 2.4-3.2 3.1-2.6 3.1-2.5 3.3-2.3 3.4-2.1 3.4-2.2 2.4-3.2 2.9-2.7 2.7-3M688.1 604.7l1.9-3.5 1.3-3.8 1.2-3.8 1.5-3.7 0.2-4 1.2-3.8 1.9-3.6 2.7-2.9M642.8 662.4l3 2.6 2.5 3.2 2 3.4 2.7 2.9 1.6 3.7 0.4 4 -0.1 4 -0.7 3.9 -1 3.9 -1.5 3.7 -0.2 4M743.5 650.6l3.5 2 3.3 2.1 2.7 3 2.2 3.4 3.1 2.5 2.1 3.4 1.7 3.6 1.4 3.8M635.7 642.0l4-0.2 3.9 0.9 3.7 1.4 3.5 2 3.7 1.4 3.5 2 3 2.6 3.7 1.6 3.7 1.6 3.6 1.6M663.3 631.0l3.4-2 3.9-1 3.9-1.1 4-0.3 3.8-1.2 3.7-1.4 3.6-1.7 3-2.7 3.3-2.3M756.6 679.7l-1.8-3.6 -2.4-3.2 -3.3-2.2 -3-2.7 -2.7-2.9 -1.8-3.6 -1.5-3.7 -1.9-3.5 -2.4-3.2 -1.9-3.6 -1.8-3.5 -1.8-3.6 -2.4-3.2M709.6 712.4l3.9 0.8 3.7 1.6 3.4 2.1 3.9 1 3.7 1.5 4 0.4 3.9 0.3M714.8 609.6l1.2-3.8 2.3-3.3 3-2.7 3.4-2.1 3.1-2.5 3.6-1.8 3.5-1.8 3.9-1.2 3.9-0.7 3.7-1.4 3.8-1.3 4-0.1M656.1 681.4l4 0.5 4-0.1 3.9-0.7 4-0.3 3.9-0.9 3.6-1.7 3.8-1.1 4-0.5 4-0.2 4 0.3 3.9-0.7 4 0.2 4 0.6M681.6 683.8l3.9 0.9 3.6 1.8 3.9 0.7 4-0.1 3.9-0.9 4-0.4 4 0.1 3.8 1.2 3.2 2.4 3.1 2.5M603.6 672.4l3.1 2.6 2.6 3 2.5 3.1 2 3.5 2.6 3 2.3 3.2 1.3 3.8 0.3 4 -1 3.9 -1.3 3.8 -0.5 4 0.9 3.9 1.6 3.6 1.2 3.9M764.8 648.6l3.8 1.1 4 0.1 4 0.3 4-0.4 4-0.1 3.8-1.2 3.5-2 2.8-2.8 2.8-2.9 3-2.6 2.7-3M574.6 599.0l3.4 2.1 4 0.5 4-0.1 3.8-1.3 3.6-1.7 3.8-1.2 3.5-2.1 3.2-2.4 3.3-2.2 3.8-1 3.5-2 3-2.7 3.2-2.3 2.5-3.2 1.7-3.6M615.1 617.7l3.4 2.2 3.4 2.1 2.8 2.8 2.5 3.1 3.2 2.4 2.3 3.3 2.8 2.9 2.6 3 2.2 3.3 3 2.6 3.8 1.4 4 0.5 4 0.2 3.9 0.6M575.3 579.3l2.7 3 2.7 2.9 1.4 3.8 1.8 3.5 3 2.7 3.8 1.4 3.3 2.1 2.5 3.2 2.7 3 2.9 2.7 3.2 2.4 3 2.6 1.9 3.5M655.2 584.1l3.3-2.3 3.7-1.3 3.3-2.3 3-2.7 2.8-2.8 1.8-3.6 1.6-3.7 0.3-3.9 -1.1-3.9 -0.2-4 -1.4-3.7M638.9 562.2l4 0.5 3.8 1 3.6 1.9 3.1 2.5 2.5 3.1 2.7 2.9 2.7 3 3 2.6 2.6 3M648.6 574.0l3.9-1 3.2-2.4 3.8-1.2 4 0.4 4 0.5 4-0 3.8-1.1 4-0.2M579.5 578.3l4-0.4 3.8 1.1 4 0.5 4 0.4 3.7 1.5 2.9 2.7 1.7 3.6 2.5 3.2 1.4 3.7 2.1 3.4 1.1 3.9M613.2 575.4l3.4 2.2 3.2 2.3 2.9 2.8 3.2 2.4 2.9 2.8 3.4 2 3.3 2.2 2.8 2.9 3.1 2.6 3.3 2.2 3.1 2.5 3.5 2M566.8 640.8l3.4-2 3.9-1 3.9-0.8 3.5-2.1 3.4-2.1 2.8-2.8 2.5-3.2 2-3.4 3-2.6 3.4-2.2 3.4-2.1 3.9-0.8M564.5 652.2l3.8 1.2 3.8 1.2 3.5 1.9 2.5 3.2 2 3.5 2.9 2.6 2.9 2.8 3.1 2.5 2.9 2.9 2.5 3.1 2.7 2.9 2.8 2.9 3.3 2.1 3.5 2 3.2 2.4M640.2 584.1l1.4 3.8 1.4 3.7 2.5 3.1 3.2 2.4 3.1 2.6 2.4 3.1 2.3 3.3 1.7 3.6 0.7 4 0.8 3.9 1.8 3.6 2.2 3.3 3.2 2.5M669.6 569.6l4 0.3 3.6 1.6 3.9 0.9 3.4 2.2 3.7 1.4 3.8 1.5 3.5 1.8 3.2 2.5 3.3 2.3 3 2.6 2 3.4 1.4 3.8 1.6 3.6 1 3.9M601.4 594.5l3.6 1.8 4 0.3 3.8-1.1 4-0.7 3.9 0.7 3.6 1.8 3.3 2.3 3.7 1.6M564.8 612.4l4 0.2 4 0.1 3.8-1.2 3.2-2.4 2.7-2.9 3-2.7 2.6-3 2.7-3 2.3-3.3 2.3-3.2 0.9-3.9 1.1-3.9 1.5-3.7 0.9-3.9M615.3 609.1l3.1-2.5 3.8-1.2 3.5-2 3.6-1.6 2.8-2.9 3.6-1.7 3.3-2.3 2.3-3.3 1.1-3.8 2.4-3.3 2.2-3.3 0.9-3.9 0.2-4 -0.3-3.9 -1.9-3.6 -2.7-2.9M649.1 579.7l3.5 2 3.4 2.1 3.9 0.7 3.9 1 3.6 1.8 3.3 2.1 2.4 3.3 2.6 3 3.6 1.9 3.8 1 3.9 1.2 3.8 1.1M675.2 579.0l3.9 1 3.2 2.3 3.6 1.9 3.8 1.2 3.8 1.2 3.7 1.5 3.3 2.3 3.9 0.9 3.6 1.7 3.9 1 3.9-0.2 4-0.4 3.9-0.9M594.7 601.4l4-0.1 3.8 1.3 3.6 1.7 3.1 2.5 2.4 3.2 2.2 3.3 2.6 3.1 1.5 3.7 2.6 3.1M625.4 586.0l4 0.6 3.8 1.1 3.4 2.1 2.9 2.8 3.1 2.5 3.8 1.1 4 0.8 3.9-0.6 3.9 1 3.8 1.2M613.3 621.5l1.7 3.6 2.8 2.9 2.9 2.7 3.3 2.3 3.9 1 4 0 3.9 0.8 4-0.2 3.8-1.2M622.4 590.0l3.2 2.4 3.6 1.7 2.9 2.8 3.4 2.1 3.7 1.4 4 0.6 3.4 2.1 3.5 1.9 3.7 1.5M583.4 631.7l0.5 4 1.9 3.5 0.9 3.9 1.8 3.6 0.5 3.9 2.1 3.5 0.8 3.9 1.7 3.6 2.3 3.3 2.7 2.9 2.6 3.1M622.5 564.4l3.3 2.2 3.6 1.8 3.7 1.6 3.7 1.4 3.5 2 3 2.6 3.2 2.4 3.8 1.4M596.9 615.0l3.8 1.2 3.9 1.1 3.8 1.1 4 0.3 4-0.2 4-0.1 4 0.5 3.9 0.6M651.3 612.8l3.7-1.6 3.5-1.8 3.8-1.2 3.6-1.9 4-0.4 3.9-0.8 4-0.4 4 0.2 4-0.3 3.8-1.2 3.9-0.4 4-0.1M588.9 643.3l3.9 0.8 4-0.6 3.8-1.2 4-0.1 3.9-1 4-0.1 3.9-0.9 3.4-2.1 3.3-2.3 3.4-2.1 2.5-3.1 1.6-3.7 2.2-3.3 2.2-3.3M593.5 638.7l4 0.4 3.8-1.2 4 0.1 3.8-1.1 3.5-2 3.9-1 3.9-0.7 4-0.6 3.6-1.7 3.7-1.5 4-0.3 4-0 3.9 0.8M583.8 607.4l3.6 1.7 3.7 1.6 3.9 0.8 4 0.5 3.9-0.8 4 0 3.9-0.9 3.9-0.9 3.8-1.2 3.5-2M652.2 598.4l2.7 3 2.9 2.7 3.5 2 2.5 3.1 2.7 3 2.2 3.3 0.8 3.9 0.4 4 0.7 3.9 0.2 4 0.3 4M578.4 643.8l3.8-1.1 3.9-0.9 3.7-1.5 3-2.7 3.8-1.3 4-0 4-0.3 3.8-1.1 4-0.4 4 0.6 4 0 3.9-0.3M617.6 542.0l4-0.5 3.5-1.8 2.7-3 2.2-3.3 1.8-3.6 0.9-3.9 -0.2-4 -0.2-4M636.1 548.9l3.6-1.8 3.4-2.1 2.4-3.2 1.5-3.7 0.3-4 0-4 -0.4-4 -2-3.5 -2.1-3.4 -2.3-3.2 -3.2-2.4 -3-2.7 -2.3-3.2M570.9 564.5l3.9 0.9 3.8 1.3 3.8 1 4-0.4 3.8-1.4 4 0 3.9-0.8 3.9-0.6 3.9 1 3.8 1.4 4 0.2 3.6 1.6 3.6 1.8 3.7 1.5 3.8 1.4 3.3 2.2M582.0 594.0l2.7 2.9 2.1 3.4 2.5 3.1 1.5 3.8 2.4 3.2 3.1 2.5 2.4 3.2 2.5 3.1M592.2 570.3l4 0.3 3.7 1.4 4 0.6 3.9 0.9 3.9 0.6 4 0.5 3.8 1.3 2.9 2.7 3.6 1.7 3.7 1.7M567.5 575.0l2.2 3.3 0.9 3.9 1.2 3.9 0.9 3.9 1.1 3.8 0.5 4 0.8 3.9 -0.1 4 0.6 3.9 -0 4 -0.8 3.9M671.2 581.0l3.4-2.1 3.7-1.5 4 0 3.8 1.3 3.2 2.5 2.4 3.2 3.3 2.2 2.9 2.7 2.5 3.1 2.6 3.1 1.1 3.9 0.2 4 -0.2 3.9 0.2 4M595.6 612.0l3.5-2 3.7-1.4 3.1-2.6 3.6-1.7 3.3-2.2 3.2-2.4 3.7-1.6 4-0.4 3.9-0.9 4-0 3.7 1.4 3.5 2 3.9 0.7 3.6 1.8 2.9 2.8M603.8 577.5l2.3 3.2 2.5 3.2 3.2 2.3 3.7 1.6 3.8 1.4 3.9 0.6 3.6 1.8 4 0.4 3.7 1.4 4 0.5 3.9-0.9 4-0.2M632.3 557.1l3.5 1.8 3.4 2.2 2.6 3.1 3 2.6 3.4 2 3.9 1.1 3.8 1.2 3.7 1.6M682.5 587.2l2-3.8M684.6 584.8l1.5 3.7M681.9 586.1l4.4-1.4M681.7 587.4l2 2.7M682.5 586.9l4.2 3.4 1.8-2.3M683.9 586.4l1.7 3M684.9 586.1l4 1.8M682.4 584.8l1.6-1.5M683.4 585.2l1.8-1.5M683.4 587.9l1.8 2.4M684.2 586.2l4.4-3.2M682.7 587.7l1.4-1.5 -2.9-2.7M682.3 583.3l3.2-2.4 1.6 2.1M682.2 583.9l1.9-3M680.0 582.0l5.1-2.5 -0.9-2M681.1 583.2l4.1-3.3M683.7 585.3l2-2.8M628.9 592.2l1.2 5M629.8 590.3l2.7-1.3M627.8 591.8l3.6-4.5 1.6 1.2M626.8 593.9l2.9 1.2M631.4 590.4l2.3 3.2M626.6 593.8l2.4-1.4 -1.1-1.8M630.2 588.3l4.6 3.5 -1.9 2.5M632.2 587.5l2.9-2.4M630.5 593.0l2.3-1.5 -1.7-2.8M624.9 592.7l1.5-2.9M630.7 589.1l2.9-1.1 1.1 2.8M630.5 587.9l2 1.8M626.7 591.9l3.9-2.8 1.4 1.9M628.3 586.1l2.5 3.7M631.4 590.5l2.1-1.1M631.9 589.1l1.9-4.4M627.1 591.4l1.6 2.1 3.1-2.4M626.4 590.9l3.6 3.8M632.4 589.0l1.9-2.2 -2.7-2.4M629.2 594.5l1.8 1.7M570.5 637.9l4.8-3.3M571.6 635.2l1.6 2 1.4-1.2M572.1 633.1l3.1 3.9M570.4 635.4l2.1 4.2 -1.6 0.8M570.2 632.1l2.9 5.2M567.6 633.6l1.1 2.8M573.2 633.7l4.1-3.9 -1.2-1.2M569.7 630.0l3.6 3.5M573.1 633.2l1.8 2.1 2.3-2M569.5 634.4l3.1-1.3 0.9 2M572.1 635.0l1.7 2.9M570.7 637.4l4.5-2.1M571.6 632.3l5-1.4 -0.7-2.9M572.2 635.9l3 4.2M572.1 637.4l4.3-4.1M569.2 629.5l1.4-2.6M569.3 633.4l1.9-0.9M567.8 634.5l0.8-1.9M568.0 631.6l2 4.8 3.7-1.6M569.5 633.4l4.5-3.1M568.9 636.5l3.1 2.1M605.2 570.5l1.4-2.4 -2-1.2M611.0 571.7l3.6 4.2M605.7 572.5l1.2-1.7M603.6 573.4l1.4 2.7 -1.7 0.9M604.0 573.7l1.5 2.8M610.0 569.6l3.4-2.6M605.5 571.3l3.1 2.3M604.0 574.0l3.8-2.9 -2.2-3M604.0 573.4l1.4 5.3M605.3 573.8l1-2.5 2 0.7M603.0 574.1l1.4 2M609.3 571.6l2.3-1.9M603.4 575.9l3.4-3.1M611.6 569.4l3.5 2.2M610.3 574.4l4-2.5 -1.5-2.4M602.9 574.2l3.9-1.2 1.2 3.7M611.4 571.7l2-3.3M604.6 571.0l1.6 1.5M589.9 628.1l1.3 1.6M590.8 628.5l1 3.2 2.5-0.8M592.9 627.6l3.6 2.6 -2.2 2.9M593.9 632.1l2 1.1 -1 1.8M589.9 630.8l4.2 4 -2 2.1M591.8 628.9l2.3-2.9M590.2 632.4l2.8-0.9M591.5 626.3l4.2-3.9M591.5 626.3l3.6-3.9 2.8 2.5M591.1 627.5l2.3-3.1 3.1 2.3M594.3 629.8l2.5-5.2 3.5 1.6M590.9 631.9l4-1.7 -1.2-2.7M594.9 628.9l4.4-1.1M591.9 632.5l2-1.4M591.8 630.7l2.9 3.9 1.8-1.3M591.7 630.0l2.2-0.9 -1.5-3.6M591.8 633.1l2.1 2.4 1.2-1.1M589.3 628.2l1.7 3.9 3.3-1.5M686.4 597.7l-6.6-2.8M653.8 560.1l5.5-2.2M578.3 541.1l3.5-1.9M577.9 611.0l3.1 2M644.7 583.2l5.8-0.3M659.5 561.9l3.5-3.1M609.6 577.7l7.9-0.5M611.3 532.8l-3.6-5M679.4 574.3l-5.1 4.4M632.4 552.6l3.9-2.5M632.9 582.7l-2.3-5.5M599.6 598.8l4.5-0.1M606.3 547.3l2.9 2.3M685.5 572.6l-5.8-3.9M590.9 648.4l5.5-1M622.8 549.5l2.5 1.8M665.6 602.6l1-2.8M658.1 562.9l0.6-5.1M641.0 559.3l2.8 1.6M599.4 596.8l3.3-0.2M697.4 580.6l-1-7.3M568.1 596.1l5.8 4.8M568.8 612.9l3 5.7M601.8 562.3l-0.5-6M670.3 583.3l-7.2-0.4M663.4 570.9l-4.3-2.8M619.8 582.1l-7.1 2.4M591.4 651.6l-3.3 3.6M654.8 604.6l6 2.8M577.2 590.2l6.3-2.2M587.5 565.1l5.4-2.2M619.1 531.7l-4.6 4.7M594.1 608.3l-0.3-3.5M572.8 609.2l3.2-2M606.3 633.2l-7.2-0.4M595.0 644.5l1-3.7M624.3 552.6l-3.2 1.6M602.2 556.0l-0.8 4.4M585.4 588.7l-7.4 0.7M686.1 595.3l-2.9-2.9M539.5 739.7l5.8 0.9M540.2 732.4l2.2-2.9M541.5 730.1l-1.9-4.9M543.6 728.6l3 2.1M548.2 719.5l3.4-1.8M547.0 717.2l-2.9 0.2M547.2 712.5l-2.9-1.3M546.7 709.9l-2.1-0.2M545.9 707.5l-3.1 0.1M549.6 698.6l5.9-2.2M551.5 696.8l2.1 0.8M553.5 695.1l-2.1-6.3M554.7 692.8l-1.2-3M559.1 686.6l2.1 0.4M558.7 675.0l-4.8-4.6M537.3 741.1l2.1-1.5 1.4-2.2 0.2-2.6 -0.8-2.5 1.3-2.2 2.1-1.6 0.4-2.5 1.1-2.4 1.9-1.8 1.2-2.3 -1.2-2.3 1.2-2.4 -1-2.4 -0.5-2.5 -0.8-2.5 1.3-2.3 0.3-2.5 2.2-1.4 -0.1-2.6 1.9-1.8 2-1.7 1.2-2.3 1-2.4 1.6-2.1 1.8-1.8 0.2-2.6 1.7-2 -1.4-2.1 -1.4-2.3 0.5-2.5 -0.7-2.5 0.8-2.5 1-2.4 0.1-2.6 0.8-2.4M536.0 730.4l-3.8-3.9M538.5 729.7l3.7 1.5M539.3 727.2l6.6-1.6M541.2 725.5l4.8 1.8M547.3 720.8l-1.5-4.9M553.1 715.9l-0.4-3.4M555.6 711.3l-1.5-2.9M555.1 706.2l-5.7-3.9M556.9 704.3l-1.6-6.5M558.2 699.3l1.9-1.2M560.4 697.9l4.7 0.5M569.1 685.6l5.7-2.6M571.0 680.8l5.4-1.5M530.5 740.5l2.5-0.8 0.5-2.6 0.3-2.6 2.1-1.5 0.1-2.6 2.5-0.7 0.8-2.4 1.9-1.8 2.1-1.5 2.3-1.2 1.7-1.9 1.5-2.2 2.3-1.1 2-1.7 1.3-2.2 1.2-2.3 -0.4-2.6 -0.1-2.6 1.8-1.9 0.9-2.4 0.4-2.6 2.2-1.4 1.2-2.3 2.1-1.5 2.1-1.5 1.2-2.3 1.6-2.1 0.5-2.6 1-2.4 0.9-2.4 1.8-1.9 0.7-2.5M548.8 733.4l5.5 1.8M559.7 723.4l5.8 1M563.0 715.1l3.3-1M565.3 713.9l0.2-2.9M567.7 709.6l-3.4-2.9M570.3 709.4l4.8 4.2M573.8 705.8l5.6-2.9M574.9 703.4l-2.7-4.1M576.4 701.3l0.2-2.3M583.0 694.7l2 0.6M543.6 740.0l2.4-0.9 0.3-2.6 -0.1-2.6 2.6-0.4 2.3-1.2 2-1.7 2.5-0.7 0.9-2.4 1.3-2.2 1.9-1.8 0.5-2.6 2.6-0.5 0.2-2.6 0-2.6 2.3-1.3 1.9-1.7 0.6-2.6 2.5-0.1 2.3-1.4 1.2-2.3 1.1-2.4 1.5-2 0.1-2.6 2.4-0.9 2.2-1.4 1.9-1.8 1.3-2.2 0.6-2.6 2.5-0.2 2.6-0.6 0.2-2.6M542.1 740.0l0.4-2.2M544.7 739.6l2.7 5.6M555.7 730.9l2.2-1.4M558.3 730.6l2.1 3.4M563.4 730.6l1.7-1.5M565.0 728.5l0.5-4.7M572.1 726.4l1.3-3.7M573.1 724.0l-3.5-2.8M579.4 720.7l1.3-2M586.2 713.5l2.4-6.1M592.5 709.2l4-0M536.3 743.7l1.4-2.2 2.6 0.4 1.8-1.9 2.6-0.4 2.3-1 2-1.8 2.3-1.2 0.9-2.5 2.5 0.2 1-2.4 2.6-0.3 2.5-0.4 2.6 0.3 1.6-2 2.5 0.3 2.4-1.1 2.2-1.3 1-2.4 2.5-0.4 1.2-2.4 2.5-0.5 1.4-2.2 1.1-2.4 1.9-1.8 2.5-0.8 2.3-1 1.8-2 2.2-1.3 1.4-2.2 2.2-1.4 2.1 1.5 2.5-0.7 1.9-1.8 1.8 1.8M544.4 739.0l0.5-2.5M553.9 741.9l1.2 2M558.8 743.2l3.7-1M566.1 740.8l1.3-2.6M567.6 738.7l2.8 1M571.3 735.0l5.3 0.1M573.3 733.4l-1-2.9M582.5 730.0l1.4-3.8M592.4 727.6l1.4-4.9M597.1 726.0l5.1 0.4M598.6 728.1l3.3 1.5M601.0 729.2l2.3 4.2M603.4 728.2l2.3 2.5M607.5 729.0l-2.3 4.8M609.8 727.8l2.6-6.2M612.0 729.1l6.5-2.1M542.6 740.9l1.8-1.9 2.2 1.4 2.2 1.4 2.6-0 2.6 0.1 2.6 0.1 2.3 1.2 2.2-1.4 2.4-0.9 2.6-0.1 1.6-2.1 1.9-1.7 1.8-2 2-1.6 2.3-1.1 2.6 0.5 1.8-1.9 2.4-0.9 2.2-1.4 2.6-0.4 2.6 0.1 2.5-0.7 2.6-0.1 2.1-1.5 1.6 2.1 2.3 1.1 2.4-1 2.4-1.1 1.7 1.9 2.3-1.2 2.3 1.3M538.8 757.4l5.6-0.1M541.2 758.3l-0 2M545.6 757.5l4.9 1.4M547.6 755.9l6-0.6M555.0 758.3l2.2 3.1M559.9 757.9l3.8 1.9M561.9 759.5l3.5-1.8M564.3 758.8l2.6-4.9M568.8 761.0l0.1 3.3M580.1 759.5l-1.7 5M585.3 760.2l2.2 5.2M590.4 759.6l2.1 6.2M595.0 761.0l3.5 2.6M602.4 758.9l2 0.5M607.1 761.1l-0.1 6.5M614.2 763.2l4.8-3.2M616.7 762.5l0.7-5M619.3 762.8l3.5-4.3M628.9 759.9l2.9 1.6M536.6 756.0l2.2 1.3 2.5 1 2.4 0.9 1.9-1.7 2-1.7 2.4 1 2.6 0.5 2.4 0.9 2.5 0.7 2.4-1 2 1.6 2.5-0.8 2.5 0.6 1.9 1.7 2.5-0.9 2.6 0 2.4-0.8 2-1.7 1.9 1.9 2.6 0.2 2.5 0.5 2.5-0.6 2.6-0.1 2 1.7 2.6-0.3 2.6-0.5 2.6-0.3 2.3-1.2 2.1 1.4 2.5 0.8 2.5 0.6 2.1 1.6 2.6-0.2 2.5-0.6 2.6 0.3 2.3-1.1 2.6 0.5 2.2-1.3 2.4-1 2.5-0.9 2.5-0.7 2.3 1.2 2.1-1.5 1 2.4M545.9 762.0l1.8 2M550.0 765.2l1.9 5.2M551.7 767.1l6.1-1.4M559.1 769.4l2.9 3.7M561.3 768.0l2.3 1.7M563.9 768.0l4.2 3.9M566.1 766.5l0.9-2.7M585.3 769.7l4.2 5.1M587.2 771.5l2.5-0M594.5 773.9l0.4 4.1M597.1 773.3l1.5-4.4M607.8 773.8l2.4 0.7M615.3 775.3l2.4 4.3M617.3 776.9l2.1-1.1M622.5 777.2l2.6 1.9M629.5 776.5l5.3-0.6M641.1 777.4l-0.9 3.6M650.0 777.1l1.6 2.7M654.4 778.6l1.7 2.3M660.5 776.8l4.5 0M529.1 758.6l2.4 1.1 2.5 0.5 2.6-0.4 2.6-0.1 2.5-0.3 1.7 2.1 2.5 0.5 2 1.7 2.1 1.5 1.8 1.9 2.5 0.6 2.3 1.2 2.5 0.5 2.2-1.3 2.6-0 2.2-1.5 2.6 0.2 2.1-1.4 2.4 1 2.6 0.2 2.6 0.1 2.2 1.4 2.1 1.5 2.6 0.1 1.9 1.8 2.5 0.7 2.3 1.3 2.6 0.4 2.5-0.6 2 1.6 2.6 0.4 2.1-1.5 2 1.7 2-1.6 2.6-0.3 2.3 1.2 2.6 0.5 2 1.6 2.6 0.2 2.6 0.2 2.3 1.1 2.6-0.3 2.1-1.5 2.3 1.2 2.1-1.6 2.6-0.3 2.6-0.1 2 1.6 2.2 1.4 2.1-1.5 2.2-1.3 2.4 1.1 1.8 1.8 2.6-0.3 1.8-1.8 2.2-1.5 2.1 1.6 2.6-0.1M540.8 754.2l3.2-0.1M545.3 756.5l1.9-1.9M547.9 756.5l2-1.7M550.5 756.1l3.9 4.9M553.1 755.9l2.7 5.7M561.3 761.5l-1.6 5.3M563.4 763.0l4.7-2.3M566.0 763.0l3.5-5.6M575.2 765.9l1.5-2M577.0 767.7l-0.6 6.3M579.4 768.7l4-2.7M587.9 773.6l5.1-3M589.5 775.7l-1.5 3.5M591.7 777.1l2.2-1.7M597.9 780.0l1.8-1.9M601.3 783.9l-0.6 3.9M603.9 783.5l4.1-5.6M606.4 782.9l0.5-5.1M611.2 784.6l2.5 2.8M618.2 786.5l2.3 5.1M623.2 787.6l1.2 5.2M625.7 788.2l2.2 3.7M628.2 789.0l1.6 4M632.5 791.1l2 2.4M639.9 790.6l1.8-2.7M642.5 790.6l0.9-2.1M647.2 791.7l5.5 2.2M649.8 791.7l4.1 4.9M654.7 791.4l1.3-3M656.2 793.6l2.2 0M661.0 795.3l5.6-2M669.8 799.6l3.9 3.6M681.6 799.8l2.5 1.9M534.4 752.6l2.6 0.3 2.4-0.9 1.4 2.2 2 1.7 2.5 0.6 2.6-0 2.6-0.3 2.6-0.3 2.4 1 1.9 1.6 2.5 0.8 1.4 2.2 2.1 1.6 2.6-0.1 2.6 0.3 1.5 2 2.5 0.9 2.6-0.3 1.8 1.8 2.4 1 2.1 1.6 2.4 1 1.4 2.2 2.6 0.1 1.6 2.1 2.2 1.4 2.1 1.5 1.5 2.1 2.6-0.7 1.9 1.8 1.5 2.1 2.6-0.4 2.5-0.6 2.3 1.3 2.5 0.4 1.9 1.9 2.5 0.3 2.6-0.3 2.6 0.1 2.4 1 2.5 0.6 2.5 0.8 1.7 2 2.6 0.1 2.4 0.9 2.4-1 2.6-0.4 2.6 0 2.1 1.5 2.6-0.4 2.6 0 2.5 0.7 2.4-1 1.5 2.2 2.3 1.1 2.5 0.6 1.7 2 2.5 0.6 2 1.7 2.6 0 1.6 2.1 2.4-0.9 2.6-0 2.6-0.4 2.5-0.5 2.4 1.1 2 1.6 2.6 0.3M545.1 764.0l5.7 1.9M547.5 764.9l5.9-1.3M549.3 766.8l-1.4 5.8M556.7 768.7l1 6.2M558.1 770.8l5.7 2.7M559.1 773.3l2 0.9M561.7 773.2l3.4 2.7M583.1 788.5l2.2-2.5M588.2 788.2l1-3.6M591.6 791.6l-3.1 4.7M592.7 793.9l-2.2 2.7M594.3 796.0l4.7-1.3M599.5 795.5l1.6-2.1M601.4 797.2l4.5-1.2M604.0 796.9l4.2 2.7M605.1 799.2l3.6 1M607.7 798.9l1.4-5.1M610.1 799.8l3.8-0.8M612.4 801.1l1.6 5.2M622.4 808.8l6.2 2.3M627.2 808.7l4.6-1.9M629.7 809.6l3.6-0.5M543.5 761.9l1.6 2.1 2.4 0.9 1.8 1.9 2.4 0.8 2.6-0 2.4 1 1.4 2.2 1 2.4 2.6-0.1 2.2 1.4 1.3 2.2 2.6-0.6 1.3 2.2 2.3 1.1 1.4 2.2 2.3 1.3 2.4 1 0.9 2.4 2.3 1.1 2.4 1 2.6 0.3 2.5-0.5 2.5 0.9 0.9 2.5 1.1 2.3 1.6 2.1 2.6-0.2 2.6-0.3 1.9 1.7 2.6-0.4 1.1 2.4 2.6-0.4 2.4 1 2.3 1.3 2.3 1 1.6 2.1 2.4 1 2.2 1.4 1.5 2.2 2.4-1 2.4 0.9 2.5 0.9M560.0 753.4l4.7-1.2M563.8 760.1l5.3 0.9M568.1 763.1l3.6-0.7M575.1 766.5l4.5-0.3M580.6 771.6l0.8 5.2M586.5 780.2l4.4 0.7M586.7 782.8l2.2 1.6M586.7 787.7l4.2 3.5M585.6 790.1l-5.3 1.1M586.6 792.5l3.6 2.4M587.8 794.8l3.4 1.2M588.8 801.6l-2.5 1.1M558.7 751.2l1.4 2.2 1.3 2.3 0.7 2.5 1.7 1.9 2.2 1.4 2.1 1.6 2.4 1 2.3 1.2 2.3 1.2 1.2 2.3 2.1 1.5 2.2 1.4 1.3 2.2 1.6 2.1 1.4 2.2 1.6 2 0.2 2.6 -0.7 2.5 0.8 2.5 -1.2 2.3 1 2.4 1.2 2.3 -1 2.4 1.8 1.8 0.2 2.6 -0.6 2.5 2.3 1.2 -2 1.6M547.4 765.2l4.8 4.1M547.7 767.7l-3.4 3.2M548.2 770.3l2.6 0.8M554.3 777.0l4.1-1.2M554.7 779.6l-6 3.5M560.6 787.1l2.6-0.6M561.8 789.5l-1.3 6.3M564.4 789.3l2.2 2.6M569.8 794.7l4.5-0.3M571.4 796.7l-0.1 5M572.5 799.1l-2 3.6M575.0 799.8l1.7 2M545.4 760.5l1.5 2.1 0.5 2.6 0.2 2.5 0.6 2.6 0 2.6 1.2 2.3 2.5 0.8 2.4 1 0.3 2.6 1.3 2.3 0.3 2.6 2.1 1.5 2.3 1.1 1.1 2.4 2.6-0.2 1.9 1.8 1.4 2.3 2.2 1.3 1.6 2 1.1 2.4 2.5 0.7M695.8 799.3l1 1.8 0.9 1.7M689.4 809.7l0.9 1.8 1 1.7M665.4 778.5l3 5.2 3 5.2M683.1 809.2l2.9 5.3M655.2 771.1l1.1 1.7M657.1 775.2l2.9 5.2 2.9 5.3 1 1.7M667.1 792.6l3 5.2M651.1 772.1l3.1 5.2 3.1 5.1M660.4 788.2l0.9 1.8 1 1.7M664.0 794.4l3 5.2M669.3 803.6l3.2 5.1 3.1 5.1M655.2 786.9l2.8 5.3 2.8 5.3M664.0 802.2l3.1 5.1 3.2 5.1 1 1.7M640.8 771.1l2.8 5.3 2.8 5.3M645.9 790.2l3 5.2M643.0 794.1l3.1 5.1 3.1 5.1M651.5 808.8l1 1.7 1 1.8M640.6 766.8l1.7-1 1.8-0.9M641.2 790.1l1.8-1 1.7-0.9M649.2 785.2l1.7-1 1.8-1M656.0 781.2l5.2-2.9 1.8-1M645.6 802.7l5.2-3M655.8 796.8l1.7-1 1.7-1.1M664.4 791.8l5.3-2.8 3.5-1.9M651.3 807.0l5.1-3.2M670.2 796.0l5.1-3.2 5.1-3.2M649.9 814.5l5.2-3.1M657.9 810.0l5.3-2.8 5.3-2.8 3.5-1.9M668.5 811.0l5.3-2.9 5.2-2.8M682.2 803.1l5.2-3 5.2-2.9M671.7 814.4l1.7-1M686.8 805.5l5.3-2.8 3.5-1.9M683.3 814.4l1.7-1 1.7-1M690.9 810.0l5.1-3.1M543.3 691.3l2.1-4.2M601.9 767.3l0.9-5.6M577.6 739.5l3.1-1.6M578.9 736.2l0.7-4.7M583.0 748.7l-2.5-3M575.5 741.3l-0.4 4.1M525.6 760.4l1.5-5.1M555.1 688.5l-4.2-0.6M582.4 753.0l4.9-0.5M544.6 693.0l1 3.2M685.1 798.6l4.3-3.7M547.9 765.0l-0.6-5.3M631.4 768.5l4.5 0.3M605.1 796.8l-4.3-3M550.2 689.6l-1.4 2.7M607.4 803.0l4.3-3.3M615.4 797.3l-2.4 1.9M686.9 803.1l5.2 1.2M551.9 678.4l-0.6-4.4M682.8 801.1l0.9-4.1M585.2 692.5l2.9 4.7M636.1 810.7l-1 5.6M571.8 687.4l3.6 2.3M603.6 750.4l4.4-3.8M661.8 788.0l-5.5 0.6M532.1 766.6l4.2-0.6M541.0 730.6l0.3 5M543.5 736.2l1.7-4M588.5 763.1l2.2 3.4M523.4 747.5l3.5-2.6M645.5 522.0l14.5 2 40 9 60 5 40 2 29.4 3.4M645.0 520.0l7 7 13 0M802.6 555.4l12.4 4.6 15.4 8.4 5.6 16.6 7.3 18.5 11.7 6.5 16-2.8 29.6 37 -2.6 1.8M802.6 611.0l51.8 24M802.6 629.4l47.2 12M802.6 670.0l47.2 14.8M742.0 737.0l13 11 20 12 37 16 26 12 10 8M744.0 735.0l13 11 20 12 37 16M790.0 740.0l40 20 20 8M650.0 795.0l12 25 13 29M620.0 815.0l5 20M760.0 512.0l10 8 5 10M751.0 510.0l6 10" fill="none" stroke="#000" stroke-width="0.85"/><polyline points="709.3,524.0 708.0,540.0 701.0,561.0 684.0,573.0 658.0,594.0 640.0,615.0 630.0,640.0 624.0,670.0 622.0,700.0 621.0,740.0 620.0,790.0 618.0,813.0" fill="none" stroke="#000" stroke-width="1.3"/><g fill="#55b04b" stroke="#3b8a38" stroke-width="1.25"><circle cx="802" cy="290" r="4.95"/><circle cx="803" cy="294" r="4.95"/><circle cx="862" cy="288" r="4.95"/><circle cx="937" cy="307" r="4.95"/><circle cx="732" cy="337" r="4.95"/><circle cx="817" cy="341" r="4.95"/><circle cx="711" cy="362" r="4.95"/><circle cx="732" cy="362" r="4.95"/><circle cx="821" cy="361" r="4.95"/><circle cx="824" cy="361" r="4.95"/><circle cx="887" cy="368" r="4.95"/><circle cx="772" cy="384" r="4.95"/><circle cx="793" cy="379" r="4.95"/><circle cx="810" cy="377" r="4.95"/><circle cx="813" cy="378" r="4.95"/><circle cx="817" cy="379" r="4.95"/><circle cx="827" cy="378" r="4.95"/><circle cx="840" cy="376" r="4.95"/><circle cx="829" cy="387" r="4.95"/><circle cx="828" cy="393" r="4.95"/><circle cx="816" cy="397" r="4.95"/><circle cx="836" cy="412" r="4.95"/><circle cx="822" cy="420" r="4.95"/><circle cx="787" cy="425" r="4.95"/><circle cx="785" cy="437" r="4.95"/><circle cx="821" cy="428" r="4.95"/><circle cx="823" cy="427" r="4.95"/><circle cx="834" cy="429" r="4.95"/><circle cx="838" cy="433" r="4.95"/><circle cx="836" cy="440" r="4.95"/><circle cx="842" cy="449" r="4.95"/><circle cx="844" cy="450" r="4.95"/><circle cx="786" cy="466" r="4.95"/><circle cx="857" cy="490" r="4.95"/><circle cx="951" cy="491" r="4.95"/><circle cx="923" cy="538" r="4.95"/><circle cx="928" cy="539" r="4.95"/><circle cx="934" cy="550" r="4.95"/><circle cx="945" cy="563" r="4.95"/><circle cx="965" cy="575" r="4.95"/><circle cx="974" cy="584" r="4.95"/><circle cx="977" cy="586" r="4.95"/><circle cx="961" cy="591" r="4.95"/><circle cx="957" cy="594" r="4.95"/><circle cx="985" cy="593" r="4.95"/><circle cx="993" cy="557" r="4.95"/><circle cx="994" cy="561" r="4.95"/><circle cx="995" cy="556" r="4.95"/><circle cx="1021" cy="591" r="4.95"/><circle cx="776" cy="564" r="4.95"/><circle cx="1259" cy="229" r="4.95"/><circle cx="1244" cy="248" r="4.95"/><circle cx="1418" cy="382" r="4.95"/><circle cx="1424" cy="395" r="4.95"/><circle cx="1432" cy="409" r="4.95"/><circle cx="1427" cy="420" r="4.95"/><circle cx="1426" cy="427" r="4.95"/><circle cx="1106" cy="406" r="4.95"/><circle cx="1110" cy="403" r="4.95"/><circle cx="1101" cy="492" r="4.95"/><circle cx="1195" cy="495" r="4.95"/><circle cx="1372" cy="516" r="4.95"/><circle cx="626" cy="845" r="4.95"/><circle cx="631" cy="846" r="4.95"/><circle cx="741" cy="948" r="4.95"/><circle cx="744" cy="951" r="4.95"/><circle cx="732" cy="679" r="4.95"/><circle cx="759" cy="742" r="4.95"/><circle cx="759" cy="793" r="4.95"/><circle cx="877" cy="663" r="4.95"/><circle cx="869" cy="680" r="4.95"/><circle cx="894" cy="694" r="4.95"/><circle cx="892" cy="695" r="4.95"/><circle cx="923" cy="643" r="4.95"/><circle cx="1362" cy="596" r="4.95"/><circle cx="1392" cy="603" r="4.95"/><circle cx="1002" cy="635" r="4.95"/><circle cx="1089" cy="675" r="4.95"/><circle cx="1089" cy="717" r="4.95"/><circle cx="1056" cy="735" r="4.95"/><circle cx="1022" cy="782" r="4.95"/><circle cx="1101" cy="775" r="4.95"/><circle cx="1120" cy="786" r="4.95"/><circle cx="1120" cy="803" r="4.95"/><circle cx="1294" cy="701" r="4.95"/><circle cx="1305" cy="708" r="4.95"/><circle cx="1311" cy="710" r="4.95"/><circle cx="1285" cy="772" r="4.95"/><circle cx="1258" cy="793" r="4.95"/><circle cx="1258" cy="814" r="4.95"/><circle cx="1255" cy="823" r="4.95"/><circle cx="1250" cy="836" r="4.95"/><circle cx="1295" cy="856" r="4.95"/><circle cx="1270" cy="871" r="4.95"/><circle cx="1147" cy="846" r="4.95"/><circle cx="1156" cy="843" r="4.95"/><circle cx="1171" cy="859" r="4.95"/><circle cx="1174" cy="863" r="4.95"/><circle cx="1178" cy="871" r="4.95"/><circle cx="1190" cy="871" r="4.95"/><circle cx="1171" cy="883" r="4.95"/><circle cx="1222" cy="883" r="4.95"/><circle cx="1242" cy="888" r="4.95"/><circle cx="1249" cy="885" r="4.95"/><circle cx="1259" cy="900" r="4.95"/><circle cx="1267" cy="905" r="4.95"/><circle cx="1272" cy="906" r="4.95"/><circle cx="1284" cy="905" r="4.95"/><circle cx="1291" cy="907" r="4.95"/><circle cx="1305" cy="910" r="4.95"/><circle cx="1321" cy="902" r="4.95"/><circle cx="1346" cy="917" r="4.95"/><circle cx="1316" cy="919" r="4.95"/><circle cx="1319" cy="921" r="4.95"/><circle cx="1326" cy="927" r="4.95"/><circle cx="1392" cy="914" r="4.95"/><circle cx="1385" cy="925" r="4.95"/><circle cx="1403" cy="922" r="4.95"/><circle cx="1405" cy="919" r="4.95"/><circle cx="1435" cy="881" r="4.95"/><circle cx="1355" cy="955" r="4.95"/><circle cx="1277" cy="959" r="4.95"/><circle cx="1364" cy="980" r="4.95"/><circle cx="1050" cy="896" r="4.95"/><circle cx="1060" cy="888" r="4.95"/><circle cx="1095" cy="887" r="4.95"/><circle cx="1134" cy="894" r="4.95"/></g></svg><div class="a " style="left:1px;top:154px;width:51px;height:896px;background:linear-gradient(90deg,#f9f9f9,#ededed);border-right:1px solid #b8b8b8;border-left:1px solid #fff"></div><svg class="a" style="left:19px;top:161px" width="21" height="6" fill="#bdbdbd"><rect x="0" y="0" width="1.3" height="1.3"/><rect x="0" y="3" width="1.3" height="1.3"/><rect x="3" y="0" width="1.3" height="1.3"/><rect x="3" y="3" width="1.3" height="1.3"/><rect x="6" y="0" width="1.3" height="1.3"/><rect x="6" y="3" width="1.3" height="1.3"/><rect x="9" y="0" width="1.3" height="1.3"/><rect x="9" y="3" width="1.3" height="1.3"/><rect x="12" y="0" width="1.3" height="1.3"/><rect x="12" y="3" width="1.3" height="1.3"/><rect x="15" y="0" width="1.3" height="1.3"/><rect x="15" y="3" width="1.3" height="1.3"/><rect x="18" y="0" width="1.3" height="1.3"/><rect x="18" y="3" width="1.3" height="1.3"/></svg><svg class="a" style="left:14.5px;top:170.5px;" width="23" height="23" viewBox="0 0 24 24"><path d="M1 11 L9 7 L13 17 L5 21z" fill="#d9692c"/><path d="M4 7 L12 4 L15 14 L7 17z" fill="#f2c53a"/><path d="M8 3 L18 2 L19 12 L9 13z" fill="#5a8fd0" stroke="#3a6aa8" stroke-width="0.6"/><rect x="14" y="14" width="9" height="9" rx="1.5" fill="#5b9e4d"/><path d="M15.8 18.5h5.4M18.5 15.8v5.4" stroke="#fff" stroke-width="2"/></svg><svg class="a" style="left:14.5px;top:202.5px;" width="23" height="23" viewBox="0 0 24 24"><path d="M2 9 L12 5 L22 9 L22 18 L12 22 L2 18z" fill="#f3d04a" stroke="#8a7a2a" stroke-width="0.6"/><path d="M2 9 L12 13 L22 9 M12 13 V22" stroke="#8a7a2a" stroke-width="0.6" fill="none"/><circle cx="12" cy="7" r="6" fill="#5a8fd0" stroke="#2a4a78" stroke-width="0.6"/><rect x="15" y="15" width="8" height="8" rx="1" fill="#d4a829"/><circle cx="19.0" cy="19.0" r="2.24" fill="none" stroke="#fff" stroke-width="1.3" stroke-dasharray="1.2 0.8"/></svg><svg class="a" style="left:14.5px;top:234.5px;" width="23" height="23" viewBox="0 0 24 24"><path d="M3 5 L8 18 L13 6 L19 4" fill="none" stroke="#333" stroke-width="1.2"/><circle cx="3" cy="5" r="2" fill="#fff" stroke="#333"/><circle cx="8" cy="18" r="2" fill="#fff" stroke="#333"/><circle cx="13" cy="6" r="2" fill="#fff" stroke="#333"/><circle cx="19" cy="4" r="2" fill="#fff" stroke="#333"/><rect x="15" y="15" width="8" height="8" rx="1" fill="#d4a829"/><circle cx="19.0" cy="19.0" r="2.24" fill="none" stroke="#fff" stroke-width="1.3" stroke-dasharray="1.2 0.8"/></svg><svg class="a" style="left:14.5px;top:266.5px;" width="23" height="23" viewBox="0 0 24 24"><path d="M2 22 Q4 10 20 3 Q18 14 6 18z" fill="#c8d8ea" stroke="#2a4a78" stroke-width="0.9"/><path d="M3 21 Q10 12 19 4" stroke="#2a4a78" stroke-width="0.7" fill="none"/><rect x="15" y="15" width="8" height="8" rx="1" fill="#d4a829"/><circle cx="19.0" cy="19.0" r="2.24" fill="none" stroke="#fff" stroke-width="1.3" stroke-dasharray="1.2 0.8"/></svg><svg class="a" style="left:14.5px;top:298.5px;" width="23" height="23" viewBox="0 0 24 24"><rect x="3" y="6" width="16" height="10" fill="#5a8fd0" stroke="#2a4a78"/><path d="M5 3v3M8 3v3M11 3v3M14 3v3M17 3v3M5 16v3M8 16v3M11 16v3M14 16v3M17 16v3" stroke="#2a4a78" stroke-width="0.9"/><rect x="15" y="15" width="8" height="8" rx="1" fill="#d4a829"/><circle cx="19.0" cy="19.0" r="2.24" fill="none" stroke="#fff" stroke-width="1.3" stroke-dasharray="1.2 0.8"/></svg><div class="a " style="left:16px;top:330px;width:22px;height:1px;background:#cfcfcf"></div><svg class="a" style="left:14.5px;top:338.5px;" width="23" height="23" viewBox="0 0 24 24"><rect x="2" y="2" width="19" height="19" fill="#b8cde6" stroke="#4a6a98"/><path d="M5 5 L10 17 L17 5" fill="none" stroke="#333" stroke-width="1"/><circle cx="10" cy="17" r="1.6" fill="#fff" stroke="#333" stroke-width="0.8"/><rect x="15" y="15" width="8" height="8" rx="1" fill="#d4a829"/><circle cx="19.0" cy="19.0" r="2.24" fill="none" stroke="#fff" stroke-width="1.3" stroke-dasharray="1.2 0.8"/></svg><div class="a " style="left:16px;top:369px;width:22px;height:1px;background:#cfcfcf"></div><svg class="a" style="left:19px;top:381px" width="21" height="6" fill="#bdbdbd"><rect x="0" y="0" width="1.3" height="1.3"/><rect x="0" y="3" width="1.3" height="1.3"/><rect x="3" y="0" width="1.3" height="1.3"/><rect x="3" y="3" width="1.3" height="1.3"/><rect x="6" y="0" width="1.3" height="1.3"/><rect x="6" y="3" width="1.3" height="1.3"/><rect x="9" y="0" width="1.3" height="1.3"/><rect x="9" y="3" width="1.3" height="1.3"/><rect x="12" y="0" width="1.3" height="1.3"/><rect x="12" y="3" width="1.3" height="1.3"/><rect x="15" y="0" width="1.3" height="1.3"/><rect x="15" y="3" width="1.3" height="1.3"/><rect x="18" y="0" width="1.3" height="1.3"/><rect x="18" y="3" width="1.3" height="1.3"/></svg><svg class="a" style="left:9.5px;top:391.5px;" width="23" height="23" viewBox="0 0 24 24"><path d="M3 5 L8 18 L13 6 L19 4" fill="none" stroke="#333" stroke-width="1.2"/><circle cx="3" cy="5" r="2" fill="#fff" stroke="#333"/><circle cx="8" cy="18" r="2" fill="#fff" stroke="#333"/><circle cx="13" cy="6" r="2" fill="#fff" stroke="#333"/><circle cx="19" cy="4" r="2" fill="#fff" stroke="#333"/><rect x="14" y="14" width="9" height="9" rx="1.5" fill="#5b9e4d"/><path d="M15.8 18.5h5.4M18.5 15.8v5.4" stroke="#fff" stroke-width="2"/></svg><svg class="a" style="left:9.5px;top:424.5px;" width="23" height="23" viewBox="0 0 24 24"><rect x="2" y="2" width="18" height="18" fill="#5a8fd0"/><path d="M2 2h6v6H2zM14 2h6v6h-6zM8 8h6v6H8zM2 14h6v6H2zM14 14h6v6h-6z" fill="#1f3f6a"/><rect x="14" y="14" width="9" height="9" rx="1.5" fill="#5b9e4d"/><path d="M15.8 18.5h5.4M18.5 15.8v5.4" stroke="#fff" stroke-width="2"/></svg><svg class="a" style="left:9.5px;top:456.5px;" width="23" height="23" viewBox="0 0 24 24"><rect x="2" y="2" width="18" height="18" fill="#c8d8ea" stroke="#2a4a78"/><path d="M2 2 L11 11 L20 2 M2 11h18 M11 11v9 M2 20 L11 11" stroke="#2a4a78" fill="none"/><rect x="14" y="14" width="9" height="9" rx="1.5" fill="#5b9e4d"/><path d="M15.8 18.5h5.4M18.5 15.8v5.4" stroke="#fff" stroke-width="2"/></svg><svg class="a" style="left:9.5px;top:488.5px;" width="23" height="23" viewBox="0 0 24 24"><path d="M9 3 C13 3 13 9 9 9 C6 9 6 6 8 5 C10 8 8 14 4 17" fill="#3a5a8a" stroke="#2a4a78" stroke-width="1.4"/><rect x="14" y="14" width="9" height="9" rx="1.5" fill="#5b9e4d"/><path d="M15.8 18.5h5.4M18.5 15.8v5.4" stroke="#fff" stroke-width="2"/></svg><svg class="a" style="left:9.5px;top:520.5px;" width="23" height="23" viewBox="0 0 24 24"><path d="M2 22 Q4 10 20 3 Q18 14 6 18z" fill="#c8d8ea" stroke="#2a4a78" stroke-width="0.9"/><path d="M3 21 Q10 12 19 4" stroke="#2a4a78" stroke-width="0.7" fill="none"/><rect x="14" y="14" width="9" height="9" rx="1.5" fill="#5b9e4d"/><path d="M15.8 18.5h5.4M18.5 15.8v5.4" stroke="#fff" stroke-width="2"/></svg><svg class="a" style="left:9.5px;top:553.5px;" width="23" height="23" viewBox="0 0 24 24"><rect x="2" y="2" width="19" height="19" fill="#b8cde6" stroke="#4a6a98"/><path d="M5 5 L10 17 L17 5" fill="none" stroke="#333" stroke-width="1"/><rect x="14" y="14" width="9" height="9" rx="1.5" fill="#5b9e4d"/><path d="M15.8 18.5h5.4M18.5 15.8v5.4" stroke="#fff" stroke-width="2"/></svg><svg class="a" style="left:9.5px;top:584.5px;" width="23" height="23" viewBox="0 0 24 24"><path d="M3 6 Q3 2 10 2 Q19 2 19 8 Q19 14 15 16 L15 20 L11 20 L11 16 Q4 16 3 10z" fill="#3a6aa8" stroke="#1f3f6a"/><rect x="14" y="14" width="9" height="9" rx="1.5" fill="#5b9e4d"/><path d="M15.8 18.5h5.4M18.5 15.8v5.4" stroke="#fff" stroke-width="2"/></svg><div class="a" style="left:39px;top:596px;width:0;height:0;border-left:4px solid transparent;border-right:4px solid transparent;border-top:4px solid #555"></div><svg class="a" style="left:9.5px;top:616.5px;" width="23" height="23" viewBox="0 0 24 24"><circle cx="11" cy="11" r="9.5" fill="#c8d8ea" stroke="#2a4a78"/><path d="M5 7h5v4H5zM12 5h5v3h-5zM8 13h6v4H8z" fill="#2a4a78"/><rect x="14" y="14" width="9" height="9" rx="1.5" fill="#5b9e4d"/><path d="M15.8 18.5h5.4M18.5 15.8v5.4" stroke="#fff" stroke-width="2"/></svg><div class="a" style="left:39px;top:628px;width:0;height:0;border-left:4px solid transparent;border-right:4px solid transparent;border-top:4px solid #555"></div><svg class="a" style="left:9.5px;top:648.5px;" width="23" height="23" viewBox="0 0 24 24"><circle cx="11" cy="11" r="9.5" fill="#2a4a78"/><path d="M2 8h18M2 14h18" stroke="#fff" stroke-width="1.5"/><path d="M11 2 Q5 11 11 20 Q17 11 11 2" fill="none" stroke="#fff" stroke-width="1.3"/><rect x="14" y="14" width="9" height="9" rx="1.5" fill="#5b9e4d"/><path d="M15.8 18.5h5.4M18.5 15.8v5.4" stroke="#fff" stroke-width="2"/></svg><svg class="a" style="left:9.5px;top:680.5px;" width="23" height="23" viewBox="0 0 24 24"><circle cx="11" cy="11" r="9.5" fill="#c8d8ea" stroke="#4a6a98"/><path d="M4 6 L9 16 L15 6" fill="none" stroke="#333" stroke-width="1"/><rect x="14" y="14" width="9" height="9" rx="1.5" fill="#5b9e4d"/><path d="M15.8 18.5h5.4M18.5 15.8v5.4" stroke="#fff" stroke-width="2"/></svg><div class="a" style="left:39px;top:692px;width:0;height:0;border-left:4px solid transparent;border-right:4px solid transparent;border-top:4px solid #555"></div><svg class="a" style="left:9.5px;top:712.5px;" width="23" height="23" viewBox="0 0 24 24"><path d="M3 5 L8 18 L13 6 L19 4" fill="none" stroke="#333" stroke-width="1.2"/><circle cx="3" cy="5" r="2" fill="#fff" stroke="#333"/><circle cx="8" cy="18" r="2" fill="#fff" stroke="#333"/><circle cx="13" cy="6" r="2" fill="#fff" stroke="#333"/><circle cx="19" cy="4" r="2" fill="#fff" stroke="#333"/><rect x="15" y="15" width="8" height="8" rx="1" fill="#d4a829"/><circle cx="19.0" cy="19.0" r="2.24" fill="none" stroke="#fff" stroke-width="1.3" stroke-dasharray="1.2 0.8"/></svg><div class="a" style="left:39px;top:724px;width:0;height:0;border-left:4px solid transparent;border-right:4px solid transparent;border-top:4px solid #555"></div><div class="t" style="left:57px;top:158.0px;font-size:13px;color:#222;letter-spacing:0.68px;">Layers</div><svg class="a" style="left:407px;top:158px;" width="26" height="13" viewBox="0 0 26 13"><rect x="0.5" y="0.5" width="11" height="11" rx="2.5" fill="none" stroke="#666"/><rect x="3" y="3" width="4.5" height="4.5" fill="none" stroke="#666"/><rect x="4.5" y="4.5" width="4.5" height="4.5" fill="#fff" stroke="#666"/><rect x="14.5" y="0.5" width="11" height="11" rx="2.5" fill="none" stroke="#666"/><path d="M17 3 L23 9 M23 3 L17 9" stroke="#555" stroke-width="1.8"/></svg><div class="a btnp" style="left:57px;top:178px;width:24px;height:23px;background:#dedede"></div>
    <svg class="a" style="left:58px;top:178px" width="20" height="22" viewBox="0 0 20 22"><path d="M2 12 L9 9 L12 16 L5 19z" fill="#e84a4a"/><path d="M3 10 L9 7 L11 12 L5 14z" fill="#5a8fd0"/><path d="M4 8 L9 5 L10 9 L5 11z" fill="#f2d04a"/><path d="M10 11 L17 3" stroke="#c89a3a" stroke-width="2.2"/></svg>
    <svg class="a" style="left:84px;top:178px;" width="22" height="22" viewBox="0 0 22 22"><rect x="3" y="7" width="10" height="11" fill="#fff" stroke="#666"/><rect x="6" y="4" width="10" height="11" fill="#fff" stroke="#666"/><path d="M10 2v10" stroke="#4a6a98" stroke-width="1.5"/><circle cx="16" cy="17" r="4" fill="#5aa04a"/><path d="M14 17h4M16 15v4" stroke="#fff" stroke-width="1.3"/></svg><svg class="a" style="left:108px;top:180px;" width="24" height="18" viewBox="0 0 24 18"><path d="M1 8 Q10 0 19 8 Q10 15 1 8z" fill="#fff" stroke="#999" stroke-width="0.8"/><circle cx="10" cy="8" r="3.6" fill="#5a8ad0"/><circle cx="10.5" cy="7" r="1.2" fill="#111"/><path d="M17 13l3 3 3-3z" fill="#555"/></svg><svg class="a" style="left:134px;top:178px;" width="20" height="22" viewBox="0 0 20 22"><path d="M2 3h16l-6 8v9l-4-2v-7z" fill="#5a8fd0" stroke="#3a6aa8" stroke-width="0.7"/><path d="M2 3h16" stroke="#f2d04a" stroke-width="2.5"/></svg><svg class="a" style="left:160px;top:178px;" width="30" height="22" viewBox="0 0 30 22"><text x="0" y="15" font-size="18" fill="#5a2a7a" font-family="Liberation Serif">ε</text><path d="M9 12h8v8h-2v-4h-4v4H9z" fill="#aaa"/><path d="M22 9l4 4 4-4z" fill="#555"/></svg><svg class="a" style="left:196px;top:178px;" width="22" height="22" viewBox="0 0 22 22"><rect x="2" y="5" width="8" height="13" fill="#fff" stroke="#888" stroke-dasharray="1.5 1"/><path d="M4 8h4M4 12h4" stroke="#f2a020" stroke-width="1.6"/><path d="M13 2v12h-3l5 6 5-6h-3V2z" fill="#4a7ab8"/></svg><svg class="a" style="left:221px;top:178px;" width="22" height="22" viewBox="0 0 22 22"><rect x="2" y="5" width="8" height="13" fill="#fff" stroke="#888" stroke-dasharray="1.5 1"/><path d="M4 8h4M4 12h4" stroke="#f2a020" stroke-width="1.6"/><path d="M13 20V8h-3l5-6 5 6h-3v12z" fill="#4a7ab8"/></svg><svg class="a" style="left:246px;top:178px;" width="22" height="22" viewBox="0 0 22 22"><rect x="2" y="3" width="14" height="14" fill="#fff" stroke="#666"/><rect x="11" y="13" width="9" height="6" rx="1" fill="#e03030"/><path d="M13 16h5" stroke="#fff" stroke-width="1.4"/></svg><div class="a white" style="left:53px;top:205px;width:381px;height:816px;border-color:#b4b4b4"></div><div class="a " style="left:55px;top:206px;width:378px;height:19px;background:#308cc6"></div><div class="a chk" style="left:77px;top:208px"><svg class="a" style="left:1px;top:1px" width="12" height="12" viewBox="0 0 12 12"><path d="M2.2 6.2 L4.8 9.6 L9.8 1.8" fill="none" stroke="#111" stroke-width="1.6"/></svg></div><div class="t" style="left:119px;top:207.5px;font-size:14px;font-weight:bold;color:#fff;letter-spacing:0.52px;border-bottom:1px solid #fff;padding-bottom:0;line-height:15px">amenity_fast_food</div><div class="a chk" style="left:77px;top:227px"><svg class="a" style="left:1px;top:1px" width="12" height="12" viewBox="0 0 12 12"><path d="M2.2 6.2 L4.8 9.6 L9.8 1.8" fill="none" stroke="#111" stroke-width="1.6"/></svg></div><div class="t" style="left:118px;top:227.1px;font-size:14px;color:#111;font-weight:bold;letter-spacing:0.56px;">highway</div><div class="a chk" style="left:77px;top:246px"><svg class="a" style="left:1px;top:1px" width="12" height="12" viewBox="0 0 12 12"><path d="M2.2 6.2 L4.8 9.6 L9.8 1.8" fill="none" stroke="#111" stroke-width="1.6"/></svg></div><div class="t" style="left:119px;top:246.1px;font-size:14px;color:#111;font-weight:bold;letter-spacing:0.56px;">Pampanga_SanFernando</div><div class="a chk" style="left:77px;top:265px"><svg class="a" style="left:1px;top:1px" width="12" height="12" viewBox="0 0 12 12"><path d="M2.2 6.2 L4.8 9.6 L9.8 1.8" fill="none" stroke="#111" stroke-width="1.6"/></svg></div><div class="t" style="left:119px;top:265.1px;font-size:14px;color:#111;font-weight:bold;letter-spacing:0.56px;">Pampanga_province</div><svg class="a" style="left:99px;top:209px;" width="13" height="13" viewBox="0 0 13 13"><circle cx="6.5" cy="6.5" r="4.3" fill="#4fa858" stroke="#3a8a48" stroke-width="0.8"/></svg><div class="a " style="left:97px;top:234px;width:14px;height:2px;background:#222"></div><div class="a " style="left:97px;top:246px;width:16px;height:15px;background:#9a7fb8;border:1px solid #6a5a80"></div><div class="a " style="left:97px;top:265px;width:16px;height:15px;background:#bfd150;border:1px solid #7a8a40"></div><svg class="a" style="left:410px;top:207px;" width="19" height="17" viewBox="0 0 19 17"><rect x="0" y="0" width="19" height="17" fill="#efefef"/><rect x="3" y="5" width="13" height="7" fill="#fff" stroke="#7a8a9a" stroke-width="1"/><path d="M5 3v2M8 3v2M11 3v2M14 3v2M5 12v2M8 12v2M11 12v2M14 12v2" stroke="#7a8a9a" stroke-width="0.9"/></svg><svg class="a" style="left:410px;top:226px;" width="19" height="17" viewBox="0 0 19 17"><rect x="0" y="0" width="19" height="17" fill="#efefef"/><rect x="3" y="5" width="13" height="7" fill="#fff" stroke="#777" stroke-width="1"/><path d="M5 3v2M8 3v2M11 3v2M14 3v2M5 12v2M8 12v2M11 12v2M14 12v2" stroke="#777" stroke-width="0.9"/></svg><div class="a " style="left:54px;top:1022px;width:380px;height:1px;background:#c8c8c8"></div><div class="a tab" style="left:54px;top:1022px;width:67px;height:26px;background:#f7f7f7;border-radius:0 0 3px 3px;border:1px solid #c2c2c2;border-top:none"></div><div class="a " style="left:121px;top:1022px;width:77px;height:24px;background:#dcdcdc;border:1px solid #c2c2c2;border-top:none;border-radius:0 0 3px 3px"></div><div class="t" style="left:65px;top:1029.0px;font-size:13px;color:#222;letter-spacing:0.68px;">Layers</div><div class="t" style="left:132px;top:1028.0px;font-size:13px;color:#222;letter-spacing:0.68px;">Browser</div><div class="a " style="left:440px;top:155px;width:1030px;height:895px;border:1px solid #a9a9a9;background:transparent;pointer-events:none"></div><div class="a " style="left:436px;top:154px;width:4px;height:896px;background:#efefef"></div><svg class="a" style="left:437px;top:596px" width="6" height="18" fill="#bdbdbd"><rect x="0" y="0" width="1.3" height="1.3"/><rect x="0" y="3" width="1.3" height="1.3"/><rect x="0" y="6" width="1.3" height="1.3"/><rect x="0" y="9" width="1.3" height="1.3"/><rect x="0" y="12" width="1.3" height="1.3"/><rect x="0" y="15" width="1.3" height="1.3"/></svg><svg class="a" style="left:1472px;top:596px" width="6" height="18" fill="#bdbdbd"><rect x="0" y="0" width="1.3" height="1.3"/><rect x="0" y="3" width="1.3" height="1.3"/><rect x="0" y="6" width="1.3" height="1.3"/><rect x="0" y="9" width="1.3" height="1.3"/><rect x="0" y="12" width="1.3" height="1.3"/><rect x="0" y="15" width="1.3" height="1.3"/></svg><div class="t" style="left:1480px;top:158.0px;font-size:13px;color:#222;letter-spacing:0.68px;">Layer Styling</div><svg class="a" style="left:1893px;top:158px;" width="26" height="13" viewBox="0 0 26 13"><rect x="0.5" y="0.5" width="11" height="11" rx="2.5" fill="none" stroke="#666"/><rect x="3" y="3" width="4.5" height="4.5" fill="none" stroke="#666"/><rect x="4.5" y="4.5" width="4.5" height="4.5" fill="#fff" stroke="#666"/><rect x="14.5" y="0.5" width="11" height="11" rx="2.5" fill="none" stroke="#666"/><path d="M17 3 L23 9 M23 3 L17 9" stroke="#555" stroke-width="1.8"/></svg><div class="a combo" style="left:1479px;top:177px;width:439px;height:25px;"></div><svg class="a" style="left:1487px;top:182px;" width="14" height="14" viewBox="0 0 14 14"><circle cx="3" cy="11" r="1.3" fill="none" stroke="#555" stroke-width="0.8"/><circle cx="5" cy="4.5" r="1.3" fill="none" stroke="#555" stroke-width="0.8"/><circle cx="11" cy="2" r="1.3" fill="none" stroke="#555" stroke-width="0.8"/></svg><div class="t" style="left:1504px;top:183.0px;font-size:13px;color:#1a1a1a;letter-spacing:0.7px;">amenity_fast_food</div><div class="a" style="left:1901px;top:187px;width:0;height:0;border-left:4px solid transparent;border-right:4px solid transparent;border-top:4px solid #333"></div><svg class="a" style="left:1484px;top:208px;" width="28" height="28" viewBox="0 0 28 28"><path d="M3 17 L12 12 L15 20 L7 24z" fill="#d85a6a"/><path d="M4 14 L12 9 L14 14 L6 18z" fill="#6a9ad8"/><path d="M5 11 L12 6 L13 10 L7 14z" fill="#d8e07a"/><path d="M9 14 L15 11 L17 19 L11 22z" fill="#a89a6a"/><path d="M14 13 L22 5" stroke="#a8905a" stroke-width="2.4"/></svg><div class="a " style="left:1479px;top:240px;width:38px;height:778px;background:#5f5f5f"></div><svg class="a" style="left:1484px;top:248px;" width="28" height="16" viewBox="0 0 28 16"><path d="M1 8 L5 2 H23 V14 H5z" fill="#f7dc4a" stroke="#b8942a"/><text x="6" y="11.5" font-size="8.5" font-weight="bold" fill="#222" font-family="Liberation Sans">abc</text></svg><svg class="a" style="left:1484px;top:279px;" width="28" height="16" viewBox="0 0 28 16"><rect x="1" y="2" width="22" height="12" rx="6" fill="#e8eef8"/><text x="3" y="11.5" font-size="10" font-weight="bold" fill="#333" font-family="Liberation Sans">abc</text></svg><svg class="a" style="left:1483px;top:308px;" width="24" height="24" viewBox="0 0 24 24"><path d="M12 2 L21 7 L12 12 L3 7z" fill="#e85a5a"/><path d="M3 7 L12 12 V22 L3 17z" fill="#8ad04a"/><path d="M21 7 L12 12 V22 L21 17z" fill="#f2d04a"/></svg><svg class="a" style="left:1483px;top:340px;" width="24" height="24" viewBox="0 0 24 24"><rect x="8" y="2" width="8" height="6" fill="#e85a5a"/><path d="M12 8v4M6 12h12M6 12v4M18 12v4" stroke="#c89a3a" stroke-width="1.3" fill="none"/><rect x="2" y="15" width="8" height="7" fill="#f2d04a"/><rect x="14" y="15" width="8" height="7" fill="#8ab8e8"/></svg><svg class="a" style="left:1483px;top:372px;" width="24" height="24" viewBox="0 0 24 24"><path d="M4 10 A7 7 0 0 1 16 5 L17 2 L19 9 L12 8 L14 7 A5 5 0 0 0 7 10z" fill="#4aa84a"/><path d="M20 14 A7 7 0 0 1 8 19 L7 22 L5 15 L12 16 L10 17 A5 5 0 0 0 17 14z" fill="#e8803a"/></svg><div class="a combo" style="left:1520px;top:208px;width:398px;height:25px;"></div><svg class="a" style="left:1526px;top:212px;" width="16" height="16" viewBox="0 0 16 16"><rect x="1" y="1" width="11" height="3.5" fill="#22bb44" stroke="#118833" stroke-width="0.6"/><rect x="3" y="6.2" width="11" height="3.5" fill="#22bb44" stroke="#118833" stroke-width="0.6"/><rect x="1" y="11.4" width="11" height="3.5" fill="#22bb44" stroke="#118833" stroke-width="0.6"/></svg><div class="t" style="left:1545px;top:214.0px;font-size:13px;color:#1a1a1a;letter-spacing:0.7px;">Single Symbol</div><div class="a" style="left:1901px;top:218px;width:0;height:0;border-left:4px solid transparent;border-right:4px solid transparent;border-top:4px solid #333"></div><div class="a " style="left:1570px;top:254px;width:1px;height:99px;background:#9a9a9a"></div><div class="a " style="left:1520px;top:304px;width:99px;height:1px;background:#9a9a9a"></div><svg class="a" style="left:1564px;top:298px;" width="13" height="13" viewBox="0 0 13 13"><circle cx="6.5" cy="6.5" r="5" fill="#55b04b" stroke="#3a8237" stroke-width="1"/></svg><div class="a white" style="left:1626px;top:244px;width:224px;height:119px;border-color:#b0b0b0"></div><div class="a " style="left:1627px;top:245px;width:222px;height:19px;background:#308cc6"></div><svg class="a" style="left:1632px;top:250px;" width="10" height="8" viewBox="0 0 10 8"><path d="M1 1 L9 1 L5 6z" fill="#222"/></svg><svg class="a" style="left:1651px;top:248px;" width="14" height="14" viewBox="0 0 14 14"><circle cx="7" cy="7" r="4.8" fill="#4fa858" stroke="#3a8a48" stroke-width="0.9"/></svg><div class="t" style="left:1671px;top:247.1px;font-size:14px;color:#fff;font-weight:bold;letter-spacing:0.5px;">Marker</div><svg class="a" style="left:1671px;top:266px;" width="14" height="14" viewBox="0 0 14 14"><circle cx="7" cy="7" r="5" fill="#55b04b" stroke="#3a8237" stroke-width="1"/></svg><div class="t" style="left:1692px;top:267.0px;font-size:13px;color:#1a1a1a;letter-spacing:0.7px;">Simple Marker</div><div class="a btn" style="left:1856px;top:238px;width:27px;height:25px;background:linear-gradient(#f8f8f8,#ececec)"></div><svg class="a" style="left:1858px;top:239px;" width="24" height="24" viewBox="0 0 24 24"><path d="M9 3h6v6h6v6h-6v6H9v-6H3V9h6z" fill="#fff" stroke="#2a8a3a" stroke-width="1.4" transform="scale(0.9) translate(1.5,1)"/></svg><div class="a btn" style="left:1890px;top:238px;width:27px;height:25px;background:linear-gradient(#f8f8f8,#ececec)"></div><svg class="a" style="left:1892px;top:239px;" width="24" height="24" viewBox="0 0 24 24"><path d="M4 17 L12 7 L20 17z" fill="#dedede"/></svg><div class="a btn" style="left:1856px;top:266px;width:27px;height:25px;background:linear-gradient(#f8f8f8,#ececec)"></div><svg class="a" style="left:1858px;top:267px;" width="24" height="24" viewBox="0 0 24 24"><rect x="5" y="10" width="14" height="4" fill="#fff" stroke="#e0b0b0"/></svg><div class="a btn" style="left:1890px;top:266px;width:27px;height:25px;background:linear-gradient(#f8f8f8,#ececec)"></div><svg class="a" style="left:1892px;top:267px;" width="24" height="24" viewBox="0 0 24 24"><path d="M4 7 L12 17 L20 7z" fill="#dedede"/></svg><div class="a btn" style="left:1856px;top:294px;width:27px;height:25px;background:linear-gradient(#f8f8f8,#ececec)"></div><svg class="a" style="left:1858px;top:295px;" width="24" height="24" viewBox="0 0 24 24"><rect x="5" y="5" width="12" height="12" fill="none" stroke="#d8d8d8" stroke-width="1.5"/><rect x="12" y="12" width="7" height="7" fill="#eee" stroke="#d8d8d8"/></svg><div class="a btn" style="left:1890px;top:294px;width:27px;height:25px;background:linear-gradient(#f8f8f8,#ececec)"></div><svg class="a" style="left:1892px;top:295px;" width="24" height="24" viewBox="0 0 24 24"><rect x="6" y="11" width="12" height="9" fill="#e4e0d8"/><path d="M9 11 V7 A3 3 0 0 1 15 7" fill="none" stroke="#e0dcd4" stroke-width="1.8"/></svg><div class="a " style="left:1520px;top:373px;width:396px;height:1px;background:#c4c4c4"></div><div class="t" style="left:1520px;top:390.0px;font-size:13px;color:#1a1a1a;letter-spacing:0.7px;">Unit</div><div class="a combo" style="left:1570px;top:385px;width:338px;height:24px;"></div><div class="t" style="left:1575px;top:390.0px;font-size:13px;color:#1a1a1a;letter-spacing:0.7px;">Millimeters</div><div class="a" style="left:1893px;top:396px;width:0;height:0;border-left:4px solid transparent;border-right:4px solid transparent;border-top:4px solid #333"></div><div class="t" style="left:1520px;top:415.0px;font-size:13px;color:#1a1a1a;letter-spacing:0.7px;">Opacity</div><div class="a " style="left:1571px;top:418px;width:230px;height:5px;background:#3a9ae0;border:1px solid #1f6aa8;border-radius:3px"></div><div class="a " style="left:1794px;top:414px;width:13px;height:14px;background:linear-gradient(#fff,#eee);border:1px solid #9a9a9a;border-radius:3px"></div><div class="a spin" style="left:1809px;top:411px;width:99px;height:22px;"></div><div class="t" style="left:1814px;top:415.0px;font-size:13px;color:#1a1a1a;letter-spacing:0.7px;">100.0 %</div><div class="a" style="left:1894px;top:412px;width:1px;height:20px;background:#c8c8c8"></div><svg class="a" style="left:1895px;top:412px" width="14" height="20" viewBox="0 0 14 20"><path d="M3.5 8.0 L7 4.5 L10.5 8.0 z" fill="#444"/><path d="M3.5 12.0 L7 15.5 L10.5 12.0 z" fill="#444"/></svg><div class="t" style="left:1520px;top:442.0px;font-size:13px;color:#1a1a1a;letter-spacing:0.7px;">Color</div><div class="a btn" style="left:1570px;top:434px;width:328px;height:28px;"></div><div class="a " style="left:1575px;top:440px;width:317px;height:16px;background:#54ae4a;border-radius:3px"></div><div class="a btn" style="left:1897px;top:434px;width:12px;height:28px;"></div><div class="a" style="left:1899px;top:447px;width:0;height:0;border-left:4px solid transparent;border-right:4px solid transparent;border-top:4px solid #333"></div><div class="t" style="left:1520px;top:471.0px;font-size:13px;color:#1a1a1a;letter-spacing:0.7px;">Size</div><div class="a spin" style="left:1581px;top:468px;width:290px;height:24px;"></div><div class="t" style="left:1586px;top:474.0px;font-size:13px;color:#1a1a1a;letter-spacing:0.7px;">2.60000</div><div class="a" style="left:1856px;top:469px;width:1px;height:22px;background:#c8c8c8"></div><svg class="a" style="left:1857px;top:469px" width="14" height="22" viewBox="0 0 14 22"><path d="M3.5 9.0 L7 5.5 L10.5 9.0 z" fill="#444"/><path d="M3.5 13.0 L7 16.5 L10.5 13.0 z" fill="#444"/></svg><svg class="a" style="left:1880px;top:471px;" width="24" height="18" viewBox="0 0 24 18"><path d="M1 8 L6 2 H20 V14 H6z" fill="#fff" stroke="#444" stroke-width="1.2"/><path d="M8 5h10M8 8h10M8 11h10" stroke="#444" stroke-width="1.1"/><path d="M17 13 L23 13 L20 17z" fill="#444"/></svg><div class="t" style="left:1520px;top:506.0px;font-size:13px;color:#1a1a1a;letter-spacing:0.7px;">Rotation</div><div class="a spin" style="left:1581px;top:500px;width:290px;height:24px;"></div><div class="t" style="left:1586px;top:506.0px;font-size:13px;color:#1a1a1a;letter-spacing:0.7px;">0.00 °</div><div class="a" style="left:1856px;top:501px;width:1px;height:22px;background:#c8c8c8"></div><svg class="a" style="left:1857px;top:501px" width="14" height="22" viewBox="0 0 14 22"><path d="M3.5 9.0 L7 5.5 L10.5 9.0 z" fill="#444"/><path d="M3.5 13.0 L7 16.5 L10.5 13.0 z" fill="#444"/></svg><svg class="a" style="left:1880px;top:503px;" width="24" height="18" viewBox="0 0 24 18"><path d="M1 8 L6 2 H20 V14 H6z" fill="#fff" stroke="#444" stroke-width="1.2"/><path d="M8 5h10M8 8h10M8 11h10" stroke="#444" stroke-width="1.1"/><path d="M17 13 L23 13 L20 17z" fill="#444"/></svg><div class="a " style="left:1520px;top:529px;width:389px;height:1px;background:#b4b4b4"></div><div class="a spin" style="left:1520px;top:536px;width:357px;height:25px;"></div><svg class="a" style="left:1528px;top:540px;" width="16" height="16" viewBox="0 0 16 16"><circle cx="6.5" cy="6.5" r="4.5" fill="none" stroke="#666" stroke-width="1.2"/><path d="M10 10 L14 14" stroke="#666" stroke-width="1.4"/></svg><div class="t" style="left:1549px;top:542.0px;font-size:13px;color:#1a1a1a;letter-spacing:0.7px;">Favorites</div><svg class="a" style="left:1834px;top:541px;" width="16" height="14" viewBox="0 0 16 14"><path d="M5 2 H15 V12 H5 L1 7z" fill="#888"/><path d="M7.5 4.5 L12 9.5 M12 4.5 L7.5 9.5" stroke="#fff" stroke-width="1.3"/></svg><div class="a " style="left:1857px;top:537px;width:1px;height:23px;background:#c8c8c8"></div><div class="a" style="left:1863px;top:546px;width:0;height:0;border-left:4px solid transparent;border-right:4px solid transparent;border-top:4px solid #333"></div><svg class="a" style="left:1887px;top:538px;" width="22" height="22" viewBox="0 0 22 22"><circle cx="5" cy="5" r="3.6" fill="#d9692c"/><path d="M12 7 L18 1" stroke="#4f86c6" stroke-width="2"/><rect x="1" y="10" width="7" height="7" fill="#7eb07a"/><text x="10.5" y="17" font-size="9" font-family="Liberation Sans" fill="#333">a</text></svg><div class="a white" style="left:1520px;top:565px;width:389px;height:351px;border-color:#b4b4b4"></div><svg class="a" style="left:1563px;top:603px;" width="20" height="20" viewBox="0 0 20 20"><circle cx="10" cy="10" r="6.5" fill="#000"/></svg><div class="t" style="left:1523px;top:656.8px;font-size:12px;color:#1a1a1a;letter-spacing:0.8px;width:100px;text-align:center;">dot  black</div><svg class="a" style="left:1664px;top:603px;" width="20" height="20" viewBox="0 0 20 20"><circle cx="10" cy="10" r="7.3" fill="#fff" stroke="#000" stroke-width="1.5"/></svg><div class="t" style="left:1624px;top:656.8px;font-size:12px;color:#1a1a1a;letter-spacing:0.8px;width:100px;text-align:center;">dot  white</div><svg class="a" style="left:1765px;top:603px;" width="20" height="20" viewBox="0 0 20 20"><circle cx="10" cy="10" r="7.8" fill="#4a7bbd" stroke="#2f5a90" stroke-width="0.8"/></svg><div class="t" style="left:1725px;top:656.8px;font-size:12px;color:#1a1a1a;letter-spacing:0.8px;width:100px;text-align:center;">dot blue</div><svg class="a" style="left:1563px;top:707px;" width="20" height="20" viewBox="0 0 20 20"><circle cx="10" cy="10" r="7.8" fill="#4a9e64" stroke="#2f7a48" stroke-width="0.8"/></svg><div class="a" style="left:1541px;top:759px;width:66px;height:15px;background:#308cc6"></div><div class="t" style="left:1533px;top:760.8px;font-size:12px;color:#fff;letter-spacing:0.8px;width:80px;text-align:center;">dot green</div><svg class="a" style="left:1664px;top:707px;" width="20" height="20" viewBox="0 0 20 20"><circle cx="10" cy="10" r="7.8" fill="#d9202a" stroke="#9a1a20" stroke-width="0.8"/></svg><div class="t" style="left:1624px;top:760.8px;font-size:12px;color:#1a1a1a;letter-spacing:0.8px;width:100px;text-align:center;">dot red</div><svg class="a" style="left:1759px;top:701px;overflow:visible" width="32" height="32" viewBox="0 0 32 32"><defs><filter id="ds" x="-80%" y="-80%" width="260%" height="260%"><feGaussianBlur stdDeviation="3"/></filter></defs><circle cx="20" cy="21" r="9" fill="#222" opacity="0.6" filter="url(#ds)"/><polygon points="16.0,3.0 19.1,11.8 28.4,12.0 20.9,17.6 23.6,26.5 16.0,21.2 8.4,26.5 11.1,17.6 3.6,12.0 12.9,11.8" fill="#c00000"/><polygon points="16.0,29.5 12.9,20.7 3.6,20.5 11.1,14.9 8.4,6.0 16.0,11.3 23.6,6.0 20.9,14.9 28.4,20.5 19.1,20.7" fill="#ff0000"/></svg><div class="t" style="left:1725px;top:760.8px;font-size:12px;color:#1a1a1a;letter-spacing:0.8px;width:100px;text-align:center;">effect drop</div><div class="t" style="left:1725px;top:775.8px;font-size:12px;color:#1a1a1a;letter-spacing:0.8px;width:100px;text-align:center;">shadow</div><svg class="a" style="left:1563px;top:826px;" width="20" height="20" viewBox="0 0 20 20"><rect x="0" y="0" width="20" height="20" rx="1.5" fill="#4a7bbd"/><circle cx="11" cy="4" r="1.6" fill="#fff"/><path d="M7 7 L11 7 L11 12 L15 12 L16 17" fill="none" stroke="#fff" stroke-width="1.8"/><path d="M8 9 A5 5 0 1 0 13 16" fill="none" stroke="#fff" stroke-width="1.6"/></svg><div class="t" style="left:1523px;top:879.8px;font-size:12px;color:#1a1a1a;letter-spacing:0.8px;width:100px;text-align:center;">shield</div><div class="t" style="left:1523px;top:894.8px;font-size:12px;color:#1a1a1a;letter-spacing:0.8px;width:100px;text-align:center;">disability</div><svg class="a" style="left:1664px;top:826px;" width="20" height="20" viewBox="0 0 20 20"><circle cx="10" cy="10" r="9.5" fill="#fff" stroke="#e02020" stroke-width="1.6"/><path d="M10 4.5v11M4.5 10h11" stroke="#e02020" stroke-width="2.6"/></svg><div class="t" style="left:1624px;top:879.8px;font-size:12px;color:#1a1a1a;letter-spacing:0.8px;width:100px;text-align:center;">topo hospital</div><svg class="a" style="left:1765px;top:826px;" width="20" height="20" viewBox="0 0 20 20"><circle cx="10" cy="10" r="6" fill="#fff" stroke="#111" stroke-width="1"/><circle cx="10" cy="10" r="2" fill="#111"/></svg><div class="t" style="left:1725px;top:879.8px;font-size:12px;color:#1a1a1a;letter-spacing:0.8px;width:100px;text-align:center;">topo pop</div><div class="t" style="left:1725px;top:894.8px;font-size:12px;color:#1a1a1a;letter-spacing:0.8px;width:100px;text-align:center;">capital</div><div class="a btnp" style="left:1521px;top:923px;width:23px;height:24px;background:#dcdcdc"></div><svg class="a" style="left:1524px;top:926px;" width="17" height="17" viewBox="0 0 17 17"><rect x="1" y="1" width="15" height="15" fill="#e6f0fa" stroke="#5a8fd0"/><path d="M4 4h2v2H4zM8 4h2v2H8zM12 4h2v2h-2zM4 8h2v2H4zM8 8h2v2H8zM12 8h2v2h-2zM4 12h2v2H4zM8 12h2v2H8zM12 12h2v2h-2z" fill="#5a8fd0"/></svg><svg class="a" style="left:1548px;top:926px;" width="17" height="17" viewBox="0 0 17 17"><rect x="1" y="1" width="15" height="15" fill="#e6f0fa" stroke="#5a8fd0"/><path d="M1 4.5h15M4 7.5h10M4 10.5h10M4 13.5h10" stroke="#5a8fd0" stroke-width="1"/></svg><div class="t" style="left:1574px;top:929.0px;font-size:13px;color:#1a1a1a;letter-spacing:0.7px;">dot green</div><div class="a btn" style="left:1712px;top:923px;width:105px;height:25px;"></div><div class="t" style="left:1716px;top:929.0px;font-size:13px;color:#1a1a1a;letter-spacing:0.68px;">Save Symbol...</div><div class="a btn" style="left:1824px;top:923px;width:85px;height:25px;"></div><div class="t" style="left:1828px;top:929.0px;font-size:13px;color:#1a1a1a;letter-spacing:0.7px;">Advanced</div><div class="a" style="left:1899px;top:934px;width:0;height:0;border-left:3px solid transparent;border-right:3px solid transparent;border-top:3px solid #444"></div><svg class="a" style="left:1523px;top:971px;" width="10" height="14" viewBox="0 0 10 14"><path d="M1 1 L8 7 L1 13z" fill="#222"/></svg><div class="t" style="left:1543px;top:971.1px;font-size:14px;color:#111;font-weight:bold;letter-spacing:0.5px;">Layer Rendering</div><div class="a btn" style="left:1520px;top:994px;width:24px;height:23px;"></div><svg class="a" style="left:1522px;top:995px;" width="20" height="20" viewBox="0 0 20 20"><path d="M8 4 L3 9 L8 14 V11 C12 11 14 12 15 15 C15 10 12 7 8 7z" fill="#e8803a"/></svg><div class="a btn" style="left:1550px;top:994px;width:24px;height:23px;"></div><svg class="a" style="left:1552px;top:995px;" width="20" height="20" viewBox="0 0 20 20"><path d="M12 4 L17 9 L12 14 V11 C8 11 6 12 5 15 C5 10 8 7 12 7z" fill="#4aa84a"/></svg><div class="a chk" style="left:1730px;top:998px"><svg class="a" style="left:1px;top:1px" width="12" height="12" viewBox="0 0 12 12"><path d="M2.2 6.2 L4.8 9.6 L9.8 1.8" fill="none" stroke="#111" stroke-width="1.6"/></svg></div><div class="t" style="left:1750px;top:999.0px;font-size:13px;color:#1a1a1a;letter-spacing:0.7px;">Live update</div><div class="a btn" style="left:1838px;top:993px;width:80px;height:25px;"></div><svg class="a" style="left:1849px;top:996px;" width="20" height="19" viewBox="0 0 20 19"><path d="M2 10 L6 8 L9 13 L17 1 L19 3 L9 18 z" fill="#3a8a3a"/></svg><div class="t" style="left:1868px;top:1000.0px;font-size:13px;color:#1a1a1a;letter-spacing:0.7px;">Apply</div><div class="a " style="left:1476px;top:1022px;width:446px;height:1px;background:#c8c8c8"></div><div class="a " style="left:1477px;top:1022px;width:110px;height:26px;background:#f7f7f7;border:1px solid #c2c2c2;border-top:none;border-radius:0 0 3px 3px"></div><div class="a " style="left:1587px;top:1022px;width:149px;height:24px;background:#dcdcdc;border:1px solid #c2c2c2;border-top:none;border-radius:0 0 3px 3px"></div><div class="t" style="left:1488px;top:1029.0px;font-size:13px;color:#222;letter-spacing:0.68px;">Layer Styling</div><div class="t" style="left:1598px;top:1028.0px;font-size:13px;color:#222;letter-spacing:0.68px;">Processing Toolbox</div><div class="a " style="left:1px;top:1050px;width:1921px;height:31px;background:#efefef"></div><div class="a spin" style="left:6px;top:1053px;width:269px;height:25px;border-color:#c4c4c4"></div><svg class="a" style="left:13px;top:1058px;" width="16" height="16" viewBox="0 0 16 16"><circle cx="6.5" cy="6.5" r="4.5" fill="none" stroke="#888" stroke-width="1.3"/><path d="M10 10 L14 14" stroke="#888" stroke-width="1.5"/></svg><div class="t" style="left:33px;top:1059.0px;font-size:13px;color:#8a8a8a;letter-spacing:0.5px;">Type to locate (Ctrl+K)</div><div class="t" style="left:283px;top:1060.7px;font-size:11px;color:#1a1a1a;letter-spacing:0.58px;">Saved project to: /home/bnhr/training/qgis/fb data for good/Module 3 - OSM and HRSL/Module 3 - OSM and HRSL.qgz</div><div class="t" style="left:1026px;top:1060.7px;font-size:11px;color:#1a1a1a;letter-spacing:0.55px;">Coordinate</div><div class="a spin" style="left:1090px;top:1054px;width:118px;height:23px;"></div><div class="t" style="left:1097px;top:1060.7px;font-size:11px;color:#1a1a1a;letter-spacing:0.55px;">120.4974,15.3058</div><svg class="a" style="left:1210px;top:1056px;" width="20" height="20" viewBox="0 0 20 20"><circle cx="8" cy="10" r="5" fill="none" stroke="#333" stroke-width="2.2" stroke-dasharray="2 1.5"/><path d="M12 4 L18 2" stroke="#333" stroke-width="1.5"/></svg><div class="t" style="left:1241px;top:1060.7px;font-size:11px;color:#1a1a1a;letter-spacing:0.55px;">Scale</div><div class="a spin" style="left:1274px;top:1054px;width:97px;height:23px;"></div><div class="t" style="left:1279px;top:1060.7px;font-size:11px;color:#1a1a1a;letter-spacing:0.55px;">1:223754</div><div class="a " style="left:1348px;top:1055px;width:1px;height:21px;background:#c8c8c8"></div><div class="a" style="left:1355px;top:1064px;width:0;height:0;border-left:4px solid transparent;border-right:4px solid transparent;border-top:4px solid #444"></div><svg class="a" style="left:1381px;top:1057px;" width="14" height="16" viewBox="0 0 14 16"><rect x="2" y="7" width="10" height="8" rx="1" fill="#555"/><path d="M4 7 V5 A3 3 0 0 1 10 5 V7" fill="none" stroke="#555" stroke-width="1.6"/></svg><div class="t" style="left:1404px;top:1060.7px;font-size:11px;color:#1a1a1a;letter-spacing:0.55px;">Magnifier</div><div class="a spin" style="left:1459px;top:1054px;width:98px;height:23px;"></div><div class="t" style="left:1464px;top:1060.7px;font-size:11px;color:#1a1a1a;letter-spacing:0.55px;">100%</div><div class="a" style="left:1541px;top:1055px;width:1px;height:21px;background:#c8c8c8"></div><svg class="a" style="left:1543px;top:1056px;" width="12" height="20" viewBox="0 0 12 20"><path d="M2 7 L6 3 L10 7z" fill="#444"/><path d="M2 13 L6 17 L10 13z" fill="#444"/></svg><div class="t" style="left:1566px;top:1060.7px;font-size:11px;color:#1a1a1a;letter-spacing:0.55px;">Rotation</div><div class="a spin" style="left:1622px;top:1054px;width:95px;height:23px;"></div><div class="t" style="left:1628px;top:1060.7px;font-size:11px;color:#1a1a1a;letter-spacing:0.55px;">0.0 °</div><div class="a" style="left:1701px;top:1055px;width:1px;height:21px;background:#c8c8c8"></div><svg class="a" style="left:1703px;top:1056px;" width="12" height="20" viewBox="0 0 12 20"><path d="M2 7 L6 3 L10 7z" fill="#444"/><path d="M2 13 L6 17 L10 13z" fill="#444"/></svg><div class="a chk" style="left:1723px;top:1058px"><svg class="a" style="left:1px;top:1px" width="12" height="12" viewBox="0 0 12 12"><path d="M2.2 6.2 L4.8 9.6 L9.8 1.8" fill="none" stroke="#111" stroke-width="1.6"/></svg></div><div class="t" style="left:1741px;top:1060.7px;font-size:11px;color:#1a1a1a;letter-spacing:0.55px;">Render</div><svg class="a" style="left:1795px;top:1057px;" width="16" height="16" viewBox="0 0 16 16"><circle cx="8" cy="8" r="6.5" fill="none" stroke="#666" stroke-width="1"/><path d="M1.5 8h13M8 1.5v13M3 4.5h10M3 11.5h10" stroke="#666" stroke-width="0.8"/><ellipse cx="8" cy="8" rx="3" ry="6.5" fill="none" stroke="#666" stroke-width="0.8"/></svg><div class="t" style="left:1811px;top:1060.7px;font-size:11px;color:#1a1a1a;letter-spacing:0.55px;">EPSG:4326</div><svg class="a" style="left:1895px;top:1057px;" width="20" height="18" viewBox="0 0 20 18"><path d="M10 2 C15 2 18 5 18 8.5 C18 12 15 15 10 15 L5 17 L6 13.5 C3 12.5 2 10.5 2 8.5 C2 5 5 2 10 2z" fill="#555"/><circle cx="6.5" cy="8.5" r="1.2" fill="#fff"/><circle cx="10" cy="8.5" r="1.2" fill="#fff"/><circle cx="13.5" cy="8.5" r="1.2" fill="#fff"/></svg></body></html>
